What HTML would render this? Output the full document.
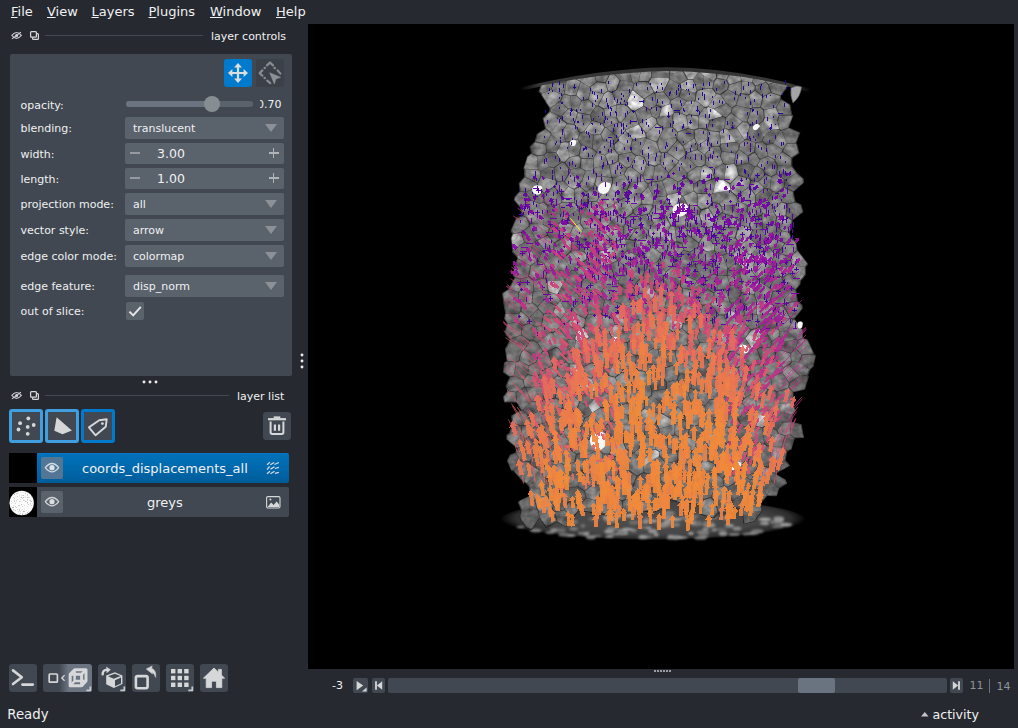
<!DOCTYPE html>
<html lang="en">
<head>
<meta charset="utf-8">
<title>napari</title>
<style>
*{box-sizing:border-box;margin:0;padding:0}
html,body{width:1018px;height:728px;overflow:hidden;background:#262930}
body{position:relative;font-family:"DejaVu Sans","Liberation Sans",sans-serif;color:#f0f1f2;font-size:11px;-webkit-font-smoothing:antialiased}
.abs{position:absolute}
.t{position:absolute;white-space:nowrap;line-height:1;margin-top:1px}
.menu{font-size:13px;top:4px}
.menu u{text-decoration:underline;text-underline-offset:0.6px;text-decoration-thickness:1px}
.panel{position:absolute;left:10px;top:54px;width:282px;height:322px;background:#414851;border-radius:2px}
.lbl{font-size:11px;left:20px}
.combo{position:absolute;left:125px;width:159px;height:22px;background:#5a626c;border-radius:2px}
.combo .t{left:8px;top:5px;font-size:11px}
.combo svg{position:absolute;left:140px;top:7px}
.spin{position:absolute;left:125px;width:159px;height:21px;background:#5a626c;border-radius:2px}
.spin .t{left:32px;top:4px;font-size:12.5px}
.btn{position:absolute;width:28px;height:28px;background:#414851;border-radius:3px}
.lbtn{position:absolute;top:409px;width:34px;height:34px;background:#414851;border:3px solid #3f9fe0;border-radius:3px}
.row{position:absolute;left:37px;width:252px;height:30px;border-radius:0 2px 2px 0}
.thumb{position:absolute;left:9px;width:28px;height:30px;background:#000}
.vis{position:absolute;left:4px;top:4px;width:22px;height:22px;border-radius:2px;background:#5a626c}
.lname{font-size:13px;top:8px}
svg{display:block;overflow:visible}
</style>
</head>
<body>
<!-- menu bar -->
<div class="t menu" style="left:11px"><u>F</u>ile</div>
<div class="t menu" style="left:47px"><u>V</u>iew</div>
<div class="t menu" style="left:91.5px"><u>L</u>ayers</div>
<div class="t menu" style="left:148.5px"><u>P</u>lugins</div>
<div class="t menu" style="left:210px"><u>W</u>indow</div>
<div class="t menu" style="left:276px"><u>H</u>elp</div>

<!-- ===== layer controls title bar ===== -->
<svg class="abs" style="left:11px;top:31px" width="12" height="10" viewBox="0 0 12 10">
  <path d="M0.8 4.45 Q5.6 -1.4 10.4 4.45 Q5.6 10.3 0.8 4.45Z" fill="none" stroke="#c9cacd" stroke-width="1.05"/>
  <circle cx="5.6" cy="4.45" r="1.55" fill="#d6d7d9"/>
  <path d="M0.9 7.9 L10 1.1" stroke="#d0d1d4" stroke-width="1.15"/>
</svg>
<svg class="abs" style="left:29px;top:30px" width="11" height="11" viewBox="0 0 11 11">
  <rect x="3.6" y="3.7" width="5.8" height="5.7" rx="0.9" fill="none" stroke="#d6d7da" stroke-width="1.25"/>
  <rect x="1.6" y="1.5" width="5.8" height="5.7" rx="0.9" fill="#262930" stroke="#d6d7da" stroke-width="1.25"/>
</svg>
<div class="abs" style="left:45px;top:35px;width:158px;height:1px;background:#414851"></div>
<div class="t" style="left:211px;top:30px;font-size:11px">layer controls</div>

<!-- ===== layer controls panel ===== -->
<div class="panel">
  <!-- mode buttons -->
  <div class="btn" style="left:214px;top:5px;background:#007acc">
    <svg width="28" height="28" viewBox="0 0 28 28"><g fill="#dcdde0">
      <path d="M14 4 L18 8.4 L15.1 8.4 L15.1 12.9 L19.6 12.9 L19.6 10 L24 14 L19.6 18 L19.6 15.1 L15.1 15.1 L15.1 19.6 L18 19.6 L14 24 L10 19.6 L12.9 19.6 L12.9 15.1 L8.4 15.1 L8.4 18 L4 14 L8.4 10 L8.4 12.9 L12.9 12.9 L12.9 8.4 L10 8.4Z"/>
    </g></svg>
  </div>
  <div class="btn" style="left:246px;top:5px;background:#3b4049">
    <svg width="28" height="28" viewBox="0 0 28 28">
      <g fill="none" stroke="#878b92" stroke-width="2.2" stroke-linecap="round" stroke-linejoin="round">
        <path d="M11 6.4 L14 3.5 L17 6.4"/><path d="M6.4 11.4 L3.6 14.1 L6.4 16.8"/>
        <path d="M21.6 11.4 L24.4 14.6"/><path d="M11.2 21.6 L14.2 24.2"/>
      </g>
      <g fill="#878b92"><circle cx="8.7" cy="8.9" r="1.25"/><circle cx="18.7" cy="8.9" r="1.25"/><circle cx="8.7" cy="19.1" r="1.25"/></g>
      <path d="M13.7 13.8 L24.6 18.3 L19.9 19.9 L18.3 25Z" fill="#8c9097" stroke="#8c9097" stroke-width=".6" stroke-linejoin="round"/>
    </svg>
  </div>

  <!-- opacity -->
  <div class="t lbl" style="left:10.5px;top:45px">opacity:</div>
  <div class="abs" style="left:116px;top:47px;width:127px;height:6px;border-radius:3px;background:#5a626c"></div>
  <div class="abs" style="left:116px;top:47px;width:86px;height:6px;border-radius:3px;background:#6a7380"></div>
  <div class="abs" style="left:194px;top:42px;width:16px;height:16px;border-radius:8px;background:#868e93"></div>
  <div class="abs" style="left:250px;top:43px;width:22px;height:14px;overflow:hidden"><div class="t" style="right:0.5px;top:1px;font-size:11px">0.70</div></div>

  <!-- blending -->
  <div class="t lbl" style="left:10.5px;top:68px">blending:</div>
  <div class="combo" style="left:115px;top:63px"><div class="t">translucent</div><svg width="12" height="8" viewBox="0 0 12 8"><path d="M0 0H12L6 8Z" fill="#8b9197"/></svg></div>

  <!-- width -->
  <div class="t lbl" style="left:10.5px;top:94px">width:</div>
  <div class="spin" style="left:115px;top:89px"><div class="t">3.00</div>
    <div class="abs" style="left:5px;top:9px;width:10px;height:1.8px;background:#959aa0"></div>
    <div class="abs" style="left:143.5px;top:8.9px;width:10px;height:1.7px;background:#b0b4b9"></div>
    <div class="abs" style="left:147.65px;top:4.75px;width:1.7px;height:10px;background:#b0b4b9"></div>
  </div>

  <!-- length -->
  <div class="t lbl" style="left:10.5px;top:119px">length:</div>
  <div class="spin" style="left:115px;top:114px"><div class="t">1.00</div>
    <div class="abs" style="left:5px;top:9px;width:10px;height:1.8px;background:#959aa0"></div>
    <div class="abs" style="left:143.5px;top:8.9px;width:10px;height:1.7px;background:#b0b4b9"></div>
    <div class="abs" style="left:147.65px;top:4.75px;width:1.7px;height:10px;background:#b0b4b9"></div>
  </div>

  <!-- projection mode -->
  <div class="t lbl" style="left:10.5px;top:144px">projection mode:</div>
  <div class="combo" style="left:115px;top:139px"><div class="t">all</div><svg width="12" height="8" viewBox="0 0 12 8"><path d="M0 0H12L6 8Z" fill="#8b9197"/></svg></div>

  <!-- vector style -->
  <div class="t lbl" style="left:10.5px;top:170px">vector style:</div>
  <div class="combo" style="left:115px;top:165px"><div class="t">arrow</div><svg width="12" height="8" viewBox="0 0 12 8"><path d="M0 0H12L6 8Z" fill="#8b9197"/></svg></div>

  <!-- edge color mode -->
  <div class="t lbl" style="left:10.5px;top:196px">edge color mode:</div>
  <div class="combo" style="left:115px;top:191px"><div class="t">colormap</div><svg width="12" height="8" viewBox="0 0 12 8"><path d="M0 0H12L6 8Z" fill="#8b9197"/></svg></div>

  <!-- edge feature -->
  <div class="t lbl" style="left:10.5px;top:226px">edge feature:</div>
  <div class="combo" style="left:115px;top:221px"><div class="t">disp_norm</div><svg width="12" height="8" viewBox="0 0 12 8"><path d="M0 0H12L6 8Z" fill="#8b9197"/></svg></div>

  <!-- out of slice -->
  <div class="t lbl" style="left:10.5px;top:251px">out of slice:</div>
  <div class="abs" style="left:116px;top:248px;width:18px;height:18px;border-radius:2px;background:#5a626c">
    <svg width="18" height="18" viewBox="0 0 18 18"><path d="M3.4 9.6 L7.2 13.4 L14.8 4.8" fill="none" stroke="#e4e5e7" stroke-width="2"/></svg>
  </div>
</div>

<!-- dock splitter handles -->
<svg class="abs" style="left:300px;top:353px" width="4" height="16" viewBox="0 0 4 16"><g fill="#eeeeef"><circle cx="2" cy="2" r="1.45"/><circle cx="2" cy="8" r="1.45"/><circle cx="2" cy="14" r="1.45"/></g></svg>
<svg class="abs" style="left:142px;top:380px" width="16" height="4" viewBox="0 0 16 4"><g fill="#eeeeef"><circle cx="2" cy="2" r="1.45"/><circle cx="8" cy="2" r="1.45"/><circle cx="14" cy="2" r="1.45"/></g></svg>

<!-- ===== layer list title bar ===== -->
<svg class="abs" style="left:11px;top:391px" width="12" height="10" viewBox="0 0 12 10">
  <path d="M0.8 4.45 Q5.6 -1.4 10.4 4.45 Q5.6 10.3 0.8 4.45Z" fill="none" stroke="#c9cacd" stroke-width="1.05"/>
  <circle cx="5.6" cy="4.45" r="1.55" fill="#d6d7d9"/>
  <path d="M0.9 7.9 L10 1.1" stroke="#d0d1d4" stroke-width="1.15"/>
</svg>
<svg class="abs" style="left:29px;top:390px" width="11" height="11" viewBox="0 0 11 11">
  <rect x="3.6" y="3.7" width="5.8" height="5.7" rx="0.9" fill="none" stroke="#d6d7da" stroke-width="1.25"/>
  <rect x="1.6" y="1.5" width="5.8" height="5.7" rx="0.9" fill="#262930" stroke="#d6d7da" stroke-width="1.25"/>
</svg>
<div class="abs" style="left:45px;top:395px;width:184px;height:1px;background:#414851"></div>
<div class="t" style="left:237px;top:390px;font-size:11px">layer list</div>

<!-- new-layer buttons -->
<div class="lbtn" style="left:9px">
  <svg width="28" height="28" viewBox="0 0 28 28" style="margin:0"><g fill="#d6d7d9">
    <circle cx="16.3" cy="6.4" r="1.9"/><circle cx="8.1" cy="11.2" r="1.9"/><circle cx="21.7" cy="13" r="1.9"/>
    <circle cx="15.7" cy="14.9" r="1.9"/><circle cx="6.5" cy="17.5" r="1.9"/><circle cx="15.7" cy="21.8" r="1.9"/>
  </g></svg>
</div>
<div class="lbtn" style="left:45px">
  <svg width="28" height="28" viewBox="0 0 28 28"><path d="M8.6 5.2 L23.9 18.4 L14.5 22.2 L6.3 18.8Z" fill="#d6d7d9"/></svg>
</div>
<div class="lbtn" style="left:81px;border-color:#007acc">
  <svg width="28" height="28" viewBox="0 0 28 28">
    <path d="M4.9 15.4 L15.2 8.3 L22.7 7.3 L21.7 14.8 L11.6 23.3Z" fill="none" stroke="#d6d7d9" stroke-width="1.9" stroke-linejoin="round"/>
    <circle cx="18.4" cy="11.6" r="1.4" fill="#d6d7d9"/>
  </svg>
</div>
<!-- delete button -->
<div class="btn" style="left:263px;top:412px">
  <svg width="28" height="28" viewBox="0 0 28 28">
    <path d="M5 7.2 H23" stroke="#d6d7d9" stroke-width="2.2"/>
    <path d="M10.7 5.4 H17.3" stroke="#d6d7d9" stroke-width="2"/>
    <path d="M7.6 9.6 V20.2 Q7.6 21.9 9.3 21.9 H18.7 Q20.4 21.9 20.4 20.2 V9.6" fill="none" stroke="#d6d7d9" stroke-width="2"/>
    <path d="M11.9 12.4 V18.8 M16.1 12.4 V18.8" stroke="#d6d7d9" stroke-width="2.2"/>
  </svg>
</div>

<!-- ===== layer rows ===== -->
<div class="thumb" style="top:453px"></div>
<div class="row" style="top:453px;background:linear-gradient(#0a79c8 0,#0071ba 5%,#0067aa 55%,#005c99 100%)">
  <div class="vis" style="background:#527694"><svg width="22" height="22" viewBox="0 0 22 22">
    <path d="M4.3 10.7 Q11 2.3 17.7 10.7 Q11 19.1 4.3 10.7Z" fill="none" stroke="#d3dbe3" stroke-width="1.35" stroke-linejoin="round"/>
    <circle cx="11" cy="10.7" r="2.6" fill="#dfe3e8"/></svg></div>
  <div class="t lname" style="left:45px">coords_displacements_all</div>
  <svg class="abs" style="left:229px;top:8px" width="14" height="14" viewBox="0 0 14 14"><g stroke="#d5dde6" stroke-width="1.25" fill="none">
    <path d="M1 3.7 L4 1.1 M4.3 3.7 L8.2 1.5 M8.5 3.5 L12.9 1.5"/>
    <path d="M1 8.6 L3.6 5.5 M4.5 8.1 L8.5 5.7 M8.9 7.5 L12.9 6.4"/>
    <path d="M1 12.8 L4 10.3 M4.5 12.8 L8.5 10.3 M8.9 12.3 L12.9 11.4"/>
  </g></svg>
</div>
<div class="thumb" style="top:487px">
  <svg width="28" height="30" viewBox="0 0 28 30"><defs><filter id="tn" x="0" y="0" width="1" height="1"><feTurbulence type="fractalNoise" baseFrequency="0.75" numOctaves="2" seed="5" result="n"/><feColorMatrix in="n" type="matrix" values="0 0 0 0 .45  0 0 0 0 .45  0 0 0 0 .45  5 0 0 0 -2.75"/><feComposite in2="SourceGraphic" operator="in"/></filter></defs>
    <circle cx="12.7" cy="16" r="12.2" fill="#fcfcfc"/><circle cx="12.7" cy="16" r="12.2" fill="#fff" filter="url(#tn)"/></svg>
</div>
<div class="row" style="top:487px;background:#414851">
  <div class="vis"><svg width="22" height="22" viewBox="0 0 22 22">
    <path d="M4.3 10.7 Q11 2.3 17.7 10.7 Q11 19.1 4.3 10.7Z" fill="none" stroke="#d2d4d7" stroke-width="1.35" stroke-linejoin="round"/>
    <circle cx="11" cy="10.7" r="2.6" fill="#dcdddf"/></svg></div>
  <div class="t lname" style="left:110px">greys</div>
  <svg class="abs" style="left:229px;top:9px" width="15" height="13" viewBox="0 0 15 13">
    <rect x="0.6" y="0.6" width="13.4" height="11.4" rx="1.4" fill="none" stroke="#d6d7d9" stroke-width="1.1"/>
    <path d="M1.6 11 L5.2 6.6 L7.6 9 L10.6 5.4 L13.2 8.4 V11Z" fill="#d6d7d9"/><circle cx="4.4" cy="3.6" r="1" fill="#d6d7d9"/>
  </svg>
</div>

<!-- ===== viewer buttons ===== -->
<div class="btn" style="left:9px;top:664px">
  <svg width="28" height="28" viewBox="0 0 28 28"><path d="M4 6.4 L12.8 13.2 L4 20" fill="none" stroke="#d6d7d9" stroke-width="2.6" stroke-linecap="round" stroke-linejoin="round"/><path d="M13.4 20.6 H23.8" stroke="#d6d7d9" stroke-width="2.6" stroke-linecap="round"/></svg>
</div>
<div class="btn" style="left:43px;top:664px;width:49px;background:linear-gradient(90deg,#414851 0,#414851 33%,#6a7380 52%,#6a7380 100%)">
  <svg width="49" height="28" viewBox="0 0 49 28">
    <rect x="6.2" y="10" width="8.2" height="8.2" rx="0.8" fill="none" stroke="#d6d7d9" stroke-width="1.7"/>
    <path d="M21.6 11.2 L18.8 14 L21.6 16.8" fill="none" stroke="#d6d7d9" stroke-width="1.3"/>
    <g fill="none" stroke="#d6d7d9" stroke-width="3" stroke-linejoin="round">
      <path d="M27.2 10.2 L31.6 5.8 H43 V17 L38.6 21.8 H27.2Z"/>
      <path d="M27.2 10.2 H38.6 V21.8 M38.6 10.2 L43 5.8"/>
      <path d="M31.6 5.8 V17 H43 M31.6 17 L27.2 21.8" stroke-width="2.5"/>
    </g>
    <path d="M47.3 22.4 V26.3 H43.3" fill="none" stroke="#c4c7cb" stroke-width="1.8"/>
  </svg>
</div>
<div class="btn" style="left:98px;top:664px">
  <svg width="28" height="28" viewBox="0 0 28 28">
    <path d="M8.2 11.6 L16.8 8.2 L24.4 11.4 V20 L15.8 24 L8.2 20.2Z" fill="#d6d7d9"/>
    <path d="M10 12.2 L16.8 9.8 L22.6 12 L15.8 14.8Z" fill="#414851"/>
    <path d="M17 16.2 L23 13.6 V19.4 L17 22.2Z" fill="#414851"/>
    <path d="M3.6 11.4 Q3 5.2 8.6 4.6 L8 2.4 L12.8 5.8 L8.6 9.2 L8.6 7 Q5.6 7 5.8 11.2Z" fill="#d6d7d9"/>
    <path d="M26.3 22.4 V26.3 H22.3" fill="none" stroke="#c4c7cb" stroke-width="1.8"/>
  </svg>
</div>
<div class="btn" style="left:132px;top:664px">
  <svg width="28" height="28" viewBox="0 0 28 28">
    <rect x="3.9" y="12.1" width="11.7" height="12.2" rx="1.7" fill="none" stroke="#d6d7d9" stroke-width="2.6"/>
    <path d="M14.2 5 L20.2 1.9 L19.7 4.2 Q24.6 6.4 23.7 13.4 Q22 9 19.8 8 L20.6 10Z" fill="#d6d7d9" stroke="#d6d7d9" stroke-width=".5" stroke-linejoin="round"/>
  </svg>
</div>
<div class="btn" style="left:166px;top:664px">
  <svg width="28" height="28" viewBox="0 0 28 28"><g fill="#d6d7d9">
    <rect x="5" y="5" width="4.4" height="4.4"/><rect x="11.6" y="5" width="4.4" height="4.4"/><rect x="18.2" y="5" width="4.4" height="4.4"/>
    <rect x="5" y="11.8" width="4.4" height="4.4"/><rect x="11.6" y="11.8" width="4.4" height="4.4"/><rect x="18.2" y="11.8" width="4.4" height="4.4"/>
    <rect x="5" y="18.6" width="4.4" height="4.4"/><rect x="11.6" y="18.6" width="4.4" height="4.4"/><rect x="18.2" y="18.6" width="4.4" height="4.4"/>
    <path d="M26.3 22.4 V26.3 H22.3" fill="none" stroke="#c4c7cb" stroke-width="1.8"/></g></svg>
</div>
<div class="btn" style="left:200px;top:664px">
  <svg width="28" height="28" viewBox="0 0 28 28"><path d="M14 4 L18.4 8.2 V5.4 H21.4 V11 L24.6 14.2 H21.8 V23.6 H16.4 V17.2 H11.6 V23.6 H6.2 V14.2 H3.4Z" fill="#d6d7d9" stroke="#d6d7d9" stroke-width="0.8" stroke-linejoin="round"/></svg>
</div>

<!-- status bar -->
<div class="t" style="left:7.3px;top:707px;font-size:13.3px">Ready</div>

<div class="abs" style="left:308px;top:24px;width:706px;height:645px;background:#000;overflow:hidden">
<svg width="706" height="645" viewBox="308 24 706 645">
<defs>
<radialGradient id="dg" cx="50%" cy="45%" r="50%"><stop offset="0" stop-color="#505050"/><stop offset=".72" stop-color="#454545"/><stop offset=".9" stop-color="#2e2e2e"/><stop offset="1" stop-color="#000"/></radialGradient>
<linearGradient id="rimL" x1="0" x2="1"><stop offset="0" stop-color="#000"/><stop offset=".5" stop-color="#555"/><stop offset="1" stop-color="#8a8a8a"/></linearGradient>
<linearGradient id="rimR" x1="1" x2="0"><stop offset="0" stop-color="#000"/><stop offset=".45" stop-color="#5a5a5a"/><stop offset="1" stop-color="#666"/></linearGradient>
<filter id="b1" x="-5%" y="-5%" width="110%" height="110%"><feGaussianBlur stdDeviation=".7"/></filter>
<filter id="b3" x="-5%" y="-20%" width="110%" height="140%"><feGaussianBlur stdDeviation=".8"/></filter>
<filter id="b2" x="-5%" y="-5%" width="110%" height="110%"><feGaussianBlur stdDeviation="1.7"/></filter>
<filter id="b0" x="-2%" y="-2%" width="104%" height="104%" color-interpolation-filters="sRGB"><feGaussianBlur stdDeviation=".6" result="s"/><feTurbulence type="fractalNoise" baseFrequency=".11 .13" numOctaves="3" seed="11" result="n"/><feColorMatrix in="n" type="matrix" values=".33 .33 .33 0 0  .33 .33 .33 0 0  .33 .33 .33 0 0  0 0 0 0 1" result="g"/><feComposite in="s" in2="g" operator="arithmetic" k1="1.5" k2=".25" k3="0" k4="0"/></filter>
<clipPath id="sc"><path d="M537 88L538 110L538 128L533 142L532 160L525 176L519 191L514 205L512 225L511 245L509 274L504.6 290L503 317L504.6 349L505.5 379L509.5 408L507.5 428L509.5 451L511.4 459L518.3 489L522 503L514 514L518 523L529 526L545 523L575 518L610 513L650 510L700 510L735 514L746 521L752 530L758 526L762 514L769 508.6L779.8 489L785.7 469.3L792 451L801.5 427.9L803.4 404.3L800.5 388.6L807.3 369L806.4 329.6L805.4 321.5L804.4 307.7L798.5 290L801.5 274.3L807.3 254.7L800.5 233L795.6 209.5L796.5 191L795.6 160L793.2 128.6L790.6 107L794 96L797 88L793 81.7L770 77L735 72.3L700 70L667 69.2L630 70.3L600 73L570 77L541 81.7Z"/></clipPath>
<clipPath id="tc"><path d="M470 94 L522 89.4 Q600 72.4 667 71 Q740 71.9 809 90.9 L850 94 V570 H470Z"/></clipPath>
<linearGradient id="band" gradientUnits="userSpaceOnUse" x1="520" x2="811"><stop offset="0" stop-color="#000"/><stop offset=".07" stop-color="#3a3a3a"/><stop offset=".5" stop-color="#303030"/><stop offset=".93" stop-color="#3a3a3a"/><stop offset="1" stop-color="#000"/></linearGradient>
</defs>
<!-- bottom platen slice -->
<ellipse cx="653" cy="520.5" rx="153" ry="22" fill="url(#dg)"/>
<g filter="url(#b3)"><ellipse cx="703.1" cy="532.4" rx="6.3" ry="2.2" fill="#7e7e7e"/><ellipse cx="777.2" cy="523.6" rx="3.3" ry="1" fill="#a1a1a1"/><ellipse cx="646.2" cy="536.6" rx="5.5" ry="1.9" fill="#6f6f6f"/><ellipse cx="696.4" cy="524.3" rx="6.4" ry="1.5" fill="#8a8a8a"/><ellipse cx="596.9" cy="535.7" rx="4.6" ry="1.1" fill="#717171"/><ellipse cx="737" cy="528.6" rx="4.5" ry="2.1" fill="#888888"/><ellipse cx="786" cy="524.6" rx="6.4" ry="1.9" fill="#8f8f8f"/><ellipse cx="668.7" cy="513.3" rx="6" ry="2.3" fill="#959595"/><ellipse cx="643.2" cy="527.5" rx="3.9" ry="1.3" fill="#727272"/><ellipse cx="675.6" cy="537.9" rx="3" ry="1.5" fill="#6f6f6f"/><ellipse cx="720.5" cy="529.4" rx="6.4" ry="1.1" fill="#6f6f6f"/><ellipse cx="672.2" cy="538.1" rx="6" ry="1.5" fill="#6e6e6e"/><ellipse cx="662.3" cy="518.1" rx="5.4" ry="1.4" fill="#727272"/><ellipse cx="653.2" cy="520.9" rx="4.4" ry="1.5" fill="#a2a2a2"/><ellipse cx="773.9" cy="522.2" rx="3.6" ry="1.9" fill="#818181"/><ellipse cx="609.1" cy="537" rx="4.2" ry="1.1" fill="#696969"/><ellipse cx="611.9" cy="528.8" rx="5.4" ry="2" fill="#828282"/><ellipse cx="693.7" cy="518.2" rx="2.7" ry="1.4" fill="#7c7c7c"/><ellipse cx="714.2" cy="529.8" rx="2.6" ry="1.4" fill="#959595"/><ellipse cx="569.9" cy="535.4" rx="5.9" ry="1.4" fill="#9e9e9e"/><ellipse cx="695.4" cy="522.4" rx="5.5" ry="1.7" fill="#959595"/><ellipse cx="535.7" cy="530.3" rx="5.9" ry="1.9" fill="#828282"/><ellipse cx="572.5" cy="521.9" rx="5.7" ry="2.2" fill="#787878"/><ellipse cx="606.4" cy="517.8" rx="3.7" ry="2.3" fill="#8f8f8f"/><ellipse cx="725.5" cy="518.1" rx="3.7" ry="1.8" fill="#8d8d8d"/><ellipse cx="673.9" cy="536.6" rx="5" ry="1.7" fill="#727272"/><ellipse cx="613.7" cy="528.6" rx="5" ry="1.6" fill="#7d7d7d"/><ellipse cx="609.9" cy="536" rx="3.6" ry="1.1" fill="#9e9e9e"/><ellipse cx="705.6" cy="525" rx="2.7" ry="1.2" fill="#909090"/><ellipse cx="563.7" cy="534.5" rx="5.6" ry="2" fill="#6e6e6e"/><ellipse cx="585.8" cy="534" rx="3.3" ry="1.9" fill="#838383"/><ellipse cx="586.6" cy="533.1" rx="3" ry="1.1" fill="#a2a2a2"/><ellipse cx="622.7" cy="530.6" rx="4.8" ry="1.4" fill="#a1a1a1"/><ellipse cx="661.4" cy="525.2" rx="4.3" ry="2.2" fill="#9e9e9e"/><ellipse cx="723" cy="533.5" rx="4.2" ry="2.3" fill="#919191"/><ellipse cx="709.9" cy="525.3" rx="5.4" ry="2.1" fill="#9b9b9b"/><ellipse cx="591.3" cy="519.1" rx="2.6" ry="1.3" fill="#777777"/><ellipse cx="764.9" cy="519.2" rx="6.3" ry="1.8" fill="#a1a1a1"/><ellipse cx="649.8" cy="536.8" rx="3.6" ry="1.1" fill="#6c6c6c"/><ellipse cx="647.4" cy="519.5" rx="3.9" ry="2.2" fill="#737373"/><ellipse cx="622.3" cy="533.2" rx="6.2" ry="1.7" fill="#999999"/><ellipse cx="633.7" cy="530.3" rx="3" ry="1.9" fill="#828282"/><ellipse cx="684.3" cy="517.7" rx="4.1" ry="1.3" fill="#818181"/><ellipse cx="694.9" cy="516.2" rx="4.3" ry="1.3" fill="#767676"/><ellipse cx="630.2" cy="515.8" rx="5.9" ry="1.8" fill="#a3a3a3"/><ellipse cx="643.3" cy="537.3" rx="5.7" ry="1.3" fill="#888888"/><ellipse cx="664.8" cy="525.9" rx="6.4" ry="1.6" fill="#727272"/><ellipse cx="652.7" cy="531.2" rx="4.5" ry="2.1" fill="#949494"/><ellipse cx="689.2" cy="519.8" rx="4.5" ry="1.4" fill="#a0a0a0"/><ellipse cx="555.8" cy="530" rx="5.8" ry="2" fill="#8b8b8b"/><ellipse cx="621.4" cy="532.2" rx="4" ry="1.6" fill="#757575"/><ellipse cx="765.5" cy="523.3" rx="3.5" ry="1.9" fill="#969696"/><ellipse cx="778.6" cy="518.4" rx="5.2" ry="2.1" fill="#8b8b8b"/><ellipse cx="582.8" cy="525.9" rx="2.5" ry="1.8" fill="#737373"/><ellipse cx="669.1" cy="520.3" rx="4.9" ry="1.6" fill="#929292"/><ellipse cx="639.5" cy="522.6" rx="4.1" ry="1.1" fill="#787878"/><ellipse cx="709.5" cy="523.7" rx="4.8" ry="1.7" fill="#868686"/><ellipse cx="645.8" cy="521.8" rx="3.1" ry="2" fill="#919191"/><ellipse cx="777.7" cy="526.7" rx="5.7" ry="1.1" fill="#7c7c7c"/><ellipse cx="700.5" cy="538" rx="6.4" ry="1.6" fill="#828282"/><ellipse cx="648.5" cy="527.9" rx="3" ry="1.4" fill="#9a9a9a"/><ellipse cx="581.2" cy="533.3" rx="3.5" ry="1.3" fill="#828282"/><ellipse cx="573.6" cy="528.8" rx="4.5" ry="1.9" fill="#797979"/><ellipse cx="590.9" cy="537.2" rx="4.8" ry="2.1" fill="#7f7f7f"/><ellipse cx="752.3" cy="533.5" rx="6.4" ry="1.4" fill="#919191"/><ellipse cx="682.2" cy="537.4" rx="5.4" ry="1.3" fill="#828282"/><ellipse cx="662.4" cy="526" rx="5.1" ry="1.7" fill="#868686"/><ellipse cx="616.8" cy="517.1" rx="4.4" ry="1.4" fill="#929292"/><ellipse cx="757.3" cy="531.2" rx="6.2" ry="2.3" fill="#767676"/><ellipse cx="712.8" cy="517.8" rx="5.2" ry="1.8" fill="#707070"/><ellipse cx="656.2" cy="534.7" rx="2.6" ry="1.9" fill="#939393"/><ellipse cx="763.4" cy="523.4" rx="3.5" ry="1.3" fill="#989898"/><ellipse cx="705.6" cy="529.1" rx="3.2" ry="1.1" fill="#a0a0a0"/><ellipse cx="676.4" cy="537.2" rx="4.2" ry="2.1" fill="#8a8a8a"/><ellipse cx="550" cy="532.5" rx="4.4" ry="1.2" fill="#818181"/><ellipse cx="666.7" cy="517.3" rx="5.5" ry="1.2" fill="#949494"/><ellipse cx="627.4" cy="529.2" rx="5.7" ry="1.5" fill="#a2a2a2"/><ellipse cx="670.8" cy="536.5" rx="3.3" ry="1.8" fill="#999999"/><ellipse cx="612.3" cy="518.1" rx="6.3" ry="2.3" fill="#a2a2a2"/><ellipse cx="611.1" cy="521.4" rx="6" ry="1.2" fill="#8f8f8f"/><ellipse cx="703.5" cy="535.9" rx="5.4" ry="1.1" fill="#777777"/><ellipse cx="746.4" cy="534" rx="3.9" ry="1.3" fill="#7c7c7c"/><ellipse cx="633.8" cy="522.6" rx="4.8" ry="2" fill="#707070"/><ellipse cx="668.6" cy="513.3" rx="5.5" ry="1.2" fill="#747474"/><ellipse cx="680.3" cy="537.6" rx="2.8" ry="1.5" fill="#a2a2a2"/><ellipse cx="611.4" cy="531.4" rx="3.2" ry="1.2" fill="#717171"/><ellipse cx="595" cy="519.3" rx="4.4" ry="1.4" fill="#6e6e6e"/><ellipse cx="729.4" cy="525.6" rx="4.4" ry="1.9" fill="#979797"/><ellipse cx="734.2" cy="534.4" rx="5.5" ry="1.1" fill="#929292"/><ellipse cx="561" cy="530.1" rx="5.1" ry="2.2" fill="#6b6b6b"/><ellipse cx="690.9" cy="533.4" rx="2.8" ry="1.6" fill="#9f9f9f"/><ellipse cx="666.5" cy="523" rx="3.9" ry="1.4" fill="#9e9e9e"/><ellipse cx="698.1" cy="522.9" rx="3.3" ry="2.1" fill="#717171"/><ellipse cx="705.8" cy="523.7" rx="2.8" ry="1.8" fill="#848484"/><ellipse cx="608.9" cy="531.4" rx="4.5" ry="2" fill="#989898"/><ellipse cx="777.6" cy="522.9" rx="5.9" ry="1.2" fill="#6b6b6b"/><ellipse cx="520.7" cy="527" rx="4" ry="1.1" fill="#909090"/><ellipse cx="616.4" cy="516.6" rx="3.6" ry="1.9" fill="#9a9a9a"/><ellipse cx="675.7" cy="519.4" rx="6.4" ry="1.6" fill="#a0a0a0"/><ellipse cx="785.3" cy="524.5" rx="4.4" ry="1.5" fill="#9f9f9f"/><ellipse cx="707.1" cy="522.8" rx="4.1" ry="2.1" fill="#727272"/><ellipse cx="565.9" cy="525" rx="3.9" ry="1.1" fill="#777777"/><ellipse cx="670.5" cy="514.3" rx="4" ry="1.3" fill="#7c7c7c"/><ellipse cx="631.4" cy="514.6" rx="3.6" ry="2" fill="#a2a2a2"/><ellipse cx="616.1" cy="534.3" rx="4.6" ry="1" fill="#848484"/><ellipse cx="778.2" cy="519.9" rx="3.2" ry="2.1" fill="#6b6b6b"/><ellipse cx="779.1" cy="520.1" rx="5" ry="2.1" fill="#959595"/><ellipse cx="642.6" cy="536.9" rx="3.9" ry="2.1" fill="#969696"/><ellipse cx="674.9" cy="524.7" rx="5.2" ry="2.1" fill="#7c7c7c"/></g>
<!-- top rim -->
<path d="M520 87.4 Q600 68.4 667 67.2 Q740 68.1 811 89 L809 92 Q740 73 667 72 Q600 73.4 522 90.4Z" fill="url(#band)"/>
<path d="M791 88 Q797 84.6 801.5 87 Q801 96 793 103 Q790 96 791 88Z" fill="#a4a4a4" stroke="#555" stroke-width=".6"/>
<!-- body -->
<g clip-path="url(#tc)"><g filter="url(#b0)">
<path fill="#3f3f3f" stroke="#3f3f3f" stroke-width="1.2" stroke-linejoin="round" d="M637.4 57.6L632.3 69.2L629.7 71.1L622.5 65.6L625.5 54L626.5 53.1L633.3 54.4ZM637.4 57.6L632.3 69.2L641.3 68.6L647.6 61.2ZM649.1 61.1L651 66.4L669.7 74.4L669.8 67.6L663.8 61.2L650.1 60ZM669.7 74.4L669.8 74.5L683.1 70.6L687.8 61.7L686.1 58L678.4 58.7L669.8 67.6ZM542.3 83.3L551.7 78.2L550.5 71.3L542.8 72ZM551.7 78.2L553.6 82.4L566.1 81.8L570.5 76.2L569.2 72L563.8 68.3L554.2 67.6L550.5 71.3ZM593.3 65.6L577.6 63.2L569.2 72L570.5 76.2L580.4 81.4L593 66.8ZM593 66.8L580.4 81.4L580.4 81.5L589.8 87.1L596.6 82ZM593.9 65.2L609 69.4L611.3 71.6L605.7 83L596.6 82L593 66.8L593.3 65.6L593.8 65.2ZM629.7 71.1L622.5 65.6L612.1 71.6L619.9 79.9L632.5 82.2ZM629.7 71.1L632.3 69.2L641.3 68.6L638.5 81.8L633.9 83.6L632.5 82.2ZM648.2 81.8L638.5 81.8L641.3 68.6L647.6 61.2L649.1 61.1L651 66.4L651.2 77.5ZM651.2 77.5L651 66.4L669.7 74.4L669.8 74.5L669.4 77.9ZM669.7 78.9L679.7 83.9L688 79.6L683.1 70.6L669.8 74.5L669.4 77.9ZM693.1 79.7L688 79.6L683.1 70.6L687.8 61.7L699.1 69.8L699 71.2ZM716.9 71.6L705.7 64.7L699.1 69.8L699 71.2L703 75.1L713.7 81.5L716.6 78ZM732.4 68.9L726.4 80.2L716.6 78L716.9 71.6L722.4 67.5ZM728.7 85.2L726.4 80.2L732.4 68.9L733 68.7L737.2 69.9L739.6 72.8L741.4 80.9L741.4 80.9ZM739.6 72.8L756.7 69.4L752.3 82.4L741.4 80.9ZM756.7 69.4L752.3 82.4L755.2 86.2L765.9 82.2L766.3 72.5L757.7 68.5ZM765.9 82.2L766.3 72.5L771.4 70.6L775.1 72.1L779.6 79.8L768.1 84.6ZM791.1 81.2L787.8 85.5L779.6 79.8L775.1 72.1L785.8 67.3L794.1 71.4ZM541.6 93.7L550.8 89.6L553.6 82.4L551.7 78.2L542.3 83.3L539.1 91.5ZM563 95L550.8 89.6L553.6 82.4L566.1 81.8L564.3 94.2ZM564.3 94.2L570.5 95.8L575.8 95.3L580.4 81.5L580.4 81.4L570.5 76.2L566.1 81.8ZM581.8 100.8L588.4 99.2L590.6 90.3L589.8 87.1L580.4 81.5L575.8 95.3ZM608.3 91L605.7 83L596.6 82L589.8 87.1L590.6 90.3L604.1 93.7ZM619.9 79.9L616 90.1L611.9 92.6L608.3 91L605.7 83L611.3 71.6L612.1 71.6ZM632.5 82.2L633.9 83.6L632.6 89.6L631.7 90.5L616 90.1L619.9 79.9ZM654.7 92.6L644.3 99.1L632.6 89.6L633.9 83.6L638.5 81.8L648.2 81.8ZM654.8 92.6L663.4 91.7L669.7 78.9L669.4 77.9L651.2 77.5L648.2 81.8L654.7 92.6ZM669.7 78.9L679.7 83.9L680.9 88.8L678.7 96.5L670.4 100.5L663.4 91.7ZM680.9 88.8L696 93.2L697.3 90.6L693.1 79.7L688 79.6L679.7 83.9ZM697.3 90.6L693.1 79.7L699 71.2L703 75.1L704.4 88.7ZM712.7 88.3L713.7 81.5L703 75.1L704.4 88.7ZM728.7 85.2L726.4 80.2L716.6 78L713.7 81.5L712.7 88.3L716.6 93.7L720.4 94.2L727.6 89.3ZM728.7 85.2L741.4 80.9L741.1 93.8L739 95.4L727.6 89.3ZM741.1 93.8L748.7 94.9L755 90L755.2 86.2L752.3 82.4L741.4 80.9L741.4 80.9ZM755 90L755.2 86.2L765.9 82.2L768.1 84.6L770.9 92.5L762.9 96.9ZM780.2 95.7L770.9 92.5L768.1 84.6L779.6 79.8L787.8 85.5L787.8 85.8ZM541.9 95.3L550.2 108.5L560.7 101L563 95L550.8 89.6L541.6 93.7ZM563 95L560.7 101L568.4 109.1L571.4 109.1L570.5 95.8L564.3 94.2ZM570.5 95.8L575.8 95.3L581.8 100.8L577.3 111.2L571.4 109.1ZM598 105.9L596.5 106L588.4 99.2L590.6 90.3L604.1 93.7ZM603.9 109.3L598 105.9L604.1 93.7L608.3 91L611.9 92.6L617.1 104.6L616.9 104.8ZM611.9 92.6L616 90.1L631.7 90.5L625.9 104.3L617.1 104.6ZM631.7 90.5L625.9 104.3L631.5 110.1L634.8 111.2L643.5 106.2L644.3 99.1L632.6 89.6ZM654.8 92.6L656.3 105.3L649.6 109.9L643.5 106.2L644.3 99.1L654.7 92.6ZM654.8 92.6L656.3 105.3L661.5 106.9L670.1 103.7L670.4 100.5L663.4 91.7ZM678.7 96.5L687.1 100.9L678.6 112.3L674.3 112.5L670.1 103.7L670.4 100.5ZM680.9 88.8L696 93.2L695.2 100.5L694.9 100.7L687.1 100.9L678.7 96.5ZM696 93.2L695.2 100.5L704.3 107.2L706.7 107.4L707.9 106.9L716.6 93.7L712.7 88.3L704.4 88.7L697.3 90.6ZM707.9 106.9L713.2 109L726.5 103.1L720.4 94.2L716.6 93.7ZM727.6 89.3L720.4 94.2L726.5 103.1L732.1 108.1L735.9 105.3L739 95.4ZM739 95.4L735.9 105.3L751.3 108.8L753 107.7L748.7 94.9L741.1 93.8ZM755 90L762.9 96.9L760.5 107.5L753 107.7L748.7 94.9ZM780.8 99.5L776 107.3L763.4 109.9L760.5 107.5L762.9 96.9L770.9 92.5L780.2 95.7ZM549.9 111.4L560.7 116.8L568.4 109.1L560.7 101L550.2 108.5ZM562.3 119.8L560.7 116.8L568.4 109.1L571.4 109.1L577.3 111.2L577.8 112.4L574.4 124.5L567 123.5ZM577.3 111.2L577.8 112.4L590.3 114.9L596.5 106L588.4 99.2L581.8 100.8ZM603.9 109.3L598 105.9L596.5 106L590.3 114.9L591.8 120.5L603.1 123.9L605 116.5ZM603.9 109.3L616.9 104.8L616.7 117L605 116.5ZM616.9 104.8L617.1 104.6L625.9 104.3L631.5 110.1L620.9 123L619.3 122.3L616.7 117ZM643.5 106.2L649.6 109.9L652.2 116.2L638.8 123.8L634.8 111.2ZM656.5 118.8L658.7 117.1L661.5 106.9L656.3 105.3L649.6 109.9L652.2 116.2ZM661.5 106.9L658.7 117.1L673.2 114.5L674.3 112.5L670.1 103.7ZM687.1 100.9L678.6 112.3L686.6 115.5L687.7 114.8L694.9 100.7ZM695.2 100.5L694.9 100.7L687.7 114.8L698.4 116L704.3 107.2ZM706.7 107.4L709.6 120.5L723.1 116.6L713.2 109L707.9 106.9ZM725.7 117.4L731.1 112.3L732.1 108.1L726.5 103.1L713.2 109L723.1 116.6ZM747.1 122.2L742.9 121.6L731.1 112.3L732.1 108.1L735.9 105.3L751.3 108.8ZM763 120.9L764.2 117.5L763.4 109.9L760.5 107.5L753 107.7L751.3 108.8L747.1 122.2L749.4 125.1L758.1 124.8ZM777.6 120.5L764.2 117.5L763.4 109.9L776 107.3L779.3 115.1ZM789.8 105L791.7 114.8L779.3 115.1L776 107.3L780.8 99.5ZM545.8 129L549.9 132.2L562.3 119.8L560.7 116.8L549.9 111.4L543.2 118.5ZM550.7 133.5L549.9 132.2L562.3 119.8L567 123.5L563.5 128.6ZM591.8 120.5L590.3 114.9L577.8 112.4L574.4 124.5L580.1 132.9L583.3 132ZM600.7 134.3L593.8 134.8L583.3 132L591.8 120.5L603.1 123.9L604.7 127.3ZM605 116.5L603.1 123.9L604.7 127.3L605.4 127.4L619.3 122.3L616.7 117ZM618.3 138.1L625.4 130.7L625.5 130.1L620.9 123L619.3 122.3L605.4 127.4ZM634.8 111.2L638.8 123.8L638.7 124.4L625.5 130.1L620.9 123L631.5 110.1ZM656.5 118.8L652.2 116.2L638.8 123.8L638.7 124.4L645.9 133.4L657.2 123ZM656.5 118.8L658.7 117.1L673.2 114.5L673 127.8L663.6 128.2L657.2 123ZM673 127.8L677.5 132.4L688.5 128.5L686.6 115.5L678.6 112.3L674.3 112.5L673.2 114.5ZM698.9 128.4L698.4 116L687.7 114.8L686.6 115.5L688.5 128.5L694.4 130.2ZM706.7 107.4L709.6 120.5L707.2 129.5L698.9 128.4L698.4 116L704.3 107.2ZM724.7 128.2L725.7 117.4L723.1 116.6L709.6 120.5L707.2 129.5L708.1 130.3L719.6 131.6ZM727.5 129.5L724.7 128.2L725.7 117.4L731.1 112.3L742.9 121.6L736.3 127.8ZM736.3 127.8L742.9 121.6L747.1 122.2L749.4 125.1L746.9 139.5L744.9 140.3ZM763.4 137.4L758.1 124.8L763 120.9L772.1 130ZM779.6 129.3L777.6 120.5L764.2 117.5L763 120.9L772.1 130ZM780.9 130.2L781.3 130.3L788.1 127.8L792.7 115.8L791.7 114.8L779.3 115.1L777.6 120.5L779.6 129.3ZM537.2 134.3L535.2 141.9L545.9 144.2L551.1 134.5L550.7 133.5L549.9 132.2L545.8 129ZM550.7 133.5L563.5 128.6L565.6 141.7L561.5 142.4L551.1 134.5ZM565.6 141.7L568.1 141.9L577.8 138.9L580.1 132.9L574.4 124.5L567 123.5L563.5 128.6ZM592.8 149.3L580.9 144.6L577.8 138.9L580.1 132.9L583.3 132L593.8 134.8ZM603.1 140.4L596.3 152.1L592.8 149.3L593.8 134.8L600.7 134.3ZM617.6 141L614.5 144.3L603.1 140.4L600.7 134.3L604.7 127.3L605.4 127.4L618.3 138.1ZM617.6 141L630.4 148L632.7 139.5L625.4 130.7L618.3 138.1ZM638.7 124.4L625.5 130.1L625.4 130.7L632.7 139.5L646.4 137.3L645.9 133.4ZM657.2 123L663.6 128.2L657 141.6L656.7 142L646.8 137.9L646.4 137.3L645.9 133.4ZM657 141.6L663.6 128.2L673 127.8L677.5 132.4L676.8 137.3ZM676.8 137.3L677.5 132.4L688.5 128.5L694.4 130.2L694.4 138L682.6 145.8L677.3 139.8ZM707.2 129.5L698.9 128.4L694.4 130.2L694.4 138L697.7 145.9L707.4 139.5L708.1 130.3ZM720.9 144.3L719.6 131.6L708.1 130.3L707.4 139.5L711.7 146.7L719.8 146.3ZM720.9 144.3L719.6 131.6L724.7 128.2L727.5 129.5L736.7 142.5ZM739.5 143.9L744.9 140.3L736.3 127.8L727.5 129.5L736.7 142.5ZM746.9 139.5L749.4 125.1L758.1 124.8L763.4 137.4L762.2 141.4L755.8 142.8ZM763.4 137.4L772.1 130L779.6 129.3L780.9 130.2L773 143.6L766 144.4L762.2 141.4ZM780.9 130.2L781.3 130.3L786.9 143.9L782.8 149.7L773 143.6ZM781.3 130.3L786.9 143.9L795.7 143.1L799.7 132.9L788.1 127.8ZM543.9 154.6L537.1 155.5L531.6 153.4L530.1 146.7L535.2 141.9L545.9 144.2L546.9 152.1ZM556.2 152.7L561.5 142.4L551.1 134.5L545.9 144.2L546.9 152.1ZM561.8 162.1L564.6 162.6L569 157.9L568.1 141.9L565.6 141.7L561.5 142.4L556.2 152.7ZM580.9 144.6L577.8 138.9L568.1 141.9L569 157.9L578.8 155.2ZM592.8 149.3L580.9 144.6L578.8 155.2L581 158.2L593.2 158.6L596.4 152.5L596.3 152.1ZM614.5 144.3L614.1 148.9L604.7 155.1L596.4 152.5L596.3 152.1L603.1 140.4ZM617.6 141L630.4 148L631.9 152.2L618.6 154.5L614.1 148.9L614.5 144.3ZM631.9 152.2L635.9 155.6L638.8 155.2L646.8 137.9L646.4 137.3L632.7 139.5L630.4 148ZM638.8 155.2L646.8 137.9L656.7 142L659.7 151.3L643.8 157.6ZM659.7 151.3L656.7 142L657 141.6L676.8 137.3L677.3 139.8L666.4 152.5L661.2 152.5ZM666.4 152.5L678.5 160.8L685.1 155.1L685.8 153.3L682.6 145.8L677.3 139.8ZM694.4 138L682.6 145.8L685.8 153.3L697.3 149.5L697.7 145.9ZM707.4 139.5L711.7 146.7L704.7 155.1L697.3 149.5L697.7 145.9ZM719.8 146.3L711.7 146.7L704.7 155.1L705.7 158.7L720.5 155.8L721.5 151.2ZM720.9 144.3L736.7 142.5L739.5 143.9L738.7 149.4L736.2 153L721.5 151.2L719.8 146.3ZM739.5 143.9L744.9 140.3L746.9 139.5L755.8 142.8L754.8 151.9L747.9 156L738.7 149.4ZM754.8 151.9L760.2 159.7L768 156.4L766 144.4L762.2 141.4L755.8 142.8ZM766 144.4L768 156.4L775 160L782.7 151.6L782.8 149.7L773 143.6ZM782.8 149.7L786.9 143.9L795.7 143.1L796.6 144.3L798.9 153L791.7 157.8L782.7 151.6ZM538.4 169.7L537.1 155.5L531.6 153.4L527.8 156.8L524 168.4L524.5 169.2ZM549.1 167.1L540.6 171.6L538.4 169.7L537.1 155.5L543.9 154.6ZM549.1 167.1L543.9 154.6L546.9 152.1L556.2 152.7L561.8 162.1L553.9 167.9ZM570.1 169.8L580.1 167.6L581 158.2L578.8 155.2L569 157.9L564.6 162.6ZM585.5 170.9L580.1 167.6L581 158.2L593.2 158.6L593.8 168.4L593.3 169.6ZM596.4 152.5L604.7 155.1L608.9 164.8L593.8 168.4L593.2 158.6ZM614.1 148.9L604.7 155.1L608.9 164.8L609.3 165.1L617.9 161.2L618.6 154.5ZM631.9 152.2L635.9 155.6L630.1 166.8L627.1 168.2L617.9 161.2L618.6 154.5ZM643.1 176.2L630.1 166.8L635.9 155.6L638.8 155.2L643.8 157.6L646.7 163.5ZM646.7 163.5L643.8 157.6L659.7 151.3L661.2 152.5L660 163.8L655 165.8ZM661.2 152.5L660 163.8L668.4 172.8L678.2 162.3L678.5 160.8L666.4 152.5ZM687.4 173.4L678.2 162.3L678.5 160.8L685.1 155.1L697.1 166.6ZM697.1 166.6L685.1 155.1L685.8 153.3L697.3 149.5L704.7 155.1L705.7 158.7L704.9 164.8L701.5 166.7ZM723.7 163.5L711.9 169.4L704.9 164.8L705.7 158.7L720.5 155.8ZM736.2 153L734.4 163.6L726.1 164.4L723.7 163.5L720.5 155.8L721.5 151.2ZM738.7 149.4L747.9 156L748.9 162.9L736.4 165.7L734.4 163.6L736.2 153ZM754.8 151.9L760.2 159.7L756.8 165.9L754.9 166.5L748.9 162.9L747.9 156ZM763.5 170.3L756.8 165.9L760.2 159.7L768 156.4L775 160L775.2 160.9ZM775.2 160.9L775 160L782.7 151.6L791.7 157.8L791.8 166.4L777.3 164.8ZM540.6 171.6L540.7 176.6L537.4 183.4L524.8 176.8L524.5 169.2L538.4 169.7ZM549.1 167.1L540.6 171.6L540.7 176.6L555.6 180L553.9 167.9ZM553.9 167.9L555.6 180L556.8 181.9L564.2 181.3L569.8 172L570.1 169.8L564.6 162.6L561.8 162.1ZM585.5 170.9L580.1 167.6L570.1 169.8L569.8 172L580.7 182.2L581.4 181.6ZM594.5 183.7L581.4 181.6L585.5 170.9L593.3 169.6L596.5 176ZM611.8 177.4L609.3 165.1L608.9 164.8L593.8 168.4L593.3 169.6L596.5 176ZM612.6 178.2L624 174.3L627.1 168.2L617.9 161.2L609.3 165.1L611.8 177.4ZM644.9 181.1L630 183.5L624 174.3L627.1 168.2L630.1 166.8L643.1 176.2ZM651.6 182.1L655 165.8L646.7 163.5L643.1 176.2L644.9 181.1L648.2 183.6ZM651.6 182.1L662.1 180.7L668.1 176L668.4 172.8L660 163.8L655 165.8ZM686.8 177.7L677.4 181.8L668.1 176L668.4 172.8L678.2 162.3L687.4 173.4ZM699.8 180.4L701.5 166.7L697.1 166.6L687.4 173.4L686.8 177.7L694 184ZM699.8 180.4L701.5 166.7L704.9 164.8L711.9 169.4L714.7 178.2L705 181.8ZM723.9 180.2L715.9 179.2L714.7 178.2L711.9 169.4L723.7 163.5L726.1 164.4ZM729.8 184L738.4 175.3L736.4 165.7L734.4 163.6L726.1 164.4L723.9 180.2ZM736.4 165.7L748.9 162.9L754.9 166.5L749.7 178.6L738.4 175.3ZM763.5 170.3L756.8 165.9L754.9 166.5L749.7 178.6L750.8 180.6L758.1 181.6L765.7 174.2ZM763.5 170.3L775.2 160.9L777.3 164.8L776.3 173.6L771.2 176.4L765.7 174.2ZM776.3 173.6L785.2 179.6L796.3 172.9L796.3 172.7L791.8 166.4L777.3 164.8ZM525.1 192L537.9 186.5L537.4 183.4L524.8 176.8L519.2 183.6L520.2 191.4ZM540.7 176.6L555.6 180L556.8 181.9L554.3 186.4L543.9 192.9L537.9 186.5L537.4 183.4ZM556.8 181.9L554.3 186.4L561.2 195.8L568.8 186.4L564.2 181.3ZM579 185.9L574.2 189.1L568.8 186.4L564.2 181.3L569.8 172L580.7 182.2ZM587 191.9L579 185.9L580.7 182.2L581.4 181.6L594.5 183.7L594.8 184.9ZM594.8 184.9L594.5 183.7L596.5 176L611.8 177.4L612.6 178.2L612.3 182.3L609.8 187.6L605.3 191.9L602.5 192.5ZM612.3 182.3L626.9 190.2L627.2 196.2L626.5 197.6L624.2 198L609.8 187.6ZM612.6 178.2L624 174.3L630 183.5L626.9 190.2L612.3 182.3ZM641.7 193.1L627.2 196.2L626.9 190.2L630 183.5L644.9 181.1L648.2 183.6L648 186.5ZM648 186.5L648.2 183.6L651.6 182.1L662.1 180.7L667.4 195.2L666.9 195.9L654.1 197.4ZM678.2 192.7L667.4 195.2L662.1 180.7L668.1 176L677.4 181.8ZM693.8 191.1L682.7 196.1L682.3 196L678.2 192.7L677.4 181.8L686.8 177.7L694 184ZM697 193.6L707.1 193.6L705 181.8L699.8 180.4L694 184L693.8 191.1ZM705 181.8L714.7 178.2L715.9 179.2L712.4 193.6L710.8 195.3L707.1 193.6ZM729.8 184L730.9 190.4L712.4 193.6L715.9 179.2L723.9 180.2ZM729.8 184L730.9 190.4L732 192.5L736.3 196L749.5 186.2L750.8 180.6L749.7 178.6L738.4 175.3ZM764.8 188.1L758.1 181.6L750.8 180.6L749.5 186.2L755.7 195.4ZM765.7 174.2L758.1 181.6L764.8 188.1L769.9 188.8L771.2 176.4ZM771.2 176.4L769.9 188.8L772.7 191.6L777.4 192.3L783.8 187.1L785.2 179.6L776.3 173.6ZM796.3 172.9L785.2 179.6L783.8 187.1L793 191.6L803.3 182.6L803 178.8ZM520.3 207.2L514.4 199.9L515.2 197L520.2 191.4L525.1 192L531 200.3ZM531 200.3L525.1 192L537.9 186.5L543.9 192.9L543.9 202.3L540.4 203.4ZM547.1 205L558.9 204.2L562.1 202.2L561.2 195.8L554.3 186.4L543.9 192.9L543.9 202.3ZM574.3 202.8L562.1 202.2L561.2 195.8L568.8 186.4L574.2 189.1ZM587 191.9L579 185.9L574.2 189.1L574.3 202.8L578.4 206.6L582.4 205.1L587.9 201.6ZM587 191.9L594.8 184.9L602.5 192.5L596.7 201.3L587.9 201.6ZM596.7 201.3L602.3 210.3L613.9 205.5L614.6 203.4L605.3 191.9L602.5 192.5ZM605.3 191.9L614.6 203.4L624.2 198L609.8 187.6ZM641.3 204.3L633.1 210.1L626.5 197.6L627.2 196.2L641.7 193.1ZM652.8 205.1L654.1 197.4L648 186.5L641.7 193.1L641.3 204.3ZM652.8 205.1L653.4 206.5L660.6 210.2L667.1 197.8L666.9 195.9L654.1 197.4ZM667.1 197.8L673.9 209.1L682.3 196L678.2 192.7L667.4 195.2L666.9 195.9ZM697 193.6L697.2 205.7L688 205.8L682.7 196.1L693.8 191.1ZM697 193.6L697.2 205.7L701.2 209.8L708.1 207.7L712.3 202.2L710.8 195.3L707.1 193.6ZM730.9 190.4L732 192.5L718.6 203.8L712.3 202.2L710.8 195.3L712.4 193.6ZM720.8 206.5L718.6 203.8L732 192.5L736.3 196L738.2 200.9L735.7 204.3ZM755.7 195.4L749.5 186.2L736.3 196L738.2 200.9L747.3 205.2L755.3 202.9ZM772.7 191.6L767.3 200.1L757.7 204.1L755.3 202.9L755.7 195.4L764.8 188.1L769.9 188.8ZM772.7 191.6L777.4 192.3L781.9 201.7L774.6 209.4L767.3 200.1ZM777.4 192.3L783.8 187.1L793 191.6L795.1 202.2L787.6 203.8L781.9 201.7ZM526.1 217.4L540.4 203.4L531 200.3L520.3 207.2L523.3 215.8ZM526.1 217.4L529.5 223.6L531.9 223.3L545.1 211.5L547.2 207.1L547.1 205L543.9 202.3L540.4 203.4ZM547.1 205L558.9 204.2L563.2 219.9L557.4 224.9L556.2 224.8L547.2 207.1ZM574.3 202.8L562.1 202.2L558.9 204.2L563.2 219.9L563.6 219.8L578 209.3L578.4 206.6ZM578.4 206.6L578 209.3L580.7 216.9L599.8 220.2L599.9 219.6L582.4 205.1ZM587.9 201.6L582.4 205.1L599.9 219.6L601.6 215L602.3 210.3L596.7 201.3ZM601.6 215L618.1 215.6L619.2 215L613.9 205.5L602.3 210.3ZM626.5 197.6L624.2 198L614.6 203.4L613.9 205.5L619.2 215L626.1 217.7L632.8 213L633.1 210.1ZM652.8 205.1L653.4 206.5L649.4 213.1L637.8 216.3L632.8 213L633.1 210.1L641.3 204.3ZM660.6 210.2L666.7 217.3L666.7 217.5L653.4 223.7L649.4 213.1L653.4 206.5ZM660.6 210.2L666.7 217.3L673.8 210.7L673.9 209.1L667.1 197.8ZM673.8 210.7L673.9 209.1L682.3 196L682.7 196.1L688 205.8L684.6 213ZM697.2 205.7L688 205.8L684.6 213L686.8 216.9L699.5 214.2L701.2 209.8ZM720.8 206.5L718.6 203.8L712.3 202.2L708.1 207.7L714.9 218.6L722.6 212.5ZM720.8 206.5L735.7 204.3L731.5 215.6L730.7 215.8L722.6 212.5ZM731.5 215.6L738.5 220.9L747.1 211.2L747.3 205.2L738.2 200.9L735.7 204.3ZM755.3 202.9L747.3 205.2L747.1 211.2L751 217.7L761.7 215.3L762.5 213.3L757.7 204.1ZM767.3 200.1L774.6 209.4L773.8 212.5L762.5 213.3L757.7 204.1ZM774.6 209.4L773.8 212.5L776.7 216.8L785.6 215.7L787.6 203.8L781.9 201.7ZM787.6 203.8L785.6 215.7L792 220.3L802.7 211.9L802.7 211.8L800.9 204.9L795.1 202.2ZM526.1 217.4L529.5 223.6L529 225.9L521.3 232.3L513 234L511.1 230.7L516.7 217.9L523.3 215.8ZM531.9 223.3L543.1 224.5L545.1 211.5ZM547.2 207.1L556.2 224.8L549.7 228.3L543.1 224.5L545.1 211.5ZM565.8 236.4L557.4 224.9L563.2 219.9L563.6 219.8L573.7 225.9L568.7 237.6ZM580.7 216.9L580.1 223.3L573.7 225.9L563.6 219.8L578 209.3ZM599.8 220.2L601.3 227.8L598.3 228.8L583.5 228.1L580.1 223.3L580.7 216.9ZM599.9 219.6L601.6 215L618.1 215.6L607.4 225.9L601.4 227.8L601.3 227.8L599.8 220.2ZM623.7 226.9L625.1 224L626.1 217.7L619.2 215L618.1 215.6L607.4 225.9ZM637.8 216.3L632.8 213L626.1 217.7L625.1 224L635.7 229L643.7 227.2ZM637.8 216.3L643.7 227.2L648.1 230.6L653.4 223.7L649.4 213.1ZM666.7 217.5L653.4 223.7L648.1 230.6L648.2 231L670.2 226.9L671 225.5ZM685.2 227.4L686.8 216.9L684.6 213L673.8 210.7L666.7 217.3L666.7 217.5L671 225.5L674.6 226.5ZM685.2 227.4L686.8 216.9L699.5 214.2L702.7 226.6L687 229.3ZM701.2 209.8L699.5 214.2L702.7 226.6L705.8 228.4L714.1 225.8L714.9 218.6L708.1 207.7ZM722.6 212.5L714.9 218.6L714.1 225.8L720.8 228.9L723.2 227.2L730.7 215.8ZM731.5 215.6L738.5 220.9L740.3 225.3L738.1 227.9L723.2 227.2L730.7 215.8ZM747.1 211.2L751 217.7L749.6 227.3L740.3 225.3L738.5 220.9ZM762 229.4L752.4 229.8L749.6 227.3L751 217.7L761.7 215.3L762.5 228.6ZM775.3 224L776.7 216.8L773.8 212.5L762.5 213.3L761.7 215.3L762.5 228.6ZM789 232.2L791.3 228.7L792 220.3L785.6 215.7L776.7 216.8L775.3 224L782.1 231ZM524.4 242.5L513 249.9L511.3 238.4L513 234L521.3 232.3ZM536.6 240.4L529 225.9L521.3 232.3L524.4 242.5L532.8 243.7ZM529.5 223.6L529 225.9L536.6 240.4L537.1 240.4L547.4 235.2L549.7 228.3L543.1 224.5L531.9 223.3ZM554 243.1L547.4 235.2L549.7 228.3L556.2 224.8L557.4 224.9L565.8 236.4ZM568.7 237.6L573.7 225.9L580.1 223.3L583.5 228.1L580.3 237.7L571.4 240.6ZM587.3 241.8L598.3 228.8L583.5 228.1L580.3 237.7ZM596.6 247L587.4 241.9L587.3 241.8L598.3 228.8L601.3 227.8L601.4 227.8L601.9 229ZM601.9 229L601.4 227.8L607.4 225.9L623.7 226.9L623.9 238.5L613.8 242.1ZM625.4 239.3L623.9 238.5L623.7 226.9L625.1 224L635.7 229L628.7 239.4ZM648.7 234.8L648.2 231L648.1 230.6L643.7 227.2L635.7 229L628.7 239.4L635.3 241.2ZM652 238.5L665.6 236.1L670.2 226.9L648.2 231L648.7 234.8ZM676.8 242.3L670.1 242.2L665.6 236.1L670.2 226.9L671 225.5L674.6 226.5ZM682 243.7L687.1 234.5L687 229.3L685.2 227.4L674.6 226.5L676.8 242.3ZM687.1 234.5L698.9 242.9L705.5 233L705.8 228.4L702.7 226.6L687 229.3ZM722.8 234.6L720.8 228.9L714.1 225.8L705.8 228.4L705.5 233L714.9 246ZM722.8 234.6L720.8 228.9L723.2 227.2L738.1 227.9L735.5 238.2L726.4 236.6ZM749.2 237.7L740.5 245.1L735.5 238.2L738.1 227.9L740.3 225.3L749.6 227.3L752.4 229.8ZM762 229.4L752.4 229.8L749.2 237.7L759.1 246L767.8 242.9L767.8 242.6ZM774.3 238.3L767.8 242.6L762 229.4L762.5 228.6L775.3 224L782.1 231ZM790.9 238L789 232.2L782.1 231L774.3 238.3L785.3 243.2ZM532.8 243.7L531.4 250.2L516.7 255.7L512.5 251.7L513 249.9L524.4 242.5ZM536.6 240.4L537.1 240.4L543.4 248.6L538.1 261.2L537.5 261.2L531.4 250.2L532.8 243.7ZM553.7 249.7L543.4 248.6L537.1 240.4L547.4 235.2L554 243.1ZM556.3 254.3L553.7 249.7L554 243.1L565.8 236.4L568.7 237.6L571.4 240.6L571 250.4L570.6 251.1L564.1 257L563.4 257ZM571 250.4L583.9 251.9L587.4 241.9L587.3 241.8L580.3 237.7L571.4 240.6ZM597.9 249.6L586.4 254.7L583.9 251.9L587.4 241.9L596.6 247ZM599.8 250.8L612.5 245.7L613.8 242.1L601.9 229L596.6 247L597.9 249.6ZM612.5 245.7L617.4 260.6L618.9 261.2L627.1 250.4L625.4 239.3L623.9 238.5L613.8 242.1ZM635.3 241.2L628.7 239.4L625.4 239.3L627.1 250.4L637.6 255.2L638.7 254.8ZM652 238.5L652.7 246.9L642.9 256.1L638.7 254.8L635.3 241.2L648.7 234.8ZM652 238.5L665.6 236.1L670.1 242.2L665.9 253.4L661.6 253.7L652.7 246.9ZM682 243.7L684 250.1L674.2 259.3L665.9 253.4L670.1 242.2L676.8 242.3ZM689.8 252.1L684 250.1L682 243.7L687.1 234.5L698.9 242.9L699 246.3ZM706.9 251.4L714.6 250.7L714.9 246L705.5 233L698.9 242.9L699 246.3ZM718.6 254.5L722.9 254.9L726.4 253.7L726.4 236.6L722.8 234.6L714.9 246L714.6 250.7ZM726.4 253.7L726.4 236.6L735.5 238.2L740.5 245.1L740.4 247.6L732.9 253.1ZM749.1 254.2L740.4 247.6L740.5 245.1L749.2 237.7L759.1 246L751.3 254.8ZM751.8 255.3L773.5 252.3L767.8 242.9L759.1 246L751.3 254.8ZM785.3 243.2L777.9 253.1L774.5 253.7L773.5 252.3L767.8 242.9L767.8 242.6L774.3 238.3ZM790.9 238L795.4 241.6L797 250.1L797 250.1L789.9 257L777.9 253.1L785.3 243.2ZM517.8 258.2L516.7 255.7L531.4 250.2L537.5 261.2L530.9 265.6ZM544 263.5L538.1 261.2L543.4 248.6L553.7 249.7L556.3 254.3ZM544 263.5L556.3 254.3L563.4 257L555.8 270.5L547.5 271ZM570.6 251.1L581.7 263.3L580.4 265.9L574.5 270L571.7 270L564.1 257ZM570.6 251.1L571 250.4L583.9 251.9L586.4 254.7L586.8 259.4L581.7 263.3ZM599.8 250.8L601 266.3L600.1 267.3L586.8 259.4L586.4 254.7L597.9 249.6ZM599.8 250.8L601 266.3L610.4 263.7L617.4 260.6L612.5 245.7ZM624 265.4L618.9 261.2L627.1 250.4L637.6 255.2L627.1 264.3ZM644.7 271.2L646.5 268.7L647 266.1L642.9 256.1L638.7 254.8L637.6 255.2L627.1 264.3ZM652.7 246.9L661.6 253.7L657.8 261.5L647 266.1L642.9 256.1ZM657.8 261.5L665.8 272.3L674.9 264.5L674.2 259.3L665.9 253.4L661.6 253.7ZM682.8 269.6L674.9 264.5L674.2 259.3L684 250.1L689.8 252.1L694.6 264.5ZM695.2 264.7L700.6 262.1L706.9 251.4L699 246.3L689.8 252.1L694.6 264.5ZM700.6 262.1L713.4 267.1L718.6 254.5L714.6 250.7L706.9 251.4ZM722.9 254.9L727.9 269.2L736.2 262.9L732.9 253.1L726.4 253.7ZM740.8 266.3L736.2 262.9L732.9 253.1L740.4 247.6L749.1 254.2ZM752.6 271.3L754.7 260.2L751.8 255.3L751.3 254.8L749.1 254.2L740.8 266.3L742.1 270.2ZM754.7 260.2L751.8 255.3L773.5 252.3L774.5 253.7L771.5 261.8L771.4 261.9ZM792 264.5L789.9 257L777.9 253.1L774.5 253.7L771.5 261.8L774.5 264.7L790.1 267.1ZM792 264.5L789.9 257L797 250.1L807.5 264.1L805.2 267ZM515.4 277.4L520 279L528.6 276.7L530.9 265.6L517.8 258.2L514.4 269.1L513.3 275.5ZM544 263.5L538.1 261.2L537.5 261.2L530.9 265.6L528.6 276.7L532.9 280L545.3 278.5L547.5 271ZM547.5 271L545.3 278.5L547.2 281.1L565.1 280.4L565.2 279.8L555.8 270.5ZM555.8 270.5L565.2 279.8L571.7 270L564.1 257L563.4 257ZM574.5 270L583.7 279.2L591.3 276L592.7 274.1L580.4 265.9ZM581.7 263.3L586.8 259.4L600.1 267.3L599.5 269.6L592.7 274.1L580.4 265.9ZM615.8 280L601.6 272.7L599.5 269.6L600.1 267.3L601 266.3L610.4 263.7ZM624.2 270.6L618.2 281.8L615.8 280L610.4 263.7L617.4 260.6L618.9 261.2L624 265.4ZM638.8 280.1L624.2 270.6L624 265.4L627.1 264.3L644.7 271.2L642.5 278.3ZM642.5 278.3L651.2 285.6L652.4 285.9L663.1 279.1L663.7 275.7L646.5 268.7L644.7 271.2ZM657.8 261.5L665.8 272.3L665 274.1L663.7 275.7L646.5 268.7L647 266.1ZM683.2 274.5L680.8 281L665 274.1L665.8 272.3L674.9 264.5L682.8 269.6ZM683.2 274.5L697.5 280.7L701.2 278.1L695.2 264.7L694.6 264.5L682.8 269.6ZM695.2 264.7L700.6 262.1L713.4 267.1L714.3 273.7L704.1 278.6L701.2 278.1ZM718.6 254.5L722.9 254.9L727.9 269.2L726.8 275.4L716.9 275L714.3 273.7L713.4 267.1ZM739.6 273.3L726.9 275.4L726.8 275.4L727.9 269.2L736.2 262.9L740.8 266.3L742.1 270.2ZM742.4 283.7L739.6 273.3L742.1 270.2L752.6 271.3L758.4 279.4ZM759 279.7L763.8 275.5L771.4 261.9L754.7 260.2L752.6 271.3L758.4 279.4ZM763.8 275.5L771.4 261.9L771.5 261.8L774.5 264.7L780.2 276L775.4 277.2ZM790.1 267.1L774.5 264.7L780.2 276L782.5 277.4L788.6 273.2ZM792 264.5L805.2 267L805.3 274.7L800.3 281.1L788.6 273.2L790.1 267.1ZM515.4 277.4L508.9 289.4L519 292.4L520.6 289.6L520 279ZM520 279L520.6 289.6L532.9 292.8L533.7 291.3L532.9 280L528.6 276.7ZM548.1 290.4L533.7 291.3L532.9 280L545.3 278.5L547.2 281.1ZM565.1 280.4L547.2 281.1L548.1 290.4L549.1 292L557.1 294.5L565.1 280.5ZM574.5 270L583.7 279.2L580.1 287.3L576.6 289.5L565.1 280.5L565.1 280.4L565.2 279.8L571.7 270ZM580.1 287.3L583.7 279.2L591.3 276L595.2 291.5ZM599.5 295.1L598.9 295L595.2 291.5L591.3 276L592.7 274.1L599.5 269.6L601.6 272.7L603.3 288.7ZM618.3 282.4L618.2 281.8L615.8 280L601.6 272.7L603.3 288.7ZM638.8 280.1L633.6 287.6L623.9 287.8L618.7 283L618.3 282.4L618.2 281.8L624.2 270.6ZM638.8 280.1L633.6 287.6L638.9 299L640.2 299.3L651.2 285.6L642.5 278.3ZM655.9 293.3L652.4 285.9L663.1 279.1L671.3 290.8L669.3 295.1L667.2 297ZM680.7 286.9L671.3 290.8L663.1 279.1L663.7 275.7L665 274.1L680.8 281ZM683.2 274.5L680.8 281L680.7 286.9L682.3 287.8L692 289.7L697.5 280.7ZM697.5 280.7L692 289.7L695.6 296.6L708.2 289.4L704.1 278.6L701.2 278.1ZM704.1 278.6L714.3 273.7L716.9 275L716.9 290.3L714 293L708.2 289.4ZM729.5 284.2L726.9 275.4L726.8 275.4L716.9 275L716.9 290.3L725.9 289.3ZM739.7 287.7L729.5 284.2L726.9 275.4L739.6 273.3L742.4 283.7ZM739.7 287.7L742.4 283.7L758.4 279.4L759 279.7L759.5 281.2L754 294.4L741 292.7ZM759.5 281.2L769.7 288.2L775.4 277.2L763.8 275.5L759 279.7ZM783 286.6L782.5 277.4L780.2 276L775.4 277.2L769.7 288.2L773 291.5L779.7 289.5ZM788.6 273.2L782.5 277.4L783 286.6L795.6 289.5L799.9 284.1L800.3 281.1ZM502.7 293.5L508.9 289.4L519 292.4L518.3 302.3L503.8 302.1ZM520.6 289.6L532.9 292.8L532.3 303L521.7 304.7L518.3 302.3L519 292.4ZM549.1 292L544.7 299.2L537.1 306.4L532.3 303L532.9 292.8L533.7 291.3L548.1 290.4ZM549.1 292L544.7 299.2L556.1 306.1L560.1 300.4L560.3 300L557.1 294.5ZM576.6 289.5L576.2 292.4L565.2 300.2L560.3 300L557.1 294.5L565.1 280.5ZM581.8 301.3L576.2 292.4L565.2 300.2L572.6 308.9ZM581.8 301.3L576.2 292.4L576.6 289.5L580.1 287.3L595.2 291.5L598.9 295L586.6 303.4ZM609.1 300.2L618.7 283L618.3 282.4L603.3 288.7L599.5 295.1L604.3 299.9ZM623.9 287.8L618.7 283L609.1 300.2L620.2 303.7ZM631.2 304.8L638.9 299L633.6 287.6L623.9 287.8L620.2 303.7L621.9 305.9ZM650.5 300.8L655.9 293.3L652.4 285.9L651.2 285.6L640.2 299.3L642.1 300.6ZM658.8 310.2L663.9 310.4L667.2 297L655.9 293.3L650.5 300.8ZM682.9 304.2L682.3 287.8L680.7 286.9L671.3 290.8L669.3 295.1L682.6 304.5ZM682.9 304.2L682.3 287.8L692 289.7L695.6 296.6L695.9 300.9L692.8 302.7ZM708.2 289.4L714 293L714.1 297.6L710.3 303.9L702.1 305.2L695.9 300.9L695.6 296.6ZM725.9 289.3L716.9 290.3L714 293L714.1 297.6L730.3 302.4ZM739.7 287.7L729.5 284.2L725.9 289.3L730.3 302.4L731.4 303.5L737.3 299.9L741 292.7ZM741 292.7L737.3 299.9L745.8 304.6L756.7 302.4L756.9 302.1L754 294.4ZM754 294.4L756.9 302.1L770.1 300.8L773 291.5L769.7 288.2L759.5 281.2ZM786.5 302.9L783.5 305.5L774.8 307.9L770.1 300.8L773 291.5L779.7 289.5ZM786.5 302.9L779.7 289.5L783 286.6L795.6 289.5L797.3 301ZM503.7 302.2L505.7 313.2L519 313.6L520.6 310.8L521.7 304.7L518.3 302.3L503.8 302.1ZM520.6 310.8L521.7 304.7L532.3 303L537.1 306.4L538.3 308.6L528.9 317.9ZM538.3 308.6L537.1 306.4L544.7 299.2L556.1 306.1L553.2 312.5L543.5 313.7ZM566.1 312.8L560.1 300.4L556.1 306.1L553.2 312.5L560.4 319.3ZM572.6 309.3L566.1 312.8L560.1 300.4L560.3 300L565.2 300.2L572.6 308.9ZM585.3 318.7L575.1 313.5L572.6 309.3L572.6 308.9L581.8 301.3L586.6 303.4L588.1 314.8ZM588.1 314.8L601.9 314L604.3 299.9L599.5 295.1L598.9 295L586.6 303.4ZM621.9 305.9L620.2 303.7L609.1 300.2L604.3 299.9L601.9 314L602.9 315.3L613 318.4L621.7 307.2ZM639.5 320.2L631.2 304.8L621.9 305.9L621.7 307.2L626.4 316.1ZM645.6 316L640.8 321.3L639.5 320.2L631.2 304.8L638.9 299L640.2 299.3L642.1 300.6ZM645.6 316L642.1 300.6L650.5 300.8L658.8 310.2L651.3 314.6ZM667.2 297L669.3 295.1L682.6 304.5L678.4 313.2L666.3 313.1L663.9 310.4ZM682.9 304.2L692.8 302.7L689.5 318.3L684 319.6L678.4 313.2L682.6 304.5ZM692.8 302.7L695.9 300.9L702.1 305.2L701.4 313L694.4 319.5L689.5 318.3ZM701.4 313L709.2 320.5L712.6 320.6L718.9 314.9L710.3 303.9L702.1 305.2ZM710.3 303.9L714.1 297.6L730.3 302.4L731.4 303.5L730.4 309.6L724.4 315L718.9 314.9ZM737.3 299.9L745.8 304.6L744.6 315.4L742.3 316.8L730.4 309.6L731.4 303.5ZM744.6 315.4L756.4 314.1L756.7 302.4L745.8 304.6ZM757.1 315L756.4 314.1L756.7 302.4L756.9 302.1L770.1 300.8L774.8 307.9L774 312.7ZM790.6 318.3L783.5 305.5L774.8 307.9L774 312.7L775.4 317.2L777.5 319.8ZM786.5 302.9L783.5 305.5L790.6 318.3L793.1 318.9L793.7 318.8L802.2 308.4L802 305.4L797.3 301ZM519 313.6L505.7 313.2L504.8 318.7L507.7 323.4L518 321.7ZM519 313.6L518 321.7L522.3 325.5L527.9 323.6L528.9 317.9L520.6 310.8ZM541.3 324.9L543.5 313.7L538.3 308.6L528.9 317.9L527.9 323.6L537.4 327ZM560.4 319.3L553.2 312.5L543.5 313.7L541.3 324.9L550.6 331.8L553 332.5L558.8 328L562 323.4ZM575.1 313.5L566.3 324L562 323.4L560.4 319.3L566.1 312.8L572.6 309.3ZM585.3 318.7L584.5 325.7L583.7 327L577.8 330.2L566.3 324L575.1 313.5ZM585.3 318.7L584.5 325.7L599.7 328.4L602.9 315.3L601.9 314L588.1 314.8ZM609.3 332.3L615 324L613 318.4L602.9 315.3L599.7 328.4L602.7 332.2ZM626.4 316.1L623.5 326.2L623.2 326.3L615 324L613 318.4L621.7 307.2ZM639.5 320.2L640.8 321.3L640.7 322.2L638.7 326.7L633.3 329.8L623.5 326.2L626.4 316.1ZM645.6 316L640.8 321.3L640.7 322.2L658.2 328.6L651.3 314.6ZM651.3 314.6L658.2 328.6L658.5 328.9L665.1 325.7L666.3 313.1L663.9 310.4L658.8 310.2ZM672.6 331.5L665.1 325.7L666.3 313.1L678.4 313.2L684 319.6L681.7 328.5L673.6 331.4ZM684 319.6L681.7 328.5L689.2 335.2L695.1 333.6L699.3 329.8L699.4 328.1L694.4 319.5L689.5 318.3ZM701.4 313L694.4 319.5L699.4 328.1L709.2 320.5ZM712.6 320.6L715.1 334.2L729.1 329.7L724.4 315L718.9 314.9ZM742.3 316.8L742.2 320.6L731.7 331.3L729.1 329.7L724.4 315L730.4 309.6ZM758.9 326.7L758.7 327.6L751.3 330L742.2 320.6L742.3 316.8L744.6 315.4L756.4 314.1L757.1 315ZM758.9 326.7L775.4 317.2L774 312.7L757.1 315ZM777.4 328.4L765.7 332L762.1 331.2L758.7 327.6L758.9 326.7L775.4 317.2L777.5 319.8ZM779.8 331.2L787.3 331.2L793.1 318.9L790.6 318.3L777.5 319.8L777.4 328.4ZM521.4 334.9L522.3 325.5L518 321.7L507.7 323.4L505.1 332.5L506.5 335.4L510 339.2ZM529.9 340.5L532.8 340.2L537.4 327L527.9 323.6L522.3 325.5L521.4 334.9ZM532.8 340.2L537.4 327L541.3 324.9L550.6 331.8L537.3 343.2ZM556.9 347.6L568.4 339.9L558.8 328L553 332.5L555.9 347.2ZM566.3 324L577.8 330.2L574.9 338.9L568.4 339.9L558.8 328L562 323.4ZM574.9 338.9L575.5 340.1L581.4 343.1L589.8 336.9L583.7 327L577.8 330.2ZM596.2 343.4L589.8 336.9L583.7 327L584.5 325.7L599.7 328.4L602.7 332.2ZM615.1 340.8L609.3 332.3L615 324L623.2 326.3L618.9 340.3ZM627.6 342.7L630.2 340.4L633.3 329.8L623.5 326.2L623.2 326.3L618.9 340.3ZM645.8 336.1L638.7 326.7L633.3 329.8L630.2 340.4L637.8 342.8ZM645.8 336.1L638.7 326.7L640.7 322.2L658.2 328.6L658.5 328.9L653.6 340.7ZM653.6 340.7L658.5 328.9L665.1 325.7L672.6 331.5L671.2 335.3L654.8 344.5ZM682.7 346.3L686.6 345.2L689.2 335.2L681.7 328.5L673.6 331.4ZM695.1 333.6L699.3 329.8L712.8 337.4L712.7 341L700 342.6ZM709.2 320.5L699.4 328.1L699.3 329.8L712.8 337.4L715.1 334.2L712.6 320.6ZM732.9 333.4L727.2 345.9L713.3 342.6L712.7 341L712.8 337.4L715.1 334.2L729.1 329.7L731.7 331.3ZM732.9 333.4L743.4 338.3L745 338.4L751.3 330L742.2 320.6L731.7 331.3ZM762.1 331.2L758.7 327.6L751.3 330L745 338.4L751.7 348.6L757.2 349L759.1 347.7ZM779.8 331.2L779.2 335.7L771.5 341.6L765.7 332L777.4 328.4ZM779.8 331.2L779.2 335.7L783.1 342.4L796.4 339.3L787.3 331.2ZM793.1 318.9L793.7 318.8L802.5 330.5L802.3 338.2L798.4 340L796.4 339.3L787.3 331.2ZM521.9 351.2L519.8 356.9L506.4 347.7L510 340.5ZM521.9 351.2L510 340.5L510 339.2L521.4 334.9L529.9 340.5L524.3 349.7ZM524.3 349.7L538 358L543 351.2L537.3 343.2L532.8 340.2L529.9 340.5ZM555.9 347.2L553 332.5L550.6 331.8L537.3 343.2L543 351.2L547.8 351ZM556.9 347.6L568.4 339.9L574.9 338.9L575.5 340.1L574.1 350.3L565.4 356.9ZM588.7 349.3L581.4 343.1L575.5 340.1L574.1 350.3L581.1 354ZM596.4 349.6L588.7 349.3L581.4 343.1L589.8 336.9L596.2 343.4ZM608.9 351.8L604.8 352.2L597.2 350.5L596.4 349.6L596.2 343.4L602.7 332.2L609.3 332.3L615.1 340.8ZM617.8 358.6L608.9 351.8L615.1 340.8L618.9 340.3L627.6 342.7L628.4 352.3L618.9 358.8ZM627.6 342.7L630.2 340.4L637.8 342.8L644.4 352.4L636.2 356L628.4 352.3ZM645.8 336.1L637.8 342.8L644.4 352.4L646.1 352.4L654.9 347.2L654.8 344.5L653.6 340.7ZM654.8 344.5L671.2 335.3L672.5 350L657.7 349.3L654.9 347.2ZM672.5 350L671.2 335.3L672.6 331.5L673.6 331.4L682.7 346.3L674.7 351.3ZM686.6 345.2L689.2 335.2L695.1 333.6L700 342.6L694.7 351.7ZM694.7 351.7L694.8 352L700.5 356.2L705.6 355.9L711.1 351.1L713.3 342.6L712.7 341L700 342.6ZM729.9 351.6L727.2 345.9L713.3 342.6L711.1 351.1L718.8 356L728.3 353.8ZM729.9 351.6L727.2 345.9L732.9 333.4L743.4 338.3L733.6 351.8ZM743.8 357.8L751.7 348.6L745 338.4L743.4 338.3L733.6 351.8ZM770.6 347.3L759.1 347.7L762.1 331.2L765.7 332L771.5 341.6ZM779.2 335.7L771.5 341.6L770.6 347.3L775.8 351.7L780 350L783.1 342.4ZM790.6 353.3L780 350L783.1 342.4L796.4 339.3L798.4 340L795.5 348.4ZM795.5 348.4L798.4 340L802.3 338.2L807.3 340.1L813.8 354.3L801.8 355ZM519.5 360.2L516.2 361.9L507.3 361.1L505.5 348.7L506.4 347.7L519.8 356.9ZM521.9 351.2L519.8 356.9L519.5 360.2L528.9 365.7L536.6 362L538 358L524.3 349.7ZM552.8 365.7L544.2 369.5L543.7 369.3L536.6 362L538 358L543 351.2L547.8 351ZM556.9 347.6L565.4 356.9L566.1 361.7L557.1 366.9L552.8 365.7L547.8 351L555.9 347.2ZM566.1 361.7L568.8 364L580.1 363.9L581.1 354L574.1 350.3L565.4 356.9ZM596.4 349.6L588.7 349.3L581.1 354L580.1 363.9L583.6 366.3L592.4 362.6L597.2 350.5ZM597.2 350.5L592.4 362.6L595.4 366.2L604.7 367.3L604.8 352.2ZM617.8 358.6L608.5 372L604.7 367.3L604.8 352.2L608.9 351.8ZM618.9 358.8L623.6 366.6L635.5 367L636.2 356L628.4 352.3ZM644.2 371.2L648.4 364.5L646.1 352.4L644.4 352.4L636.2 356L635.5 367L638 370.5ZM654.9 347.2L657.7 349.3L660.3 364.1L659.1 364.5L648.4 364.5L646.1 352.4ZM660.3 364.1L657.7 349.3L672.5 350L674.7 351.3L676.7 361.7L675.1 364.5L665.5 367.5ZM674.7 351.3L676.7 361.7L684.4 361.6L694.8 352L694.7 351.7L686.6 345.2L682.7 346.3ZM695.2 370.8L684.4 361.6L694.8 352L700.5 356.2ZM705.6 355.9L711.1 351.1L718.8 356L718.8 363.4L710.2 364.4ZM728.3 353.8L718.8 356L718.8 363.4L726.1 369.8L728.3 368.2ZM729.9 351.6L733.6 351.8L743.8 357.8L744 363.1L737.8 367.7L728.3 368.2L728.3 353.8ZM744 363.1L748.5 366.1L762.8 364.2L757.2 349L751.7 348.6L743.8 357.8ZM763.4 364.7L774.7 358.8L775.8 351.7L770.6 347.3L759.1 347.7L757.2 349L762.8 364.2ZM790.6 353.3L780 350L775.8 351.7L774.7 358.8L783.4 367.8L789.1 364.7L791.3 361.8ZM790.6 353.3L791.3 361.8L799.3 362.2L801.8 355L795.5 348.4ZM801.8 355L813.8 354.3L815.3 355.7L813 366.3L809.7 369.3L799.3 362.2ZM514.2 376L516.2 361.9L507.3 361.1L504.5 363.1L503.5 371.9L510.3 376.8ZM514.2 376L516.2 361.9L519.5 360.2L528.9 365.7L527.7 374.4L523.5 380.3ZM543.7 369.3L536.6 362L528.9 365.7L527.7 374.4L537.2 377ZM557.1 366.9L557.1 375.9L550 381.7L544.2 369.5L552.8 365.7ZM557.1 366.9L557.1 375.9L566.8 379.1L569.5 374.5L568.8 364L566.1 361.7ZM583 376.9L584 376.1L583.6 366.3L580.1 363.9L568.8 364L569.5 374.5ZM583.6 366.3L584 376.1L591.1 378.5L596.1 374.1L595.4 366.2L592.4 362.6ZM596.1 374.1L595.4 366.2L604.7 367.3L608.5 372L608.8 375.7L608.2 376.2ZM617.8 358.6L608.5 372L608.8 375.7L614.6 377.4L622.4 371.6L623.6 366.6L618.9 358.8ZM631.7 380.6L622.4 371.6L623.6 366.6L635.5 367L638 370.5ZM649.7 377.5L659.1 364.5L648.4 364.5L644.2 371.2ZM650.8 379.8L663.1 378.4L665.5 367.5L660.3 364.1L659.1 364.5L649.7 377.5ZM663.1 378.4L665.5 367.5L675.1 364.5L679.1 373.6L677.3 379.6L666.7 382.4ZM675.1 364.5L679.1 373.6L695.7 374.4L695.2 370.8L684.4 361.6L676.7 361.7ZM695.7 374.4L695.2 370.8L700.5 356.2L705.6 355.9L710.2 364.4L708.5 375.7L707.3 376.3L695.9 374.6ZM708.5 375.7L719.8 376.8L725.8 370.4L726.1 369.8L718.8 363.4L710.2 364.4ZM737.8 367.7L740.1 377.3L735 382.1L725.8 370.4L726.1 369.8L728.3 368.2ZM737.8 367.7L740.1 377.3L745.5 379.2L750.4 374.5L748.5 366.1L744 363.1ZM763.4 364.7L765 373.1L757.4 378L750.4 374.5L748.5 366.1L762.8 364.2ZM783.4 367.8L774.7 358.8L763.4 364.7L765 373.1L770.8 377.2L782.1 372.2ZM789.4 383L782.1 372.2L783.4 367.8L789.1 364.7L800.1 376.1ZM799.3 362.2L809.7 369.3L807.5 375.3L800.1 376.1L789.1 364.7L791.3 361.8ZM506.1 386.3L510.3 376.8L514.2 376L523.5 380.3L524.7 387L516.2 392.2L508.2 391ZM523.5 380.3L527.7 374.4L537.2 377L541.3 386.3L525.4 387.5L524.7 387ZM543.7 369.3L537.2 377L541.3 386.3L542 386.6L549.9 381.9L550 381.7L544.2 369.5ZM566.8 379.1L557.1 375.9L550 381.7L549.9 381.9L556.3 388.2L567.9 385.9ZM583 376.9L569.5 374.5L566.8 379.1L567.9 385.9L572.9 390.8L579 386.6ZM583 376.9L584 376.1L591.1 378.5L596.8 390.1L595.3 391.6L593.8 391.7L579 386.6ZM591.1 378.5L596.8 390.1L601.7 389.5L608.2 376.2L596.1 374.1ZM608.2 376.2L608.8 375.7L614.6 377.4L621.3 387.4L612.7 397.1L601.7 389.5ZM631.5 382.2L624.7 387.2L621.3 387.4L614.6 377.4L622.4 371.6L631.7 380.6ZM650.8 379.8L649.7 377.5L644.2 371.2L638 370.5L631.7 380.6L631.5 382.2L637.6 386L649.6 383.1ZM650.8 379.8L663.1 378.4L666.7 382.4L666.6 388.8L651.7 391.5L649.6 383.1ZM666.6 388.8L666.7 382.4L677.3 379.6L682.9 387.2L670.6 396.6ZM682.9 387.2L689.8 388.7L690.6 388.2L695.9 374.6L695.7 374.4L679.1 373.6L677.3 379.6ZM706.1 391.2L707.6 386.9L707.3 376.3L695.9 374.6L690.6 388.2L694 389.6ZM707.6 386.9L707.3 376.3L708.5 375.7L719.8 376.8L723.2 387.8ZM723.2 387.8L719.8 376.8L725.8 370.4L735 382.1L734.2 386.1L725.6 391.8ZM747 385.9L745.5 379.2L740.1 377.3L735 382.1L734.2 386.1L737.2 387.2ZM752.4 390.8L747 385.9L745.5 379.2L750.4 374.5L757.4 378L755.8 388.1ZM755.8 388.1L757.4 378L765 373.1L770.8 377.2L771.3 387.9L768.3 388.9ZM789.4 383L788.7 387.8L776.7 391.8L771.3 387.9L770.8 377.2L782.1 372.2ZM789.4 383L788.7 387.8L792.6 391.9L804.5 389.1L808.2 376.8L807.5 375.3L800.1 376.1ZM508.2 391L503.5 397.1L504.7 401.8L516.9 401.8L516.2 392.2ZM516.2 392.2L516.9 401.8L521.5 410.3L522.8 410.3L530.9 401.6L525.4 387.5L524.7 387ZM542 386.6L543.6 399.7L540.7 401.9L530.9 401.6L525.4 387.5L541.3 386.3ZM555.2 397.8L556.3 388.2L549.9 381.9L542 386.6L543.6 399.7L547.4 400.3ZM572.9 390.8L572.8 393.9L562.2 401.4L555.2 397.8L556.3 388.2L567.9 385.9ZM579 386.6L593.8 391.7L579.1 401.3L572.8 393.9L572.9 390.8ZM595.3 391.6L595.1 398L587.9 406L579.4 402.1L579.1 401.3L593.8 391.7ZM601.7 389.5L612.7 397.1L612.8 397.7L604.6 408.1L600.5 407.7L595.1 398L595.3 391.6L596.8 390.1ZM621.3 387.4L612.7 397.1L612.8 397.7L620.9 405.2L628.8 402.5L631.3 398.3L624.7 387.2ZM631.5 382.2L624.7 387.2L631.3 398.3L638.7 396.5L637.6 386ZM649.6 383.1L651.7 391.5L650.9 395.5L644.7 399.7L638.7 396.5L637.6 386ZM651.7 391.5L666.6 388.8L670.6 396.6L670.3 400.9L664.2 404.7L650.9 395.5ZM670.3 400.9L675.4 403.5L688.9 395.2L689.8 388.7L682.9 387.2L670.6 396.6ZM694 389.6L690.6 388.2L689.8 388.7L688.9 395.2L692.3 403.8L702.5 405ZM706.1 391.2L709.7 399.7L705 405.9L702.5 405L694 389.6ZM706.1 391.2L707.6 386.9L723.2 387.8L725.6 391.8L725.3 393.6L716.4 398.8L709.7 399.7ZM733.7 403.2L741.5 401.9L744 398.8L737.2 387.2L734.2 386.1L725.6 391.8L725.3 393.6ZM751.8 393.6L744 398.8L737.2 387.2L747 385.9L752.4 390.8ZM751.8 393.6L755.6 398.1L763.4 399L768.3 388.9L755.8 388.1L752.4 390.8ZM763.4 399L771.9 409.8L772.7 409.2L776.2 403.8L776.7 391.8L771.3 387.9L768.3 388.9ZM776.7 391.8L776.2 403.8L792.3 403.2L793.6 397.9L792.6 391.9L788.7 387.8ZM540.7 401.9L541.1 410.4L527.5 415.4L522.8 410.3L530.9 401.6ZM547.4 400.3L543.6 399.7L540.7 401.9L541.1 410.4L541.5 411.3L553.5 412.9ZM562.7 408.2L553.7 413.1L553.5 412.9L547.4 400.3L555.2 397.8L562.2 401.4ZM579.4 402.1L576.3 409.8L568.8 413.7L562.7 408.2L562.2 401.4L572.8 393.9L579.1 401.3ZM579.4 402.1L576.3 409.8L584.6 418.1L591.5 414.8L592 412.8L587.9 406ZM595.1 398L600.5 407.7L592 412.8L587.9 406ZM620.9 405.2L612.8 397.7L604.6 408.1L610.5 421.3L612.1 421.1L620.7 412.2ZM620.9 405.2L628.8 402.5L635.7 410.5L627.6 415.6L620.7 412.2ZM628.8 402.5L631.3 398.3L638.7 396.5L644.7 399.7L644.1 408.3L640.7 411.5L635.7 410.5ZM650.9 395.5L644.7 399.7L644.1 408.3L659.8 413.8L660.5 413.3L664.2 404.7ZM664.2 404.7L660.5 413.3L669.7 418.4L677.8 406.3L675.4 403.5L670.3 400.9ZM675.4 403.5L688.9 395.2L692.3 403.8L684.1 412.3L677.8 406.3ZM704.4 413.6L684.5 414.5L684.1 412.3L692.3 403.8L702.5 405L705 405.9L705.7 412.4ZM713.8 417.9L705.7 412.4L705 405.9L709.7 399.7L716.4 398.8L722.8 414.7ZM726.6 415L730.3 413.2L733.7 403.2L725.3 393.6L716.4 398.8L722.8 414.7ZM730.3 413.2L738 418.8L747.7 410L741.5 401.9L733.7 403.2ZM751.8 393.6L744 398.8L741.5 401.9L747.7 410L752.9 412.2L756.4 410.1L755.6 398.1ZM755.6 398.1L756.4 410.1L771.2 411.2L771.9 409.8L763.4 399ZM772.7 409.2L776.2 403.8L792.3 403.2L795.3 410.6L792.7 414.3ZM512.8 423.1L521.8 426.2L531.5 423.4L527.5 415.4L522.8 410.3L521.5 410.3L511.6 416ZM534.1 425.6L531.5 423.4L527.5 415.4L541.1 410.4L541.5 411.3L541.8 423.7L541.5 424ZM553.7 413.1L552.8 420.5L541.8 423.7L541.5 411.3L553.5 412.9ZM562.7 408.2L568.8 413.7L567.8 426.3L564.4 429L552.8 420.5L553.7 413.1ZM578.9 426.9L567.8 426.3L568.8 413.7L576.3 409.8L584.6 418.1L581.6 425.2ZM593 429.7L601.3 426.4L591.5 414.8L584.6 418.1L581.6 425.2ZM600.5 407.7L604.6 408.1L610.5 421.3L604.4 427L601.3 426.4L591.5 414.8L592 412.8ZM620.7 412.2L612.1 421.1L615.9 423.4L630.7 425.2L627.6 415.6ZM627.6 415.6L630.7 425.2L631.4 425.8L641 421.2L640.7 411.5L635.7 410.5ZM640.7 411.5L641 421.2L645.1 423.9L656.2 423.1L659.8 413.8L644.1 408.3ZM660.5 413.3L659.8 413.8L656.2 423.1L658.9 429.1L675.2 423.9L675.6 423.1L669.7 418.4ZM677.8 406.3L684.1 412.3L684.5 414.5L683.8 419L675.6 423.1L669.7 418.4ZM697.7 425.2L704.4 413.6L684.5 414.5L683.8 419L690 425.5ZM697.7 425.2L704.4 413.6L705.7 412.4L713.8 417.9L713.8 420.3L703.4 431.5ZM718.7 431.5L713.8 420.3L713.8 417.9L722.8 414.7L726.6 415L726.8 426.5L720.1 432.2ZM726.6 415L730.3 413.2L738 418.8L741.2 425.3L734.5 429.4L726.8 426.5ZM752.2 425.7L752.9 412.2L747.7 410L738 418.8L741.2 425.3L747.9 428ZM762.5 427.7L767.3 424.4L771.3 412.2L771.2 411.2L756.4 410.1L752.9 412.2L752.2 425.7ZM771.3 412.2L767.3 424.4L777.1 430.5L783.2 421.8ZM771.3 412.2L783.2 421.8L791.2 421.7L791.2 421.7L792.7 414.3L772.7 409.2L771.9 409.8L771.2 411.2ZM512.8 423.1L509.9 433L520.8 435.8L521.8 426.2ZM534.1 425.6L531.5 423.4L521.8 426.2L520.8 435.8L525.3 438.9L531.6 434.7ZM534.1 425.6L531.6 434.7L539.7 441.4L548.8 436.9L541.5 424ZM541.5 424L541.8 423.7L552.8 420.5L564.4 429L563.2 433L554.6 438.7L548.8 436.9ZM583 439.8L570.3 442.9L563.2 433L564.4 429L567.8 426.3L578.9 426.9ZM583.8 440.3L589 439.4L593 429.7L581.6 425.2L578.9 426.9L583 439.8ZM589 439.4L598.9 445.8L606.3 436.3L604.4 427L601.3 426.4L593 429.7ZM615.1 440.7L606.3 436.3L604.4 427L610.5 421.3L612.1 421.1L615.9 423.4L624.3 439.4L623.2 441.5ZM631.4 425.8L630.8 433.3L624.3 439.4L615.9 423.4L630.7 425.2ZM644 436.9L642.3 437.8L630.8 433.3L631.4 425.8L641 421.2L645.1 423.9ZM644 436.9L645.1 423.9L656.2 423.1L658.9 429.1L659.1 432.2L653.8 438.6ZM675.2 423.9L658.9 429.1L659.1 432.2L668.3 436.9L674.8 434.6ZM690 425.5L683.8 419L675.6 423.1L675.2 423.9L674.8 434.6L683.4 440.4L687.2 437ZM697.7 425.2L703.4 431.5L704.9 436L704.8 436.4L696.1 438.7L687.2 437L690 425.5ZM704.9 436L718.7 431.5L713.8 420.3L703.4 431.5ZM720.1 432.2L726.8 426.5L734.5 429.4L732.5 437.7L726.2 443.7L725.1 443.3ZM742.5 438.5L747.4 433.7L747.9 428L741.2 425.3L734.5 429.4L732.5 437.7ZM753.3 442.2L747.4 433.7L747.9 428L752.2 425.7L762.5 427.7L764.7 443.6ZM778.3 433.2L777.1 430.5L767.3 424.4L762.5 427.7L764.7 443.6L765.3 444.2L766.4 445.2L768.4 445.8ZM785 435.4L790.1 434.3L791.2 421.7L783.2 421.8L777.1 430.5L778.3 433.2ZM791.2 421.7L801.1 424.8L803.4 437.5L794.5 437.7L790.1 434.3L791.2 421.7ZM524.2 444.9L525.3 438.9L520.8 435.8L509.9 433L507 435.3L506.9 439.1L517.6 448.4ZM531.6 434.7L525.3 438.9L524.2 444.9L533.6 454.3L539 452.2L539.7 441.4ZM539.7 441.4L539 452.2L544.7 454L554.2 442.8L554.6 438.7L548.8 436.9ZM554.2 442.8L561.7 454.9L570.2 449.5L570.3 442.9L563.2 433L554.6 438.7ZM583.8 440.3L583.5 452.8L576.5 454L570.2 449.5L570.3 442.9L583 439.8ZM583.8 440.3L583.5 452.8L587.5 455.2L598.9 449.2L598.9 445.8L589 439.4ZM598.9 449.2L602.9 453.9L609.2 453.9L615.1 440.7L606.3 436.3L598.9 445.8ZM616.8 456.3L625.9 448.3L623.2 441.5L615.1 440.7L609.2 453.9L614.5 456.6ZM625.9 448.3L623.2 441.5L624.3 439.4L630.8 433.3L642.3 437.8L640 447.7L634.1 452.7L632.4 452.6ZM640 447.7L642.3 437.8L644 436.9L653.8 438.6L656.1 449.4L651.9 450.3ZM653.8 438.6L656.1 449.4L659.1 451.7L666.9 448.2L668.3 436.9L659.1 432.2ZM683.4 440.4L674.8 434.6L668.3 436.9L666.9 448.2L677.7 451.5L683.2 446ZM687.2 437L683.4 440.4L683.2 446L691.9 450.9L695.7 449.8L696.1 438.7ZM696.1 438.7L695.7 449.8L703.3 450.6L707.8 446L704.8 436.4ZM704.8 436.4L707.8 446L714.7 447.6L725.1 443.3L720.1 432.2L718.7 431.5L704.9 436ZM741.6 448.5L728.2 446.4L726.2 443.7L732.5 437.7L742.5 438.5ZM741.6 448.5L745.5 452.1L753.3 442.2L747.4 433.7L742.5 438.5ZM746.6 456.2L765.3 444.2L764.7 443.6L753.3 442.2L745.5 452.1ZM785 435.4L781.6 447.2L769.1 446.5L768.4 445.8L778.3 433.2ZM785 435.4L790.1 434.3L794.5 437.7L790.9 449.3L786.8 451.3L781.6 447.2ZM515.6 453L522.4 462L513.8 470.7L511.7 470.4L507.6 460.7L510.4 455ZM515.6 453L517.6 448.4L524.2 444.9L533.6 454.3L530.1 461.5L522.4 462ZM533.6 454.3L539 452.2L544.7 454L549.9 460.3L540.9 470.2L539.1 469.5L531.7 465L530.1 461.5ZM554.2 442.8L561.7 454.9L558.8 461.7L557.2 462.1L549.9 460.3L544.7 454ZM563.9 465.5L558.8 461.7L561.7 454.9L570.2 449.5L576.5 454L574.8 461.9ZM582.9 470.4L584.4 470.9L586 470.5L588.8 467.2L587.5 455.2L583.5 452.8L576.5 454L574.8 461.9ZM587.5 455.2L598.9 449.2L602.9 453.9L601.1 466L588.8 467.2ZM611.4 466.6L603.4 468.1L601.1 466L602.9 453.9L609.2 453.9L614.5 456.6ZM624.4 468.3L625.3 468.3L632.4 452.6L625.9 448.3L616.8 456.3ZM642.3 462.2L651.9 450.3L640 447.7L634.1 452.7ZM643.6 465.9L659.4 455.3L659.1 451.7L656.1 449.4L651.9 450.3L642.3 462.2ZM666.4 462.8L677.8 461.9L677.7 451.5L666.9 448.2L659.1 451.7L659.4 455.3L659.8 456.2ZM691.9 450.9L691.5 465.4L679.6 464.2L677.8 461.9L677.7 451.5L683.2 446ZM695.7 449.8L703.3 450.6L704 459.9L694.8 467.8L691.5 465.4L691.9 450.9ZM704 459.9L716.1 464.1L716.7 463.6L714.7 447.6L707.8 446L703.3 450.6ZM725.1 443.3L726.2 443.7L728.2 446.4L728.7 461.9L726.8 462.8L716.7 463.6L714.7 447.6ZM741.6 448.5L745.5 452.1L746.6 456.2L746.8 459.1L739.8 465.5L728.7 461.9L728.2 446.4ZM746.8 459.1L755 461.5L766.4 445.2L765.3 444.2L746.6 456.2ZM769.1 446.5L772.2 460.7L768 467.4L758.3 464.4L755 461.5L766.4 445.2L768.4 445.8ZM769.1 446.5L772.2 460.7L785 460L786.8 451.3L781.6 447.2ZM513.8 470.7L523.3 481.7L524.3 481.9L531.7 465L530.1 461.5L522.4 462ZM526 483.1L539.1 469.5L531.7 465L524.3 481.9ZM557.2 462.1L549.9 460.3L540.9 470.2L543.4 476.8L547 478.8L551.8 477.8ZM567.4 473.8L564.9 484.9L551.8 477.8L557.2 462.1L558.8 461.7L563.9 465.5ZM567.4 473.8L582.9 470.4L574.8 461.9L563.9 465.5ZM586 470.5L593.9 481.3L603.8 472.1L603.4 468.1L601.1 466L588.8 467.2ZM619.1 471.3L617.8 474.8L606.3 475.9L603.8 472.1L603.4 468.1L611.4 466.6ZM624.4 468.3L616.8 456.3L614.5 456.6L611.4 466.6L619.1 471.3ZM625.3 468.3L637.3 476.1L643.8 472.4L643.6 465.9L642.3 462.2L634.1 452.7L632.4 452.6ZM659.8 456.2L659.4 455.3L643.6 465.9L643.8 472.4L646.1 473.1L653.4 473.3ZM666.4 462.8L662.9 473L659.4 475.5L653.4 473.3L659.8 456.2ZM666.4 462.8L677.8 461.9L679.6 464.2L676.3 474.5L662.9 473ZM694.8 467.8L695.7 470.9L687.1 481.2L677.6 478.6L676.3 474.5L679.6 464.2L691.5 465.4ZM694.8 467.8L695.7 470.9L704.6 477.8L706 477.9L714 470.9L716.1 464.1L704 459.9ZM726.8 462.8L716.7 463.6L716.1 464.1L714 470.9L722.8 478.6L725.9 473.9ZM728.7 461.9L739.8 465.5L740.9 473.8L737.6 477L725.9 473.9L726.8 462.8ZM740.9 473.8L750.3 479.9L751.1 479.6L758.3 464.4L755 461.5L746.8 459.1L739.8 465.5ZM768.9 475.8L769.8 473.5L768 467.4L758.3 464.4L751.1 479.6L763.4 480.5ZM774.4 473.9L789.3 465.6L785 460L772.2 460.7L768 467.4L769.8 473.5ZM526 483.1L528.8 485.5L543.4 476.8L540.9 470.2L539.1 469.5ZM528.8 485.5L529.8 487.9L545.9 488.6L547 478.8L543.4 476.8ZM547.7 492.4L545.9 488.6L547 478.8L551.8 477.8L564.9 484.9L565 485.2L559.7 490.3ZM568.8 487.3L565 485.2L564.9 484.9L567.4 473.8L582.9 470.4L584.4 470.9L577.5 486.6ZM577.5 486.6L584.4 470.9L586 470.5L593.9 481.3L594.3 483.3L584.3 491.1ZM601.5 487.6L607 485.9L606.3 475.9L603.8 472.1L593.9 481.3L594.3 483.3ZM617.8 474.8L606.3 475.9L607 485.9L611.5 487.3L618.2 481.8ZM624.4 468.3L625.3 468.3L637.3 476.1L633.2 486.9L618.2 481.8L617.8 474.8L619.1 471.3ZM652.7 494.5L652.7 494.6L640.3 491.1L633.3 488L633.2 486.9L637.3 476.1L643.8 472.4L646.1 473.1ZM659.4 475.5L661.1 481.1L652.7 494.5L646.1 473.1L653.4 473.3ZM659.4 475.5L661.1 481.1L671.7 487.7L677.6 478.6L676.3 474.5L662.9 473ZM687.8 491L671.8 488L671.7 487.7L677.6 478.6L687.1 481.2L689.6 489ZM695.7 470.9L687.1 481.2L689.6 489L696.5 490.1L704.6 477.8ZM714.6 488.8L706 477.9L714 470.9L722.8 478.6L724.1 485.8ZM724.1 485.8L722.8 478.6L725.9 473.9L737.6 477L733.8 483.3L727.5 487ZM737.6 477L733.8 483.3L744.7 491.9L749.1 489.3L750.3 479.9L740.9 473.8ZM763.4 488.6L751.1 490.8L749.1 489.3L750.3 479.9L751.1 479.6L763.4 480.5ZM767.1 495.3L766.8 495.3L763.4 488.6L763.4 480.5L768.9 475.8L772.9 482.5ZM772.9 482.5L768.9 475.8L769.8 473.5L774.4 473.9L785.2 479.9L786.5 483.3L778.7 488.2ZM547.1 494L535 500.8L530.3 496.1L529.8 487.9L545.9 488.6L547.7 492.4ZM558.2 501.4L559.7 490.3L547.7 492.4L547.1 494L553.2 506.3ZM558.2 501.4L559.7 490.3L565 485.2L568.8 487.3L570.7 501.6L568.1 502.5ZM578.3 506.9L570.7 501.6L568.8 487.3L577.5 486.6L584.3 491.1L586.3 497.9ZM595 500.6L599.4 495.8L601.5 487.6L594.3 483.3L584.3 491.1L586.3 497.9ZM601.5 487.6L607 485.9L611.5 487.3L616.2 498.6L612.4 500.4L599.4 495.8ZM618.2 481.8L633.2 486.9L633.3 488L629 496.6L622.3 500.8L616.2 498.6L611.5 487.3ZM636.5 503.6L629 496.6L633.3 488L640.3 491.1L641.5 501.6ZM641.5 501.6L640.3 491.1L652.7 494.6L653.1 495.6L649.6 501.6ZM666.3 500.5L669.6 498.6L671.8 488L671.7 487.7L661.1 481.1L652.7 494.5L652.7 494.6L653.1 495.6ZM687.8 491L671.8 488L669.6 498.6L680.7 502.5L684 501.4ZM687.8 491L684 501.4L686.5 502.6L701 503.9L703.8 499.6L696.5 490.1L689.6 489ZM710.9 497.5L703.8 499.6L696.5 490.1L704.6 477.8L706 477.9L714.6 488.8ZM710.9 497.5L714.6 488.8L724.1 485.8L727.5 487L731.8 500.1L714.8 501ZM731.8 500.1L732.2 500.5L743.9 493.3L744.7 491.9L733.8 483.3L727.5 487ZM749.1 489.3L744.7 491.9L743.9 493.3L747.4 502.1L757.5 500.9L751.1 490.8ZM766.8 495.3L760.7 502.9L757.5 500.9L751.1 490.8L763.4 488.6ZM767.1 495.3L772.9 482.5L778.7 488.2L776.5 495.7ZM535 500.8L537 508.6L521.9 510.6L518.5 502.5L519.4 501.3L530.3 496.1ZM552.4 509.4L538.8 511.1L537 508.6L535 500.8L547.1 494L553.2 506.3ZM554.1 511.3L552.4 509.4L553.2 506.3L558.2 501.4L568.1 502.5L563.8 509.9ZM572.9 516.7L578.1 510.9L578.5 509.8L578.3 506.9L570.7 501.6L568.1 502.5L563.8 509.9ZM578.3 506.9L586.3 497.9L595 500.6L600.3 513.3L578.5 509.8ZM595 500.6L599.4 495.8L612.4 500.4L601.8 513.3L600.6 513.6L600.3 513.3ZM601.8 513.3L612.4 500.4L616.2 498.6L622.3 500.8L622.8 508.9L616 516.9ZM636.5 503.6L629 496.6L622.3 500.8L622.8 508.9L628 512.6L638.4 512.4L638.9 511.9ZM636.5 503.6L641.5 501.6L649.6 501.6L648.3 510.7L638.9 511.9ZM648.3 510.7L650.4 512.8L665 507.6L666.3 500.5L653.1 495.6L649.6 501.6ZM710.9 497.5L703.8 499.6L701 503.9L701.1 514L712.5 517.5L713.9 517.3L718.1 512.7L714.8 501ZM714.8 501L718.1 512.7L728.9 512.4L733.7 506.7L732.2 500.5L731.8 500.1ZM733.7 506.7L732.2 500.5L743.9 493.3L747.4 502.1L742 509.7ZM761.7 511.2L761.3 511.5L742.4 510.1L742 509.7L747.4 502.1L757.5 500.9L760.7 502.9ZM538.8 511.1L537 508.6L521.9 510.6L520.2 516.4L521.4 520.7L523.1 521.6L538.6 511.7ZM538.6 511.7L523.1 521.6L526 526.6L531.3 529.1L539.3 516.9ZM557.2 521.2L546.2 527.1L539.3 516.9L538.6 511.7L538.8 511.1L552.4 509.4L554.1 511.3ZM572.9 516.7L563.8 509.9L554.1 511.3L557.2 521.2L565.7 526.6L570.1 523.7ZM754 521L744.3 523.4L742.4 510.1L761.3 511.5Z"/><g stroke-width="1.3" stroke-linejoin="round"><path fill="#5a5a5a" stroke="#5a5a5a" d="M771.8 413.7L768.4 424.1L776.8 429.3L782 421.9ZM578.2 505.4L571.6 500.7L570 488.3L577.5 487.8L583.4 491.6L585.1 497.6ZM734.7 506L733.4 500.8L743.3 494.7L746.2 502.1L741.7 508.5Z"/>
<path fill="#606060" stroke="#606060" d="M776.1 328.1L766 331.2L762.9 330.5L760 327.4L760.1 326.6L774.3 318.5L776.2 320.7ZM790.6 352.2L781.7 349.3L784.2 342.9L795.5 340.3L797.2 340.9L794.8 348ZM696.6 373.6L696.1 370.5L700.7 357.9L705.1 357.6L709.2 365L707.7 374.7L706.6 375.3L696.7 373.8ZM651.9 380.4L662.4 379.3L665.4 382.6L665.3 388.1L652.7 390.4L650.8 383.2ZM708.4 385.9L708.2 377L709.2 376.5L718.8 377.4L721.7 386.7ZM790.6 382.9L790 387.1L793.4 390.8L803.8 388.3L806.9 377.6L806.4 376.3L799.9 377ZM772.4 412.6L782.9 421L789.9 420.9L789.9 420.9L791.2 414.5L773.7 409.9L773 410.5L772.4 411.7ZM615 439.6L607.3 435.7L605.6 427.6L610.9 422.5L612.3 422.3L615.7 424.4L623 438.4L622.1 440.2ZM531.7 436.1L526.3 439.7L525.3 444.9L533.4 452.9L538 451.1L538.7 441.9ZM785.5 436.6L789.8 435.6L793.5 438.5L790.5 448.2L787.1 449.8L782.7 446.5ZM515.2 454.4L521 462L513.8 469.3L512 469.1L508.5 460.9L510.9 456.1ZM534.3 455.2L538.9 453.4L543.8 454.9L548.3 460.4L540.6 468.9L539 468.2L532.7 464.4L531.3 461.4ZM774.7 472.9L787.5 465.8L783.9 460.9L772.8 461.6L769.1 467.4L770.7 472.6ZM651.5 493.3L651.5 493.5L640.5 490.3L634.4 487.6L634.3 486.6L637.9 477.1L643.7 473.8L645.7 474.5ZM658.7 476L660.1 480.9L653 492.3L647.3 474.1L653.6 474.2ZM695.5 472.4L688.1 481.3L690.3 488L696.3 489L703.2 478.3ZM773.5 482L770.1 476.4L770.9 474.5L774.8 474.8L783.9 479.8L784.9 482.7L778.4 486.9ZM636.4 502.3L630.2 496.5L633.8 489.4L639.5 491.9L640.6 500.7ZM665.8 499.5L668.7 497.8L670.6 488.6L670.5 488.3L661.3 482.6L654 494.2L653.9 494.4L654.3 495.2ZM537.4 511.5L535.9 509.4L522.8 511.1L521.4 516.1L522.4 519.8L523.8 520.6L537.3 512.1ZM753.5 520.4L745.2 522.5L743.5 511L759.8 512.2Z"/>
<path fill="#666666" stroke="#666666" d="M549.6 165.9L545.1 155.3L547.6 153.2L555.6 153.7L560.3 161.7L553.6 166.7ZM737.7 166.3L748.5 163.9L753.6 167L749.1 177.3L739.4 174.5ZM548 206.1L558.4 205.4L562.2 219.2L557.1 223.6L556.1 223.6L548.1 208ZM579.4 207.3L579.1 209.8L581.4 216.4L598.2 219.3L598.3 218.8L582.9 206ZM536.6 241.8L537 241.8L542.4 248.7L537.9 259.4L537.3 259.5L532.2 250L533.4 244.6ZM738.7 272.8L728.1 274.6L728.1 274.6L729 269.4L735.9 264.2L739.7 267L740.8 270.2ZM765.2 274.6L771.6 263.1L771.7 263L774.2 265.4L779 275L775 275.9ZM738.8 288.7L730.1 285.6L727 290L730.8 301.2L731.7 302.2L736.7 299.1L739.9 292.9ZM759.8 325.5L774.2 317.3L773 313.4L758.3 315.4ZM533.8 339.2L537.8 327.9L541.1 326.1L549.1 332.1L537.6 341.8ZM769.9 346.2L760.2 346.5L762.7 332.5L765.7 333.3L770.7 341.4ZM557 348.8L564.3 356.8L564.9 361L557.2 365.5L553.4 364.5L549.1 351.7L556.1 348.5ZM595.3 350.5L588.7 350.3L582.2 354.3L581.3 362.9L584.3 365L591.8 361.8L596 351.3ZM616.6 358.9L608.5 370.4L605.3 366.4L605.4 353.3L608.9 353ZM727.6 355.2L719.7 357L719.7 363.2L725.7 368.6L727.6 367.2ZM515.3 375.2L516.9 363L519.8 361.6L527.9 366.3L526.8 373.7L523.2 378.8ZM631.4 379.1L623.6 371.5L624.7 367.4L634.7 367.7L636.7 370.6ZM683.5 386.3L689.5 387.6L690.1 387.2L694.7 375.5L694.5 375.3L680.3 374.6L678.7 379.7ZM693.8 390.5L691 389.3L690.3 389.7L689.5 395.1L692.4 402.3L700.9 403.4ZM539.5 402.8L539.8 410L528.3 414.3L524.2 409.9L531.2 402.5ZM751.3 424.8L752 413.4L747.5 411.5L739.3 419L742 424.5L747.8 426.8ZM534.8 426.6L532.7 434.4L539.6 440.1L547.4 436.2L541.1 425.2ZM583.9 439.2L588.4 438.4L591.7 430.4L582.1 426.6L579.9 428L583.3 438.8ZM645.4 435.9L646.3 424.9L655.7 424.3L657.9 429.3L658.1 431.9L653.7 437.3ZM742.3 437.4L746.3 433.4L746.7 428.7L741.2 426.5L735.6 429.9L734 436.7ZM791.8 422.9L800.2 425.5L802.2 436.3L794.6 436.5L790.9 433.6L791.8 422.9ZM747.7 455.1L763.9 444.7L763.5 444.2L753.5 442.9L746.7 451.5ZM704.9 459.3L715.3 462.8L715.8 462.5L714.1 448.6L708.2 447.3L704.3 451.3ZM515.1 470.7L523.4 480.3L524.3 480.5L530.7 465.7L529.3 462.7L522.6 463ZM693.6 468.3L694.4 471L686.9 479.9L678.8 477.7L677.6 474.2L680.4 465.2L690.8 466.3ZM527.3 482.3L529.7 484.3L542.4 476.8L540.2 471.2L538.6 470.5ZM569.3 486.3L566 484.5L565.9 484.3L568.1 474.6L581.6 471.6L582.9 472.1L577 485.8ZM624.5 469.3L625.3 469.3L635.6 476L632 485.3L619.2 480.9L618.8 474.9L619.9 471.8ZM557.3 500.6L558.6 491.4L548.6 493.1L548.1 494.5L553.2 504.7ZM559.2 500.4L560.5 491L565 486.6L568.2 488.4L569.8 500.5L567.7 501.4ZM732.3 499.1L732.7 499.4L742.7 493.2L743.4 492L734.1 484.7L728.7 487.8ZM749.1 490.4L745.6 492.5L745 493.6L747.8 500.6L755.7 499.7L750.7 491.6ZM768.4 494.4L773.1 484L777.8 488.7L776 494.7ZM533.8 501.2L535.5 507.8L522.6 509.5L519.8 502.6L520.5 501.6L529.8 497.2ZM554.9 510.4L553.6 508.9L554.2 506.4L558.2 502.4L566.2 503.4L562.7 509.3ZM537.6 513.1L524.3 521.6L526.8 525.8L531.4 528L538.2 517.5ZM571.6 516.9L563.8 511.1L555.6 512.3L558.2 520.8L565.4 525.3L569.2 522.9Z"/>
<path fill="#6c6c6c" stroke="#6c6c6c" d="M652.7 77.1L652.6 67.5L668.7 74.4L668.7 74.4L668.4 77.4ZM603.1 110L598.1 107.1L596.8 107.2L591.6 114.7L592.8 119.5L602.3 122.4L604 116.1ZM591.5 147.7L581.5 143.7L578.9 138.9L580.8 133.8L583.5 133L592.4 135.4ZM748.1 138.9L750.3 126.4L757.8 126.2L762.4 137.1L761.3 140.5L755.8 141.8ZM764.5 137.3L772 130.9L778.4 130.3L779.5 131.1L772.7 142.7L766.7 143.3L763.4 140.7ZM549 168L541.9 171.8L541.9 175.9L554.4 178.8L552.9 168.7ZM697.4 192.5L705.7 192.6L704 182.8L699.7 181.6L694.9 184.6L694.8 190.4ZM796 174.2L786.4 180L785.2 186.4L793.1 190.4L802.1 182.5L801.8 179.2ZM531.9 199.7L526.8 192.6L537.8 187.9L543 193.4L542.9 201.4L539.9 202.4ZM771.3 192.2L766.7 199.5L758.6 202.9L756.5 201.9L756.8 195.5L764.6 189.2L768.9 189.8ZM674.8 209.8L675 208.5L682.1 197.4L682.4 197.5L686.9 205.7L684.1 211.8ZM788.7 204.7L787 214.9L792.5 218.8L801.6 211.7L801.6 211.6L800.1 205.7L795.1 203.3ZM533.2 222.8L542.6 223.7L544.3 212.8ZM535.4 239.9L529 227.5L522.4 233L525.1 241.7L532.2 242.7ZM554.2 241.5L548.6 234.8L550.5 228.9L556 225.9L557.1 225.9L564.2 235.8ZM596.6 245.3L588.6 240.9L588.6 240.8L598.1 229.6L600.6 228.7L600.7 228.8L601.2 229.8ZM761.7 230.5L753.4 231L750.6 237.8L759.2 244.9L766.7 242.3L766.7 242ZM572.4 249.5L583.3 250.6L586.3 242.2L586.2 242.1L580.3 238.7L572.8 241.1ZM634.8 242.1L629.2 240.5L626.4 240.4L627.9 249.8L636.7 253.9L637.7 253.6ZM724 255.5L728.1 267.4L735 262.2L732.2 254.1L726.9 254.5ZM684.4 274.1L696.8 279.5L700 277.2L694.8 265.7L694.3 265.5L684.1 270ZM521.2 279.8L521.7 288.9L532.2 291.6L532.8 290.4L532.2 280.7L528.5 277.9ZM574.3 271.3L582.2 279.3L579 286.2L576 288.1L566.2 280.4L566.2 280.3L566.2 279.8L571.8 271.4ZM679.3 286.1L671.2 289.5L664.2 279.4L664.7 276.5L665.8 275.1L679.4 281.1ZM760.6 281.1L768.9 286.8L773.7 277.7L764.1 276.4L760.2 279.9ZM547.8 292.6L544 298.8L537.5 304.9L533.4 302.1L533.9 293.3L534.6 292.1L546.8 291.3ZM575.3 290L575 292.4L565.4 299.2L561.1 299.1L558.4 294.3L565.3 282.1ZM582.3 300.3L577.4 292.6L577.7 290.2L580.7 288.2L593.9 291.9L597 294.9L586.4 302.2ZM742.2 293.7L739 299.8L746.2 303.8L755.5 302L755.7 301.7L753.2 295.1ZM785.3 302.4L782.7 304.7L775.3 306.8L771.2 300.6L773.7 292.7L779.4 291ZM786.8 301.7L780.9 290.1L783.8 287.6L794.6 290.1L796.1 300.1ZM505.1 302.9L506.8 312.4L518.2 312.7L519.5 310.3L520.5 305L517.6 303L505.1 302.8ZM539.4 308.5L538.4 306.6L544.8 300.6L554.4 306.4L552 311.7L543.8 312.8ZM589.2 313.4L601.2 312.7L603.4 300.4L599.2 296.2L598.6 296.1L587.9 303.4ZM667.7 298.1L669.6 296.5L681.1 304.6L677.4 312.2L666.9 312.1L664.9 309.8ZM540.5 324.1L542.4 314.6L538 310.2L530 318.1L529.2 323L537.3 325.9ZM520.2 334.3L521 326.2L517.3 323L508.5 324.4L506.2 332.2L507.4 334.7L510.5 337.9ZM529.7 339.2L532.2 338.9L536.1 327.7L528 324.8L523.2 326.4L522.4 334.5ZM780.7 332L780.3 335.8L783.4 341.3L794.4 338.7L787 332ZM520.8 350.9L519 355.7L507.7 347.9L510.7 341.8ZM521.6 350L511.3 340.8L511.4 339.7L521.1 336L528.5 340.8L523.6 348.7ZM525.8 349.3L537.4 356.4L541.6 350.6L536.8 343.8L533 341.2L530.6 341.5ZM687.6 344.6L689.8 336.3L694.8 334.9L698.9 342.5L694.4 350.1ZM778.8 337.4L772.5 342.2L771.8 346.8L776 350.4L779.4 349L781.9 342.9ZM518.4 359.6L515.6 361L508.1 360.3L506.6 349.9L507.4 349L518.7 356.8ZM643.8 369.9L647.4 364.2L645.5 353.8L644 353.8L637.1 356.9L636.5 366.3L638.6 369.2ZM763.8 363.4L773.6 358.2L774.5 352.1L770 348.3L760.1 348.6L758.4 349.7L763.2 363ZM802.9 355.9L813.1 355.2L814.3 356.5L812.4 365.4L809.5 368L800.7 362ZM649.8 376.1L657.6 365.4L648.7 365.4L645.3 370.9ZM507.4 386L510.9 377.9L514.3 377.2L522.2 380.9L523.3 386.6L516 391.1L509.2 390.1ZM543.8 370.9L538.4 377.3L541.8 385.1L542.3 385.3L549 381.4L549 381.2L544.2 371ZM517 393L517.6 401.4L521.7 408.8L522.8 408.8L529.9 401.2L525.1 388.9L524.4 388.5ZM554.3 397L555.2 388.8L549.8 383.4L543 387.4L544.4 398.7L547.6 399.2ZM579.1 387.5L591.6 391.9L579.2 400L573.8 393.7L573.9 391.1ZM594.3 392.6L594.1 398.1L588 404.8L580.7 401.6L580.5 400.8L593 392.7ZM631.7 383.5L626 387.7L631.5 397L637.7 395.4L636.8 386.6ZM653.2 392.2L666 389.8L669.4 396.6L669.2 400.2L663.9 403.6L652.5 395.7ZM778.1 392.4L777.7 402.7L791.5 402.2L792.6 397.7L791.8 392.5L788.4 388.9ZM580.4 403.6L577.8 409.9L584.7 416.8L590.4 414.1L590.9 412.5L587.5 406.7ZM620 405.9L612.9 399.4L605.7 408.4L610.9 420L612.3 419.7L619.8 412ZM665 405.2L661.9 412.5L669.7 416.8L676.5 406.6L674.5 404.2L670.2 402ZM552.8 413.6L552.1 419.7L543 422.4L542.8 412.2L552.7 413.5ZM562.6 409.6L567.9 414.4L566.9 425.3L564 427.6L554 420.2L554.8 413.8ZM727.6 416L730.7 414.5L737.2 419.2L739.9 424.7L734.2 428.1L727.8 425.7ZM513.4 424.3L511.1 432.4L520 434.7L520.8 426.8ZM542.8 424.7L543.1 424.4L552.8 421.6L562.9 429L561.9 432.6L554.3 437.5L549.3 435.9ZM590.4 438.7L598.9 444.1L605.3 436L603.7 428L601 427.5L593.8 430.4ZM688.8 426L683.5 420.4L676.4 423.9L676.1 424.7L675.7 433.8L683.1 438.8L686.4 435.9ZM697.7 426.4L702.5 431.7L703.7 435.5L703.6 435.8L696.3 437.8L688.9 436.3L691.2 426.7ZM777.1 433.7L776 431.4L767.5 426.1L763.3 428.9L765.3 442.7L765.7 443.2L766.8 444L768.4 444.6ZM626.7 447.7L624.4 441.8L625.3 440.1L630.9 434.8L640.8 438.7L638.8 447.2L633.8 451.5L632.3 451.4ZM740.4 447.5L729.2 445.8L727.5 443.5L732.8 438.6L741.1 439.2ZM516.8 453.2L518.5 449.2L524.1 446.3L532.2 454.2L529.2 460.4L522.6 460.8ZM554.2 444.9L560.6 455.1L558.1 460.9L556.7 461.2L550.6 459.7L546.2 454.3ZM582.9 469.3L584.2 469.7L585.6 469.4L587.9 466.6L586.8 456.3L583.4 454.3L577.4 455.3L576.1 462ZM690.7 451.7L690.4 464.2L680.1 463.2L678.6 461.2L678.5 452.2L683.2 447.5ZM768.7 447.7L771.4 460.2L767.6 466L759.2 463.4L756.3 460.8L766.3 446.5L768 447ZM568.1 472.9L581.2 470L574.4 462.8L565.2 465.9ZM667.3 463.5L677 462.8L678.5 464.7L675.7 473.4L664.4 472.2ZM741.9 473.2L750.1 478.5L750.8 478.3L757.1 465L754.2 462.5L747 460.4L741 466ZM530.2 485.2L531 487.3L544.9 487.9L545.8 479.4L542.8 477.7ZM548.6 491.4L547.1 488.2L548 479.7L552.2 478.9L563.4 485L563.5 485.2L558.9 489.6ZM578.8 485.8L584.7 472.3L586.1 471.9L593 481.2L593.3 482.9L584.7 489.7ZM738.4 477.9L735.1 483.2L744.4 490.5L748.1 488.3L749.2 480.3L741.1 475.1ZM761.9 487.9L751.7 489.7L750 488.6L751 480.7L751.7 480.5L761.9 481.3ZM767.1 493.8L766.8 493.8L764 488.2L764 481.5L768.6 477.6L772 483.1ZM602.5 488.4L607.2 486.9L611 488.1L614.9 497.6L611.7 499.2L600.7 495.3ZM686.4 491.8L672.8 489.2L671 498.3L680.4 501.6L683.2 500.7ZM688.5 491.8L685.2 500.8L687.4 501.8L699.9 502.9L702.2 499.2L696 491.1L690 490.1ZM710.3 496.4L704.1 498.2L697.7 489.9L704.8 479.1L706 479.3L713.5 488.8ZM765.6 495.4L760.6 501.6L757.9 500L752.6 491.6L762.8 489.8ZM572.9 515.1L577.2 510.5L577.5 509.5L577.3 507.2L571.1 502.8L569 503.6L565.5 509.6ZM635.7 504L629.2 498.1L623.6 501.7L624 508.6L628.4 511.7L637.3 511.5L637.7 511.1ZM649.3 509.9L651.1 511.7L663.7 507.2L664.8 501.1L653.4 496.8L650.4 502ZM716.5 501.7L719.3 511.6L728.6 511.4L732.6 506.6L731.3 501.3L731 500.9ZM555.8 520.4L546.3 525.5L540.3 516.7L539.7 512.3L539.9 511.7L551.6 510.2L553.1 511.9Z"/>
<path fill="#727272" stroke="#727272" d="M628.8 71.5L622.6 66.8L613.7 71.9L620.4 79L631.2 81.1ZM670.8 78.7L679.2 82.9L686.2 79.3L682.1 71.7L670.8 74.9L670.5 77.8ZM790.3 80.5L787.5 84.2L780.5 79.3L776.6 72.7L785.7 68.6L792.9 72.1ZM562.4 94L552.2 89.5L554.5 83.3L565.1 82.8L563.5 93.3ZM631.7 82.8L632.9 84L631.8 89L631.1 89.8L618 89.4L621.2 80.9ZM670.3 80.4L678.9 84.8L679.9 89L678.1 95.6L670.9 99L664.8 91.5ZM697.6 89.1L694.1 79.9L699 72.7L702.4 76L703.6 87.6ZM756.3 89.8L756.5 86.6L765.4 83.3L767.3 85.3L769.6 91.9L762.9 95.5ZM780.1 94.5L772.1 91.8L769.7 85L779.5 80.9L786.6 85.8L786.5 86.1ZM571.3 96.9L575.7 96.5L580.7 101.1L577 109.8L572.1 108ZM682.2 90.1L694.9 93.7L694.2 99.9L693.9 100L687.4 100.2L680.3 96.5ZM746.2 121L742.5 120.5L732.3 112.4L733.2 108.7L736.5 106.4L749.8 109.4ZM788.8 105.6L790.5 113.8L780 114L777.1 107.5L781.2 100.9ZM782.5 131.1L787.4 142.7L795 142.1L798.4 133.3L788.4 128.9ZM555.6 151.6L560.2 142.8L551.3 136.1L546.9 144.4L547.7 151.1ZM722.2 144.7L735.9 143.2L738.2 144.4L737.5 149.1L735.4 152.2L722.8 150.7L721.3 146.5ZM755.8 151.5L760.3 158.2L767 155.3L765.3 145.2L762 142.6L756.6 143.9ZM548 166.5L540.8 170.4L538.9 168.8L537.8 156.8L543.6 156.1ZM584.3 171.4L579.7 168.6L571.3 170.4L571.1 172.3L580.2 180.9L580.9 180.4ZM762.4 170.9L756.8 167.1L755.2 167.7L750.9 177.8L751.8 179.5L758 180.4L764.3 174.2ZM772 177.5L770.9 188.1L773.2 190.5L777.3 191.1L782.8 186.7L784 180.3L776.3 175.2ZM773 192.8L777 193.3L780.8 201.3L774.6 207.8L768.5 199.9ZM722.2 207.3L734.4 205.5L730.9 214.7L730.3 214.9L723.6 212.2ZM547.3 208.8L555.1 224.1L549.5 227.1L543.9 223.8L545.5 212.6ZM579.8 217.2L579.3 222.7L573.9 224.8L565.4 219.7L577.6 210.9ZM531.3 244.4L530.1 250L517.4 254.7L513.8 251.3L514.2 249.8L524.1 243.4ZM689.8 251L684.9 249.3L683.2 243.9L687.5 236.1L697.5 243.2L697.7 246.1ZM544.5 262.4L539.4 260.4L543.9 249.6L552.7 250.5L555 254.5ZM599.1 251.8L600.2 265.2L599.4 266L588 259.2L587.6 255.2L597.6 250.7ZM644.1 269.9L645.7 267.8L646.1 265.6L642.6 257L639 255.9L638 256.3L629.1 264ZM659.1 261.4L665.9 270.6L673.7 263.9L673.1 259.6L666 254.5L662.4 254.7ZM695.6 263.5L700.2 261.4L705.6 252.2L698.8 247.8L690.9 252.8L695 263.3ZM702.1 261.4L713 265.6L717.4 254.9L714 251.7L707.5 252.2ZM516 276.6L520 277.9L527.4 276L529.3 266.4L518.1 260.1L515.2 269.4L514.2 274.9ZM548.4 271.8L546.6 278.3L548.2 280.5L563.6 279.9L563.7 279.4L555.6 271.4ZM613.8 278.2L602.2 272.2L600.5 269.7L600.9 267.8L601.6 267L609.4 264.8ZM623.4 270.3L618.3 279.9L616.2 278.4L611.6 264.4L617.5 261.8L618.9 262.3L623.2 265.9ZM643.8 278.2L651.3 284.5L652.3 284.8L661.7 278.9L662.2 276L647.3 269.9L645.6 272ZM657.8 262.6L664.7 271.9L664 273.5L662.9 274.9L648.1 268.9L648.5 266.6ZM696.5 265.5L701.2 263.3L712.2 267.6L713 273.3L704.2 277.5L701.7 277.1ZM581.2 286.7L584.3 279.9L590.7 277.2L594 290.2ZM636.8 280.4L632.3 286.8L624.1 287L619.7 282.9L619.3 282.3L619.2 281.8L624.4 272.2ZM639 281.2L634.6 287.7L639.2 297.6L640.2 297.8L649.8 285.9L642.3 279.6ZM657 292.8L653.9 286.5L663.1 280.7L670.1 290.7L668.5 294.4L666.6 296ZM697.9 281.5L693.2 289.1L696.2 294.9L706.9 288.8L703.4 279.6L701 279.2ZM739.1 286.7L730.5 283.6L728.2 276.3L739 274.5L741.3 283.2ZM789 274.5L783.8 278.1L784.3 286L795 288.4L798.8 283.8L799.1 281.3ZM503.9 293.9L509.1 290.4L517.7 292.9L517.2 301.4L504.8 301.1ZM623.1 288.6L618.6 284.4L610.3 299.4L620 302.4ZM630.8 303.9L637.6 298.9L632.9 289L624.4 289.2L621.3 303L622.7 304.9ZM682.3 302.9L681.7 288.8L680.3 288L672.3 291.4L670.6 295.1L681.9 303.1ZM707.8 290.7L712.8 293.7L712.9 297.7L709.6 303.1L702.7 304.2L697.3 300.5L697 296.8ZM571.4 308.6L566.1 311.4L561.2 301.3L561.3 301L565.4 301.1L571.4 308.2ZM584.5 317.4L575.9 312.9L573.7 309.4L573.8 309.1L581.6 302.6L585.6 304.4L586.9 314.1ZM702.5 313L709.2 319.4L712.1 319.5L717.5 314.6L710.1 305.3L703.2 306.3ZM737.5 301.2L744.7 305.1L743.7 314.3L741.7 315.5L731.6 309.4L732.5 304.2ZM787.5 303.9L784.9 306.1L791 317.1L793.2 317.7L793.7 317.6L801 308.6L800.9 306.1L796.8 302.3ZM638.7 320.7L639.8 321.6L639.7 322.4L638 326.1L633.5 328.6L625.4 325.7L627.8 317.3ZM685.1 320.6L683.2 328.2L689.5 333.9L694.6 332.5L698.2 329.4L698.3 327.9L694 320.6L689.8 319.6ZM713.6 320.9L715.7 332.7L727.9 328.8L723.8 316.1L719.1 316ZM757.8 325.8L757.6 326.6L751.3 328.7L743.5 320.6L743.6 317.3L745.6 316.1L755.7 315.1L756.3 315.8ZM566.5 324.9L576.4 330.3L574 337.8L568.4 338.6L560.1 328.4L562.8 324.4ZM627.3 341.4L629.6 339.4L632.2 330.5L623.9 327.5L623.6 327.5L620 339.4ZM696.5 334L700 330.9L711.4 337.3L711.4 340.4L700.6 341.8ZM558.7 347.3L568.5 340.7L574.1 339.9L574.6 340.9L573.4 349.6L565.9 355.2ZM796.7 348L799.1 340.9L802.4 339.4L806.7 341L812.3 353L802 353.7ZM551.5 365L544.2 368.2L543.7 368.1L537.7 361.9L538.8 358.5L543.1 352.6L547.2 352.4ZM567.1 361.2L569.4 363.1L578.9 363.1L579.8 354.7L573.9 351.6L566.5 357.1ZM654.9 348.6L657.2 350.3L659.5 363.1L658.5 363.4L649.2 363.5L647.3 353.1ZM661.4 363.3L659.2 350.4L672 351.1L674 352.2L675.7 361.2L674.3 363.7L666 366.3ZM745 362.4L748.9 365.1L761.2 363.4L756.4 350.2L751.7 349.8L744.8 357.9ZM513.5 374.8L515.1 362.9L507.6 362.3L505.2 363.9L504.5 371.4L510.1 375.5ZM542.3 369.4L536.3 363.3L529.9 366.4L528.8 373.6L536.8 375.8ZM556.3 367.7L556.3 375.2L550.4 380L545.6 369.9L552.7 366.8ZM558.3 367.4L558.3 375L566.4 377.7L568.6 373.9L568.1 365L565.8 363.1ZM597.5 373.7L597 367.3L604.4 368.2L607.5 372L607.7 375L607.3 375.3ZM651.9 378.7L662.4 377.5L664.4 368.1L660 365.2L659 365.6L650.9 376.6ZM739 368.4L740.8 376.3L745.3 377.8L749.3 374L747.8 367L744.1 364.5ZM799.3 363.1L808.3 369.2L806.4 374.3L800 375L790.6 365.2L792.5 362.7ZM705.3 390.3L706.6 386.6L706.3 377.4L696.5 375.9L691.9 387.7L694.9 388.9ZM723.8 387.1L720.9 377.6L726 372.2L733.9 382.2L733.1 385.6L725.8 390.4ZM745.5 385.3L744.3 380L740 378.6L736 382.3L735.4 385.5L737.7 386.3ZM541.3 387.5L542.7 399L540.2 400.8L531.8 400.5L527 388.4L540.8 387.3ZM621.4 388.7L614 397L614.1 397.5L621.1 404L627.8 401.7L630 398.1L624.2 388.5ZM707.6 391.4L708.8 387.7L722.2 388.6L724.2 391.9L724 393.5L716.4 398L710.6 398.7ZM750.8 393.1L744.4 397.4L738.9 387.9L746.9 386.9L751.3 390.9ZM764.5 399L771.9 408.3L772.5 407.7L775.6 403.1L776 392.8L771.4 389.4L768.8 390.3ZM546.9 401.4L543.8 400.9L541.4 402.7L541.7 409.6L542.1 410.4L551.9 411.6ZM561.6 407.8L554.1 411.9L553.9 411.7L548.8 401.2L555.3 399.1L561.2 402.1ZM651.3 396.8L645.9 400.4L645.3 408L659.1 412.8L659.7 412.4L662.9 404.8ZM676.7 403.6L688.1 396.6L691 403.9L684 411L678.7 406ZM713.6 416.6L706.6 411.9L706 406.2L710 400.9L715.8 400.1L721.4 413.8ZM726.5 413.9L729.7 412.3L732.7 403.6L725.4 395.3L717.6 399.8L723.2 413.6ZM514.1 422.4L521.7 425L530 422.6L526.6 415.8L522.6 411.4L521.5 411.4L513 416.3ZM534.6 424.6L532.4 422.7L529.1 416L540.4 411.8L540.8 412.6L541 423L540.8 423.2ZM592.6 428.7L599.7 425.8L591.3 416L585.5 418.8L582.9 424.9ZM753.5 441L748.4 433.6L748.9 428.8L752.5 426.7L761.4 428.5L763.3 442.3ZM540.8 441.9L540.1 451L545 452.5L553.1 443.1L553.4 439.5L548.5 438ZM654.8 439.2L656.7 448.5L659.3 450.4L666 447.5L667.2 437.8L659.3 433.7ZM682.3 440.8L674.9 435.8L669.4 437.8L668.2 447.5L677.4 450.2L682.1 445.6ZM742.4 447.5L745.6 450.5L752.1 442.3L747.2 435.2L743.1 439.2ZM610.7 465.6L604 466.9L602.1 465.1L603.6 455L608.8 455.1L613.3 457.3ZM624.5 467L625.3 467L631.4 453.4L625.7 449.7L617.9 456.6ZM666.4 461.7L676.2 461L676.1 452.1L666.9 449.3L660.2 452.3L660.4 455.3L660.8 456.1ZM695.8 451L702.4 451.6L702.9 459.5L695.1 466.2L692.3 464.2L692.6 451.8ZM724.9 444.5L725.9 444.8L727.6 447.2L728.1 460.7L726.4 461.5L717.6 462.2L715.9 448.2ZM587.6 470.6L594.3 479.7L602.6 471.9L602.3 468.5L600.4 466.7L589.9 467.8ZM617.4 471.3L616.4 474.2L607 475.1L605 472L604.7 468.7L611.2 467.5ZM623.2 467.5L616.8 457.6L615 457.8L612.4 466.1L618.7 470ZM658.6 457.5L658.3 456.7L644.6 465.9L644.8 471.6L646.7 472.2L653.1 472.4ZM665.4 463.7L662.5 472.3L659.5 474.3L654.5 472.5L659.9 458.1ZM725.7 463.9L717.3 464.5L716.8 464.9L715.1 470.5L722.4 477L725 473.1ZM601.4 486.5L606 485L605.4 476.8L603.3 473.6L595.2 481.3L595.5 482.9ZM660.7 475.9L662.1 480.7L671.2 486.3L676.2 478.6L675.1 475.1L663.7 473.8ZM686.7 490.3L673.1 487.7L673.1 487.4L678.1 479.7L686.1 481.9L688.3 488.6ZM714.8 487.6L707.5 478.2L714.3 472.2L721.9 478.9L722.9 485ZM579.5 506.8L586.4 498.9L594.1 501.2L598.7 512.4L579.7 509.2ZM596 501.4L599.7 497.3L610.8 501.3L601.7 512.3L600.7 512.5L600.5 512.3ZM760.5 510.6L760.1 510.8L743.9 509.7L743.6 509.3L748.3 502.7L756.9 501.8L759.7 503.4Z"/>
<path fill="#787878" stroke="#787878" d="M650.3 61.6L652.1 66.3L668.4 73.2L668.4 67.2L663.2 61.7L651.2 60.6ZM670.8 73.3L670.8 73.4L682.4 70.1L686.5 62.3L685 59.1L678.4 59.8L670.9 67.4ZM552.8 77.7L554.5 81.3L565.3 80.8L569.1 76L568 72.3L563.3 69.2L555 68.6L551.8 71.8ZM542.4 92.5L550.1 89.1L552.4 83L550.8 79.6L543 83.9L540.4 90.7ZM727.4 85.3L725.5 81.2L717.2 79.3L714.8 82.3L713.9 88L717.2 92.5L720.4 93L726.4 88.8ZM729.8 85.8L740.4 82.2L740.2 93L738.5 94.3L728.9 89.2ZM563.6 96L561.7 101L568 107.6L570.5 107.6L569.7 96.7L564.6 95.3ZM678.4 97.7L685.5 101.4L678.3 111.1L674.6 111.2L671.1 103.8L671.4 101.1ZM728 90.7L721.8 95L727 102.5L731.9 106.8L735.1 104.5L737.8 96ZM551.1 111.1L560.3 115.7L566.8 109.1L560.3 102.3L551.3 108.6ZM725.6 116.3L730.1 112.1L731 108.6L726.3 104.4L715.3 109.4L723.5 115.6ZM762.1 120.2L763.1 117.3L762.5 110.8L759.9 108.6L753.5 108.9L752 109.8L748.4 121.3L750.4 123.8L757.9 123.6ZM605.7 117.5L604.1 123.6L605.5 126.5L606.1 126.5L617.5 122.3L615.4 118ZM657.6 119.3L659.5 117.8L671.8 115.6L671.6 126.8L663.6 127.1L658.2 122.7ZM723.7 127.7L724.5 118.4L722.3 117.7L710.6 121.1L708.5 128.9L709.3 129.5L719.3 130.7ZM781.4 129.1L781.7 129.2L787.5 127.1L791.3 116.9L790.5 116.1L780 116.3L778.5 120.8L780.2 128.3ZM538.5 134.5L536.9 140.8L545.8 142.8L550.1 134.7L549.8 133.8L549.1 132.8L545.7 130.2ZM552 133.9L562.7 129.8L564.4 140.8L561 141.4L552.3 134.8ZM602.2 140.7L596.4 150.5L593.5 148.2L594.3 136L600.1 135.5ZM677.9 137.1L678.5 132.9L687.9 129.6L693 131L693 137.7L682.9 144.4L678.3 139.2ZM543.1 153.9L537.3 154.6L532.7 152.8L531.5 147.2L535.7 143.1L544.8 145.1L545.6 151.7ZM632.7 151.4L636.2 154.3L638.7 154L645.5 139L645.2 138.5L633.4 140.4L631.4 147.8ZM767.3 145.4L769 155.6L774.9 158.6L781.5 151.5L781.6 149.8L773.2 144.7ZM739 150.8L746.8 156.4L747.6 162.2L737 164.6L735.3 162.8L736.8 153.8ZM754.7 153.6L759 159.9L756.2 164.8L754.7 165.4L749.9 162.5L749.1 156.9ZM763.9 169L758.3 165.3L761.2 160.1L767.8 157.3L773.6 160.3L773.8 161.1ZM555 168.5L556.5 178.9L557.5 180.5L563.9 180.1L568.8 172L569 170.1L564.2 163.9L561.8 163.5ZM610.4 176.4L608.3 165.8L607.9 165.6L595 168.7L594.5 169.7L597.3 175.2ZM613.2 177.1L623 173.8L625.6 168.6L617.8 162.5L610.4 165.9L612.5 176.4ZM651.1 181.1L654 167.3L646.9 165.4L643.8 176.1L645.4 180.2L648.2 182.4ZM723.2 179.1L716.4 178.2L715.4 177.4L713 169.9L723 164.8L725.1 165.6ZM764.8 170.3L774.5 162.5L776.3 165.7L775.5 173L771.3 175.3L766.7 173.5ZM777.8 173.4L785.5 178.6L795.1 172.8L795 172.6L791.1 167.2L778.7 165.8ZM525.4 191.1L536.4 186.4L536 183.7L525.1 178.1L520.4 183.9L521.3 190.6ZM557.6 182.7L555.5 186.4L561.2 194.1L567.4 186.4L563.6 182.2ZM649.1 186.8L649.3 184.3L652.2 183L661.4 181.8L666.1 194.3L665.6 195L654.5 196.3ZM677.2 191.7L667.8 193.8L663.3 181.4L668.4 177.3L676.5 182.3ZM520.4 205.6L515.5 199.5L516.2 197.1L520.4 192.5L524.4 193L529.3 199.9ZM547.9 204.1L558.1 203.5L560.9 201.7L560.1 196.1L554.1 188L545.2 193.7L545.2 201.8ZM586 192.7L579.2 187.5L575.1 190.3L575.2 202.1L578.7 205.3L582.2 204L586.8 201ZM588 192.3L594.7 186.3L601.1 192.8L596.3 200.2L588.8 200.5ZM778.7 192.9L784.2 188.5L792 192.4L793.8 201.3L787.5 202.7L782.6 200.9ZM573.5 203.6L562.9 203.1L560.1 204.9L563.8 218.6L564.2 218.5L576.8 209.3L577.1 206.9ZM696.5 206.6L688.8 206.7L686 212.6L687.8 215.9L698.4 213.6L699.8 210ZM732.7 214.7L738.7 219.2L746 211L746.2 205.8L738.4 202.2L736.3 205.1ZM525.4 218.4L528.3 223.7L527.9 225.7L521.3 231.3L514.2 232.7L512.5 229.8L517.3 218.9L523 217ZM623 225.9L624.2 223.5L625 218.3L619.3 216L618.4 216.5L609.6 225ZM637.1 217.1L633 214.2L627.2 218.2L626.4 223.6L635.4 227.8L642.2 226.3ZM746.8 212.8L750.1 218.2L748.9 226.1L741.1 224.5L739.7 220.8ZM682 242.1L686.3 234.4L686.3 230.1L684.7 228.4L675.8 227.7L677.7 240.9ZM773.8 237.5L768.2 241.2L763.2 229.8L763.7 229.1L774.6 225.2L780.5 231.2ZM789.7 237.7L788.2 233L782.5 232L776.1 238L785.1 242ZM519 258.2L518.1 256L530.8 251.2L536 260.8L530.3 264.6ZM682.9 268.4L676 263.9L675.4 259.4L683.9 251.4L688.9 253.1L693.1 263.9ZM790.5 264L788.7 257.5L778.4 254L775.4 254.6L772.9 261.6L775.4 264.1L789 266.2ZM543.2 264.3L538.1 262.3L537.5 262.4L531.8 266.1L529.9 275.7L533.6 278.6L544.4 277.4L546.2 270.8ZM556.9 270L565 278.1L570.7 269.6L564.1 258.3L563.5 258.3ZM638.1 279.1L625.4 270.7L625.2 266.1L627.9 265.2L643.3 271.2L641.4 277.5ZM547.1 289.5L534.9 290.3L534.2 280.6L544.7 279.4L546.3 281.6ZM683.6 275.9L681.7 281.4L681.6 286.3L682.9 287.1L691 288.7L695.7 281.2ZM705.3 279.3L714 275.1L716.2 276.2L716.3 289.3L713.8 291.6L708.8 288.5ZM728.6 283.7L726.4 276.4L726.3 276.4L718 276.1L718 288.9L725.6 288ZM782.1 286.1L781.7 278.5L779.8 277.3L775.8 278.3L771 287.5L773.8 290.2L779.3 288.5ZM609.1 299.1L617.5 284.1L617.1 283.6L604 289.1L600.7 294.6L604.9 298.9ZM522 310.5L523 305.3L531.9 303.9L536 306.7L537 308.6L529.1 316.5ZM620.7 306.2L619.2 304.2L609.5 301.2L605.3 301L603.1 313.3L604 314.4L612.9 317.1L620.4 307.3ZM646.2 314.9L643.2 301.8L650.4 302L657.4 310L651.1 313.6ZM517.6 314.4L506.6 314.1L505.9 318.6L508.3 322.5L516.7 321.1ZM519.8 314.6L518.9 321.2L522.4 324.2L526.9 322.7L527.8 318.1L521 312.4ZM586.4 318.8L585.8 324.9L598.9 327.2L601.6 315.8L600.8 314.8L588.9 315.5ZM645.9 316.8L641.9 321.2L641.8 321.9L656.4 327.3L650.6 315.6ZM652.6 315.2L658.5 327.2L658.8 327.4L664.4 324.7L665.4 313.9L663.4 311.6L659 311.4ZM595.7 341.9L590.2 336.2L584.9 327.7L585.7 326.7L598.8 328.9L601.3 332.2ZM644.4 335.9L638.5 328.1L633.9 330.6L631.3 339.5L637.7 341.6ZM734.1 333.2L743 337.4L744.4 337.5L749.8 330.3L742.1 322.2L733.1 331.4ZM595.3 348.6L589.1 348.4L583.1 343.4L589.9 338.3L595.2 343.6ZM608.2 350.8L604.7 351.1L598 349.7L597.3 348.8L597.2 343.5L602.8 333.8L608.6 333.8L613.6 341.2ZM618 357.4L610.3 351.4L615.7 341.9L618.9 341.5L626.5 343.6L627.2 351.9L619 357.6ZM628.6 343.5L630.8 341.5L637.2 343.6L642.8 351.7L635.9 354.7L629.3 351.6ZM655.8 344.6L669.9 336.7L671 349.3L658.4 348.7L656 346.9ZM728.6 351.4L726.3 346.6L714.5 343.8L712.7 350.9L719.2 355.1L727.3 353.2ZM522.6 352.2L520.9 357L520.6 359.9L528.6 364.5L535.2 361.4L536.4 358L524.7 350.8ZM620.3 359L624.4 365.7L634.5 366L635.1 356.6L628.4 353.4ZM694.9 369.2L685.8 361.4L694.7 353.2L699.5 356.8ZM706.9 356.3L711.5 352.4L717.7 356.4L717.8 362.5L710.7 363.3ZM791.6 353.9L792.2 360.8L798.6 361.1L800.7 355.3L795.6 349.9ZM664.3 377.8L666.3 368.5L674.5 365.9L678 373.7L676.4 378.8L667.3 381.2ZM676.4 364.9L679.8 372.8L694.2 373.5L693.7 370.3L684.4 362.5L677.7 362.5ZM710 374.8L719.5 375.8L724.6 370.3L724.8 369.9L718.7 364.4L711.5 365.3ZM762.6 365.5L763.9 372.7L757.5 376.7L751.6 373.8L750 366.8L762 365.1ZM782 367.9L774.5 360.1L764.7 365.2L766.1 372.6L771.1 376.1L780.9 371.8ZM524.5 380.6L528 375.6L536.1 377.8L539.5 385.6L526.1 386.7L525.5 386.2ZM649.5 379.7L648.5 377.7L643.8 372.3L638.5 371.7L633.1 380.3L633 381.7L638.2 385L648.4 382.5ZM667.5 388.5L667.6 383.1L676.6 380.7L681.3 387.1L670.9 395.1ZM752.2 389.3L747.8 385.3L746.6 379.9L750.6 376L756.4 378.8L755 387.1ZM757.1 387.2L758.5 378.6L765 374.5L769.9 378L770.4 387.1L767.8 387.9ZM788.2 383L787.5 387.2L777.1 390.7L772.4 387.3L772 378L781.8 373.6ZM508.5 392.1L504.6 397.1L505.6 400.9L515.6 400.9L515 393ZM601.8 390.6L611.3 397.2L611.4 397.7L604.3 406.6L600.7 406.3L596.1 398L596.3 392.4L597.6 391.2ZM648.9 384.6L650.7 391.6L650 395L644.8 398.4L639.8 395.8L638.9 387ZM705.7 392.3L708.7 399.5L704.7 404.7L702.7 404L695.5 391ZM752.9 393.5L756 397.2L762.4 397.9L766.4 389.7L756.2 389L753.4 391.2ZM703.4 413L686.1 413.9L685.8 411.9L692.9 404.6L701.8 405.6L703.9 406.4L704.5 412.1ZM731.5 412.6L738 417.4L746.3 409.9L741 403L734.4 404.1ZM756.8 399.2L757.4 409.4L770.1 410.4L770.8 409.2L763.5 400ZM628.7 416L631.4 424.1L631.9 424.6L640 420.7L639.7 412.6L635.5 411.7ZM678 408L683.3 412.9L683.6 414.7L683 418.4L676.2 421.7L671.4 417.9ZM696.9 424.4L702.7 414.4L685.6 415.2L685 419.1L690.3 424.6ZM699 424.4L704.7 414.5L705.8 413.6L712.7 418.2L712.7 420.3L703.9 429.8ZM718.9 430.2L714.8 420.6L714.8 418.6L722.5 415.9L725.6 416.2L725.9 425.9L720.1 430.8ZM533 426.5L530.8 424.7L522.7 427L522 435L525.7 437.5L530.9 434ZM581.4 438.9L570.4 441.5L564.3 433L565.3 429.5L568.2 427.2L577.8 427.8ZM630.7 426.4L630.2 432.7L624.7 437.8L617.6 424.4L630.1 425.9ZM643.2 435.8L641.8 436.6L632.1 432.8L632.6 426.4L640.8 422.5L644.2 424.8ZM705.7 435.1L717.4 431.3L713.3 421.7L704.5 431.3ZM721.3 432.8L727 428L733.4 430.4L731.7 437.3L726.4 442.3L725.5 442ZM784.8 434.4L789.1 433.5L790 423L783.4 423.1L778.3 430.4L779.3 432.5ZM523 444.1L523.9 439L520.1 436.3L510.8 434L508.3 435.9L508.2 439.1L517.3 447.1ZM582.8 441.2L582.6 451.8L576.7 452.8L571.4 449L571.5 443.4L582.2 440.9ZM599.8 448.8L603.3 452.8L608.6 452.8L613.6 441.6L606.2 437.9L599.9 445.9ZM697 439.7L696.7 448.9L703 449.5L706.7 445.7L704.2 437.7ZM783.7 436.3L780.9 446.4L770.2 445.8L769.6 445.2L778.1 434.4ZM564.5 464.3L560.2 461.2L562.6 455.4L569.8 450.8L575.1 454.6L573.7 461.3ZM642.2 460.8L650.3 450.8L640.3 448.6L635.4 452.8ZM626.8 467.8L637.2 474.6L643 471.4L642.8 465.7L641.6 462.5L634.5 454.2L633 454.1ZM729.4 463L738.9 466L739.7 473.1L737 475.8L727.1 473.2L727.8 463.8ZM724.9 484.9L723.9 479L726.4 475.2L736 477.8L732.8 482.9L727.7 485.9ZM545.9 493.9L535.6 499.7L531.6 495.7L531.2 488.7L544.9 489.3L546.5 492.5ZM594.8 499.4L598.5 495.4L600.3 488.4L594.2 484.7L585.7 491.3L587.3 497.1ZM712.2 497L715.4 489.4L723.6 486.8L726.6 487.8L730.3 499.2L715.6 500ZM603.6 512.4L612.8 501.3L616 499.6L621.3 501.6L621.8 508.6L615.9 515.5Z"/>
<path fill="#7e7e7e" stroke="#7e7e7e" d="M594.6 66L607.8 69.7L609.7 71.5L604.9 81.4L597 80.5L593.8 67.3L594.1 66.4L594.6 66ZM653 92L644 97.7L633.9 89.4L634.9 84.2L639 82.7L647.4 82.7ZM613 93.1L616.6 91L630.2 91.3L625.2 103.2L617.6 103.5ZM654.1 93.9L655.4 104.6L649.8 108.5L644.6 105.4L645.3 99.4L654 93.9ZM739.9 96.2L737.2 104.7L750.3 107.7L751.8 106.7L748.2 95.8L741.6 94.9ZM779.5 99.8L775.3 106.6L764.3 108.8L761.8 106.7L763.9 97.5L770.9 93.6L779 96.4ZM643.5 107.3L648.8 110.5L651 115.8L639.5 122.3L636.1 111.6ZM656.3 117.5L658.2 116.1L660.3 108L656.2 106.7L650.9 110.4L652.9 115.4ZM695.4 101.6L695.1 101.8L689 113.7L698 114.7L703.1 107.3ZM590.7 120.8L589.4 115.9L578.5 113.8L575.5 124.3L580.5 131.6L583.2 130.8ZM618.5 136.5L624.4 130.3L624.5 129.8L620.6 123.9L619.2 123.3L607.6 127.6ZM728.1 128.5L725.7 127.4L726.5 118.2L731.2 113.9L741.2 121.8L735.6 127ZM763.5 135.9L759.1 125.4L763.2 122.1L770.8 129.7ZM616.4 140.3L613.7 143.1L603.9 139.8L601.9 134.5L605.4 128.6L606 128.6L617 137.8ZM658.8 140.5L664.5 128.9L672.5 128.6L676.4 132.5L675.7 136.7ZM706.2 130.3L699.2 129.4L695.5 130.8L695.5 137.4L698.3 144.1L706.4 138.7L707 130.9ZM719.9 143.6L718.9 132.8L709.1 131.7L708.4 139.5L712.1 145.7L719 145.3ZM739.1 142.9L743.7 139.8L736.4 129.1L729 130.6L736.8 141.6ZM580 145.1L577.4 140.2L569 142.8L569.9 156.4L578.2 154.1ZM592.1 149.9L582.1 145.9L580.3 154.9L582.1 157.4L592.5 157.7L595.2 152.6L595.1 152.2ZM613.1 144.9L612.8 148.9L604.7 154.2L597.6 152L597.5 151.6L603.3 141.7ZM660.4 150.5L657.8 142.4L658.1 142.1L675.2 138.3L675.6 140.5L666.2 151.6L661.7 151.6ZM693.9 139.4L684.1 145.9L686.7 152.2L696.4 149L696.7 146ZM718.9 147.3L712.1 147.6L706.2 154.6L707 157.7L719.4 155.3L720.3 151.4ZM740.6 144.3L745.2 141.2L746.9 140.5L754.4 143.4L753.6 151L747.8 154.5L740 148.9ZM784.1 149.6L787.5 144.7L794.9 144.1L795.6 145.1L797.6 152.4L791.5 156.4L784 151.2ZM570.7 168.5L579.1 166.7L579.9 158.8L578 156.3L569.8 158.5L566.1 162.5ZM631.2 153.3L634.6 156.2L629.6 165.7L627 167L619.2 161L619.8 155.3ZM687.1 172L679.2 162.5L679.4 161.2L685.1 156.3L695.4 166.2ZM734.7 153.9L733.2 162.8L726.2 163.5L724.2 162.7L721.5 156.3L722.4 152.4ZM776.2 160.8L776.1 160L782.6 152.9L790.2 158.2L790.3 165.5L778.1 164.1ZM539.7 172.1L539.7 176.3L537 182L526.3 176.5L526.1 170L537.7 170.5ZM593.8 182.5L582.9 180.8L586.3 171.8L592.8 170.7L595.5 176.1ZM652.9 180.9L661.9 179.7L667 175.7L667.3 172.9L660.1 165.2L655.9 166.9ZM685.6 177.2L677.5 180.8L669.4 175.8L669.6 172.9L678.1 163.9L686.1 173.4ZM586.8 190.7L580.3 185.7L581.7 182.7L582.3 182.2L593 183.9L593.3 184.9ZM692.6 190.7L683 195L682.7 195L679.2 192.1L678.5 182.8L686.6 179.2L692.7 184.6ZM765.7 175.5L759.5 181.7L765 187L769.2 187.6L770.3 177.3ZM606.5 192.3L614.5 202.2L622.7 197.6L610.3 188.7ZM653.8 204.7L654.3 205.8L660.3 208.9L665.8 198.5L665.6 196.9L654.9 198.2ZM729.4 191.2L730.4 193L718.7 202.8L713.2 201.4L711.9 195.4L713.3 193.9ZM722.2 205.6L720.3 203.4L731.8 193.7L735.4 196.7L737.1 200.9L734.9 203.8ZM526.4 216.2L538.7 204.1L530.6 201.4L521.4 207.4L523.9 214.8ZM651.4 205.8L651.9 207L648.5 212.7L638.5 215.4L634.3 212.5L634.5 210L641.6 205.1ZM720 206.8L718.2 204.7L713 203.3L709.6 207.8L715.2 216.8L721.4 211.8ZM767.3 201.3L773.4 209.2L772.8 211.8L763.2 212.4L759.2 204.7ZM639.2 217.3L644.1 226.4L647.8 229.3L652.3 223.4L648.9 214.6ZM686.2 226.8L687.6 217.7L698.5 215.4L701.3 226.1L687.8 228.4ZM722.3 213.9L715.9 219L715.2 225.1L720.9 227.7L722.9 226.3L729.2 216.7ZM774.3 223.2L775.5 217L773.1 213.4L763.4 214.1L762.8 215.7L763.5 227.1ZM530.6 224.4L530.2 226.4L536.8 239.1L537.2 239.1L546.2 234.6L548.2 228.6L542.5 225.2L532.7 224.2ZM587.3 240.6L596.7 229.6L584.1 229L581.3 237.2ZM625.7 238.1L624.4 237.5L624.3 227.9L625.4 225.5L634.2 229.6L628.4 238.2ZM721.6 234.3L719.9 229.5L714.1 226.8L707 229L706.7 233L714.8 244.1ZM723.7 234.2L722 229.5L724 228.1L736.4 228.6L734.2 237.2L726.6 235.8ZM552.6 248.7L544 247.8L538.7 240.9L547.4 236.5L552.9 243.1ZM596.6 249.5L587.1 253.7L585.1 251.3L587.9 243.2L595.5 247.3ZM651.2 239.3L651.8 246.7L643.2 254.8L639.5 253.6L636.5 241.8L648.3 236.2ZM681 244.4L682.7 249.8L674.4 257.8L667.3 252.7L670.9 243.1L676.6 243.2ZM718.9 253.5L722.6 253.8L725.6 252.7L725.6 238.2L722.5 236.4L715.8 246.2L715.5 250.2ZM727.5 252.5L727.5 238L735.3 239.3L739.4 245.2L739.4 247.3L733 252ZM753 254.6L771.7 252L766.8 243.9L759.3 246.6L752.6 254.2ZM783.5 243.8L777.4 252L774.5 252.5L773.6 251.4L768.9 243.5L768.9 243.3L774.3 239.7ZM790.8 239.4L794.7 242.5L796 249.7L796 249.7L790 255.6L779.8 252.3L786.1 243.9ZM545.3 263.5L555.9 255.6L562 257.8L555.5 269.5L548.3 269.9ZM571.1 252.9L580.6 263.2L579.4 265.5L574.4 269L572 269L565.6 257.8ZM582.9 263.7L587.3 260.4L598.7 267.2L598.2 269.2L592.3 273.1L581.8 266ZM682 274.2L680 279.8L666.5 273.9L667.2 272.4L675 265.6L681.7 270.1ZM718.8 256.2L722.5 256.5L726.8 268.9L725.9 274.3L717.3 274L715.1 272.8L714.3 267.1ZM743.1 282.4L740.7 273.6L742.8 271L751.7 271.9L756.7 278.8ZM515.6 278.8L510.3 288.7L518.6 291.2L519.9 288.9L519.4 280.1ZM599.3 293.6L598.7 293.5L595.5 290.4L592 276.9L593.3 275.2L599.3 271.2L601.2 274L602.6 288ZM617.2 282.2L617.2 281.7L615.2 280.2L603.1 274L604.6 287.6ZM521.1 290.8L531.6 293.5L531 302.2L522.1 303.6L519.2 301.6L519.7 293.2ZM550.1 293.2L546.5 299.1L555.8 304.8L559.1 300.1L559.2 299.8L556.6 295.2ZM580.6 301.2L575.9 293.7L566.5 300.2L572.8 307.6ZM755.3 294.2L757.8 301L769.3 299.8L771.8 291.7L768.9 288.8L760.1 282.7ZM693.3 303.8L695.9 302.3L701.2 305.9L700.6 312.5L694.7 318L690.5 317.1ZM711.9 304.3L715.3 298.8L729.3 302.9L730.3 303.9L729.4 309.3L724.2 313.9L719.4 313.8ZM745.6 314.4L755.5 313.3L755.8 303.5L746.6 305.3ZM559.4 319.9L553.1 313.9L544.7 315L542.8 324.7L550.9 330.7L553 331.3L558.1 327.4L560.8 323.3ZM573.7 314.1L566.4 322.8L562.9 322.3L561.6 318.9L566.3 313.5L571.6 310.7ZM701.3 314.2L695.6 319.6L699.7 326.8L707.8 320.4ZM780.5 330.2L786.9 330.2L791.8 319.8L789.7 319.2L778.5 320.6L778.4 327.8ZM557.2 346.4L567.1 339.8L558.8 329.5L553.8 333.4L556.2 346.1ZM646.2 335.4L640.1 327.2L641.9 323.3L657 328.9L657.3 329.1L653 339.4ZM654.8 339.9L659.1 329.6L664.8 326.9L671.2 331.9L670 335.2L655.8 343.2ZM682.7 345L686 344L688.2 335.5L681.9 329.8L675 332.3ZM709 321.6L700.7 328.2L700.6 329.6L712.1 336.1L714 333.3L712 321.7ZM778.8 331.7L778.4 335.4L772.1 340.1L767.4 332.4L776.9 329.4ZM793.5 320.6L794.1 320.4L801.6 330.6L801.5 337.3L798.1 338.8L796.4 338.2L788.6 331.2ZM554.8 346.7L552.3 333.8L550.3 333.3L538.6 343.1L543.6 350.1L547.8 349.9ZM587.2 348.9L581.2 343.9L576.4 341.5L575.2 349.8L581 352.7ZM646.2 337.6L639.5 343.2L645 351.3L646.4 351.2L653.8 346.9L653.7 344.6L652.7 341.4ZM672.8 348.7L671.6 336.1L672.9 332.9L673.8 332.8L681.6 345.5L674.7 349.9ZM696 351.3L696.2 351.6L701 355.2L705.4 355L710.1 350.8L712 343.5L711.5 342.2L700.6 343.6ZM676.1 351.5L677.8 360.4L684.5 360.4L693.5 352.1L693.3 351.9L686.4 346.2L683 347.2ZM730.6 352.7L733.8 352.9L742.6 358L742.7 362.5L737.4 366.5L729.2 366.9L729.3 354.5ZM789.6 354.1L780.6 351.2L776.9 352.7L775.9 358.7L783.4 366.4L788.3 363.8L790.2 361.3ZM592.3 378.9L597.1 388.9L601.2 388.3L606.8 377L596.5 375.2ZM671.5 400.1L675.9 402.4L687.6 395.2L688.5 389.5L682.5 388.2L671.7 396.4ZM733.8 402L740.5 400.8L742.6 398.2L736.8 388.3L734.2 387.3L726.8 392.2L726.6 393.7ZM578.2 402.5L575.6 409L569.2 412.4L564 407.7L563.6 401.9L572.6 395.4L578.1 401.7ZM622 405.9L628.4 403.7L634.1 410.2L627.4 414.4L621.8 411.6ZM751.5 395.1L744.9 399.5L742.8 402.1L748 409L752.5 410.9L755.4 409.1L754.7 398.9ZM578.5 425.9L569 425.4L569.9 414.6L576.3 411.3L583.4 418.4L580.8 424.5ZM620.8 413.3L613.6 420.8L616.7 422.8L629.3 424.3L626.6 416.2ZM674 425.1L660.2 429.4L660.4 432.1L668.1 436.1L673.6 434.1ZM555.3 443L561.8 453.4L569.1 448.7L569.2 443L563.1 434.5L555.6 439.3ZM584.7 441.3L584.5 452L587.9 454L597.6 448.9L597.6 446L589.2 440.6ZM641.2 447.1L643.2 438.6L644.6 437.9L652.9 439.3L654.8 448.5L651.3 449.2ZM687.6 438.2L684.5 441L684.3 445.7L691.5 449.7L694.6 448.8L694.9 439.6ZM741.4 449.5L744.7 452.6L745.6 456.1L745.8 458.7L739.8 464.2L730.2 461L729.7 447.6ZM770.5 447.5L773.2 459.7L784.2 459L785.7 451.5L781.2 448.1ZM555.9 463.4L549.7 461.9L542 470.4L544.2 475.9L547.2 477.6L551.3 476.8ZM566.5 473.5L564.3 483L553 476.9L557.6 463.3L559.1 463L563.5 466.2ZM618.9 483L631.9 487.5L632.1 488.4L628.3 495.9L622.4 499.6L617.1 497.7L613 487.8ZM642.7 500.7L641.6 492.2L651.7 495.1L652 495.8L649.2 500.7ZM637.8 504L641.8 502.4L648.4 502.4L647.3 509.7L639.7 510.7ZM710.7 498.9L704.5 500.7L702.1 504.5L702.2 513.2L712.1 516.3L713.3 516.1L716.9 512.1L714.1 501.9Z"/>
<path fill="#848484" stroke="#848484" d="M637.8 58.7L633.6 68.3L641 67.8L646.2 61.7ZM543.2 81.9L550.7 77.8L549.8 72.3L543.6 72.8ZM591.9 66.2L578 64.1L570.6 71.8L571.7 75.6L580.4 80.2L591.6 67.2ZM592.3 68.6L581.5 81.2L581.5 81.2L589.5 86.1L595.4 81.7ZM630.6 71.9L632.7 70.4L640.2 69.9L637.8 80.8L634 82.3L632.9 81.1ZM730.8 69.6L725.8 79L717.7 77.2L718 71.9L722.5 68.5ZM757.1 70.6L753.3 81.5L755.8 84.8L764.9 81.4L765.2 73.2L757.9 69.8ZM766.8 81.2L767.1 73.3L771.4 71.7L774.4 72.9L778.1 79.3L768.7 83.2ZM565.4 93.1L570.8 94.6L575.4 94.1L579.4 82.2L579.3 82.1L570.8 77.6L567 82.4ZM582.2 99.5L587.8 98.1L589.7 90.6L589 87.9L581 83.1L577.1 94.9ZM606.8 90.5L604.7 83.8L597 82.9L591.3 87.2L591.9 90L603.4 92.8ZM711.9 87.5L712.8 81.8L704 76.6L705.1 87.8ZM742.2 92.7L748.6 93.6L753.8 89.5L754 86.3L751.6 83.1L742.4 81.8L742.4 81.9ZM563.5 119.2L562.1 116.7L568.6 110.1L571.2 110.1L576.2 112L576.6 112.9L573.7 123.1L567.5 122.3ZM578.5 110.7L578.9 111.7L589.6 113.8L594.9 106.2L588 100.4L582.3 101.8ZM546.6 128L550.1 130.8L561 120L559.6 117.4L550.2 112.7L544.3 118.9ZM634.4 112.5L637.8 123.4L637.7 123.8L626.3 128.8L622.3 122.7L631.5 111.5ZM706.3 108.9L708.8 120.2L706.7 127.9L699.6 127.1L699.2 116.3L704.3 108.7ZM566.3 140.5L568.5 140.7L576.9 138.1L578.9 133L573.9 125.7L567.5 124.9L564.5 129.2ZM780.9 131.6L781.2 131.6L786 143.3L782.5 148.2L774.1 143.1ZM706.7 140.8L710.3 146.8L704.5 153.7L698.4 149.1L698.8 146.2ZM585.9 170L581.4 167.2L582.1 159.4L592.3 159.7L592.8 167.9L592.4 169ZM596.9 153.7L603.9 155.8L607.4 164.1L594.7 167.1L594.2 158.8ZM662.2 153.6L661.1 163.5L668.4 171.2L677 162.1L677.2 160.8L666.7 153.6ZM697.1 165.6L686.8 155.6L687.4 154L697.4 150.7L703.8 155.6L704.7 158.7L704 164L701 165.6ZM643.4 180.3L630.4 182.4L625.2 174.4L627.9 169.1L630.5 167.8L641.8 176.1ZM699 179.5L700.4 167.9L696.7 167.9L688.4 173.6L688 177.2L694 182.6ZM613.8 178.7L623.6 175.3L628.7 183.3L626.1 189L613.6 182.2ZM641.2 192.4L628.6 195.1L628.4 189.9L631.1 184.1L644 181.9L646.9 184.2L646.7 186.6ZM706 182.6L714.1 179.6L715.1 180.5L712.1 192.5L710.8 194L707.7 192.6ZM763.2 187.8L757.7 182.5L751.7 181.6L750.6 186.3L755.7 193.9ZM640.3 203.7L633.3 208.6L627.6 198L628.2 196.8L640.5 194.1ZM660.2 210.9L665.5 216.9L665.4 217.1L654.1 222.3L650.7 213.4L654.2 207.7ZM661.9 210L667 215.9L672.9 210.4L673 209.1L667.3 199.7ZM755.2 204.1L748.5 206L748.3 211L751.6 216.4L760.6 214.4L761.2 212.7L757.2 205.1ZM598.6 220.7L599.9 227.3L597.4 228.2L584.4 227.6L581.4 223.4L582 217.8ZM761.1 228.6L753.1 229L750.8 226.9L751.9 218.8L760.9 216.8L761.6 228ZM788.4 231L790.3 228L790.9 220.8L785.5 217L777.8 217.8L776.7 224L782.5 230ZM647.6 234.6L647.1 231.4L647.1 231L643.3 228.1L636.6 229.6L630.6 238.4L636.2 240ZM688.5 234.3L698.7 241.5L704.4 232.9L704.7 229L702 227.4L688.5 229.8ZM557.3 253.5L555 249.5L555.3 243.7L565.5 237.9L568 238.9L570.4 241.5L570.1 250.1L569.7 250.7L564.1 255.8L563.5 255.8ZM600.3 249.9L611.3 245.5L612.5 242.4L602.2 231L597.6 246.6L598.7 248.8ZM613.5 246L617.7 259L619.1 259.5L626.2 250.1L624.7 240.4L623.4 239.8L614.6 242.9ZM653.3 239.4L665.1 237.4L668.9 242.6L665.3 252.3L661.6 252.5L653.9 246.7ZM624.5 264.4L620.2 260.9L627.1 251.8L635.9 255.9L627.1 263.5ZM652.7 248.3L660.4 254.1L657 260.8L647.8 264.8L644.2 256.2ZM792.8 264L791.1 257.5L797.2 251.6L806.2 263.6L804.2 266.1ZM576.1 270.5L583.8 278.2L590.2 275.6L591.4 274L581.1 267.1ZM658.9 309.1L663.2 309.3L666 297.8L656.4 294.6L651.8 301ZM684.1 303.1L683.5 289.2L691.7 290.9L694.7 296.6L695 300.3L692.4 301.8ZM725 290.1L717.5 291L715 293.2L715.1 297.1L728.6 301.1ZM637.8 318.7L630.8 305.7L622.9 306.6L622.7 307.7L626.7 315.3ZM644.9 315.1L640.7 319.7L639.6 318.7L632.3 305.3L639 300.3L640.1 300.5L641.8 301.7ZM683.3 305.2L691.6 303.9L688.8 317.1L684.2 318.1L679.4 312.7L683 305.4ZM788.7 317.5L782.8 306.9L775.6 308.9L774.9 312.8L776 316.6L777.8 318.8ZM743.8 356.3L750.6 348.3L744.8 339.6L743.4 339.5L735 351.2ZM617.6 360.1L609.6 371.5L609.9 374.7L614.8 376.1L621.5 371.1L622.6 366.9L618.6 360.3ZM789.3 381.5L783.1 372.3L784.2 368.5L789.1 365.9L798.4 375.6ZM565.4 379.6L557.3 376.9L551.3 381.8L551.2 381.9L556.5 387.2L566.3 385.3ZM571.7 391.1L571.6 393.8L562.5 400.2L556.6 397.1L557.5 388.9L567.4 386.9ZM630.3 402.8L632.3 399.2L638.6 397.7L643.6 400.4L643 407.6L640.2 410.3L636 409.4ZM600.5 408.9L604.1 409.2L609.2 420.7L604 425.7L601.2 425.1L592.7 415L593.2 413.4ZM588.6 455.6L598.4 450.5L602 454.5L600.4 464.9L589.7 466ZM696.2 468.1L696.9 470.8L704.7 476.7L705.9 476.8L712.8 470.7L714.6 464.9L704.1 461.2ZM616.8 475.9L607.4 476.9L608 485L611.7 486.2L617.1 481.7Z"/>
<path fill="#8a8a8a" stroke="#8a8a8a" d="M636.2 58L631.9 67.9L629.7 69.5L623.6 64.9L626.1 55L627 54.3L632.7 55.4ZM618.8 80.3L615.5 89.1L611.9 91.2L608.8 89.8L606.6 83L611.4 73.2L612.1 73.2ZM597.6 104.8L596.4 104.9L589.5 99.2L591.4 91.7L602.8 94.6ZM656 93.7L657.3 104.5L661.7 105.9L669 103.1L669.2 100.4L663.3 93ZM709.2 106.1L713.8 107.9L725.1 102.8L719.9 95.3L716.7 94.8ZM617.5 105.9L617.7 105.7L625.2 105.4L630 110.4L620.9 121.5L619.5 120.9L617.3 116.4ZM552 132.6L551.2 131.5L561.8 121L565.7 124.1L562.8 128.5ZM600 133.5L594.1 133.9L585.2 131.5L592.5 121.7L602.1 124.6L603.5 127.5ZM618.7 140.7L629.5 146.6L631.5 139.5L625.3 132.1L619.4 138.3ZM618.1 142.1L629 148L630.3 151.6L619 153.5L615.2 148.7L615.5 144.9ZM668.2 152.3L678.6 159.4L684.2 154.5L684.8 153L682.1 146.6L677.5 141.4ZM537.2 168.6L536.1 156.5L531.4 154.7L528.2 157.6L525 167.5L525.4 168.2ZM647.8 162.9L645.4 157.8L658.9 152.4L660.2 153.5L659.2 163.1L654.9 164.8ZM722.2 163.3L712.1 168.4L706.2 164.4L706.8 159.2L719.4 156.8ZM596.2 184.7L595.9 183.7L597.6 177.1L610.7 178.3L611.4 179L611.2 182.5L609 187L605.2 190.7L602.8 191.2ZM613.6 183.7L626.1 190.5L626.3 195.6L625.7 196.8L623.7 197.1L611.5 188.2ZM652 204L653.1 197.4L647.9 188.1L642.5 193.7L642.3 203.2ZM696.1 194.3L696.3 204.6L688.6 204.7L684.1 196.5L693.5 192.2ZM754.6 195.8L749.1 187.8L737.7 196.2L739.4 200.5L747.3 204.2L754.2 202.2ZM527.6 216.7L530.6 222.2L532.7 222L544.4 211.5L546.2 207.7L546.1 205.8L543.3 203.4L540.2 204.4ZM588.8 202.6L584.1 205.6L599.2 218.2L600.8 214.2L601.4 210.1L596.5 202.3ZM603.1 214.6L617 215.1L617.9 214.6L613.4 206.5L603.7 210.6ZM600.6 220L602.1 216.2L615.6 216.7L606.8 225.2L601.9 226.7L601.8 226.7L600.6 220.4ZM665.8 218.5L654.1 223.9L649.5 230.1L649.6 230.4L668.9 226.8L669.6 225.6ZM731.9 216.7L737.7 221.1L739.1 224.7L737.4 226.9L725.1 226.3L731.3 216.9ZM749 253.2L741.6 247.6L741.7 245.5L749.1 239.2L757.5 246.2L750.9 253.7ZM759.2 278.6L763.3 275L769.8 263.2L755.4 261.8L753.6 271.3L758.6 278.3ZM788.9 267.9L776.1 265.9L780.7 275.2L782.6 276.4L787.6 272.9ZM792.7 265.5L804 267.7L804.1 274.2L799.8 279.7L789.8 272.9L791.1 267.7ZM609 331.2L613.8 324.1L612.1 319.5L603.5 316.7L600.8 327.9L603.3 331.2ZM731.5 333.9L726.5 344.8L714.4 341.9L713.9 340.5L713.9 337.3L715.9 334.5L728.1 330.7L730.4 332ZM597.4 351.9L593.4 362.2L595.9 365.2L603.8 366.2L603.9 353.3ZM584.8 367L585 375.2L591 377.1L595.1 373.5L594.5 367L592.1 363.9ZM608.6 377.2L609.1 376.8L614.1 378.2L620 387L612.5 395.4L602.9 388.7ZM630.3 382L624.6 386.2L621.8 386.4L616.2 378L622.7 373.1L630.5 380.6ZM526.6 482L537.9 470.2L531.5 466.3L525.1 481ZM768 475.5L768.8 473.5L767.2 468.4L759 465.8L752.9 478.7L763.4 479.5Z"/>
<path fill="#909090" stroke="#909090" d="M648 80.3L639.6 80.3L642.1 68.9L647.5 62.6L648.7 62.5L650.4 67.1L650.6 76.7ZM729.8 83.7L727.8 79.5L732.9 70L733.3 69.9L736.8 70.8L738.9 73.3L740.4 80.1L740.3 80.1ZM740.8 73.3L755.4 70.5L751.6 81.5L742.3 80.2ZM543.1 95.5L550.3 107L559.5 100.5L561.5 95.3L550.9 90.6L542.8 94.1ZM755.1 91.4L761.8 97.3L759.8 106.2L753.5 106.5L749.8 95.6ZM776.7 119.5L765.4 116.9L764.8 110.6L775.4 108.4L778.2 114.9ZM697.9 127.5L697.5 116.9L688.4 115.9L687.5 116.5L689.1 127.6L694.1 128.9ZM656.7 124.7L662.1 129.1L656.5 140.6L656.2 140.9L647.8 137.4L647.4 136.9L647 133.6ZM640.1 154.4L647.1 139.2L655.8 142.8L658.4 151L644.4 156.6ZM613.8 150.4L606 155.6L609.4 163.7L609.8 163.9L616.9 160.7L617.5 155.2ZM642.6 174.2L631.5 166.1L636.5 156.6L639 156.2L643.2 158.3L645.7 163.4ZM541.5 177.6L554.4 180.5L555.4 182.2L553.2 186.1L544.3 191.7L539.1 186.1L538.7 183.5ZM577.9 185.3L573.9 188L569.4 185.8L565.6 181.6L570.3 173.8L579.3 182.3ZM731 184.2L731.9 189.8L732.9 191.6L736.7 194.7L748.3 186.1L749.5 181.2L748.5 179.4L738.5 176.5ZM573.4 201.7L563 201.2L562.2 195.7L568.7 187.7L573.3 190ZM598 201.2L602.8 209L612.7 204.8L613.4 203L605.4 193.1L602.9 193.6ZM626.1 198.9L624.1 199.2L615.8 203.9L615.2 205.7L619.8 214L625.8 216.4L631.7 212.3L631.9 209.7ZM565.7 235.1L558.6 225.2L563.5 221L563.8 221L572.4 226.1L568.2 236.1ZM684 226.3L685.4 217.2L683.5 213.8L674.1 211.8L668 217.5L668 217.7L671.7 224.7L674.8 225.5ZM569.8 236.8L574.1 226.9L579.5 224.7L582.4 228.8L579.7 236.9L572.2 239.3ZM603.1 229.3L602.7 228.3L607.9 226.6L622.3 227.5L622.5 237.7L613.6 240.9ZM572.1 251.8L572.5 251.2L583.2 252.4L585.3 254.8L585.7 258.7L581.4 262ZM741.1 287.5L743.4 283.9L757.4 280.2L757.9 280.5L758.4 281.8L753.6 293.3L742.3 291.7ZM650.3 299.8L654.8 293.4L651.8 287.2L650.8 286.9L641.5 298.5L643.1 299.7ZM625.4 316.7L623 325.2L622.8 325.2L615.8 323.3L614.2 318.6L621.5 309.2ZM730.4 350.5L728.1 345.7L733 335L741.9 339.2L733.6 350.7ZM736.9 368.6L738.7 376.5L734.5 380.5L726.9 370.8L727.1 370.3L728.9 369ZM581.4 377.7L570.1 375.8L567.8 379.6L568.7 385.3L572.9 389.5L578.1 385.9ZM774.4 409.1L777.4 404.4L791.5 403.9L794.1 410.3L791.8 413.6ZM641.7 412.3L642 420.6L645.5 422.9L655.1 422.2L658.2 414.3L644.6 409.5ZM616.9 455.3L624.6 448.5L622.4 442.7L615.5 442.1L610.4 453.2L614.9 455.5ZM706 436.7L708.6 445L714.6 446.4L723.5 442.7L719.2 433.2L718 432.5L706.1 436.4ZM551.2 508.7L539.5 510.2L538 508.1L536.2 501.4L546.6 495.5L551.9 506.1Z"/>
<path fill="#969696" stroke="#969696" d="M697.1 93.7L696.4 100.1L704.4 106L706.4 106.2L707.5 105.7L715.1 94.1L711.6 89.5L704.4 89.8L698.2 91.5ZM605 109.7L615.9 106L615.7 116.2L606 115.8ZM673.8 126.8L677.7 130.8L687.2 127.5L685.6 116.2L678.7 113.4L674.9 113.5L674 115.3ZM737.5 128L743.2 122.8L746.7 123.3L748.6 125.7L746.5 138L744.8 138.6ZM562 160.7L564.5 161.1L568.3 157L567.5 143.2L565.3 143L561.8 143.6L557.2 152.5ZM698.2 194.7L698.3 205L701.7 208.5L707.6 206.7L711.1 202L709.9 196.2L706.7 194.8ZM775.5 209.5L774.9 212.1L777.2 215.6L784.7 214.8L786.3 204.8L781.6 203.1ZM652.7 237.8L664.5 235.8L668.4 227.8L649.4 231.3L649.8 234.7ZM675.9 240.8L670.3 240.8L666.6 235.7L670.4 227.9L671 226.8L674 227.6ZM706.9 250.4L713.4 249.9L713.7 245.9L705.6 234.8L700 243.2L700.2 246.1ZM564.9 312.4L559.9 302.1L556.6 306.8L554.2 312.1L560.2 317.8ZM758 314.1L757.4 313.3L757.7 303.1L757.8 302.9L769.2 301.7L773.4 307.9L772.6 312.1ZM672.8 330.4L666.3 325.4L667.3 314.4L677.9 314.5L682.8 320L680.8 327.8L673.8 330.3ZM741.1 317.3L741.1 320.6L731.9 329.9L729.6 328.5L725.5 315.7L730.8 311ZM615.3 339.5L610.4 332.4L615.2 325.4L622.1 327.3L618.5 339.1Z"/>
<path fill="#9c9c9c" stroke="#9c9c9c" d="M692.9 78.6L688.5 78.5L684.4 70.8L688.4 63.3L698 70.2L697.9 71.3ZM715.6 71.8L706 65.9L700.4 70.3L700.3 71.5L703.7 74.8L712.9 80.3L715.3 77.3ZM604.6 108L599.5 105.1L604.8 94.6L608.3 92.2L611.4 93.6L615.9 104L615.8 104.2ZM655.3 119.5L651.7 117.2L640.1 123.8L640 124.2L646.2 132L656 123ZM778.3 128.4L776.6 121L765.3 118.4L764.3 121.3L772 129ZM701.9 211L700.5 214.8L703.2 225.5L705.9 227.1L713.1 224.8L713.8 218.6L707.9 209.2ZM600.8 251.6L601.9 265.2L610.2 262.9L616.2 260.2L612 247.2ZM740.6 264.9L736.7 262L733.9 253.7L740.3 249L747.7 254.6ZM756.3 259.9L753.7 255.6L772.5 253L773.4 254.2L770.8 261.2L770.7 261.3ZM584.2 319.4L583.7 325.4L582.9 326.4L577.9 329.1L568.2 323.9L575.6 315ZM583.9 378L584.7 377.3L590.8 379.3L595.7 389.3L594.4 390.5L593.1 390.7L580.4 386.3Z"/>
<path fill="#a2a2a2" stroke="#a2a2a2" d="M682.2 88.4L695 92.1L696 89.9L692.5 80.7L688.2 80.6L681.2 84.2ZM687.1 102.1L680 111.8L686.7 114.5L687.6 113.9L693.6 102ZM721.6 142.9L720.6 132.1L724.9 129.2L727.3 130.4L735.1 141.4ZM700.8 179.3L702.2 167.7L705.1 166.1L711.1 170L713.4 177.5L705.2 180.6ZM748.4 237.1L740.9 243.4L736.7 237.4L738.9 228.6L740.8 226.4L748.8 228.1L751.2 230.3ZM747.9 458.4L755.1 460.5L765.2 446.1L764.2 445.3L747.7 455.9Z"/>
<path fill="#a8a8a8" stroke="#a8a8a8" d="M655.3 91.6L662.8 90.8L668.3 79.7L668 78.7L652.2 78.4L649.6 82.2L655.2 91.6ZM662.5 107.6L660.2 116.1L672.3 113.9L673.2 112.2L669.7 104.9ZM730.1 182.4L737.4 174.9L735.7 166.6L734 164.7L726.8 165.5L724.9 179.1ZM523.2 242L513.6 248.2L512.2 238.6L513.6 234.9L520.5 233.5ZM582.3 375.9L583.1 375.2L582.8 366.9L579.8 364.9L570.3 365L570.8 373.9ZM661.2 414.4L660.6 414.8L657.5 422.7L659.8 427.9L673.8 423.5L674.1 422.7L669.1 418.7ZM762.4 426.5L766.6 423.6L770.1 412.9L770.1 412L757 411L754.1 412.9L753.4 424.7Z"/>
<path fill="#aeaeae" stroke="#aeaeae" d="M638.3 125.4L626.9 130.4L626.7 130.9L633.1 138.6L645 136.6L644.5 133.3ZM644.9 464.4L658.3 455.4L658.1 452.3L655.5 450.4L651.9 451.1L643.7 461.3Z"/>
<path fill="#b4b4b4" stroke="#b4b4b4" d="M752 269.8L753.8 260.5L751.3 256.3L751 255.9L749.1 255.4L742.1 265.6L743.2 268.9ZM761.2 332.2L758.2 329L751.8 331.1L746.2 338.5L752.2 347.3L756.9 347.7L758.6 346.6ZM594.9 399.5L599.2 407.4L592.4 411.6L589 406Z"/>
<path fill="#bababa" stroke="#bababa" d="M668 197.8L673.7 207.2L680.7 196.3L677.3 193.6L668.3 195.6L667.8 196.2ZM563.8 281.2L548.3 281.9L549.1 289.9L550 291.2L556.9 293.4L563.8 281.3ZM575.9 338.4L576.4 339.4L581.3 341.9L588.2 336.7L583.1 328.6L578.2 331.2Z"/>
<path fill="#c6c6c6" stroke="#c6c6c6" d="M728.8 184.2L729.7 189.7L713.9 192.4L716.8 180.1L723.7 181Z"/>
<path fill="#cccccc" stroke="#cccccc" d="M632.1 91.9L627 103.9L631.9 109L634.8 110L642.4 105.6L643.1 99.4L632.9 91.2ZM707.6 108.2L710 119.1L721.2 115.8L713 109.6L708.7 107.8Z"/></g>
<g filter="url(#b2)" opacity=".8"><path fill="#686868" d="M772.4 416.5L770.6 422L775 424.8L777.8 420.9ZM577.1 499.3L573.7 496.9L572.9 490.4L576.8 490.1L579.8 492.2L580.7 495.2ZM736.3 503.2L735.6 500.4L740.9 497.1L742.5 501.1L740 504.5Z"/><path fill="#707070" d="M549.9 161.7L547.5 156.1L548.9 154.9L553.1 155.2L555.6 159.4L552 162ZM740.7 166.8L746.3 165.5L749 167.1L746.7 172.6L741.6 171.1ZM550.6 208.9L555.9 208.6L557.9 215.6L555.3 217.9L554.7 217.9L550.7 209.9ZM582.1 208.9L581.9 210.1L583.1 213.5L591.7 215L591.7 214.8L583.9 208.2ZM535.8 244.1L536.1 244.2L538.9 247.8L536.5 253.5L536.2 253.5L533.5 248.5L534.1 245.6ZM735.9 270.5L730.2 271.5L730.1 271.4L730.6 268.6L734.4 265.8L736.4 267.3L737 269.1ZM767.9 271L771.3 264.9L771.4 264.8L772.8 266.1L775.3 271.2L773.2 271.8ZM735.6 290.1L730.9 288.5L729.3 290.8L731.3 296.7L731.8 297.2L734.5 295.6L736.1 292.3ZM762.2 320.6L769.6 316.4L769 314.4L761.4 315.4ZM771.4 326L766.1 327.6L764.5 327.2L763 325.6L763.1 325.2L770.5 320.9L771.4 322.1ZM535.9 335.2L538 329.3L539.7 328.4L543.9 331.5L537.9 336.6ZM767.2 342.1L762 342.2L763.4 334.8L765 335.2L767.6 339.5ZM789.9 347.9L785.1 346.4L786.4 343L792.5 341.6L793.4 341.9L792.1 345.6ZM556.4 351.4L560.2 355.6L560.5 357.7L556.5 360.1L554.6 359.6L552.3 352.9L555.9 351.2ZM591.2 352.2L587.8 352.1L584.4 354.2L583.9 358.7L585.5 359.8L589.5 358.1L591.6 352.6ZM612.1 358.4L607.9 364.4L606.2 362.3L606.3 355.5L608.1 355.3ZM725.2 357.2L720.9 358.2L720.9 361.6L724.2 364.5L725.2 363.7ZM517.5 371.4L518.4 365L519.9 364.3L524.1 366.7L523.6 370.6L521.7 373.3ZM630.1 374.2L625.9 370.2L626.5 368L631.8 368.1L632.9 369.7ZM698.6 370L698.3 368.3L700.7 361.8L703 361.7L705.1 365.5L704.3 370.6L703.8 370.8L698.6 370.1ZM654 380.9L659.5 380.3L661.2 382.1L661.1 385L654.4 386.2L653.5 382.4ZM684.5 382.5L687.6 383.2L688 383L690.4 376.8L690.3 376.7L682.8 376.4L682 379.1ZM709.9 382.3L709.8 377.5L710.3 377.2L715.4 377.7L716.9 382.7ZM793.7 381.7L793.4 383.9L795.2 385.7L800.5 384.5L802.2 378.9L801.9 378.3L798.5 378.6ZM692.7 391.4L691.1 390.8L690.8 391L690.3 393.9L691.9 397.8L696.5 398.4ZM535.4 404L535.6 407.8L529.5 410.1L527.4 407.8L531.1 403.8ZM748.3 421.4L748.7 415.3L746.3 414.3L742 418.3L743.4 421.2L746.4 422.4ZM775.6 412.7L781 417L784.6 417L784.6 416.9L785.3 413.6L776.3 411.3L775.9 411.6L775.6 412.2ZM536.1 428.2L534.9 432.3L538.6 435.3L542.7 433.3L539.4 427.5ZM583.6 435.4L586 435L587.7 430.6L582.6 428.6L581.4 429.4L583.2 435.2ZM613.7 434.4L609.7 432.4L608.9 428.2L611.6 425.6L612.3 425.5L614 426.6L617.8 433.8L617.4 434.7ZM648.1 432.2L648.6 426.4L653.6 426L654.8 428.7L654.9 430.1L652.5 433ZM740.9 433.8L743.1 431.6L743.3 429.1L740.3 427.8L737.3 429.7L736.4 433.4ZM792.6 424.8L797.1 426.2L798.1 431.9L794.1 432L792.1 430.5L792.6 424.8ZM531.1 438.8L528.3 440.7L527.8 443.4L532 447.7L534.5 446.7L534.8 441.9ZM750.4 450.3L758.9 444.9L758.6 444.7L753.5 444L749.9 448.4ZM785.9 438.1L788.2 437.6L790.2 439.1L788.6 444.4L786.8 445.3L784.4 443.4ZM513.7 456.8L516.7 460.8L512.9 464.7L511.9 464.6L510.1 460.2L511.3 457.6ZM535.5 456.7L538 455.8L540.5 456.6L542.9 459.4L538.8 463.9L538 463.5L534.7 461.5L534 460ZM706.7 456.2L712.2 458L712.5 457.9L711.6 450.6L708.5 449.9L706.4 452ZM518.7 469.4L523 474.3L523.5 474.4L526.8 466.8L526.1 465.2L522.6 465.4ZM689.2 468.8L689.6 470.2L685.7 474.8L681.5 473.7L680.9 471.8L682.3 467.2L687.7 467.7ZM774.8 468.8L781.4 465.1L779.5 462.6L773.7 462.9L771.8 465.9L772.7 468.6ZM530.5 478.6L531.8 479.6L538.4 475.7L537.2 472.8L536.4 472.4ZM570.3 482L568.6 481.1L568.5 480.9L569.6 476L576.6 474.4L577.3 474.7L574.2 481.7ZM624 471L624.4 471L629.8 474.5L627.9 479.3L621.2 477L621 473.9L621.5 472.3ZM646.2 487.8L646.2 487.9L640.6 486.3L637.5 484.9L637.5 484.4L639.3 479.6L642.3 477.9L643.3 478.2ZM655.9 476.5L656.7 479L652.9 485L649.9 475.4L653.2 475.5ZM694.3 475.7L690.5 480.3L691.6 483.9L694.7 484.4L698.4 478.8ZM774.2 479.7L772.3 476.7L772.8 475.6L774.9 475.8L779.7 478.5L780.3 480.1L776.8 482.3ZM554.6 497.7L555.3 492.7L549.9 493.6L549.6 494.4L552.4 499.9ZM561.2 496.5L561.8 491.5L564.2 489.2L565.9 490.2L566.8 496.6L565.6 497ZM635.5 498.3L632.1 495.1L634.1 491.3L637.2 492.7L637.7 497.4ZM663.3 494.9L664.8 494.1L665.8 489.3L665.8 489.2L661 486.2L657.2 492.2L657.2 492.3L657.4 492.7ZM733.1 494.8L733.3 495L738.6 491.7L738.9 491.1L734 487.3L731.2 488.9ZM748.2 491.1L746.2 492.2L745.9 492.9L747.5 496.8L752 496.3L749.1 491.7ZM770 491.4L772.6 485.6L775.2 488.2L774.2 491.6ZM529.8 501L530.7 504.5L523.9 505.4L522.4 501.8L522.8 501.2L527.7 498.9ZM555.6 507.6L554.9 506.7L555.2 505.4L557.4 503.2L561.9 503.7L560 507ZM532.4 511.7L531.7 510.6L524.8 511.5L524.1 514.1L524.6 516L525.4 516.4L532.4 512ZM534 515.7L527 520.2L528.3 522.4L530.7 523.6L534.3 518.1ZM567.2 516.3L563.1 513.3L558.7 513.9L560.1 518.4L563.9 520.8L565.9 519.5ZM751.3 517.3L746.9 518.4L746 512.4L754.5 513Z"/><path fill="#787878" d="M656.5 74.5L656.4 69.5L664.8 73.1L664.8 73.1L664.6 74.6ZM600.1 110.6L597.4 109.1L596.7 109.1L594 113.1L594.6 115.6L599.7 117.2L600.6 113.9ZM587.6 142.3L582.2 140.2L580.8 137.6L581.9 134.9L583.3 134.5L588 135.8ZM751.1 135.9L752.2 129.4L756.1 129.3L758.5 135L757.9 136.8L755.1 137.4ZM766.8 135.8L770.7 132.4L774.1 132.1L774.7 132.5L771.1 138.6L768 138.9L766.2 137.6ZM547.7 168.9L543.9 171L543.9 173.2L550.6 174.7L549.8 169.3ZM697.5 189L702.1 189L701.1 183.7L698.8 183L696.2 184.7L696.1 187.8ZM794.3 176.8L789.3 179.8L788.7 183.1L792.8 185.2L797.4 181.1L797.3 179.4ZM533.5 196.9L530.9 193.1L536.6 190.6L539.3 193.5L539.3 197.8L537.7 198.2ZM766.7 192.7L764.3 196.6L760 198.4L758.9 197.9L759.1 194.5L763.2 191.2L765.5 191.5ZM676.9 206.4L676.9 205.7L680.7 199.8L680.9 199.9L683.3 204.2L681.8 207.5ZM791 206.1L790.1 211.4L793 213.5L797.8 209.7L797.8 209.7L797 206.6L794.4 205.3ZM535.6 220.2L540.6 220.7L541.5 214.8ZM531.5 237.3L528.1 230.8L524.6 233.7L526 238.3L529.8 238.8ZM553.8 235.9L550.9 232.3L551.9 229.2L554.8 227.6L555.3 227.7L559.1 232.9ZM595.7 239.1L591.5 236.8L591.5 236.8L596.4 230.9L597.8 230.5L597.8 230.5L598.1 231ZM760 233L755.7 233.2L754.2 236.7L758.7 240.4L762.6 239.1L762.6 238.9ZM575.3 245.7L581.1 246.4L582.6 241.9L582.6 241.8L579.4 240L575.5 241.3ZM632.8 243L629.8 242.2L628.3 242.2L629.1 247.2L633.8 249.3L634.3 249.2ZM725.6 255.8L727.8 262.3L731.6 259.4L730.1 255L727.2 255.3ZM687.5 271.9L693.9 274.7L695.6 273.6L692.9 267.5L692.6 267.4L687.3 269.8ZM523.7 281L523.9 285.8L529.5 287.2L529.8 286.6L529.5 281.5L527.5 280ZM572.8 274.1L576.9 278.2L575.2 281.8L573.7 282.9L568.5 278.8L568.5 278.8L568.5 278.5L571.5 274.1ZM674.4 282.6L670.2 284.4L666.5 279.1L666.8 277.6L667.4 276.9L674.5 280ZM762 279.6L766.6 282.7L769.1 277.7L763.9 277L761.8 278.9ZM543.2 293.2L541.2 296.5L537.8 299.7L535.6 298.2L535.9 293.6L536.2 292.9L542.7 292.5ZM570.4 290.2L570.2 291.4L565.2 294.9L563 294.9L561.6 292.4L565.2 286.1ZM582.8 296.3L580.3 292.2L580.4 291L582 289.9L588.8 291.8L590.5 293.4L584.9 297.2ZM744.4 295.1L742.7 298.4L746.6 300.5L751.5 299.5L751.5 299.4L750.3 295.9ZM781 299.9L779.6 301.1L775.7 302.2L773.6 299L774.9 294.8L777.9 293.9ZM786.8 296.8L783.7 290.7L785.2 289.4L790.8 290.7L791.6 295.9ZM508.2 303.6L509.1 308.6L515.1 308.8L515.8 307.5L516.3 304.8L514.7 303.7L508.2 303.6ZM541.4 307L540.9 305.9L544.3 302.7L549.4 305.8L548.1 308.7L543.8 309.3ZM592 307.5L598.2 307.2L599.3 300.8L597.1 298.6L596.8 298.6L591.3 302.4ZM668.6 300.5L669.6 299.7L675.6 303.9L673.7 307.8L668.2 307.7L667.2 306.5ZM537.7 320.6L538.7 315.6L536.3 313.3L532.2 317.5L531.7 320L536 321.6ZM516 331.2L516.4 327L514.4 325.3L509.8 326.1L508.6 330.1L509.3 331.4L510.9 333.1ZM528.4 334.6L529.7 334.4L531.8 328.5L527.5 327L525 327.8L524.5 332.1ZM781.9 332.6L781.7 334.7L783.4 337.7L789.4 336.3L785.3 332.6ZM517 348.9L516.1 351.4L510.1 347.2L511.7 344ZM519.8 345.3L514.5 340.5L514.5 339.9L519.6 338L523.4 340.5L520.9 344.6ZM528.9 347.1L535.1 350.8L537.3 347.8L534.8 344.2L532.8 342.8L531.5 342.9ZM689.4 342L690.5 337.6L693.2 336.8L695.4 340.9L693 345ZM777.1 339.5L773.6 342.2L773.2 344.7L775.5 346.7L777.4 345.9L778.8 342.5ZM514.8 356.8L513.3 357.5L509.3 357.1L508.5 351.6L508.9 351.1L515 355.2ZM642.1 365L644 362L643 356.5L642.2 356.5L638.5 358.1L638.2 363.1L639.3 364.6ZM764.2 358L769.2 355.4L769.7 352.2L767.4 350.2L762.2 350.4L761.3 350.9L763.9 357.8ZM804.9 356.8L810.3 356.5L810.9 357.1L809.9 361.9L808.4 363.3L803.7 360.1ZM649.2 371.8L653.5 366L648.6 366L646.8 369.1ZM510.1 383.9L511.9 379.7L513.7 379.4L517.9 381.3L518.4 384.3L514.6 386.6L511 386.1ZM543.1 373.4L540.2 376.8L542 381L542.3 381.1L545.9 379L545.9 379L543.3 373.5ZM518.9 394.6L519.2 398.8L521.3 402.7L521.9 402.7L525.6 398.8L523.1 392.4L522.8 392.2ZM551 393.7L551.5 389.3L548.6 386.5L545.1 388.6L545.8 394.5L547.5 394.8ZM578.5 388.8L585.1 391.1L578.5 395.4L575.7 392.1L575.7 390.7ZM590.7 394.1L590.6 397.1L587.4 400.6L583.6 398.9L583.4 398.5L590 394.2ZM631.4 385.3L628.3 387.6L631.3 392.6L634.6 391.7L634.1 387ZM656.8 393L663.5 391.7L665.3 395.2L665.1 397.2L662.4 398.9L656.4 394.8ZM781.4 393L781.2 398.3L788.4 398.1L789 395.7L788.5 393L786.8 391.1ZM581.8 405.6L580.4 409L584.2 412.8L587.3 411.3L587.5 410.4L585.7 407.3ZM616.1 407.1L612.5 403.8L608.7 408.4L611.4 414.4L612.1 414.3L616 410.3ZM666.4 405.2L664.7 409.1L668.9 411.4L672.5 406L671.4 404.7L669.1 403.5ZM550.1 413.7L549.7 417L544.8 418.4L544.7 412.9L550.1 413.6ZM561.3 412.7L564.1 415.1L563.6 420.8L562.1 422L556.9 418.2L557.3 414.8ZM729.3 417.3L730.9 416.5L734.4 419L735.8 421.9L732.8 423.8L729.4 422.5ZM513.9 425.5L512.7 429.9L517.6 431.2L518 426.8ZM546.7 425.8L546.8 425.6L551.8 424.2L557 428L556.5 429.8L552.6 432.4L550 431.6ZM593.6 435.3L598.1 438.2L601.4 433.9L600.6 429.7L599.2 429.4L595.4 430.9ZM684.5 426.3L681.7 423.4L678 425.2L677.8 425.6L677.6 430.4L681.5 433L683.2 431.4ZM696.9 428.2L699.5 431.1L700.1 433.1L700.1 433.3L696.2 434.3L692.2 433.5L693.4 428.4ZM772.3 434L771.7 432.8L767.3 430.1L765.1 431.5L766.1 438.7L766.4 439L766.9 439.4L767.8 439.7ZM628.2 444.8L627.1 441.7L627.5 440.8L630.5 438.1L635.6 440.1L634.6 444.6L631.9 446.8L631.2 446.7ZM736.8 444.2L730.7 443.3L729.8 442.1L732.7 439.4L737.2 439.7ZM519.3 452.4L520.2 450.3L523.2 448.7L527.4 452.9L525.9 456.2L522.4 456.4ZM553.5 448.9L556.9 454.3L555.6 457.4L554.8 457.6L551.6 456.7L549.2 453.9ZM582.1 465.1L582.8 465.3L583.6 465.1L584.8 463.6L584.2 458.2L582.4 457.1L579.3 457.7L578.5 461.2ZM686.5 452.9L686.3 459.4L681 458.9L680.2 457.8L680.1 453.1L682.6 450.7ZM766.3 450.5L767.6 456.9L765.7 459.9L761.4 458.6L759.9 457.2L765 449.9L765.9 450.2ZM569.2 469.4L576.2 467.8L572.6 464L567.7 465.6ZM669 464.1L674.1 463.7L674.9 464.7L673.5 469.4L667.4 468.7ZM744.5 470L748.7 472.8L749.1 472.7L752.3 465.8L750.8 464.5L747.1 463.4L744 466.3ZM533.6 483.2L534 484.3L541.3 484.6L541.8 480.2L540.2 479.3ZM550.7 487.3L549.9 485.7L550.3 481.2L552.5 480.8L558.4 484L558.4 484.1L556 486.4ZM581.8 482.1L584.9 475.1L585.6 474.9L589.2 479.7L589.4 480.6L584.9 484.1ZM739.6 478.9L737.9 481.7L742.8 485.6L744.8 484.4L745.3 480.2L741.1 477.4ZM757.8 485.3L752.3 486.3L751.4 485.6L751.9 481.4L752.3 481.3L757.8 481.7ZM766.3 489.2L766.2 489.2L764.6 486.2L764.6 482.5L767.1 480.4L768.9 483.4ZM604.3 489.2L606.8 488.4L608.8 489L610.9 494.1L609.2 494.9L603.3 492.9ZM682 492.7L674.8 491.4L673.9 496.1L678.8 497.9L680.3 497.4ZM689.7 493L688 497.7L689.1 498.2L695.7 498.8L696.9 496.9L693.6 492.6L690.5 492.1ZM707.4 491.4L704.2 492.4L701 488.1L704.6 482.5L705.3 482.6L709.1 487.5ZM762.2 494.3L759.5 497.7L758 496.9L755.2 492.3L760.7 491.3ZM572.1 510.9L574.4 508.3L574.6 507.8L574.5 506.5L571.1 504.1L570 504.5L568 507.8ZM632.6 504.1L629.2 500.9L626.2 502.8L626.4 506.5L628.8 508.1L633.5 508L633.7 507.8ZM651.5 506.2L652.4 507.2L659 504.8L659.5 501.7L653.6 499.4L652 502.2ZM720.5 502.3L721.9 507.6L726.8 507.5L729 504.9L728.3 502.1L728.1 501.9ZM550.6 516.9L545.7 519.6L542.5 514.9L542.2 512.6L542.3 512.3L548.4 511.6L549.2 512.4Z"/><path fill="#808080" d="M625.4 71.5L622.2 69.1L617.5 71.8L621 75.5L626.7 76.5ZM672.7 77L677.2 79.2L680.9 77.3L678.7 73.2L672.7 75L672.6 76.5ZM787.3 77.3L785.8 79.2L782.1 76.6L780.1 73.1L784.9 71L788.6 72.9ZM560.3 90.3L554.8 87.9L556.1 84.6L561.7 84.3L560.9 89.9ZM629.1 83.1L629.7 83.7L629.2 86.4L628.8 86.8L621.7 86.7L623.5 82ZM671.2 83.8L675.7 86.1L676.2 88.3L675.2 91.7L671.5 93.5L668.3 89.6ZM697.6 84.2L695.7 79.3L698.4 75.4L700.2 77.2L700.8 83.3ZM758.6 88.1L758.7 86.4L763.5 84.6L764.5 85.6L765.8 89.2L762.1 91.2ZM778.8 89.9L774.6 88.5L773.4 84.9L778.5 82.7L782.2 85.3L782.2 85.5ZM572.4 98.3L574.8 98L577.5 100.5L575.5 105.2L572.8 104.2ZM684.5 92L691.3 93.9L690.9 97.2L690.7 97.3L687.2 97.4L683.5 95.4ZM742.4 116L740.5 115.7L735.2 111.5L735.7 109.6L737.4 108.4L744.3 110ZM785.5 105.7L786.4 110.1L780.8 110.2L779.3 106.7L781.5 103.2ZM785.5 132L788 138.1L792 137.8L793.8 133.2L788.5 130.9ZM553.3 147.3L555.7 142.7L551 139.2L548.6 143.6L549.1 147.1ZM725.3 144.7L732.5 143.9L733.7 144.6L733.4 147L732.2 148.6L725.6 147.8L724.9 145.6ZM757.5 149.3L759.9 152.9L763.4 151.4L762.5 146L760.8 144.6L757.9 145.3ZM544.3 164L540.5 166.1L539.5 165.2L538.9 158.8L542 158.4ZM580.5 171.4L578.1 169.9L573.6 170.9L573.5 171.9L578.4 176.5L578.7 176.2ZM759.1 171.1L756.1 169.1L755.3 169.4L753 174.8L753.5 175.7L756.8 176.2L760.1 172.9ZM773.4 179.5L772.8 185.1L774 186.3L776.2 186.6L779.1 184.3L779.7 181L775.7 178.2ZM773 194.5L775.1 194.8L777.2 199L773.9 202.5L770.6 198.3ZM724.1 207.7L730.8 206.8L728.9 211.8L728.6 211.9L724.9 210.4ZM547 212.6L551 220.6L548.1 222.1L545.2 220.4L546 214.6ZM576.9 216.9L576.6 219.8L573.7 220.9L569.2 218.2L575.7 213.5ZM526 245.4L525.4 248.3L518.7 250.8L516.8 249L517 248.2L522.2 244.8ZM689.2 247L686.5 246L685.6 243.2L687.9 239.1L693.2 242.8L693.3 244.3ZM544.9 257.9L542.2 256.9L544.6 251.2L549.2 251.7L550.4 253.8ZM596.5 253.6L597.1 260.6L596.7 261L590.7 257.4L590.5 255.3L595.7 253ZM641.7 265.1L642.5 264L642.7 262.8L640.9 258.3L639 257.8L638.5 257.9L633.7 262ZM661.9 259.9L665.5 264.8L669.6 261.2L669.3 258.9L665.6 256.3L663.6 256.4ZM695.8 259.2L698.2 258L701 253.2L697.5 250.9L693.3 253.5L695.5 259.1ZM705.4 258.2L711.2 260.4L713.5 254.8L711.7 253.1L708.3 253.4ZM517.1 273L519.2 273.7L523.1 272.7L524.1 267.7L518.2 264.4L516.7 269.3L516.2 272.2ZM550.5 273L549.5 276.4L550.3 277.6L558.4 277.3L558.4 277L554.2 272.8ZM608.9 273.3L602.5 270L601.6 268.6L601.9 267.6L602.2 267.1L606.5 265.9ZM620.2 268.5L617.5 273.6L616.5 272.8L614 265.4L617.2 264L617.9 264.3L620.1 266.2ZM646.9 276.8L650.8 280.1L651.4 280.2L656.2 277.2L656.5 275.6L648.8 272.5L647.9 273.6ZM656.9 264.8L660.5 269.7L660.1 270.5L659.6 271.2L651.9 268.1L652.1 266.9ZM699.7 266.8L702.1 265.6L707.9 267.9L708.3 270.9L703.7 273L702.4 272.8ZM583.4 284L585 280.4L588.4 278.9L590.2 285.9ZM630.5 279.9L628.1 283.3L623.8 283.4L621.4 281.2L621.2 280.9L621.2 280.7L623.9 275.6ZM639.1 283.4L636.8 286.8L639.2 292L639.7 292.1L644.7 285.9L640.8 282.6ZM659.1 290.4L657.5 287.1L662.4 284L666 289.3L665.2 291.2L664.2 292.1ZM698 282.2L695.5 286.2L697.1 289.3L702.8 286.1L700.9 281.2L699.6 281ZM736.7 282.8L732.1 281.1L730.9 277.2L736.6 276.2L737.9 280.9ZM789.5 276.9L786.8 278.7L787 282.9L792.6 284.2L794.6 281.8L794.8 280.4ZM506.2 293.6L509 291.8L513.5 293.1L513.2 297.6L506.7 297.5ZM619.8 289.9L617.5 287.7L613.2 295.4L618.2 297ZM628.8 299.9L632.3 297.4L629.9 292.2L625.5 292.3L623.9 299.4L624.6 300.4ZM679.5 297.9L679.2 290.5L678.5 290.1L674.3 291.8L673.4 293.8L679.4 298ZM706 293L708.7 294.6L708.7 296.7L707 299.5L703.3 300.1L700.5 298.2L700.4 296.2ZM568.2 305.9L565.3 307.5L562.6 301.9L562.7 301.7L564.9 301.8L568.2 305.7ZM581.7 312.7L577.1 310.4L576 308.5L576 308.3L580.2 304.9L582.3 305.8L583 311ZM704.8 311.8L708.3 315.2L709.9 315.2L712.7 312.7L708.8 307.7L705.2 308.3ZM737.2 303.3L741.1 305.4L740.5 310.3L739.5 310.9L734.1 307.7L734.6 305ZM789.6 305.6L788.3 306.7L791.5 312.5L792.6 312.8L792.9 312.7L796.7 308L796.6 306.7L794.5 304.7ZM636.1 320.6L636.7 321.2L636.6 321.6L635.7 323.6L633.3 325L628.9 323.4L630.2 318.8ZM687.4 322.2L686.3 326.2L689.7 329.3L692.4 328.5L694.3 326.8L694.3 326.1L692.1 322.2L689.8 321.7ZM715.9 320.6L717 326.8L723.3 324.8L721.2 318.1L718.7 318.1ZM754 322.2L753.9 322.6L750.6 323.7L746.5 319.5L746.5 317.8L747.6 317.1L752.9 316.6L753.2 317ZM566.4 326.5L571.6 329.3L570.3 333.2L567.4 333.6L563.1 328.3L564.5 326.2ZM626 336.9L627.1 335.8L628.5 331L624.1 329.5L624 329.5L622 335.8ZM699.2 334.2L701.1 332.5L707.1 335.9L707.1 337.5L701.4 338.3ZM562.9 345.3L568.1 341.8L571 341.4L571.2 342L570.6 346.5L566.7 349.5ZM799 345.9L800.2 342.1L802 341.3L804.2 342.2L807.2 348.5L801.8 348.9ZM547 361.9L543.2 363.6L542.9 363.5L539.7 360.2L540.4 358.4L542.6 355.4L544.8 355.3ZM568.9 358.7L570.1 359.8L575.2 359.7L575.6 355.2L572.5 353.6L568.6 356.5ZM653.9 351.4L655.1 352.3L656.3 359L655.7 359.2L650.9 359.2L649.9 353.7ZM664.2 359.7L663.1 353L669.7 353.4L670.7 354L671.6 358.6L670.9 359.9L666.6 361.3ZM747.2 359.2L749.3 360.5L755.7 359.7L753.2 352.8L750.7 352.6L747.2 356.8ZM510.7 370.7L511.6 364.3L507.6 363.9L506.3 364.8L505.9 368.8L508.9 371ZM538 368.3L534.8 365L531.4 366.7L530.8 370.6L535.1 371.8ZM553.7 368.4L553.7 372.5L550.4 375.1L547.8 369.6L551.7 367.9ZM560.2 367.6L560.2 371.7L564.6 373.1L565.8 371L565.5 366.3L564.3 365.2ZM599.4 371.7L599.1 368.1L603.3 368.7L605 370.8L605.1 372.4L604.8 372.6ZM654 374.3L659.5 373.7L660.6 368.8L658.3 367.2L657.8 367.4L653.5 373.2ZM740.6 368.5L741.6 372.8L744.1 373.7L746.3 371.6L745.5 367.8L743.4 366.4ZM798.6 364.4L803.3 367.5L802.3 370.2L799 370.6L794 365.5L795 364.2ZM702.1 386.3L702.7 384.4L702.6 379.6L697.5 378.8L695.1 384.9L696.6 385.6ZM724.6 383.7L723.1 378.7L725.8 375.9L729.9 381.1L729.6 382.9L725.7 385.5ZM742.2 383.1L741.6 380.1L739.1 379.2L736.8 381.4L736.5 383.2L737.8 383.7ZM538.6 389.4L539.3 395.3L538 396.3L533.6 396.2L531.2 389.8L538.3 389.3ZM620.8 391.2L616.9 395.6L617 395.8L620.6 399.2L624.2 398L625.3 396.1L622.3 391.1ZM710.9 390.9L711.6 389L718.6 389.4L719.7 391.2L719.5 392L715.5 394.3L712.5 394.7ZM748.1 391.1L744.5 393.4L741.5 388.2L745.9 387.6L748.3 389.8ZM767.1 397.6L770.9 402.5L771.3 402.2L772.8 399.8L773.1 394.4L770.6 392.6L769.3 393.1ZM545.1 402.3L543.4 402L542.1 403L542.2 406.8L542.4 407.3L547.8 408ZM558.1 405.6L554.1 407.8L554 407.7L551.2 402L554.7 400.9L557.9 402.6ZM651.8 400L649 401.9L648.8 405.8L655.8 408.3L656.2 408L657.8 404.1ZM679.2 402.7L685.2 398.9L686.8 402.8L683.1 406.6L680.2 404ZM712.2 411.4L708.5 408.9L708.2 406L710.3 403.2L713.3 402.8L716.2 410ZM725.4 409.1L727.1 408.3L728.6 403.8L724.8 399.5L720.8 401.8L723.7 409ZM516.7 419L520.8 420.4L525.1 419.1L523.3 415.6L521.2 413.2L520.6 413.2L516.2 415.8ZM534.9 420.9L533.7 419.9L531.9 416.3L538 414L538.2 414.4L538.3 420L538.2 420.1ZM590.8 424.7L594.5 423.2L590.1 418L587 419.5L585.6 422.7ZM753.2 436.2L750.6 432.4L750.8 429.8L752.7 428.8L757.4 429.7L758.4 436.9ZM542.8 441.8L542.5 446.7L545 447.5L549.3 442.5L549.5 440.6L546.9 439.8ZM656.7 439.7L657.7 444.6L659.1 445.6L662.6 444.1L663.2 439L659.1 436.8ZM678.4 440.6L674.5 438L671.6 439L670.9 444.1L675.8 445.6L678.3 443.1ZM743.3 444.2L745 445.9L748.5 441.4L745.9 437.6L743.7 439.7ZM608.2 462.2L604.6 462.9L603.6 461.9L604.4 456.5L607.2 456.5L609.6 457.7ZM623.9 461.8L624.3 461.8L627.5 454.8L624.6 452.8L620.5 456.4ZM665.8 457.5L670.9 457.1L670.9 452.4L666 451L662.5 452.6L662.6 454.2L662.8 454.6ZM695.5 452.8L699 453.2L699.3 457.3L695.1 460.9L693.6 459.8L693.8 453.3ZM723.6 447.3L724.1 447.5L725 448.7L725.2 455.7L724.3 456.1L719.8 456.4L718.9 449.2ZM590.8 469.5L594.4 474.4L598.8 470.2L598.6 468.4L597.6 467.5L592 468ZM613.4 470.2L612.9 471.7L607.7 472.3L606.6 470.5L606.4 468.7L610 468ZM619.7 464.6L616.2 459.2L615.2 459.4L613.8 463.8L617.3 466ZM654.2 460.4L654 460L646.9 464.8L647 467.7L648 468L651.3 468.1ZM662.3 464.6L660.7 469.2L659.1 470.3L656.5 469.3L659.3 461.6ZM722.5 465L717.9 465.4L717.6 465.6L716.7 468.6L720.7 472.1L722.1 470ZM600.5 482.8L603 482L602.7 477.5L601.5 475.8L597.1 480L597.3 480.8ZM663.4 475.9L664.2 478.4L669 481.4L671.6 477.3L671 475.5L665 474.8ZM683.2 487L676 485.7L676 485.5L678.6 481.4L682.9 482.6L684 486.1ZM714.7 483L710.9 478.1L714.4 474.9L718.4 478.4L719 481.6ZM582.7 505L586.2 501L590.2 502.2L592.6 507.9L582.7 506.3ZM597.8 502.5L599.8 500.3L605.7 502.4L600.9 508.2L600.3 508.3L600.2 508.2ZM756.3 507.7L756.1 507.8L747.6 507.2L747.4 507L749.9 503.5L754.4 503L755.8 503.9Z"/><path fill="#888888" d="M653.7 62.1L654.6 64.5L663 68.1L663 65L660.3 62.1L654.2 61.6ZM673.4 68.8L673.4 68.9L679.4 67.1L681.5 63.1L680.8 61.5L677.3 61.8L673.4 65.8ZM555.4 75.1L556.3 76.9L561.9 76.7L563.9 74.2L563.3 72.3L560.9 70.6L556.6 70.3L554.9 72ZM596.2 67.2L603 69.2L604.1 70.1L601.5 75.3L597.5 74.8L595.8 67.9L596 67.4L596.2 67.2ZM543.5 88.5L547.7 86.7L548.9 83.4L548.1 81.5L543.8 83.9L542.4 87.5ZM646.9 88.9L642.3 91.9L637 87.6L637.6 84.9L639.6 84.1L644 84.1ZM723.3 84.6L722.3 82.4L717.8 81.4L716.6 82.9L716.1 86L717.9 88.4L719.6 88.7L722.8 86.4ZM731.7 86L737.4 84.1L737.2 89.9L736.3 90.6L731.2 87.9ZM564 96.9L563 99.6L566.5 103.3L567.8 103.3L567.4 97.3L564.6 96.6ZM615.8 93.5L617.7 92.4L624.8 92.6L622.1 98.8L618.2 98.9ZM651.6 96L652.3 101.7L649.3 103.8L646.5 102.1L646.9 98.9L651.6 96ZM676.7 99.6L680.5 101.6L676.7 106.8L674.7 106.8L672.9 102.9L673 101.4ZM728.3 93.6L725 95.8L727.8 99.8L730.3 102L732 100.8L733.4 96.3ZM741.4 97.3L740 101.8L746.9 103.3L747.7 102.8L745.8 97L742.3 96.6ZM774.4 99.3L772.3 102.8L766.6 104L765.3 102.9L766.3 98.1L770 96.2L774.2 97.6ZM553.5 109.1L558.4 111.5L561.9 108L558.4 104.4L553.7 107.8ZM642.8 109L645.6 110.7L646.8 113.5L640.7 116.9L638.9 111.3ZM655.3 114.1L656.3 113.3L657.5 108.7L655.2 108L652.2 110.1L653.4 112.9ZM694.9 103.3L694.8 103.4L691.5 109.8L696.3 110.3L699 106.3ZM724.7 112.7L727.1 110.5L727.6 108.5L725 106.3L719.1 109L723.5 112.4ZM758.7 117L759.2 115.5L758.9 112.1L757.6 111L754.2 111.1L753.4 111.6L751.5 117.6L752.6 118.9L756.5 118.8ZM586.2 120.6L585.5 118.1L579.9 117L578.3 122.4L580.9 126.2L582.3 125.8ZM606.4 118.6L605.5 121.9L606.3 123.4L606.6 123.5L612.8 121.1L611.7 118.8ZM618 131.6L621.1 128.3L621.2 128.1L619.1 124.9L618.4 124.5L612.2 126.9ZM659.7 119.1L660.7 118.3L667.2 117.2L667.1 123.2L662.9 123.3L660 121ZM719.6 125.2L720 120.3L718.9 119.9L712.8 121.7L711.7 125.7L712.1 126.1L717.3 126.7ZM728.8 124.6L727.6 124L728 119.2L730.5 116.9L735.8 121.1L732.8 123.8ZM763 131.2L760.6 125.5L762.8 123.8L766.9 127.8ZM781.8 125L781.9 125.1L785 124L787 118.6L786.6 118.1L781.1 118.2L780.3 120.6L781.2 124.6ZM540.7 133.8L539.8 137.2L544.7 138.3L547 133.9L546.8 133.5L546.5 132.9L544.6 131.5ZM554.2 133.7L559.9 131.6L560.9 137.4L559.1 137.7L554.4 134.2ZM599.1 140.2L596 145.4L594.5 144.2L594.9 137.7L598 137.4ZM612.2 137.1L610.8 138.6L605.6 136.8L604.6 134.1L606.4 131L606.7 131L612.5 135.8ZM663.1 135.9L666.1 129.9L670.3 129.7L672.4 131.8L672 134ZM680.2 135.4L680.6 133.2L685.5 131.4L688.2 132.2L688.2 135.7L682.8 139.2L680.4 136.5ZM703.1 131.1L699.3 130.6L697.3 131.4L697.3 134.9L698.8 138.5L703.1 135.5L703.5 131.4ZM716.6 140.6L716.1 134.9L710.9 134.3L710.5 138.4L712.5 141.7L716.1 141.5ZM737.3 138.8L739.7 137.2L735.9 131.5L731.9 132.3L736.1 138.2ZM540.2 150.8L537.1 151.2L534.7 150.2L534 147.2L536.3 145L541.1 146.1L541.6 149.6ZM576.8 145.1L575.4 142.5L571 143.9L571.5 151.1L575.8 149.9ZM589.6 150.1L584.3 148L583.3 152.8L584.3 154.1L589.8 154.3L591.2 151.5L591.2 151.4ZM608.4 145.6L608.2 147.7L604 150.5L600.2 149.3L600.2 149.1L603.2 143.9ZM634.2 147.9L636 149.4L637.3 149.2L640.9 141.4L640.7 141.1L634.6 142.1L633.5 146ZM661.8 146.8L660.5 142.6L660.6 142.4L669.5 140.5L669.7 141.6L664.8 147.3L662.5 147.3ZM692 141.5L686.7 145L688.2 148.4L693.3 146.6L693.5 145ZM715.8 148.4L712.2 148.6L709 152.4L709.5 154L716.1 152.7L716.6 150.6ZM742.8 144L745.2 142.4L746.1 142L750.1 143.5L749.7 147.6L746.6 149.4L742.4 146.5ZM769.9 146.8L770.8 152.2L774 153.8L777.4 150L777.5 149.2L773.1 146.5ZM786.4 148.1L788.2 145.5L792.2 145.2L792.6 145.7L793.6 149.7L790.4 151.8L786.3 149ZM571.4 164.2L575.9 163.2L576.3 159L575.3 157.7L570.9 158.9L568.9 161ZM628.4 155.1L630.2 156.7L627.5 161.7L626.2 162.4L622 159.2L622.4 156.2ZM685.4 166.8L681.3 161.8L681.4 161.1L684.3 158.6L689.7 163.8ZM730.3 154.9L729.5 159.6L725.8 160L724.7 159.6L723.3 156.1L723.7 154.1ZM738.8 153.2L743 156.1L743.4 159.3L737.8 160.5L736.9 159.5L737.7 154.8ZM753.5 155.4L755.9 159L754.4 161.7L753.6 162L750.9 160.4L750.4 157.3ZM764.3 164.6L761.3 162.6L762.8 159.9L766.3 158.4L769.5 160L769.6 160.4ZM778.3 159.3L778.2 158.9L781.7 155.2L785.7 157.9L785.7 161.8L779.2 161.1ZM536.4 172L536.4 174.3L535 177.3L529.3 174.4L529.2 170.9L535.4 171.2ZM557.6 169.1L558.4 174.5L558.9 175.3L562.2 175.1L564.8 170.9L564.9 169.9L562.4 166.7L561.1 166.5ZM591.3 178.5L585.5 177.5L587.3 172.7L590.8 172.1L592.2 175ZM605.7 172.2L604.6 166.7L604.4 166.6L597.7 168.2L597.4 168.8L598.9 171.6ZM614.3 172.9L619.4 171.1L620.8 168.4L616.6 165.2L612.8 167L613.9 172.5ZM648.9 177.2L650.5 169.9L646.7 168.9L645.1 174.6L645.9 176.8L647.4 177.9ZM655.9 176.2L660.6 175.6L663.3 173.5L663.4 172L659.7 168L657.4 168.9ZM681 174.5L676.8 176.3L672.6 173.7L672.7 172.2L677.1 167.5L681.3 172.5ZM720.6 174.8L717 174.3L716.5 173.9L715.2 169.9L720.5 167.2L721.6 167.7ZM767.1 169L772.4 164.7L773.3 166.5L772.9 170.5L770.6 171.7L768.1 170.7ZM781.5 171.4L785.5 174.1L790.5 171.1L790.5 171L788.5 168.1L781.9 167.4ZM525.6 187.3L531.3 184.8L531.1 183.4L525.4 180.5L522.9 183.5L523.4 187ZM558.3 183.1L557.2 185.2L560.3 189.4L563.7 185.2L561.6 182.9ZM585.8 186.9L582.2 184.2L582.9 182.5L583.3 182.3L589.1 183.2L589.3 183.8ZM652.1 186.5L652.2 185.3L653.7 184.6L658.4 184L660.8 190.4L660.6 190.8L654.8 191.5ZM673.3 187.4L668.4 188.5L666 182L668.7 179.9L672.9 182.5ZM688.2 188.4L683.2 190.7L683 190.7L681.2 189.2L680.8 184.3L685.1 182.4L688.3 185.3ZM765 177.2L761.6 180.5L764.6 183.4L766.9 183.8L767.5 178.2ZM519.9 200.9L517.2 197.6L517.6 196.3L519.9 193.8L522.1 194.1L524.7 197.8ZM549.6 200.2L554.9 199.8L556.3 198.9L555.9 196L552.8 191.8L548.2 194.7L548.2 199ZM582.6 193.8L579 191.1L576.8 192.6L576.9 198.7L578.7 200.4L580.5 199.8L583 198.2ZM589.9 192.1L593.4 188.9L596.9 192.4L594.3 196.3L590.3 196.5ZM609 192.5L613.2 197.7L617.5 195.3L611 190.6ZM655.5 202.3L655.8 202.9L659 204.6L661.9 199L661.8 198.1L656.1 198.8ZM723.8 192.5L724.3 193.4L718.3 198.5L715.4 197.7L714.8 194.6L715.5 193.9ZM725.2 202.1L724.2 200.9L730.3 195.8L732.2 197.4L733 199.6L731.9 201.1ZM781.6 193.4L784.5 191L788.6 193.1L789.5 197.8L786.2 198.5L783.6 197.6ZM526.5 211.5L532.9 205.2L528.7 203.8L523.9 206.9L525.2 210.7ZM570.2 205.2L564.8 204.9L563.3 205.8L565.2 212.8L565.4 212.8L571.9 208.1L572.1 206.9ZM646.6 206.5L646.9 207.1L645 210.1L639.8 211.5L637.6 210L637.7 208.7L641.4 206.1ZM694 207.4L689.9 207.4L688.4 210.6L689.4 212.4L695.1 211.2L695.8 209.2ZM717.5 206.4L716.5 205.2L713.6 204.5L711.8 206.9L714.8 211.8L718.3 209.1ZM735.2 211.1L738.4 213.5L742.2 209.2L742.3 206.5L738.2 204.5L737.1 206.1ZM766.5 203.2L769.7 207.4L769.4 208.8L764.3 209.1L762.1 205ZM522.6 220.2L524.1 223L523.9 224L520.5 226.9L516.7 227.7L515.9 226.2L518.4 220.4L521.3 219.5ZM620.8 222.4L621.4 221.1L621.9 218.2L618.8 217L618.3 217.3L613.5 221.9ZM634.7 217.8L632.4 216.3L629.4 218.4L628.9 221.3L633.7 223.5L637.3 222.7ZM641.8 218.4L644.4 223.3L646.4 224.8L648.8 221.7L647 216.9ZM688.3 223.7L689 219L694.7 217.8L696.2 223.4L689.1 224.6ZM720.9 216.2L717.5 218.9L717.1 222.2L720.2 223.6L721.3 222.9L724.6 217.7ZM745.3 215.1L747.1 218L746.5 222.3L742.2 221.4L741.5 219.4ZM770.9 219.7L771.5 216.5L770.2 214.6L765.1 214.9L764.8 215.8L765.2 221.8ZM533.4 226L533.2 227.1L536.6 233.6L536.8 233.6L541.5 231.3L542.5 228.2L539.5 226.4L534.5 225.9ZM586.6 236.3L591.5 230.5L584.8 230.2L583.4 234.5ZM625.5 234.5L624.8 234.2L624.7 229L625.4 227.7L630.2 229.9L627 234.6ZM681.2 237.1L683.5 233L683.5 230.7L682.7 229.8L677.9 229.4L678.9 236.5ZM717.2 232.4L716.3 229.8L713.3 228.4L709.5 229.6L709.4 231.7L713.6 237.5ZM724.8 232.1L723.9 229.5L725 228.8L731.7 229.1L730.5 233.7L726.4 233ZM771.5 233.8L768.6 235.8L766 229.8L766.2 229.5L771.9 227.4L775 230.5ZM786.5 236L785.6 233.4L782.5 232.9L779 236.1L784 238.4ZM549.3 245.1L544.6 244.5L541.8 240.9L546.5 238.5L549.4 242.1ZM593 248.1L587.8 250.4L586.7 249.1L588.3 244.6L592.4 246.9ZM647.4 241.1L647.7 244.9L643.3 249L641.4 248.4L639.9 242.3L645.9 239.4ZM677.6 245.1L678.5 248L674.1 252.2L670.4 249.5L672.3 244.5L675.3 244.5ZM719.1 249.3L721 249.5L722.6 249L722.6 241.3L721 240.4L717.4 245.5L717.3 247.6ZM729.6 248.1L729.6 240.4L733.7 241.1L735.9 244.3L735.9 245.4L732.5 247.8ZM755.9 251.3L765.6 250L763.1 245.8L759.2 247.1L755.7 251.1ZM778.5 243.9L775.2 248.3L773.7 248.6L773.2 248L770.6 243.7L770.7 243.6L773.6 241.7ZM789.9 242L791.9 243.7L792.6 247.5L792.6 247.5L789.4 250.6L784 248.9L787.3 244.4ZM522 257L521.5 255.9L528.1 253.4L530.8 258.4L527.9 260.3ZM548.4 262.2L553.9 258.1L557.1 259.2L553.7 265.3L549.9 265.5ZM571.6 256.4L576.6 261.9L576 263.1L573.4 264.9L572.1 264.9L568.7 259ZM682.3 263.2L678.8 260.8L678.5 258.5L682.8 254.3L685.5 255.3L687.6 260.8ZM785.4 261L784.5 257.6L779.1 255.8L777.5 256.1L776.2 259.8L777.5 261.1L784.6 262.1ZM540 265.7L537.3 264.7L537 264.7L534 266.7L533 271.6L534.9 273.1L540.5 272.5L541.5 269.1ZM559.5 267.3L563.8 271.5L566.7 267.1L563.3 261.2L563 261.2ZM585.6 263.9L587.9 262.1L593.9 265.7L593.6 266.7L590.5 268.8L585 265.1ZM635.1 274.3L628.5 270L628.4 267.6L629.8 267.2L637.8 270.2L636.8 273.4ZM678.1 272.3L677 275.2L669.9 272.1L670.3 271.3L674.4 267.8L677.9 270.1ZM718.6 260.3L720.6 260.4L722.8 266.9L722.3 269.6L717.9 269.5L716.7 268.9L716.3 265.9ZM744.1 278L742.9 273.3L744 271.9L748.7 272.4L751.3 276.1ZM515.3 280.7L512.4 286.1L516.9 287.4L517.7 286.2L517.4 281.4ZM543.6 285.9L537.1 286.3L536.8 281.1L542.4 280.5L543.2 281.7ZM597.8 287.2L597.5 287.1L595.8 285.5L594 278.6L594.7 277.7L597.8 275.7L598.7 277.1L599.5 284.3ZM613.7 280.5L613.7 280.2L612.6 279.4L606.2 276.2L607 283.4ZM684 278.2L682.9 281.2L682.9 283.8L683.6 284.2L687.9 285.1L690.4 281ZM707.9 280L712.5 277.8L713.6 278.4L713.6 285.3L712.3 286.5L709.7 284.9ZM725.6 281.5L724.4 277.6L724.4 277.6L719.9 277.4L719.9 284.3L724 283.8ZM779.3 283.9L779 279.7L778 279.1L775.8 279.6L773.3 284.6L774.7 286L777.8 285.2ZM521.7 292.7L527.3 294.2L527 298.8L522.2 299.5L520.7 298.5L521 294ZM551.3 294.5L549.3 297.7L554.4 300.8L556.3 298.3L556.3 298.1L554.9 295.6ZM576.7 299.7L574.2 295.7L569.2 299.2L572.5 303.2ZM608.2 294.3L612.5 286.5L612.3 286.2L605.6 289.1L603.9 291.9L606 294.1ZM758.6 292.5L759.9 295.9L765.9 295.3L767.2 291.1L765.7 289.7L761.1 286.5ZM524.9 308.4L525.4 305.6L530.1 304.9L532.3 306.4L532.8 307.4L528.6 311.6ZM615.6 305.9L614.8 304.9L609.8 303.3L607.7 303.2L606.6 309.6L607 310.1L611.6 311.5L615.5 306.5ZM647.1 310.7L645.5 303.7L649.3 303.8L653 308.1L649.6 310ZM693.8 305.5L695.2 304.7L698 306.6L697.6 310.1L694.5 313L692.3 312.5ZM716.4 304.3L718.1 301.4L725.4 303.6L725.9 304.1L725.4 306.8L722.7 309.2L720.3 309.2ZM747.2 310.7L752.6 310.2L752.7 304.9L747.8 305.9ZM513.8 314.9L507.8 314.7L507.4 317.2L508.8 319.3L513.4 318.6ZM520.3 315.3L519.8 319L521.8 320.6L524.3 319.8L524.8 317.2L521 314ZM555.4 320.3L552.2 317.2L547.8 317.8L546.9 322.8L551 325.9L552.1 326.2L554.7 324.2L556.1 322.1ZM569.9 314.2L565.9 319L564 318.7L563.3 316.9L565.8 313.9L568.7 312.4ZM589.1 317.9L588.8 321.1L595.6 322.3L597 316.4L596.6 315.8L590.4 316.2ZM645.8 317.3L643.6 319.7L643.6 320.1L651.4 323L648.3 316.7ZM655.5 315.7L658.5 322L658.7 322.1L661.7 320.7L662.2 315L661.1 313.8L658.8 313.7ZM700.4 315.8L697.3 318.7L699.6 322.6L703.9 319.2ZM781.5 326.4L784.9 326.4L787.5 320.9L786.3 320.6L780.4 321.3L780.4 325.1ZM557 341.7L562.2 338.2L557.9 332.9L555.3 334.9L556.6 341.5ZM593.5 336.1L590.6 333.1L587.9 328.7L588.3 328.1L595.1 329.3L596.4 331.1ZM640.2 334.4L637.1 330.2L634.6 331.5L633.2 336.3L636.6 337.4ZM646.9 331.8L643.7 327.6L644.6 325.6L652.5 328.5L652.6 328.6L650.4 333.9ZM657.8 336.1L660 330.7L662.9 329.3L666.3 331.9L665.7 333.6L658.3 337.8ZM682 340.2L683.7 339.7L684.8 335.2L681.5 332.1L677.9 333.5ZM707.8 323.6L703.4 327.1L703.3 327.9L709.4 331.3L710.4 329.8L709.3 323.7ZM736.6 331.4L741.3 333.6L742 333.7L744.9 329.9L740.8 325.7L736.1 330.5ZM776.2 331.4L776 333.5L772.5 336.1L769.9 331.8L775.1 330.2ZM794 324.4L794.3 324.3L798.3 329.6L798.2 333.1L796.4 333.9L795.5 333.6L791.4 329.9ZM550.7 343.6L549.4 337L548.3 336.7L542.3 341.8L544.9 345.4L547.1 345.3ZM583.2 347L579.9 344.3L577.3 342.9L576.6 347.5L579.8 349.1ZM592.3 345.5L588.9 345.4L585.6 342.7L589.4 339.8L592.3 342.8ZM605.3 346.3L603.5 346.5L600 345.8L599.7 345.3L599.6 342.6L602.5 337.6L605.5 337.6L608.1 341.4ZM617.9 352.3L613.9 349.2L616.6 344.3L618.3 344.1L622.3 345.2L622.6 349.5L618.4 352.4ZM630.4 344.3L631.5 343.2L634.9 344.3L637.9 348.7L634.3 350.3L630.7 348.6ZM646.3 339.9L642.7 342.9L645.7 347.2L646.5 347.2L650.4 344.9L650.4 343.7L649.8 342ZM658.1 343.7L665.4 339.6L666 346.2L659.4 345.9L658.1 344.9ZM672.8 343.8L672.2 337.2L672.9 335.5L673.3 335.5L677.4 342.2L673.8 344.4ZM699.1 349.1L699.1 349.2L701.7 351.1L704 351L706.5 348.8L707.4 345L707.2 344.3L701.4 345ZM724.4 349.6L723.2 347.1L717 345.6L716 349.4L719.4 351.6L723.7 350.6ZM523.9 353.6L523 356.1L522.8 357.6L527.1 360.1L530.5 358.4L531.1 356.6L525 352.9ZM623.4 358.3L625.5 361.9L630.9 362L631.2 357.1L627.7 355.4ZM679.6 351L680.4 355.6L683.9 355.6L688.6 351.3L688.5 351.1L684.9 348.2L683.2 348.7ZM693.6 363.7L688.7 359.6L693.4 355.3L695.9 357.2ZM708.8 356L711.3 353.8L714.7 356L714.8 359.3L710.9 359.8ZM732 354.5L733.6 354.7L738.2 357.4L738.3 359.7L735.5 361.8L731.2 362L731.3 355.5ZM785.9 354.9L781.2 353.4L779.3 354.1L778.8 357.3L782.7 361.4L785.3 360L786.2 358.7ZM792.6 353.7L792.9 357.5L796.5 357.7L797.7 354.5L794.8 351.5ZM666.7 375L667.8 370.1L672.1 368.7L673.9 372.8L673.1 375.5L668.3 376.8ZM679.4 365.1L681.2 369.2L688.7 369.5L688.4 367.9L683.6 363.8L680.1 363.8ZM713 371.4L718.1 371.9L720.8 369L720.9 368.8L717.7 365.9L713.8 366.3ZM759.6 366.5L760.3 370.3L756.9 372.4L753.7 370.9L752.9 367.1L759.3 366.3ZM777 367.2L773.1 363.2L768 365.8L768.7 369.6L771.3 371.5L776.4 369.2ZM526.3 380.1L528.1 377.4L532.4 378.6L534.3 382.8L527.1 383.3L526.8 383.1ZM594.5 379L597.1 384.3L599.3 384L602.2 378L596.7 377.1ZM645 378.1L644.4 377L642 374.2L639.2 373.9L636.3 378.4L636.3 379.2L639 380.9L644.4 379.6ZM669.2 386.5L669.3 383.7L674 382.4L676.5 385.8L671 390.1ZM751 385.2L748.6 382.9L748 380L750.1 377.8L753.3 379.4L752.6 383.9ZM759.9 383.6L760.7 379.1L764.1 376.9L766.7 378.8L766.9 383.6L765.6 384ZM783.3 382L783 384.1L777.6 385.9L775.2 384.2L775 379.4L780.1 377.1ZM508.3 393L506.2 395.7L506.7 397.8L512.2 397.8L511.9 393.5ZM601.3 392.7L606.3 396.1L606.3 396.4L602.6 401L600.8 400.8L598.3 396.5L598.4 393.6L599.1 393ZM646.5 386.8L647.5 390.6L647.2 392.4L644.4 394.3L641.7 392.9L641.2 388.1ZM674.6 396.6L676.9 397.8L683 394L683.4 391.1L680.3 390.5L674.7 394.7ZM703.9 393.9L705.5 397.7L703.3 400.5L702.2 400.1L698.4 393.2ZM733.3 397.3L736.9 396.7L738 395.3L734.9 390.1L733.5 389.6L729.7 392.1L729.6 393ZM754.3 392.1L756.1 394.1L759.6 394.6L761.8 390L756.1 389.6L754.6 390.8ZM574.3 402.2L572.9 405.6L569.6 407.4L566.8 404.9L566.6 401.9L571.4 398.5L574.2 401.8ZM623.3 406.2L626.9 405L630 408.6L626.3 410.9L623.2 409.3ZM699.5 410.2L690.5 410.6L690.4 409.6L694.1 405.8L698.6 406.4L699.7 406.7L700.1 409.7ZM733.9 409.9L737.3 412.4L741.7 408.5L738.9 404.8L735.4 405.4ZM750 397.8L746.5 400.2L745.4 401.6L748.1 405.2L750.5 406.2L752 405.3L751.7 399.9ZM759.3 401L759.6 406.4L766.3 406.9L766.6 406.3L762.8 401.5ZM576.7 421.9L571.7 421.6L572.1 416L575.5 414.2L579.3 417.9L577.9 421.1ZM620.3 415L616.4 419L618.1 420.1L624.8 420.8L623.4 416.5ZM630.6 415.9L632 420.2L632.3 420.5L636.7 418.4L636.5 414.1L634.2 413.6ZM677.8 410.2L680.6 412.9L680.8 413.9L680.5 416L676.8 417.8L674.2 415.7ZM693.8 420.9L696.8 415.7L687.8 416.1L687.5 418.1L690.3 421ZM701.7 421.2L704.8 416L705.3 415.5L709 417.9L709 419L704.3 424.1ZM718.8 425.4L716.6 420.4L716.6 419.3L720.7 417.9L722.4 418L722.5 423.2L719.4 425.7ZM529.7 427.3L528.5 426.3L524.1 427.5L523.7 431.8L525.7 433.2L528.5 431.3ZM575.8 434.9L570 436.2L566.8 431.8L567.4 430L568.9 428.8L573.9 429.1ZM628 426.6L627.7 430L624.8 432.7L621 425.5L627.7 426.3ZM640.5 431.8L639.7 432.2L634.6 430.2L634.9 426.8L639.2 424.7L641 425.9ZM670 426.8L662.7 429.1L662.8 430.5L666.9 432.7L669.8 431.6ZM707 431.4L713.2 429.4L711 424.3L706.3 429.4ZM723.4 432.8L726.4 430.2L729.9 431.5L729 435.3L726.1 438L725.6 437.8ZM783.7 431L786 430.5L786.5 424.8L782.9 424.9L780.2 428.8L780.7 429.9ZM518.9 440.7L519.4 437.9L517.4 436.6L512.5 435.3L511.1 436.3L511.1 438L515.9 442.2ZM557.9 442.1L561.3 447.5L565.1 445.1L565.1 442.1L561.9 437.7L558.1 440.2ZM579.7 442.5L579.6 448.2L576.4 448.7L573.6 446.7L573.7 443.7L579.4 442.3ZM586.5 442.8L586.4 448.5L588.2 449.5L593.3 446.9L593.3 445.3L588.9 442.4ZM601.6 446.6L603.4 448.7L606.2 448.7L608.9 442.8L604.9 440.8L601.6 445.1ZM643.6 444.2L644.6 439.7L645.4 439.3L649.8 440.1L650.8 444.9L649 445.3ZM687.7 439.5L686 441.1L685.9 443.6L689.8 445.8L691.5 445.3L691.7 440.3ZM698.3 440.6L698.1 445.6L701.5 446L703.6 443.9L702.2 439.5ZM779.5 437.6L778 442.9L772.4 442.6L772 442.3L776.5 436.6ZM565.2 460.1L562.9 458.4L564.2 455.4L568 452.9L570.8 454.9L570.1 458.5ZM641.3 456.1L645.7 450.7L640.3 449.6L637.7 451.8ZM739.7 451.2L741.4 452.8L741.9 454.7L742 456L738.9 458.9L733.9 457.3L733.7 450.3ZM773.7 449L775.1 455.4L780.9 455L781.7 451.1L779.4 449.3ZM551.5 465.8L548.3 465L544.2 469.5L545.4 472.4L546.9 473.3L549.1 472.9ZM562.9 471.1L561.8 476.1L555.9 472.9L558.3 465.8L559 465.6L561.3 467.3ZM630.9 464.9L636.3 468.4L639.3 466.7L639.2 463.8L638.6 462.2L634.9 457.9L634.1 457.8ZM730.4 464.7L735.4 466.3L735.9 470L734.5 471.5L729.2 470.1L729.6 465.1ZM725.8 481.9L725.2 478.7L726.6 476.6L731.9 478L730.1 480.8L727.3 482.5ZM542 492.4L536.6 495.5L534.4 493.4L534.2 489.7L541.5 490L542.3 491.7ZM593.4 495.1L595.3 492.9L596.3 489.2L593 487.3L588.6 490.8L589.4 493.9ZM620.3 485.9L627 488.2L627.1 488.7L625.1 492.5L622.1 494.4L619.3 493.4L617.3 488.3ZM644 497.8L643.4 493.1L649 494.7L649.2 495.1L647.6 497.8ZM715.4 494L717.1 490.1L721.4 488.7L722.9 489.3L724.8 495.2L717.2 495.6ZM608.4 508.4L613.2 502.6L614.9 501.7L617.6 502.7L617.8 506.4L614.8 510ZM639.3 503.6L641.5 502.7L645.2 502.7L644.6 506.8L640.4 507.4ZM709.3 502.1L706.1 503L704.9 504.9L704.9 509.5L710 511.1L710.7 511L712.6 508.9L711.1 503.6Z"/><path fill="#909090" d="M637.9 60L635.5 65.2L639.6 64.9L642.4 61.6ZM544 78.2L548.2 75.9L547.7 72.8L544.2 73.1ZM585.6 67.3L578.5 66.2L574.7 70.2L575.3 72.1L579.7 74.4L585.4 67.8ZM589.5 72.7L583.8 79.3L583.8 79.3L588 81.9L591.1 79.6ZM631.6 72.6L632.8 71.8L636.9 71.5L635.6 77.5L633.5 78.3L632.9 77.6ZM726.4 70.1L723.7 75.2L719.3 74.2L719.4 71.3L721.9 69.5ZM757.2 72.3L755.2 78.1L756.5 79.9L761.3 78.1L761.5 73.7L757.6 71.9ZM767.9 78.1L768.1 73.8L770.4 72.9L772.1 73.6L774.1 77L769 79.2ZM568 88.8L570.8 89.5L573.2 89.3L575.3 83.1L575.3 83L570.8 80.7L568.9 83.2ZM582.5 95L585.4 94.2L586.4 90.3L586.1 88.8L581.9 86.3L579.8 92.5ZM602.5 88.1L601.3 84.5L597.2 84L594.2 86.3L594.5 87.8L600.6 89.3ZM709.5 84.4L710 81.4L705.2 78.5L705.8 84.6ZM744 88.9L747.4 89.3L750.3 87.1L750.4 85.4L749.1 83.7L744.2 83L744.1 83.1ZM565.7 116.4L565 115.1L568.4 111.6L569.8 111.6L572.5 112.6L572.7 113.1L571.2 118.5L567.8 118.1ZM581 107.9L581.2 108.5L586.8 109.6L589.6 105.6L585.9 102.5L583 103.3ZM548.4 123.6L550.2 125L555.8 119.4L555.1 118.1L550.2 115.7L547.2 118.8ZM632.3 115.1L634.1 120.8L634 121L628.1 123.6L626 120.4L630.8 114.6ZM704.5 112.1L705.8 118L704.7 122.1L701 121.6L700.8 116L703.5 112ZM567.7 135.8L568.8 135.9L573.2 134.5L574.3 131.9L571.7 128.1L568.4 127.6L566.8 129.9ZM780.2 134.1L780.3 134.2L782.8 140.3L781 142.9L776.6 140.2ZM704.6 142.6L706.5 145.9L703.4 149.6L700.1 147.1L700.2 145.5ZM586 166.8L583.5 165.3L583.9 161L589.5 161.2L589.7 165.6L589.5 166.2ZM597.3 155.4L601 156.5L602.9 160.9L596.1 162.5L595.8 158.1ZM664.6 155.9L664 161L667.8 165L672.2 160.3L672.3 159.6L666.9 155.9ZM696.6 161.1L691.2 155.9L691.6 155.1L696.8 153.4L700.1 155.9L700.5 157.5L700.2 160.2L698.6 161.1ZM637.7 176.5L631 177.7L628.3 173.5L629.6 170.8L631 170.1L636.8 174.4ZM696 176.1L696.8 169.9L694.8 169.9L690.4 172.9L690.2 174.9L693.4 177.7ZM616.5 178.9L621.6 177.2L624.3 181.3L623 184.3L616.4 180.8ZM638.9 188.9L632.4 190.3L632.3 187.7L633.7 184.6L640.4 183.5L641.8 184.7L641.7 186ZM707.5 183.4L711.8 181.8L712.4 182.3L710.8 188.7L710.1 189.5L708.4 188.8ZM759 186L756.1 183.1L752.8 182.6L752.1 185.1L755 189.3ZM636.5 200.9L632.8 203.5L629.8 197.9L630.1 197.2L636.6 195.8ZM658.5 211.5L661.3 214.7L661.3 214.8L655.3 217.5L653.5 212.8L655.3 209.8ZM664.1 208.3L666.8 211.5L670 208.6L670.1 207.9L667 202.8ZM754.1 205.6L750.6 206.6L750.5 209.3L752.2 212.2L757 211.2L757.4 210.3L755.2 206.1ZM593.9 221.2L594.6 224.6L593.3 225.1L586.6 224.8L585.1 222.6L585.4 219.7ZM758.2 225.6L753.9 225.8L752.7 224.6L753.3 220.3L758.1 219.2L758.5 225.2ZM785.8 226.5L786.8 225L787.1 221.2L784.2 219.1L780.2 219.6L779.6 222.9L782.7 226ZM643.8 232.8L643.5 231.1L643.5 230.9L641.5 229.4L637.9 230.2L634.8 234.8L637.8 235.7ZM692.2 232.2L697.5 236L700.5 231.5L700.6 229.4L699.2 228.6L692.2 229.9ZM559.7 249.5L558.5 247.4L558.7 244.4L563.9 241.4L565.2 242L566.5 243.3L566.3 247.8L566.1 248.1L563.2 250.7L562.9 250.7ZM601.2 245.9L606.9 243.6L607.5 242L602.2 236.1L599.8 244.1L600.3 245.3ZM615.8 245.9L618 252.6L618.6 252.9L622.3 248L621.6 243L620.9 242.7L616.4 244.3ZM656.3 240.9L662.5 239.9L664.5 242.6L662.6 247.7L660.7 247.8L656.7 244.8ZM624.8 260.8L622.5 258.9L626.2 254.1L630.9 256.3L626.2 260.4ZM651.8 251.2L655.8 254.2L654 257.7L649.2 259.8L647.3 255.3ZM794.6 261.2L793.7 257.8L796.9 254.7L801.7 261L800.6 262.3ZM579.2 270.5L583.3 274.6L586.7 273.2L587.4 272.3L581.9 268.6ZM658.3 304.7L660.6 304.8L662 298.7L657 297.1L654.5 300.4ZM686.2 299.1L685.9 291.6L690.2 292.5L691.8 295.6L692 297.6L690.6 298.4ZM722 290.9L717.9 291.4L716.6 292.6L716.7 294.7L724 296.8ZM632.5 313.8L628.7 306.9L624.5 307.4L624.4 308L626.6 312ZM641.6 310.8L639.4 313.2L638.9 312.7L635.1 305.8L638.6 303.2L639.1 303.3L640 303.9ZM683.3 306.4L687.7 305.8L686.2 312.8L683.8 313.3L681.2 310.5L683.1 306.5ZM783.6 314.5L780.4 308.7L776.5 309.8L776.1 312L776.7 314L777.7 315.2ZM742.9 350.7L746.4 346.5L743.4 341.9L742.6 341.9L738.3 348ZM616.2 362.9L612 369L612.1 370.6L614.8 371.4L618.3 368.8L618.8 366.5L616.7 363ZM788.3 376.1L785 371.3L785.6 369.3L788.2 367.9L793.1 373.1ZM561.2 379.5L556.8 378.1L553.6 380.7L553.6 380.8L556.4 383.7L561.6 382.6ZM567.5 390.8L567.5 392.2L562.7 395.6L559.5 394L560 389.6L565.2 388.6ZM632.9 402.1L634 400.2L637.4 399.4L640.1 400.8L639.8 404.7L638.3 406.1L636 405.6ZM599.8 411.5L601.6 411.7L604.3 417.7L601.6 420.2L600.2 419.9L595.7 414.7L596 413.9ZM591.3 455.7L596.4 453L598.2 455.1L597.4 460.5L591.9 461.1ZM699.6 467.7L700 469.1L704 472.2L704.7 472.3L708.2 469.1L709.2 466.1L703.8 464.2ZM613.9 477.1L608.7 477.6L609.1 482.1L611.1 482.7L614.1 480.2Z"/><path fill="#989898" d="M632.3 58.1L630 63.3L628.8 64.2L625.6 61.7L626.9 56.5L627.4 56.1L630.4 56.7ZM614.9 80.3L613.1 84.9L611.2 86L609.6 85.3L608.5 81.7L611 76.6L611.3 76.6ZM595.9 100.9L595.2 101L591.5 97.9L592.5 93.9L598.6 95.4ZM658.4 95.5L659 101.2L661.4 102L665.3 100.5L665.4 99.1L662.3 95.1ZM712.1 102.7L714.5 103.6L720.4 101L717.7 97L716 96.7ZM618.4 107.7L618.5 107.6L622.5 107.5L625 110.1L620.2 115.9L619.5 115.6L618.3 113.2ZM554.3 129L553.9 128.5L559.5 122.9L561.6 124.5L560.1 126.8ZM597.4 130.1L594.3 130.3L589.6 129L593.4 123.8L598.5 125.4L599.3 126.9ZM620.8 138.9L626.6 142.1L627.6 138.2L624.3 134.3L621.1 137.6ZM618.7 143.7L624.5 146.9L625.2 148.8L619.2 149.8L617.2 147.3L617.4 145.2ZM672.7 150.6L678.1 154.3L681.1 151.8L681.4 151L680 147.6L677.6 144.9ZM533.3 164.4L532.7 158L530.2 157L528.5 158.6L526.8 163.8L527.1 164.1ZM650.1 159.9L648.8 157.2L656 154.4L656.7 155L656.1 160L653.9 160.9ZM717.2 161.7L711.9 164.4L708.8 162.3L709.1 159.6L715.7 158.2ZM599.3 183.1L599.2 182.6L600.1 179.1L606.9 179.7L607.3 180.1L607.2 181.9L606.1 184.3L604 186.2L602.8 186.5ZM616.4 186.4L622.9 190L623.1 192.7L622.7 193.3L621.7 193.5L615.2 188.8ZM649.1 199.6L649.7 196.1L646.9 191.2L644.1 194.2L644 199.2ZM693.3 195.1L693.4 200.5L689.3 200.6L686.8 196.2L691.9 193.9ZM750.1 195.5L747.3 191.4L741.4 195.8L742.3 198L746.4 199.9L749.9 198.9ZM532.3 213.1L533.8 215.9L534.9 215.7L540.9 210.4L541.8 208.5L541.8 207.5L540.4 206.3L538.7 206.8ZM591.1 204.4L588.6 205.9L596.5 212.5L597.3 210.4L597.6 208.3L595.1 204.2ZM606 212.3L613.4 212.6L613.9 212.3L611.5 208L606.3 210.2ZM601.4 219.6L602.3 217.5L609.6 217.7L604.8 222.4L602.1 223.3L602.1 223.2L601.4 219.8ZM662 220.9L656 223.7L653.6 226.8L653.6 227L663.5 225.1L663.9 224.5ZM731.9 218L735.1 220.3L735.9 222.3L734.9 223.5L728.2 223.2L731.6 218.1ZM747.9 249.4L743.9 246.4L744 245.3L747.9 242L752.4 245.7L748.8 249.6ZM758.8 273.9L760.9 272L764.3 265.9L756.8 265.2L755.8 270.1L758.5 273.8ZM785.5 268.4L778.5 267.3L781 272.4L782.1 273.1L784.8 271.2ZM793.9 267.1L799.8 268.2L799.9 271.6L797.7 274.5L792.4 271L793.1 268.2ZM607.3 327.1L609.8 323.4L609 320.9L604.4 319.5L603 325.4L604.3 327.1ZM726 334.2L723.4 339.8L717.2 338.3L716.9 337.6L717 335.9L718 334.5L724.3 332.5L725.5 333.2ZM597.3 354.4L595.2 359.8L596.5 361.5L600.7 362L600.7 355.2ZM586.6 367.5L586.7 371.9L589.9 373L592.2 371L591.8 367.4L590.5 365.8ZM609 379.2L609.3 379L611.9 379.7L615 384.3L611.1 388.6L606.1 385.2ZM626.8 380.4L623.7 382.6L622.2 382.7L619.2 378.2L622.7 375.6L626.8 379.6ZM527.5 477.4L533.4 471.2L530.1 469.2L526.8 476.8ZM765 473.4L765.4 472.3L764.6 469.6L760.2 468.3L757 475.1L762.5 475.5Z"/><path fill="#a0a0a0" d="M646.6 74.8L642.2 74.8L643.5 68.8L646.3 65.5L647 65.5L647.9 67.9L647.9 72.9ZM731.4 78.9L730.4 76.6L733.1 71.6L733.3 71.5L735.2 72L736.3 73.3L737.1 76.9L737.1 77ZM743.2 73.6L750.9 72.1L748.9 77.9L744 77.2ZM546.3 95.1L550 101.1L554.7 97.7L555.8 95L550.3 92.6L546.2 94.4ZM699.9 94.3L699.6 97.6L703.7 100.6L704.7 100.7L705.3 100.5L709.2 94.5L707.4 92.1L703.7 92.3L700.5 93.1ZM754.7 93.9L758.3 97.1L757.2 101.8L753.9 101.9L751.9 96.2ZM606.8 109.5L612.7 107.5L612.6 113L607.3 112.8ZM773.8 115.7L767.7 114.4L767.4 111L773.1 109.8L774.6 113.3ZM675.4 122.6L677.4 124.6L682.4 122.9L681.5 117.1L677.9 115.6L676 115.7L675.5 116.6ZM694.5 123.8L694.3 118.2L689.5 117.7L689 118L689.8 123.9L692.5 124.6ZM740 127.5L743 124.7L744.9 125L745.9 126.2L744.8 132.7L743.9 133.1ZM654.3 128.2L657.2 130.6L654.2 136.6L654.1 136.8L649.6 134.9L649.4 134.7L649.2 133ZM562.1 155.1L563.4 155.4L565.4 153.2L564.9 146.1L563.8 146L562 146.2L559.6 150.9ZM643.7 150.4L647.3 142.7L651.7 144.5L653.1 148.7L645.9 151.6ZM612.3 152.8L608 155.6L609.9 160L610.1 160.1L614 158.4L614.3 155.4ZM640.4 167.5L634.6 163.2L637.2 158.2L638.5 158L640.8 159.1L642.1 161.8ZM543.2 179.4L549.9 181L550.4 181.8L549.3 183.9L544.6 186.8L541.9 183.9L541.7 182.5ZM574.8 183L572.6 184.4L570.2 183.2L568.1 180.9L570.6 176.8L575.5 181.3ZM734.4 183.6L734.9 186.5L735.4 187.4L737.3 189L743.3 184.6L743.9 182.1L743.4 181.2L738.3 179.7ZM570.1 197.5L564.6 197.2L564.2 194.3L567.6 190.1L570 191.3ZM601 199.8L603.5 203.9L608.7 201.7L609 200.8L604.8 195.6L603.6 195.8ZM700.5 196.5L700.6 202L702.4 203.8L705.5 202.9L707.4 200.4L706.7 197.3L705 196.6ZM624.2 201.9L623.2 202L618.9 204.5L618.5 205.4L620.9 209.7L624 210.9L627.1 208.8L627.2 207.5ZM776.8 208.5L776.5 209.9L777.7 211.8L781.7 211.4L782.7 206L780.1 205.1ZM564.8 230.3L561 225.1L563.6 222.8L563.8 222.8L568.3 225.5L566.1 230.8ZM679.4 221.8L680.2 217L679.2 215.3L674.3 214.2L671.1 217.2L671.1 217.3L673 220.9L674.6 221.4ZM572.1 233.4L574.3 228.2L577.2 227L578.7 229.2L577.3 233.5L573.3 234.8ZM606.7 229.3L606.4 228.8L609.1 227.9L616.5 228.3L616.6 233.6L612 235.2ZM653.9 234.5L660.1 233.5L662.1 229.3L652.2 231.2L652.4 232.9ZM673 236.1L670 236.1L668 233.4L670 229.2L670.4 228.6L672 229ZM706 246.7L709.4 246.4L709.6 244.3L705.3 238.4L702.3 242.9L702.4 244.4ZM575 252.1L575.2 251.8L581 252.5L582.1 253.7L582.3 255.8L580 257.6ZM744.9 285.3L746.1 283.5L753.3 281.6L753.6 281.7L753.8 282.4L751.3 288.3L745.5 287.5ZM648.7 296L651.2 292.6L649.6 289.3L649 289.1L644.1 295.3L644.9 295.9ZM561.5 310.2L558.8 304.6L557 307.2L555.7 310L558.9 313.1ZM760 309.9L759.6 309.5L759.8 304.2L759.8 304.1L765.8 303.5L767.9 306.7L767.5 308.8ZM622.3 316.9L621 321.4L620.9 321.5L617.2 320.4L616.3 317.9L620.2 312.9ZM672.8 325.8L669.5 323.2L670 317.5L675.5 317.5L678 320.4L677 324.4L673.3 325.7ZM736.6 317.6L736.5 319.3L731.8 324.2L730.6 323.5L728.5 316.8L731.2 314.4ZM615 335.2L612.3 331.3L614.9 327.6L618.6 328.6L616.6 335ZM731 346.3L729.8 343.8L732.4 338.2L737.1 340.4L732.7 346.5ZM733.9 369.2L734.9 373.5L732.6 375.7L728.5 370.4L728.6 370.2L729.6 369.4ZM576.8 378.7L570.7 377.6L569.5 379.6L570 382.7L572.2 384.9L575 383ZM779.1 407.5L780.7 405L787.9 404.8L789.3 408.1L788.1 409.8ZM643.8 413.3L644 417.7L645.8 418.9L650.8 418.5L652.4 414.4L645.3 411.8ZM616.3 451.4L620.4 447.8L619.3 444.7L615.6 444.4L612.9 450.3L615.3 451.5ZM708.9 436.6L710.3 440.9L713.4 441.7L718 439.7L715.8 434.8L715.1 434.4L708.9 436.5ZM546.9 505.8L540.8 506.5L540 505.4L539.1 501.9L544.5 498.9L547.3 504.4Z"/><path fill="#a8a8a8" d="M691.5 74.3L689.2 74.3L687 70.2L689.1 66.2L694.2 69.9L694.2 70.5ZM711.1 71.2L706 68.1L703 70.4L703 71L704.8 72.8L709.6 75.7L710.9 74.1ZM605.7 103.1L603 101.6L605.8 96.1L607.7 94.9L609.3 95.6L611.6 101L611.5 101.1ZM651.1 120.1L649.2 118.9L643.2 122.3L643.1 122.6L646.4 126.7L651.5 121.9ZM774.2 125L773.3 121L767.3 119.7L766.8 121.2L770.9 125.3ZM703.4 213.5L702.6 215.5L704.1 221.1L705.5 221.9L709.2 220.7L709.6 217.4L706.5 212.6ZM603.6 253.2L604.1 260.2L608.4 259L611.5 257.6L609.4 250.9ZM739.5 259.9L737.4 258.4L735.9 254L739.3 251.5L743.2 254.4ZM760.2 257.6L758.9 255.3L768.7 254L769.1 254.6L767.8 258.3L767.7 258.3ZM580.9 320L580.6 323.1L580.2 323.7L577.5 325.1L572.3 322.3L576.3 317.6ZM585.5 379.9L585.9 379.5L589.2 380.6L591.7 385.8L591 386.5L590.3 386.5L583.7 384.2Z"/><path fill="#b0b0b0" d="M684.6 86.1L691.5 88L692 86.9L690.1 82L687.8 81.9L684.1 83.8ZM686.3 104L682.4 109.2L686 110.6L686.5 110.3L689.7 104ZM722.8 138.1L722.3 132.4L724.6 130.8L725.8 131.5L730 137.3ZM702.6 175.4L703.3 169.3L704.9 168.4L708 170.5L709.3 174.5L704.9 176.1ZM745.4 234L741.4 237.3L739.2 234.2L740.4 229.5L741.3 228.4L745.6 229.3L746.8 230.4ZM751.1 454.7L754.8 455.8L759.9 448.4L759.4 448L751 453.4Z"/><path fill="#b8b8b8" d="M656.2 87.1L660.1 86.7L662.9 80.9L662.7 80.4L654.6 80.3L653.2 82.2L656.1 87ZM664 107.9L662.8 112.5L669.3 111.3L669.8 110.4L667.9 106.5ZM636.3 127.7L630.3 130.2L630.3 130.5L633.6 134.5L639.8 133.5L639.5 131.8ZM730 176.3L733.8 172.4L732.9 168.1L732 167.1L728.3 167.5L727.3 174.6ZM519.3 239.6L514.2 243L513.4 237.8L514.2 235.8L517.9 235ZM579.5 372.1L580 371.7L579.8 367.3L578.2 366.2L573.2 366.3L573.5 371ZM662.3 416.2L662 416.4L660.3 420.6L661.5 423.3L668.9 421L669 420.5L666.4 418.5ZM761.4 421L763.5 419.5L765.4 414L765.3 413.5L758.6 413.1L757.1 414L756.7 420.1ZM647.5 459.1L654.5 454.4L654.4 452.8L653.1 451.7L651.2 452.1L646.8 457.5Z"/><path fill="#c0c0c0" d="M749.8 264.8L750.7 259.9L749.4 257.7L749.2 257.4L748.2 257.2L744.5 262.6L745.1 264.4ZM757.4 334.2L755.9 332.6L752.6 333.7L749.7 337.5L752.7 342.1L755.2 342.2L756.1 341.7ZM593.6 401.3L596.1 405.6L592.2 407.9L590.4 404.8Z"/><path fill="#c8c8c8" d="M669.3 196.6L672.4 201.7L676.2 195.8L674.4 194.3L669.5 195.4L669.2 195.7ZM558.9 282.5L550.9 282.9L551.2 287.1L551.7 287.7L555.3 288.9L558.9 282.6ZM577.2 336.1L577.5 336.7L580.1 338L583.9 335.2L581.1 330.8L578.5 332.2Z"/><path fill="#d0d0d0" d="M725 183.6L725.5 186.5L717.2 187.9L718.8 181.5L722.4 181.9Z"/><path fill="#d8d8d8" d="M632.7 95.4L630 101.6L632.5 104.2L634 104.7L638 102.5L638.3 99.3L633.1 95ZM708.9 108.8L710.2 114.7L716.3 112.9L711.8 109.5L709.4 108.6Z"/></g>
</g></g>
<g filter="url(#b1)" fill="#f6f6f6"><ellipse cx="604" cy="188" rx="6.5" ry="5.5" transform="rotate(-45 604 188)"/><ellipse cx="606.9" cy="185.8" rx="4.0" ry="3.3"/><ellipse cx="680" cy="210" rx="7.5" ry="6.5" transform="rotate(-8 680 210)"/><ellipse cx="683.4" cy="207.4" rx="4.7" ry="3.9"/><ellipse cx="744" cy="349" rx="5" ry="4" transform="rotate(29 744 349)"/><ellipse cx="746.2" cy="347.4" rx="3.1" ry="2.4"/><ellipse cx="598" cy="441" rx="8" ry="9" transform="rotate(-24 598 441)"/><ellipse cx="601.6" cy="437.4" rx="5.0" ry="5.4"/><ellipse cx="573" cy="143" rx="3" ry="3" transform="rotate(13 573 143)"/><ellipse cx="574.4" cy="141.8" rx="1.9" ry="1.8"/><ellipse cx="756" cy="127" rx="3.5" ry="2.5" transform="rotate(-40 756 127)"/><ellipse cx="757.6" cy="126.0" rx="2.2" ry="1.5"/><ellipse cx="800" cy="325" rx="2.5" ry="3.5" transform="rotate(-3 800 325)"/><ellipse cx="801.1" cy="323.6" rx="1.6" ry="2.1"/><ellipse cx="537" cy="190" rx="5" ry="4.5" transform="rotate(34 537 190)"/><ellipse cx="539.2" cy="188.2" rx="3.1" ry="2.7"/><ellipse cx="735" cy="466" rx="6" ry="4" transform="rotate(-19 735 466)"/><ellipse cx="737.7" cy="464.4" rx="3.7" ry="2.4"/><ellipse cx="615" cy="340" rx="3.5" ry="3" transform="rotate(18 615 340)"/><ellipse cx="616.6" cy="338.8" rx="2.2" ry="1.8"/></g>
<!-- vectors -->
<g fill="none" stroke-width=".95" opacity=".78" clip-path="url(#sc)"><path stroke="#d6566d" d="M533.3 416.4l-5 -7.8M528.5 373.5l-12.6 -10.9M546.7 394.9l-11.5 -13.9M551.6 321l-6.1 -4.9M528.5 401.5l-11.4 -12.6M600.4 322.3l-7.3 -7.1M525.9 397.3l-10.6 -12.3M533.2 398.9l-6.8 -7.1M578.6 432.8l-2.8 -6.4M532.9 419.3l-6 -9.4M518.4 403.6l-11.8 -13.7M568.9 413l-9.3 -14.8M581.4 337.3l-11.7 -10.2M514.2 431.4l-6.2 -12.7M556 369.8l-9.6 -8.4M531.2 343.9l-5.7 -4.6M545.7 403.6l-7 -8.7M545.7 420.1l-3.3 -5.2M533.1 346.4l-9.2 -8.1M538.6 371.2l-9.8 -8.6M544.9 357.9l-7.8 -6.3M546.3 343l-6.4 -6.2M544.4 369.6l-10.6 -10M525.9 347.4l-6.5 -5.2M531.6 401.3l-5.8 -6.7M584.3 386.6l-9.5 -11.4M521.5 366.9l-13.6 -9.9M589.6 378.9l-13 -12.2M543.6 409l-6 -9.3M515 344.4l-9.5 -6.7M521.1 392.1l-9 -9.8M547.4 373.3l-8.7 -8.1M529.9 402l-9.6 -12.7M546.5 404.8l-8.7 -12.8M746.4 470.3l0.8 -8.8M782 449.6l3.2 -10.1M774.2 483.9l0.7 -7.3M782.1 455.1l2 -8.3M773.9 469.3l0.8 -7M733.1 465.1l1 -8"/><path stroke="#dc5d67" d="M573.7 420.2l-8 -14.9M557.4 382l-9.9 -10.1M550.5 447.3l-3.1 -10.5M582.8 416.6l-4 -6.5M531.9 449.2l-2.8 -8.9M537 445.7l-3.6 -11.5M524.5 377.8l-5.8 -5.2M523.5 464.4l-1.2 -6.9M551.2 465.7l-1.6 -10.5M514.3 397.9l-8.7 -9.5M546.3 425.2l-5.7 -11.6M520.5 419.8l-8.1 -13.8M532.4 405l-4.3 -6M533.4 386.8l-13.8 -12M521 441.4l-4.7 -12.6M536.1 444.9l-3.4 -11M575.8 434.4l-4.3 -10.5M548.3 441.5l-3.5 -9.8M539.4 429.1l-6.2 -13.8M522.6 438.7l-2.6 -6.4M551.1 430.1l-5.3 -11.9M536.3 400.5l-4.5 -5.1M611.9 443.2l-4.2 -13.6M606.5 426.8l-3.5 -8M611.7 448.9l-3.5 -12.5M536.6 450.3l-3.7 -12.6M529.8 444.1l-3 -7.9M531.9 416.6l-3.6 -5.8M532 429.8l-7.3 -13.9M533.6 473.4l-0.8 -7.4M546.2 444.9l-2.6 -7.3M529.7 383.5l-7.9 -7.7M535.4 398.4l-5.9 -7.2M532.6 470.3l-1 -8.4M573 387.5l-11.9 -12.9M523.9 439.7l-4.7 -12.4M582.8 455.8l-2.7 -13.1M539 367.3l-12.8 -11.3M552.7 479l-1.1 -11.1M531.9 454l-1.8 -6.6M760.8 482l0.4 -4.2"/><path stroke="#cc4778" d="M562 326.5l-5.7 -4.7M526.1 330.6l-10.8 -10.3M544.2 341.7l-12 -11M532.3 319.6l-5.9 -5.3M511.9 291.2l-6 -5.4M594.8 283.8l-10.6 -12.2M524.5 326.9l-12.7 -11.1M544.6 340.5l-11.2 -9.1M593.3 356.1l-6.8 -6.6M517.4 306.7l-10.2 -8.3M595 290.3l-4.8 -4.4M512.3 330.6l-13.9 -11.9M548 345.1l-11.9 -9.2M559 286.6l-7.2 -6.6M529.2 301l-8.2 -7.5M545.1 293.6l-12.1 -11M571.2 298.2l-11.3 -9.6M554.6 301.4l-10.8 -10.3M528 264.6l-7 -6.2M576.9 280.3l-6.5 -5.8M522.9 288.5l-12.3 -10M511.9 306.7l-13.6 -11.8M510.9 327.5l-15.1 -11.7M592.8 278l-6 -6M548.3 361.1l-12.5 -11.2M589.4 366.1l-13.3 -11.8M547.5 269.9l-7 -6.2M551.5 313l-5.8 -5.2M522.7 306.1l-12.7 -12.1M527.2 310.4l-7.3 -6.2M527.2 302.2l-5.4 -4.4M520.1 345.9l-11.2 -9M546.5 270.6l-8 -6.1M515.5 309.2l-7.3 -5.2M540.9 325l-5.6 -4.3M523.7 307l-7 -5.7M526.7 289.2l-11.2 -8.5M532.9 300.9l-6 -5.6M560.6 309.2l-8.3 -8M513 289.2l-5.6 -4.5M536.3 311.4l-11 -9.7M527.4 350.3l-11.5 -9.5M569.6 292.6l-6.2 -5.6M537.5 263.6l-10 -7.7M531.9 348.7l-12.7 -12M518.3 269.6l-5.2 -4.1M751.8 459.6l1.4 -7.5M792.8 414.2l5 -7.3M771.4 450.5l2.5 -8.8M786.7 429.3l2.8 -5.3M732 438.7l3.1 -8.4M791.2 427.2l4.7 -9M773.7 408.9l5.1 -6.2M790.9 428.2l4.8 -8.6M743.1 404.7l5.4 -6.6M759.7 459.2l1.7 -8M779.7 433.4l3.2 -6.6M771.5 457.7l2.1 -10.2M784.8 432.4l2.7 -5.2M790.8 431.4l3.6 -7.4M785 433.8l4.1 -8.1M751.1 454.6l2.3 -9.3M779.5 443.8l2.2 -6.3M731.5 458.3l0.9 -5M771.5 455.5l2 -8.6M776 460l1.7 -8.8"/><path stroke="#e16462" d="M590.8 473.5l-1.1 -11.6M551.4 425.7l-6.4 -13.6M610.3 433l-2.7 -7.6M527.5 453.4l-3 -12.3M517 452.1l-2.7 -10.2M545.6 463.2l-1.7 -9.8M546.6 460l-0.9 -4.9M549.7 442.4l-3.7 -11M519.5 430l-5.5 -11.6M616.3 474.8l-1 -10M523.2 415.8l-6.1 -8.8M606.1 439.6l-2.4 -7.1M605.7 431.2l-2.8 -7.1M540.4 489.5l-0.7 -6.4M565.5 439l-5 -14.3M532.4 459.1l-2.9 -13.5M529.4 455.7l-2.4 -9.6M528.1 449.1l-2.4 -8.7M587.6 482.4l-0.7 -7.7M590.8 464.3l-1.3 -9M604.2 474.9l-0.5 -5.4M554.8 474l-0.5 -5.5M529.3 476.9l-1 -9.3M554.6 472.9l-0.7 -7M550.9 438.8l-4.9 -12.9M537.2 435.6l-3 -7.3M542.6 428.5l-6.4 -13.6M550.1 469.7l-1.2 -10.1M591.6 432.2l-4.2 -10.5M570.1 422.5l-6.4 -12.8M599.4 471.2l-1 -10.2M544.7 483l-1 -9.5M545.4 438.2l-2.9 -6.8M521.8 454.4l-3.5 -13.4M525.7 420.9l-5.4 -9.1M570.4 458.7l-1.2 -5.7M530.7 436.5l-3.1 -6.9M526.7 442.6l-2.2 -6.5M520.2 416.1l-8.8 -12.6M520.6 420.7l-4.4 -7.7M535 481.2l-1.1 -11M582.9 442l-3.9 -11.5"/><path stroke="#d14e72" d="M518.5 378.8l-13.2 -11.2M556.8 366.6l-14.2 -12.4M543.3 337.3l-9.6 -7.3M551.7 288.1l-11.8 -9.7M538.5 366.8l-9.2 -7.9M577.8 354.9l-9.4 -8.4M592.6 329.6l-8.3 -8M530.1 299.8l-5 -4.8M581.4 376.5l-6.5 -5.7M594.1 375.2l-13.4 -13.3M532.2 371.3l-12.9 -10.3M586.7 400.8l-10.1 -15M520.3 334.7l-11.1 -8.8M526.4 397.7l-8.5 -9.4M591.6 329.1l-9.5 -9.4M539.4 333.1l-12 -11.4M520.5 372.9l-14.7 -10.9M573 374.1l-7.7 -6.8M511.8 337.5l-13.8 -11.7M581.3 327.3l-12.8 -14.2M601.4 347.9l-13.7 -12.4M542.1 340.9l-10.2 -8M583.2 364.7l-11.3 -9.9M607.9 347.3l-8.9 -9.5M611.5 368l-7 -7.3M530.2 356.2l-12.4 -11.7M548.3 334l-10.8 -9.6M528.7 354.4l-12.8 -10.2M516.6 334.3l-13.9 -12.7M547.6 329.2l-8.5 -6.7M525.9 351.9l-8.5 -6.8M542 337.5l-10.3 -8.3M571.9 377.7l-13.8 -13M543.7 365l-11.3 -10.2M523.2 322.7l-6.4 -5.5M527.3 336.5l-9.4 -7.9M784.1 453.7l2.6 -9.9M776.3 476.1l0.5 -5.4M764.7 476.6l0.8 -8.4M775.9 452.8l1.3 -5.2M784.6 441l2.8 -7.7M765.7 481.9l0.4 -4.2M728.3 475.1l0.7 -8.7M768.7 460.8l0.9 -5M761.4 447.8l2.1 -6.7M735.4 472.9l0.6 -8M769.5 467.6l1.1 -9.2M788 438.5l3.7 -8.8M777.8 438.7l4.1 -11M781.8 441.5l2.4 -6.1M775 445.5l3.1 -8.9M777.9 454.4l1.6 -7M780.2 456.2l2.3 -10.5M786.7 432.3l4.7 -10.4"/><path stroke="#be3884" d="M533.9 245.8l-10.7 -8.8M536.3 252.5l-7.3 -5.7M607.6 222.2l-6.8 -7M551.1 206.4l-2.8 -2.3M543 230l-6.6 -5.3M514.7 292.8l-7.8 -7.2M546.9 243l-3.7 -3.2M530.1 258.6l-4.9 -4.4M533 279.1l-8.1 -7.9M520.9 221.2l-8 -5.6M556.7 276.6l-7.3 -5.9M612.5 265.5l-8 -9.6M544.7 243.2l-8.6 -8.1M522.3 281l-12.8 -10M583 215.2l-3.3 -3.7M595.8 241.1l-6.7 -6.1M549.3 214.2l-5.5 -5.1M530.3 258.3l-9.6 -8.4M523.1 258l-5.2 -3.9M550.9 264.7l-10.7 -8.9M541.2 256.8l-10.6 -8.7M535.3 215.7l-3.5 -2.7M547.8 203.6l-6.2 -5.8M600.9 265.6l-9.7 -10.3M545.1 279.3l-8.5 -7.4M528.4 203.5l-6.9 -5.2M581.7 254.7l-10 -8.9M530.7 221.7l-5.2 -4.4M551.1 228.5l-6.3 -5.8M540.6 218.3l-7.7 -7.3M596.7 257.3l-5 -5.1M581.8 235.5l-6.9 -5.9M548.7 268.3l-8.5 -6.6M541.1 222.6l-5 -4.3M613.4 248l-8 -7.5M791.1 375.7l8.9 -10.2M789.7 417.9l3.3 -5.1M785 416.1l6.6 -10.6M742.4 363l8.6 -9.7M787 422.1l4.8 -7.8M782.4 387.3l5.5 -5.5M769.8 424.3l6 -11.6M788.2 373.8l9.5 -9.2M791.6 389.2l10.9 -9.8M784.4 367.3l6 -6.1M794.9 407.6l7.9 -9.3M793.7 406.1l8.4 -9.4M791.2 389.5l6.8 -6.1M791.1 384.4l8.7 -7.7M778.1 391.3l7.2 -8.6M779.8 375.7l10.1 -10.7M789.8 407.1l5.7 -6.4"/><path stroke="#e56c5c" d="M541.1 482.5l-0.5 -4.6M569.6 483.1l-0.7 -6.9M607.2 477.3l-0.8 -8.4M563.1 449.4l-3.1 -10.5M523.4 483.7l-0.8 -7.4M551.1 451.7l-3.1 -11.7M520.4 446.1l-2.1 -5.9M520 460.1l-1.1 -4.9M538 468.7l-0.7 -5.4M532.9 461.9l-1.7 -8.4M541.1 476.5l-1.2 -10.8M546.9 484.8l-0.5 -5.1M544.3 480.8l-0.5 -4.5M553.7 480.4l-1 -10.4M544.7 479.4l-0.9 -8.4M559.4 472.2l-0.8 -7.7M535 482.4l-0.5 -4.7M615.6 481.7l-0.8 -8.1M582.3 486.2l-0.8 -8.2M559.1 461.5l-1.5 -7.5"/><path stroke="#c5407e" d="M581.6 322.5l-11.8 -11.2M541.9 285.7l-10.1 -9.8M548.8 278.1l-4.6 -4.1M546.3 308l-8.5 -7.1M539.6 251.2l-4.2 -3.7M520.2 301.8l-10.5 -8.7M584.6 289.7l-7.4 -7.1M552.8 244.2l-4.6 -3.7M526.9 309l-12.6 -9.9M540.6 276.4l-9.4 -9.3M598.8 233.7l-6.3 -5.9M539.8 276l-7.8 -6.9M574.1 252.4l-9.9 -9.2M555.7 232.5l-7.6 -6.7M538.9 251l-8.6 -6.5M529.6 299.4l-6.9 -6.5M525.1 278.5l-9.9 -7.9M516.2 318.8l-7.8 -5.8M584.4 318l-8 -7.9M536.8 285l-10.5 -9.4M578.8 253.7l-9.6 -8.8M544.4 237.8l-4.3 -4M534.9 282.7l-9.5 -7.4M534.3 257.3l-11.2 -9.2M611.2 234l-6.5 -7.6M525.9 291.9l-11.4 -9.8M534 241.7l-5.7 -4.9M516.9 271.1l-5.4 -4.1M592.5 297.3l-6.4 -6.9M545.4 277.8l-7 -6.7M608.4 206.5l-5.6 -6.7M531.1 215.5l-6.7 -5.3M524.9 281l-6 -4.7M579 302.6l-4.8 -5.2M577.4 242.4l-4.2 -3.7M521.7 211.7l-4.3 -3.8M547.9 238.1l-5 -4.3M550.2 234.1l-4.3 -3.3M621.3 219.2l-5.2 -5.5M790.1 389.2l7 -7.2M746.1 393.9l10 -10.8M784.6 441.6l1.9 -5.1M762.9 411.5l6.5 -9.1M785 406.1l7 -9.5M747 391.9l8 -8.3M788.7 425.7l3.6 -6.4M759.2 404.8l5.5 -6.9M777.8 420.1l6 -8.7M789.6 422.2l6.9 -10.7M742.2 412.5l8.2 -11.1"/><path stroke="#b8318a" d="M553.6 203.7l-6.1 -5.5M612.3 218.5l-7.3 -7.7M546.2 216.1l-3.3 -3M606.2 220l-4.5 -5M542 237.9l-4.6 -4M617.1 211.4l-4.1 -4.5M585.7 200.3l-4.2 -3.9M602.8 203.3l-3.9 -3.9M549.9 213.9l-6 -4.8M602.1 218.1l-3.5 -4.1M575.6 226.7l-3.7 -3.9M549.8 243.1l-9.1 -8M524.1 238.8l-7.2 -6.7M520.5 254.2l-5.4 -5M618.3 205.4l-6.7 -7.1M561.5 206.7l-5.4 -4.4M724.6 372l9.9 -11.1M792.9 352l6.2 -7.1M787.3 382l4.7 -4.7M797.9 363.1l8.5 -8.2M796.8 348.1l9.6 -9.5M755.2 388.2l4.9 -5.7M719.5 347.3l5.2 -6.5M794.8 351.5l8 -9.3M784.7 354.7l8.5 -8.5M798.9 336.3l8.5 -8.3M780.5 356.3l6.7 -7.2M725.5 352.5l6.2 -7.5M798.1 343.2l7.8 -8.2M780.1 383.6l10 -10.3M769.8 362.8l8 -9.7M779.6 389.8l4.4 -5.2M728.5 345.7l7.9 -8.9M783.9 380.9l8.7 -8M726.5 380.3l7 -7.6M792.5 371.7l6.4 -6.3M792.1 343.4l4.8 -4.5M784.9 348.8l6.6 -6.1"/><path stroke="#ea7456" d="M553.7 483.2l-0.8 -7.4"/><path stroke="#b12a90" d="M543.7 204.7l-2.7 -2.5M797.9 337.3l10.1 -8.9M731.4 353.5l9.3 -11.3M798 354.6l8 -7.7M798 335l10.9 -9.7M787.8 332.6l5.1 -5.2M772.4 315.5l4.3 -4.8M784 362.4l7.8 -8.8M785.9 333.7l7.2 -7.6M799.6 332.8l6.7 -6.1M752.3 331.4l8.1 -8.5M783.9 324.4l7.6 -8.8M798.5 371.3l6.8 -6M794.1 343.2l6.6 -7.5"/><path stroke="#a82395" d="M789.9 302.8l4.3 -4.4M797.6 348.1l9.2 -8.3M742.6 295.9l5.4 -6.1M795 306.5l8 -7.4M737.2 294.5l5.3 -5.5M751.9 311.4l4.9 -4.9M754.2 308.7l6.6 -8.3M764.3 333.8l8.7 -8.6M775 290.6l3.5 -3.6M782.9 334.4l6.4 -7.2M784 336.3l4.4 -4.9M774 307.6l5.4 -5M768.2 350.4l8.1 -9.7M765.8 329.7l7.5 -8.9M721.4 331.6l8 -9.4M783.5 290.7l4.5 -4.1"/><path stroke="#a01c9a" d="M784.8 298.7l6.5 -7.4M762.9 273l4.7 -6M778.7 290.3l5.2 -5.9M780.9 313.1l9 -8.6M792.8 304.9l4 -3.8M782 289l6.8 -6.5M788.2 319.4l8.1 -7.2M790.5 262l2.7 -3.1"/><path stroke="#8f0da4" d="M757.6 267.5l6.3 -6.5M792.2 267.8l5.8 -6.1M757.3 271.2l3.7 -4.5M780.8 273.4l6.2 -6.6M784.7 264.4l3.4 -3.2M763.1 280.2l6.8 -8.2M791.4 277.8l7.8 -6.8"/><path stroke="#98149f" d="M752.5 262.2l5.7 -6.3M779.1 255.7l3.9 -4.6M781.8 278.7l4.4 -5.1M769.8 265.7l3.5 -4.3M781.2 294.9l8.2 -7.5M740.1 256.4l3.6 -4M785.6 257.4l3.8 -3.6"/></g>
<g fill="none" stroke-width="1" shape-rendering="crispEdges"><path stroke="#41049d" d="M774.5 169v-4M779.5 175v-4M711.5 179v-5M575.5 167v-2M541.5 193v-4M690.5 159v-2M566 205.5h4M617.5 170v-5M708.5 161v-4M740.5 196v-5M750.5 195v-3M634.5 163v-3M560.5 217v-3M543.5 198v-3M612.5 164v-4M764.5 176v-3M621.5 169v-4M620 167.5h3M695.5 145v-2M741.5 182v-4M740 180.5h3M620.5 174v-2M551.5 205v-5M552.5 180v-5M601.5 180v-3M637.5 182v-5M586.5 150v-3M767.5 191v-2M615.5 197v-5M711.5 206v-3M766.5 180v-3M588.5 198v-5M656.5 198v-5M601.5 181v-2M619.5 166v-3M741.5 164v-4M665.5 170v-3M588.5 204v-5M714.5 174v-5M594.5 220v-7M593 218.5h3M764.5 184v-3M697.5 187v-5M767.5 164v-3M777.5 207v-4M570.5 177v-2M586.5 196v-2M618.5 203v-2M727.5 168v-2M673.5 190v-5M677.5 211v-5M695.5 160v-2M611.5 153v-4M637.5 185v-3M557.5 194v-4M790.5 175v-4M709.5 178v-4M632.5 168v-3M718.5 179v-2M738.5 207v-4M596.5 177v-4M613.5 200v-2M574.5 200v-3M532.5 194v-2M572.5 165v-4M586.5 185v-3M523.5 214v-2M772.5 200v-4M533.5 205v-4M599.5 153v-2M536.5 207v-3M653.5 200v-3M761.5 167v-3M536.5 181v-3M707.5 146v-3M566 199.5h4M711.5 202v-5M748.5 177v-3M661.5 178v-2M593.5 174v-5M561 207.5h4M623.5 218v-4M709 167.5h4M569.5 166v-4M775.5 212v-2M551.5 215v-2M602 216.5h4M744.5 146v-4M533.5 215v-3M750.5 147v-4M546.5 162v-4M679.5 171v-4M641.5 170v-3M589.5 212v-3M759.5 203v-4M772.5 169v-5M710.5 158v-4M628.5 180v-4M626.5 275v-6M602.5 279v-6M698.5 229v4M696 231.5h5M744.5 260v-3M760.5 245v4M758 247.5h5M675.5 227v-3M606.5 309v-3M716.5 303v-5M794.5 308v4M792 310.5h5M712.5 324v-6M714.5 233v4M712 235.5h5M597.5 239v-5M699.5 282v-3M751.5 271v-3M647.5 216v-2M672.5 266v-3M633.5 263v-6M695.5 224v-4M600.5 223v-5M592.5 290v4M590 292.5h5M704.5 324v-4M787.5 219v-2M676.5 304v-3M592.5 262v-5M723.5 291v-2M715.5 266v-6M613.5 255v4M611 257.5h5M703.5 282v4M701 284.5h5M577.5 293v-6M630.5 257v4M628 259.5h5M732.5 249v-4M762.5 316v-3M577.5 325v-6M634.5 247v-5M737.5 258v-5M782.5 277v-4M685.5 283v-4M589.5 270v-2M713.5 303v-3M786.5 306v-4M621.5 223v-4M747.5 269v-5M796.5 267v4M794 269.5h5M703.5 275v4M701 277.5h5M598.5 264v-5M786.5 223v-6M766.5 239v-2M672.5 217v-4M759.5 254v-4M737.5 230v-2M782.5 253v-6M653.5 244v-6M737.5 258v-5M617.5 310v4M615 312.5h5M791.5 228v-3M764.5 256v-6M790.5 323v-4M642.5 255v-4M757.5 173v5M755 175.5h5"/><path stroke="#49039f" d="M679.5 206v-4M562.5 181v-5M789.5 213v-5M749.5 190v-5M568.5 221v-4M670.5 219v-5M669 217.5h3M724.5 206v-2M617.5 222v-6M547.5 213v-3M636.5 195v-2M584 221.5h4M610.5 215v-4M565 215.5h4M774.5 209v-3M657.5 189v-5M669.5 204v-5M678.5 202v-4M775 193.5h4M655.5 208v-3M542.5 214v-4M546.5 196v-3M717.5 214v-6M657.5 180v-4M596.5 190v-3M600.5 219v-5M669.5 205v-6M668 203.5h3M577.5 208v-3M772.5 209v-5M642.5 197v-3M764.5 181v-2M524.5 211v-5M602.5 204v-5M528.5 215v-4M652.5 214v-2M587.5 208v-6M588.5 180v-4M576.5 206v-6M581.5 210v-6M580 208.5h3M631.5 194v-2M628.5 200v-6M627 198.5h3M553.5 196v-4M651.5 186v-5M750.5 204v-3M581.5 204v-5M786.5 208v-5M766.5 211v-4M741.5 202v-5M543.5 199v-5M749.5 198v-4M729.5 193v-3M736.5 206v-3M614.5 212v-2M707.5 205v-5M706 203.5h3M781.5 201v-2M712.5 206v-4M616.5 186v-4M584.5 205v-3M574.5 182v-5M643.5 212v-5M614.5 212v-3M623.5 189v-2M750.5 240v-6M778.5 256v-2M759.5 220v-2M795.5 265v-2M723.5 227v4M721 229.5h5M696.5 236v-3M648.5 233v-2M638.5 273v-6M783.5 280v4M781 282.5h5M767.5 233v-5M693.5 304v-5M676.5 302v-6M765.5 235v-6M711.5 239v-6M656.5 242v-5M695.5 269v4M693 271.5h5M687.5 273v4M685 275.5h5M768.5 222v4M766 224.5h5M694.5 253v-5M645.5 279v-2M673.5 224v-6M729.5 224v-5M701.5 246v-3M770.5 279v-6M714.5 222v-3M756.5 305v-3M739.5 257v-5M773.5 278v-3M784.5 290v-2M719.5 303v4M717 305.5h5M743.5 221v-3M724.5 228v-3M784.5 283v-3M761.5 220v-2M598.5 255v-4M764.5 300v-6M649.5 273v-4M651.5 220v-5M654.5 286v-6M744.5 228v-2M740.5 216v-2M681.5 252v4M679 254.5h5M776.5 239v-5M689.5 233v-3M689.5 297v-5M777.5 243v-4M703.5 246v-4M727.5 318v-5M737.5 227v-3M630.5 278v4M628 280.5h5M762.5 260v-3M753.5 221v-2M715.5 241v-5M715.5 255v-2M719.5 303v-4M617.5 305v4M615 307.5h5M703.5 251v-2M662.5 259v-6M662.5 293v4M660 295.5h5M628.5 229v-4M608.5 255v-3M681.5 282v-2M589.5 266v-3M782.5 224v-4M596.5 264v-6M679.5 234v4M677 236.5h5M623.5 215v4M621 217.5h5M705.5 219v-5M716.5 317v-5M721.5 249v-4M603.5 269v-2M744.5 310v-5M681.5 233v-6M749.5 273v-3M791.5 267v-4M768.5 216v-6M616.5 244v-6M651.5 221v-2M760.5 244v-6M749.5 226v-3M746.5 311v-5M770.5 288v-3M630.5 285v-5M726.5 262v-3M658.5 263v4M656 265.5h5M785.5 249v-2M625.5 259v-4M765.5 267v-4M637.5 285v-2M656.5 246v-2M763.5 249v4M761 251.5h5M738.5 251v-3M609.5 319v-3M710.5 309v-2M687.5 227v-5"/><path stroke="#370599" d="M783.5 145v-3M589.5 138v-3M755.5 141v-2M785.5 175v-4M736.5 164v-4M746.5 180v-2M602.5 169v-4M544.5 164v-5M642.5 155v-5M783.5 174v-5M731.5 153v-2M613.5 132v-4M747.5 144v-2M686.5 155v-4M703.5 172v-2M592.5 125v-2M626.5 127v-2M709.5 151v-4M769.5 143v-3M750.5 141v-3M623.5 134v-2M630.5 150v-3M643.5 164v-4M713.5 154v-3M786.5 176v-3M684.5 112v-2M729.5 140v-5M586.5 134v-3M584.5 150v-2M707.5 143v-3M624.5 150v-3M750.5 192v-6M628.5 162v-5M745.5 174v-4M631.5 182v-3M780.5 159v-3M775.5 158v-3M703.5 134v-3M648.5 159v-5M761.5 150v-3M535.5 176v-5M627.5 160v-3M631 121.5h6M786.5 181v-2M560.5 169v-2M570.5 116v-4M767.5 121v-4M592.5 157v-2M677.5 190v-3M604.5 123v-3M568.5 184v-3M753.5 138v-2M748.5 161v-4M577.5 129v-2M648.5 166v-5M663.5 165v-3M711.5 147v-4M706.5 128v-4M785.5 163v-2M666.5 146v-4M603.5 167v-5M556.5 185v-3M756.5 124v-4M600.5 153v-2M667.5 147v-2M583.5 125v-2M664.5 158v-5M537.5 191v-5M737.5 159v-5M640.5 145v-3M695.5 158v-4M601.5 176v-2M604.5 148v-2M631.5 150v-3M607.5 165v-4M750.5 126v-2M682.5 129v-3M637.5 179v-2M676.5 151v-4M659.5 134v-4M712.5 159v-4M613.5 145v-5M752.5 124v-2M764.5 170v-3M766.5 152v-4M758.5 136v-3M559.5 123v-4M608.5 152v-3M600.5 125v-2M606.5 196v-2M585.5 149v-3M700.5 147v-4M662.5 130v-4M788 185.5h3M683.5 143v-2M562.5 135v-2M525.5 192v-4M593.5 190v-3M627.5 143v-3M615.5 174v-4M744.5 173v-4M611.5 124v-3M672.5 162v-2M601.5 160v-4M651.5 109v-2M606.5 141v-2M552.5 174v-4M655.5 161v-4M646.5 111v-4M771.5 128v-4M681.5 165v-2M675.5 136v-2M560.5 139v-2M577.5 123v-2M690.5 168v-3M732.5 129v-4M731 127.5h3M610.5 143v-3M555.5 159v-3M701.5 160v-5M775.5 139v-4M547.5 124v-4M747.5 137v-5M686 133.5h5M750.5 152v-4"/><path stroke="#220690" d="M560.5 119v-1M702.5 96v-4M656.5 111v-4M578.5 123v-2M735.5 95v-2M606.5 102v-2M690.5 124v-4M689 122.5h3M752.5 112v-3M605.5 120v-4M709.5 118v-4M683.5 111v-3M623.5 97v-2M648.5 127v-2M627.5 114v-3M633.5 113v-3M632 111.5h3M702.5 90v-2M680.5 88v-3M704.5 100v-3M562.5 120v-4M693.5 88v-4M709.5 86v-4M592.5 94v-3M670.5 127v-4M549.5 91v-3M686.5 85v-3M650.5 85v-2M625.5 106v-2M753.5 111v-2M761.5 86v-2M697.5 112v-6M696 110.5h3M611.5 111v-3M597.5 99v-4M760.5 90v-4M657.5 103v-4M748.5 86v-4M678.5 87v-2M615.5 113v-2M617.5 103v-4M636.5 86v-3M703.5 86v-3M671.5 108v-3M678.5 91v-3M573.5 121v-3M686.5 90v-1M571.5 112v-4M570 110.5h3M647.5 90v-3M745.5 99v-2M724.5 84v-3M595.5 102v-2M639 101.5h5M669.5 96v-4M574.5 123v-2M735.5 93v-2M559.5 109v-2M643.5 103v-3M734.5 100v-3M590.5 91v-1M552.5 87v-4M662.5 90v-3M563.5 88v-4M574.5 89v-5M573 87.5h3M702.5 96v-3M608.5 109v-4M590.5 91v-3M674 110.5h6M601.5 93v-4M773.5 118v-2M656.5 93v-2M620.5 104v-2M673.5 124v-3M750.5 93v-3"/><path stroke="#2c0694" d="M652.5 101v-4M617.5 127v-4M616.5 138v-3M608 137.5h4M583.5 151v-3M698.5 100v-2M646.5 125v-3M624.5 102v-2M672.5 132v-3M610.5 147v-4M635.5 141v-3M749.5 139v-3M676.5 95v-3M614.5 100v-3M559.5 99v-2M561.5 96v-3M571.5 145v-3M655 127.5h6M790.5 90v-2M766.5 98v-3M727.5 147v-4M770.5 96v-1M784.5 106v-3M695.5 86v-2M690.5 152v-4M717.5 144v-3M691.5 117v-2M618.5 141v-2M773.5 108v-3M552.5 92v-2M560.5 143v-3M758.5 148v-3M595.5 133v-4M630.5 124v-4M567.5 149v-2M582.5 119v-4M713.5 105v-4M665.5 149v-3M705.5 118v-4M691.5 104v-3M562.5 104v-2M610.5 109v-2M592.5 107v-4M717.5 158v-2M657.5 89v-3M750.5 105v-4M704.5 97v-3M607.5 120v-2M740.5 96v-3M656.5 157v-4M559.5 92v-4M680.5 103v-3M641.5 131v-3M621.5 127v-4M628.5 137v-4M634.5 98v-2M588.5 135v-3M627.5 105v-3M668.5 118v-6M667 116.5h3M681.5 106v-3M588.5 157v-4M621.5 134v-5M685.5 159v-4M770.5 130v-3M769 128.5h3M623.5 130v-4M722.5 104v-3M602.5 116v-4M576.5 112v-3M691.5 147v-2M580.5 111v-2M583.5 100v-3M616.5 116v-4M716.5 91v-3M757.5 115v-4M688.5 91v-2M556.5 143v-2M557.5 119v-1M719.5 103v-3M727.5 125v-4M775.5 125v-1M561.5 104v-2M683.5 128v-4M750.5 109v-1M612.5 93v-2M593.5 120v-2M598.5 117v-1M710.5 112v-3M679.5 115v-3M660.5 108v-2M648.5 157v-4M630.5 137v-2M594.5 95v-3M544.5 138v-2M555.5 145v-2M642.5 134v-4M661.5 85v-2M778 113.5h5M648.5 149v-2M664.5 157v-4M723.5 133v-4M784.5 107v-3M610.5 116v-4M709.5 135v-3M572.5 140v-2M671.5 108v-4M662.5 104v-3M754.5 102v-3M642.5 123v-4M559.5 162v-4M646.5 120v-1M621.5 100v-2M575.5 129v-4M606.5 101v-3M743.5 90v-4M732.5 124v-2M625.5 117v-4M712.5 121v-2M614.5 127v-3M699.5 115v-4M623.5 126v-3M752.5 125v-2M670.5 94v-3M591.5 124v-1M545.5 113v-3M562.5 133v-4M782.5 95v-2M607.5 107v-4M712.5 127v-3M708.5 141v-4M747.5 115v-3M626.5 127v-2M712.5 98v-2M781.5 146v-4"/><path stroke="#5102a1" d="M688.5 218v-5M573.5 216v-3M613.5 215v-2M674.5 220v-2M527.5 209v-4M621.5 207v-4M648.5 263v-4M776.5 326v-4M713.5 226v-3M746.5 263v-2M714.5 290v-4M677.5 286v-2M766.5 229v-3M756.5 228v-4M715.5 214v4M713 216.5h5M694.5 271v-2M740.5 265v-2M640.5 223v4M638 225.5h5M757.5 319v4M755 321.5h5M767.5 238v4M765 240.5h5M758.5 217v4M756 219.5h5M706.5 323v-6M760.5 258v-4M662.5 218v-4M742.5 232v4M740 234.5h5M667.5 275v-2M706.5 231v4M704 233.5h5M731.5 253v4M729 255.5h5M790.5 242v-6M667.5 251v-6M579.5 234v-2M598.5 280v-5M764.5 244v-5M757.5 269v-6M595.5 226v-2M741.5 217v-3M783.5 271v4M781 273.5h5M605.5 272v4M603 274.5h5M743.5 253v4M741 255.5h5M785.5 260v4M783 262.5h5M696.5 223v-6M585.5 279v-6M788.5 233v-6M620.5 243v-6M712.5 232v-6M740.5 219v-2M577.5 238v-2M685.5 221v-2M610.5 221v-4M657.5 231v-6M640.5 221v-4M710.5 217v4M708 219.5h5M774.5 265v-3M715.5 240v-4M573.5 307v-6M659.5 300v-2M765.5 250v-4M633.5 224v-4M747.5 227v4M745 229.5h5M725.5 218v-4M780.5 236v-4M736.5 316v-5M713.5 234v4M711 236.5h5M795.5 328v-6M612.5 247v-6M590.5 294v4M588 296.5h5M698.5 295v4M696 297.5h5M660.5 294v-5M626.5 260v-4M690.5 231v-2M673.5 287v-5M776.5 232v-5M675.5 216v-2M792.5 271v4M790 273.5h5M711.5 313v-6M594.5 226v-2M648.5 220v-4M699.5 304v-4M635.5 261v-2M675.5 289v-2M626.5 260v-3"/><path stroke="#17078b" d="M559.5 85v-4M676.5 93v-3M689.5 95v-2M762.5 98v-4M608.5 84v-3M548.5 94v-1M621.5 95v-2M785.5 84v-4M629.5 93v-4M786.5 89v-2"/><path stroke="#5a02a4" d="M773.5 256v-3M613.5 280v-6M741.5 319v4M739 321.5h5M754.5 214v4M752 216.5h5M751.5 256v-3M697.5 311v4M695 313.5h5M679.5 295v-6M778.5 259v-4M580.5 295v-3M624.5 247v-2M718.5 256v-4M609.5 294v-2M779.5 228v-5M712.5 311v-2M748.5 318v4M746 320.5h5M584.5 250v-3M705.5 278v4M703 280.5h5M577.5 265v-5M675.5 262v-3M586.5 293v-5M715.5 219v-2M783.5 217v4M781 219.5h5M774.5 273v-3M786.5 265v-4M705.5 266v-3M663.5 283v-4M690.5 227v-4M691.5 281v4M689 283.5h5M766.5 265v-4M791.5 259v-4M739.5 255v-6M587.5 258v-6M697.5 249v-2M606.5 241v-2M796.5 262v-3M745.5 275v-5M674.5 245v-3M704.5 269v-5M696.5 236v-4M667.5 292v-4M734.5 279v-5M664.5 226v-6M787.5 284v-2M602.5 218v-4M607.5 276v-6M593.5 219v-3M755.5 222v-4M699.5 232v-3M615.5 281v-3M694.5 221v-6M724.5 245v4M722 247.5h5M675.5 219v4M673 221.5h5M638.5 291v4M636 293.5h5M619.5 306v4M617 308.5h5M593.5 269v-5M726.5 319v-5M793.5 252v-5M778.5 313v-4M662.5 254v-2M602.5 232v-4M608.5 216v-5M619.5 273v-5M706.5 232v-6M629.5 300v-5M644.5 255v4M642 257.5h5M592.5 249v-5M792.5 220v-6M577.5 271v-2M612.5 285v-4M735.5 314v-6M628.5 259v-2M717.5 220v-2M691.5 219v-6M773.5 256v-6M741.5 279v4M739 281.5h5M607.5 227v-2M756.5 326v-2M638.5 254v-5M697.5 231v-4M729.5 255v-6M603.5 216v-5M784.5 285v-6M772.5 267v-6M611.5 297v4M609 299.5h5M705.5 231v-4M784.5 305v-6M740.5 226v-3M779.5 289v-5M721.5 291v-2M606.5 217v-4M764.5 285v-3M701.5 225v-5M715.5 291v-4M711.5 234v-3M759.5 241v-3M719.5 265v-2M749.5 217v-6M749.5 295v-6M712.5 267v-3M578.5 220v-4M771.5 319v-4M618.5 266v-6"/><path stroke="#6001a5" d="M615.5 259v-6M590.5 277v-6M647.5 263v-4M640.5 182v-7M655.5 213v-7M570.5 264v-3M650.5 229v-4M639.5 274v-6M775.5 240v-5M579.5 212v-5M590.5 228v-6M716.5 262v-7M764.5 307v-3M646.5 239v-4M581.5 287v-3M531.5 224v-6M737.5 257v-3M783.5 315v-5M756.5 233v-3M792.5 239v-4M764.5 273v-4M691.5 264v-3M699.5 237v-7M544.5 253v-3M552.5 232v-6M705.5 220v-4M727.5 241v-6M694.5 211v-4M790.5 230v-6M597.5 232v-7M735.5 288v-3M584.5 301v-7M779.5 290v-4M759.5 284v-6M609.5 231v-3M559.5 192v-7M724.5 228v-7M797.5 307v-3M625.5 224v-7M526.5 302v-5M666.5 241v-5M793.5 228v-6M594.5 281v-6M760.5 241v-7M725.5 252v-6M554.5 255v-5M752.5 320v-7M740.5 303v-4M754.5 182v-4M565.5 247v-4M598.5 198v-5M626.5 195v-4M732.5 212v-6M730.5 286v-4M544.5 330v-3M759.5 282v-4M627.5 226v-5M650.5 248v-3M776.5 270v-7M793.5 268v-4M707.5 241v-3M566.5 273v-7M537.5 218v-3M549.5 249v-4M563.5 217v-6M546.5 283v-5M755.5 239v-5M640.5 230v-6M734.5 252v-4M724 179.5h6M777.5 243v-6M525.5 205v-6M537.5 264v-6M779.5 217v-4M673.5 249v-5M543.5 278v-7M756.5 215v-5M636.5 294v-7M763.5 255v-7M600.5 297v-3M561.5 254v-6M529.5 212v-6M772.5 239v-7M520.5 223v-3M671.5 240v-6M599.5 239v-7M678.5 222v-7M607.5 207v-3M603.5 270v-7M562.5 224v-5M683.5 242v-4M588.5 277v-5M784.5 209v-4M659.5 290v-5M773.5 312v-7M630.5 268v-5M575.5 305v-6M654.5 194v-4M717.5 278v-7M727.5 242v-6M691.5 237v-7M630.5 227v-7M785.5 263v-4M716.5 246v-6M589.5 271v-3M714.5 323v-7M764.5 264v-4M728.5 296v-7M673.5 263v-7M752.5 213v-4M672.5 294v-6M710.5 274v-4M737.5 248v-7M750.5 231v-5M727.5 291v-6M634.5 202v-6M735.5 265v-6M545.5 249v-6M711.5 289v-5M782.5 276v-4M551.5 243v-3M698.5 295v-7M582.5 301v-6M595.5 244v-5M743.5 311v-7M537.5 336v-4M579.5 250v-5M689.5 211v-7M708.5 236v-4M730.5 315v-6M593.5 245v-5M646.5 239v-5M768.5 244v-7M728.5 228v-6M591.5 208v-6M766.5 303v-6M762.5 262v-6M724.5 241v-3M601 199.5h8M582.5 304v-3M621.5 248v-4M679.5 230v-3M588.5 261v-4M559.5 237v-7M695.5 267v-4M792.5 233v-4M660.5 239v-7M589.5 269v-5M609.5 255v-3M760.5 213v-4M637.5 264v-3M717.5 229v-3M664.5 259v-3M729.5 291v-3M613.5 216v-6M776.5 258v-7M612.5 250v-5M658.5 271v-5M571.5 314v-6M740.5 223v-6M645.5 288v-5M577.5 244v-3M644.5 271v-7M746.5 223v-5M680.5 261v-3M742.5 265v-3M623.5 270v-6M671.5 249v-5M581.5 205v-5M665.5 243v-7M773.5 270v-4M658.5 274v-6M609.5 278v-4M697.5 214v-4M556.5 206v-7M555.5 309v-4M558.5 298v-5M748.5 266v-6M738.5 230v-3M558.5 263v-3M529.5 258v-6M581.5 285v-5M652.5 240v-4M705.5 261v-7M688.5 276v-4M668.5 236v-5M766.5 213v-7M787.5 194v-7M745 200.5h6M660.5 261v-3M698.5 259v-5M716.5 227v-5M663.5 215v-7"/><path stroke="#7303a7" d="M653 218.5h8M712 243.5h8M701 226.5h4M630 216.5h8M521 247.5h7M545 250.5h8M750 276.5h7M630 306.5h6M665 233.5h7M715 339.5h6M679 247.5h8M665 206.5h8M638 293.5h7M693 261.5h7M709 219.5h6M776 268.5h6M657 245.5h7M775 303.5h5M686 230.5h5M725 224.5h8M520 251.5h7M644 303.5h7M721 324.5h7M693 309.5h8M786 244.5h8M750 256.5h7M686 281.5h5M717 233.5h7M754 223.5h8M714 290.5h7M612 291.5h5M731 205.5h4M597 294.5h5M612 286.5h6M760 229.5h8M678 277.5h8M618 275.5h7M749 243.5h5M709 263.5h4M706 313.5h5M694 233.5h5M615 313.5h4M701 278.5h5M633 304.5h6M736 185.5h8M712 218.5h4M782 303.5h7M543 299.5h4M729 270.5h8M608 290.5h7M600 255.5h7M715 237.5h4M619 244.5h7M793 328.5h4M743 294.5h4M550 218.5h7M764 319.5h8M780 216.5h4M668 266.5h8M774 249.5h6M785 260.5h6M625 263.5h5M631 203.5h6M620 235.5h6M562 301.5h7M600 334.5h5M693 205.5h5M738 261.5h6M607 284.5h4M731 217.5h7M537 264.5h6M764 215.5h6M774 277.5h6M573 301.5h5M594 234.5h5M561 223.5h8M689 212.5h6M752 282.5h5M628 229.5h5M543 294.5h8M677 256.5h5M791 293.5h8M526 243.5h7M619 239.5h4M709 261.5h8M654 213.5h8M793 278.5h7M587 268.5h4M668 255.5h5M765 328.5h5M613 229.5h8M782 261.5h4M682 211.5h7M517 282.5h8M638 240.5h8M546 232.5h7M717 293.5h4"/><path stroke="#5602a2" d="M605.5 212v3M604 213.5h3M615.5 293v3M614 294.5h3M567.5 218v5M565 220.5h5M578.5 257v3M577 258.5h3M696.5 222v3M695 223.5h3M742.5 252v5M740 254.5h5M521.5 288v3M520 289.5h3M542.5 285v5M540 287.5h5M781.5 321v5M779 323.5h5M585.5 238v3M584 239.5h3M602.5 227v3M601 228.5h3M722.5 239v3M721 240.5h3M778.5 289v5M776 291.5h5M641.5 222v5M639 224.5h5M754.5 258v5M752 260.5h5M667.5 198v3M666 199.5h3M791.5 286v5M789 288.5h5M535.5 194v5M533 196.5h5M627.5 199v5M625 201.5h5M632.5 293v5M630 295.5h5M561.5 189v5M559 191.5h5M522.5 251v5M520 253.5h5M748.5 280v5M746 282.5h5M610.5 276v3M609 277.5h3M568.5 175v-6M742.5 232v5M740 234.5h5M665.5 273v5M663 275.5h5M640.5 217v3M639 218.5h3M624 192.5h6M609.5 238v5M607 240.5h5M655.5 243v5M653 245.5h5M676.5 259v3M675 260.5h3M622.5 255v3M621 256.5h3M700.5 259v5M698 261.5h5M697.5 289v5M695 291.5h5M751.5 234v5M749 236.5h5M577.5 239v5M575 241.5h5M715.5 268v5M713 270.5h5M563.5 233v5M561 235.5h5M759.5 246v3M758 247.5h3M525.5 204v5M523 206.5h5M717.5 265v5M715 267.5h5M521.5 212v5M519 214.5h5M677.5 253v3M676 254.5h3M689.5 262v5M687 264.5h5M747.5 271v3M746 272.5h3M683.5 232v3M682 233.5h3M543.5 250v3M542 251.5h3M712.5 257v5M710 259.5h5M639.5 255v3M638 256.5h3M605.5 313v5M603 315.5h5M519.5 315v3M518 316.5h3M665.5 250v3M664 251.5h3M636.5 231v3M635 232.5h3M605.5 187v-5M633.5 217v5M631 219.5h5M583.5 203v5M581 205.5h5M550.5 296v5M548 298.5h5M688.5 253v3M687 254.5h3M710.5 190v-6M592.5 274v5M590 276.5h5M763.5 193v-4M756.5 244v5M754 246.5h5M635.5 238v3M634 239.5h3M550.5 222v5M548 224.5h5M609.5 254v5M607 256.5h5M622.5 250v3M621 251.5h3M590.5 283v5M588 285.5h5M653.5 232v3M652 233.5h3M673.5 172v3M672 173.5h3M687.5 281v3M686 282.5h3M594.5 314v3M593 315.5h3M738.5 199v-6M620.5 214v3M619 215.5h3M587.5 245v5M585 247.5h5M594.5 263v3M593 264.5h3M666.5 238v5M664 240.5h5M661.5 215v5M659 217.5h5M685.5 235v3M684 236.5h3M769.5 241v3M768 242.5h3M775.5 307v5M773 309.5h5M582.5 192v3M581 193.5h3M759.5 295v3M758 296.5h3M596.5 247v3M595 248.5h3M629.5 181v3M628 182.5h3M519.5 283v3M518 284.5h3M715.5 280v3M714 281.5h3M589.5 297v5M587 299.5h5M537.5 210v5M535 212.5h5M713.5 260v3M712 261.5h3M766.5 300v3M765 301.5h3M546.5 268v5M544 270.5h5M743.5 246v3M742 247.5h3M564.5 322v3M563 323.5h3M729.5 237v5M727 239.5h5M719.5 231v3M718 232.5h3M724.5 210v-5M587.5 286v3M586 287.5h3M758.5 260v5M756 262.5h5M588.5 242v3M587 243.5h3M591.5 218v3M590 219.5h3M643.5 252v3M642 253.5h3M527.5 280v5M525 282.5h5M734.5 280v5M732 282.5h5M759.5 260v3M758 261.5h3M758.5 344v3M757 345.5h3M627.5 286v3M626 287.5h3M687.5 208v5M685 210.5h5M529.5 319v5M527 321.5h5M564.5 245v3M563 246.5h3M705.5 266v5M703 268.5h5M735.5 257v3M734 258.5h3M579.5 242v5M577 244.5h5M730.5 200v3M729 201.5h3M647.5 260v5M645 262.5h5"/><path stroke="#6a00a8" d="M637 214.5h4M749 184.5h5M673 213.5h4M533 188.5h5M564 198.5h8"/><path stroke="#4b03a0" d="M538.5 188v5M536 190.5h5M646 179.5h8M554.5 185v3M553 186.5h3"/></g>
<g fill-opacity=".92" shape-rendering="crispEdges"><path fill="#5602a2" d="M620.1 194.3L619.8 192.1L620.9 192L617.9 189.2L615.7 192.7L616.8 192.6L617.1 194.7ZM757.1 189.2L757.8 187.6L758.7 188L757.9 184.6L754.7 186.1L755.6 186.5L754.8 188.1ZM755 190.6L755.9 189.1L756.7 189.6L756.3 186.2L753 187.3L753.8 187.8L752.9 189.3ZM684.8 179.3L685.2 177.7L686.2 177.9L684.6 174.7L681.7 176.8L682.7 177.1L682.3 178.7ZM581 186.5L580.1 184.6L581.2 184.1L577.4 182.2L576.2 186.4L577.3 185.9L578.2 187.8ZM585.6 195.7L584.8 194L585.7 193.6L582.5 191.9L581.4 195.4L582.4 195L583.1 196.8ZM536.4 178.1L535.3 176.9L536 176.3L532.8 175.8L532.9 179.1L533.6 178.5L534.6 179.7Z"/><path fill="#6001a5" d="M628.1 197.5L627.7 195.3L628.8 195.1L625.6 192.3L623.5 196L624.6 195.8L625 198.1ZM523.8 208.3L522.5 206.9L523.2 206.3L519.9 205.8L520.1 209.2L520.7 208.6L522.1 210ZM739.3 186.6L740.1 184.9L741.1 185.4L740.2 181.7L736.8 183.3L737.7 183.7L736.9 185.4ZM740.1 197.7L740.9 195.8L741.8 196.3L740.8 192.7L737.4 194.4L738.4 194.8L737.6 196.6ZM587.7 207L587.1 205.1L588 204.8L585.1 202.8L583.7 206.1L584.6 205.8L585.2 207.7ZM704.9 184.2L705.1 182L706.3 182.2L703.9 178.4L700.7 181.5L701.9 181.7L701.7 183.8ZM631.2 194.2L630.8 192.3L631.9 192L628.9 189.6L627.1 193L628.1 192.8L628.5 194.8ZM564.5 199L563.7 197.5L564.5 197.1L561.5 195.7L560.8 198.9L561.6 198.5L562.4 200.1ZM681.3 191.4L681.3 189.4L682.4 189.5L680.1 186.5L677.6 189.4L678.6 189.4L678.6 191.3ZM643.3 197.3L643 195.4L644 195.3L641.3 192.9L639.4 196L640.4 195.9L640.7 197.7ZM779.4 183.1L780.3 181.7L781.1 182.2L780.6 178.7L777.2 179.8L778.1 180.3L777.2 181.8ZM669.6 177.5L669.6 176L670.5 176L668.5 173.6L666.4 176L667.3 176L667.3 177.5ZM780.5 177.7L781.4 176.6L782.1 177.2L782.1 174.1L779.1 174.6L779.7 175.1L778.8 176.3ZM787.9 176.1L788.9 175L789.6 175.6L789.7 172.4L786.5 172.8L787.2 173.4L786.2 174.5Z"/><path fill="#6a00a8" d="M603.9 214.6L603.2 212.4L604.2 212L600.9 209.9L599.5 213.6L600.5 213.2L601.2 215.4ZM626.3 186.1L625.8 184.3L626.9 184L623.7 181.7L622.1 185.3L623.1 185L623.6 186.9ZM717.4 181.8L718.1 180.1L719 180.5L717.9 176.9L714.5 178.8L715.5 179.1L714.9 180.8ZM708.7 178.4L709 176.8L709.9 177L708.2 174.1L705.6 176.3L706.6 176.4L706.3 178ZM527.6 196L526.5 194.2L527.4 193.6L523.7 192.4L523.2 196.3L524.1 195.7L525.2 197.4ZM647.2 211.3L646.9 209.2L647.9 209.1L645.3 206.6L643.3 209.6L644.3 209.5L644.6 211.6ZM645.2 212.1L645 210.3L645.9 210.2L643.7 208L641.9 210.6L642.8 210.5L642.9 212.3ZM780.4 184.5L781.6 182.7L782.6 183.4L782.3 179L778 180.2L779 180.9L777.8 182.7ZM679.9 195.3L680.3 193.5L681.2 193.7L679.6 190.6L676.9 192.8L677.8 193L677.5 194.8ZM683.8 186.8L683.9 184.7L685.1 184.8L682.5 181.3L679.6 184.5L680.8 184.5L680.7 186.6ZM536.6 199.3L535.5 197.8L536.2 197.2L532.9 196.5L532.8 199.9L533.6 199.3L534.7 200.8ZM767.6 206.8L768.9 205.1L769.8 205.7L769.7 201.8L765.8 202.6L766.7 203.3L765.3 205.1ZM690 215.3L690.6 212.7L691.8 213L689.9 209L686.3 211.6L687.5 211.9L686.9 214.5ZM692.4 220L693.1 217.6L694.2 217.9L692.7 214.1L689.2 216.3L690.3 216.7L689.5 219.1ZM656 200.1L656.2 198.1L657.3 198.2L655.2 195L652.5 197.7L653.5 197.8L653.3 199.8ZM663.6 209.5L663.5 207.4L664.5 207.3L661.9 204.5L659.7 207.6L660.8 207.5L660.9 209.7ZM718.5 214.8L719.2 212.6L720.3 212.9L718.8 209.2L715.5 211.3L716.5 211.7L715.8 213.9ZM659.1 194L658.8 191.7L660.1 191.6L656.8 188.4L654.4 192.2L655.6 192.1L655.9 194.4ZM527.6 200L526.4 198.8L527 198.2L524 197.8L524.2 200.9L524.8 200.3L526 201.5ZM545.4 178.7L544.4 177.4L545.1 176.9L541.9 176.2L541.9 179.5L542.6 178.9L543.5 180.1ZM709.8 196.7L710.3 195.2L711.1 195.5L710.1 192.7L707.6 194.2L708.3 194.5L707.8 195.9ZM554 202.1L552.9 199.9L553.9 199.4L550 197.7L549.1 201.9L550.1 201.4L551.2 203.5ZM579.4 178.1L578.6 176.9L579.4 176.5L576.5 175.4L576 178.4L576.7 178L577.5 179.2ZM618.4 214.2L617.8 212.1L618.8 211.9L615.7 209.8L614.3 213.2L615.3 212.9L615.9 215ZM692 184.3L692.3 182.5L693.3 182.7L691.5 179.6L688.8 181.9L689.8 182.1L689.5 183.8ZM676 189.3L675.9 187.3L677 187.3L674.4 184.3L672 187.4L673.1 187.4L673.2 189.4Z"/><path fill="#7303a7" d="M688.8 212.6L689.5 210.3L690.6 210.6L689 206.7L685.5 209.1L686.6 209.4L685.9 211.8ZM760.8 204.3L761.9 202.1L763 202.6L762 198.4L758 200.2L759.1 200.7L758 202.9ZM558.8 230.5L557.5 228.2L558.5 227.7L554.7 226.3L554.1 230.3L555 229.7L556.4 231.9ZM549.9 191.7L548.7 189.9L549.6 189.3L545.7 188.2L545.4 192.2L546.3 191.6L547.5 193.3ZM619.2 201.2L619 199.6L619.8 199.5L617.6 197.5L616.1 200L616.9 199.9L617.1 201.5ZM674.9 226L675 223.6L676.1 223.6L673.7 220.5L671.1 223.4L672.2 223.4L672.1 225.9ZM782.2 192.7L783.2 191L784.1 191.6L783.6 187.9L780.1 189.1L780.9 189.6L779.9 191.3ZM555.7 207.4L555 205.7L555.8 205.4L553 203.9L552.1 207L552.9 206.6L553.6 208.3ZM598.2 207.7L597.8 205.9L598.7 205.8L596.2 203.7L594.6 206.5L595.5 206.4L595.9 208.2ZM665.2 219.4L665.2 217.4L666.2 217.4L664 214.8L661.9 217.4L662.8 217.4L662.8 219.4ZM642.6 228.6L642.5 226.6L643.3 226.6L641.2 224.3L639.4 226.8L640.3 226.8L640.4 228.7ZM598.8 214.6L598 212.1L599.2 211.8L595.6 209.5L594 213.5L595.1 213.1L595.9 215.5ZM572.7 206.8L571.9 204.5L573 204.2L569.4 201.9L567.9 205.9L569 205.5L569.8 207.8ZM636.9 188.6L636.6 186.7L637.7 186.5L634.9 183.8L632.7 187.1L633.8 187L634 188.9ZM597.3 214.7L596.5 212.8L597.4 212.4L594.2 210.8L593.3 214.3L594.2 213.9L595 215.8ZM535 230.4L533.8 229L534.4 228.5L531.5 228.1L531.6 231L532.2 230.4L533.5 231.8ZM530.2 206.6L529 205.1L529.7 204.5L526.4 203.9L526.4 207.2L527.1 206.7L528.3 208.1ZM783.7 197.9L784.8 196.6L785.5 197.1L785.5 193.9L782.3 194.6L783 195.1L781.9 196.5ZM530.9 200.2L529.6 198.8L530.4 198.1L526.8 197.5L527 201.1L527.7 200.5L529 201.9ZM790.3 228.1L791.6 226.8L792.2 227.3L792.4 224.4L789.5 224.7L790.1 225.3L788.8 226.6ZM683.9 212.6L684.5 210.4L685.6 210.7L684 207.1L680.8 209.3L681.8 209.6L681.2 211.8ZM593 223.3L592.5 220.8L593.6 220.6L590.5 218.1L588.6 221.6L589.7 221.4L590.2 223.8ZM706.9 191.8L707.1 190.1L708 190.2L706.2 187.4L703.8 189.7L704.7 189.8L704.5 191.5ZM713.5 222.4L714.6 220.1L715.6 220.6L714.5 216.6L710.9 218.4L711.9 218.9L710.8 221.2ZM735.1 226.3L736.3 223.9L737.4 224.4L736.5 220.3L732.6 221.9L733.6 222.5L732.4 224.8ZM772.1 226.8L773.4 224.3L774.5 224.8L773.6 220.5L769.5 222.2L770.6 222.8L769.3 225.3ZM597.4 195.3L596.6 193.1L597.7 192.7L593.9 190.4L592.4 194.6L593.6 194.2L594.4 196.3ZM726.1 190.7L726.8 188.9L727.8 189.3L726.7 185.6L723.3 187.4L724.3 187.8L723.6 189.6ZM743.1 202.9L744.4 200.8L745.4 201.5L744.9 197L740.7 198.4L741.7 199.1L740.4 201.1ZM763.5 208L764.7 206.4L765.5 207L765.3 203.4L761.8 204.2L762.6 204.8L761.4 206.5Z"/><path fill="#7c06a6" d="M562.5 238.3L561 235.7L562.1 235.1L557.9 233.6L557.3 238L558.3 237.3L559.8 239.9ZM720.9 230.5L721.6 227.9L722.8 228.2L721 224.2L717.5 226.7L718.6 227L717.9 229.7ZM733.5 190.2L734.2 188.5L735.2 188.8L733.9 185.2L730.7 187.2L731.7 187.5L731 189.3ZM642 214.2L641.7 212.2L642.6 212.1L640.1 209.8L638.3 212.8L639.3 212.6L639.6 214.6ZM749.4 216L750.3 214.5L751.1 214.9L750.6 211.9L747.8 212.9L748.5 213.3L747.6 214.8ZM684.4 208L684.6 206L685.5 206L683.5 203.1L681.1 205.7L682 205.8L681.9 207.8ZM749.4 207.5L750.3 206L751 206.4L750.5 203.5L747.7 204.6L748.4 205L747.5 206.4ZM772 239.3L773.3 237.2L774.1 237.8L773.7 234.2L770.3 235.3L771.1 235.8L769.8 237.9ZM684.1 237.8L684.6 235.1L685.8 235.3L683.7 231.6L680.5 234.4L681.7 234.6L681.2 237.3ZM681.3 234.3L681.3 232.1L682.2 232.1L680.1 229.5L678 232.1L678.9 232.1L678.9 234.3ZM644.4 200.1L644.3 197.7L645.5 197.6L642.5 194.3L639.8 197.9L641.1 197.9L641.2 200.3ZM588 224.3L587.4 222.4L588.2 222.1L585.5 220.5L584.4 223.5L585.3 223.2L585.9 225ZM663.7 225.3L663.9 223.4L664.7 223.5L663 221L660.8 223.2L661.7 223.2L661.5 225.2ZM605.2 229.7L604.8 227.5L605.7 227.3L603 225L601.3 228.1L602.2 227.9L602.7 230.2ZM709.6 217.5L709.9 215.4L710.8 215.5L709 212.6L706.5 214.9L707.4 215.1L707.1 217.1ZM608.9 229.6L608.4 227.6L609.3 227.4L606.8 225.4L605.3 228.3L606.2 228.1L606.6 230.1ZM775.7 200.1L777.1 198.5L777.9 199.2L778.1 195.4L774.2 195.9L775 196.7L773.6 198.2ZM731.8 219L732.6 217.4L733.3 217.8L732.7 215L730 216.1L730.8 216.5L729.9 218ZM716.6 230.8L717.4 229L718.1 229.3L717.3 226.4L714.6 227.8L715.4 228.1L714.6 229.9ZM543.7 218.4L542.2 216.5L543 215.8L539.1 215.1L539.2 219L540 218.4L541.5 220.2ZM666.6 233.4L666.6 231.4L667.4 231.4L665.4 229L663.5 231.4L664.3 231.4L664.4 233.5ZM677.2 215.6L677.8 213.1L679 213.4L677.1 209.5L673.7 212.1L674.8 212.4L674.3 214.9ZM668.5 210.2L668.6 208.2L669.6 208.3L667.6 205.6L665.3 208L666.2 208.1L666.1 210ZM780.8 242.6L782.4 240.8L783.2 241.5L783.4 237.8L779.7 238.3L780.5 239L778.8 240.9ZM602.2 240.8L601.4 238.9L602.1 238.6L599.5 237.2L598.7 240.1L599.4 239.8L600.2 241.6ZM629.4 236.4L629.2 234.4L630.1 234.3L628 232.1L626.2 234.6L627.1 234.5L627.2 236.6ZM565.3 224.2L564.1 222.2L565 221.7L561.5 220.4L560.9 224.1L561.8 223.6L563 225.6ZM730.1 226.1L731.2 223.7L732.2 224.2L731.1 220.2L727.4 222.1L728.4 222.6L727.4 224.9ZM544.8 196.6L544 195.1L544.8 194.7L541.9 193.6L541.4 196.6L542.1 196.2L542.9 197.6ZM689 221.8L689.7 219.6L690.6 219.9L689.2 216.5L686.1 218.6L687.1 218.9L686.5 221ZM766.1 209.4L767.2 207.3L768.2 207.8L767.3 203.7L763.5 205.5L764.5 206L763.5 208.1ZM742.8 212.8L743.5 210.7L744.5 211L743.2 207.4L739.9 209.5L740.9 209.8L740.2 211.9ZM691.8 214.4L692.6 212.1L693.6 212.4L692.1 208.6L688.7 210.8L689.8 211.2L689 213.5ZM567.4 224.3L566.6 222.2L567.5 221.8L564.4 220.1L563.2 223.5L564.2 223.1L565 225.2ZM590.1 245.8L588.8 243.1L589.8 242.6L585.9 240.8L584.9 245.1L586 244.5L587.4 247.3ZM727.6 223.9L728.8 221.4L729.9 222L728.9 217.7L724.9 219.5L726 220L724.8 222.5ZM555.1 211.4L554.2 209.9L554.9 209.4L552 208.4L551.5 211.4L552.3 211L553.2 212.6ZM760.5 226.2L761.8 224.6L762.5 225.1L762.4 221.9L759.2 222.6L759.9 223.1L758.7 224.7ZM533.5 212.8L532.2 211.1L533.1 210.5L529.5 209.6L529.3 213.2L530.1 212.6L531.3 214.4ZM755.5 207.9L756.8 205.8L757.9 206.4L757.2 202L753 203.5L754.1 204.1L752.8 206.3ZM676.5 217.1L676.5 215L677.5 215L675.2 212.4L673.1 215.1L674 215.1L674.1 217.1ZM715.5 228.5L716.2 226.4L717.1 226.7L716 223.4L713 225.2L713.9 225.5L713.1 227.6ZM764.9 202.6L765.8 200.7L766.8 201.1L765.9 197.4L762.4 199.1L763.3 199.5L762.5 201.4ZM661.7 203.8L661.9 202.2L662.7 202.3L661.2 199.8L659 201.7L659.8 201.9L659.6 203.5ZM641.9 212.1L641.4 209.6L642.6 209.4L639.3 206.6L637.2 210.4L638.4 210.2L638.8 212.7Z"/><path fill="#860aa5" d="M658.4 242.7L658.3 240.1L659.4 240.1L657 237.1L654.6 240.1L655.6 240.1L655.6 242.7ZM604.4 238.5L603.6 236.1L604.6 235.8L601.4 233.8L600.1 237.3L601.1 237L601.9 239.3ZM619.2 228.5L618.9 226.5L619.7 226.4L617.4 224.3L615.8 227L616.7 226.9L617 228.8ZM584 247.6L583.4 245.1L584.3 244.9L581.4 242.7L579.9 246L580.8 245.8L581.5 248.3ZM675.3 219.7L675.6 217L676.8 217.2L674.6 213.5L671.3 216.4L672.5 216.6L672.2 219.2ZM680.7 212L681.2 209.5L682.4 209.7L680.2 205.8L676.9 208.7L678.1 208.9L677.6 211.4ZM701.7 238.2L702 235.8L703 235.9L701.2 232.8L698.5 235.2L699.5 235.4L699.1 237.8ZM627.4 239.1L627.1 237.2L627.9 237.1L625.8 235.1L624.3 237.5L625 237.4L625.3 239.4ZM709.5 233.7L709.9 231.4L710.9 231.6L709.2 228.5L706.4 230.8L707.4 230.9L707 233.2ZM600.3 250.9L599.6 248.5L600.5 248.3L597.7 246.3L596.4 249.5L597.3 249.2L597.9 251.5ZM723.8 220.1L724.4 218.4L725.2 218.7L724.3 215.8L721.7 217.3L722.4 217.6L721.8 219.3ZM540.3 244.9L539.1 243.3L539.8 242.8L536.9 242L536.7 245L537.4 244.5L538.6 246.1ZM722.6 249.4L723.1 247.1L724 247.3L722.4 244.2L719.7 246.3L720.7 246.5L720.2 248.9ZM569.6 215.7L568.6 213.7L569.5 213.2L566 211.7L565.2 215.4L566.2 214.9L567.2 216.9ZM574.2 241.7L573 239L574.1 238.5L570.3 236.5L569 240.7L570.1 240.2L571.3 243ZM551.7 251.8L550.2 249.2L551.2 248.6L547.3 247.2L546.7 251.3L547.7 250.7L549.2 253.3ZM526.3 233.7L525 231.6L525.9 231.1L522.3 229.9L521.8 233.6L522.7 233.1L524 235.2ZM772.2 240L773.5 238.3L774.2 238.9L774.1 235.7L770.9 236.4L771.6 236.9L770.3 238.6ZM784.4 230.1L785.5 228.5L786.2 229L785.9 226L783.1 226.9L783.7 227.3L782.7 228.9ZM738.5 228.5L739.7 226.2L740.7 226.7L739.9 222.8L736.2 224.4L737.2 224.9L736 227.1ZM648.3 251.6L647.7 248.5L648.9 248.3L645.5 245.5L643.5 249.3L644.6 249.1L645.2 252.2ZM657.9 248.4L657.6 245.3L658.8 245.2L655.7 242L653.2 245.8L654.4 245.6L654.8 248.8ZM766.6 245.7L767.6 243.4L768.5 243.8L767.5 240.4L764.4 242.1L765.3 242.4L764.3 244.7ZM619.1 248L618.4 245.8L619.2 245.5L616.4 243.8L615.3 246.9L616.1 246.6L616.9 248.8ZM679 248.4L678.9 246.2L679.8 246.2L677.8 244L675.9 246.3L676.8 246.3L676.8 248.4ZM702.2 254.4L703 251.3L704.1 251.6L702.3 247.7L698.8 250.3L700 250.6L699.2 253.6ZM742.2 220.2L743.3 217.7L744.4 218.2L743.2 213.9L739.2 216L740.3 216.4L739.2 218.9ZM540.7 237.6L539.5 235.9L540.3 235.4L537.2 234.5L536.9 237.6L537.6 237.1L538.8 238.9ZM759.8 206.2L761.2 204.2L762.2 204.9L761.9 200.4L757.6 201.6L758.6 202.3L757.1 204.3ZM660.6 243.6L660.3 240.6L661.5 240.4L658.3 237.4L655.9 241.1L657.1 240.9L657.5 243.9ZM539.2 244.7L537.9 242.9L538.6 242.4L535.4 241.6L535.3 244.9L536 244.3L537.4 246.1ZM662.8 217.6L663.1 215.2L664.2 215.3L661.9 211.9L659 214.8L660.1 214.9L659.9 217.4ZM777.2 227.1L778.3 225.1L779.2 225.6L778.6 222L775.2 223.3L776 223.8L774.9 225.8ZM650.4 245.3L650.3 242.7L651.3 242.6L648.8 239.8L646.5 242.8L647.6 242.8L647.7 245.4ZM756.7 238.8L758 236.9L758.8 237.4L758.4 234L755.1 235L755.9 235.5L754.7 237.5ZM666.4 214L666.2 211.9L667.2 211.8L664.7 209.3L662.7 212.2L663.7 212.1L663.9 214.2ZM767.4 251.2L768.8 248.8L769.8 249.4L769.1 245.5L765.5 246.9L766.4 247.4L765 249.8ZM727.4 241.4L728 239.5L728.8 239.7L727.7 236.9L725.1 238.5L725.9 238.8L725.3 240.7ZM752.7 222.5L753.7 220.3L754.7 220.8L753.8 216.9L750.2 218.5L751.2 219L750.1 221.2ZM670.6 256.1L671.1 253.5L672 253.7L670.3 250.6L667.6 252.9L668.5 253L668 255.6ZM590.2 246.7L589.4 244.1L590.4 243.8L587.2 241.7L585.7 245.2L586.7 244.9L587.5 247.5ZM517.9 247.9L515.8 245.6L516.8 244.7L512.3 244.1L512.5 248.5L513.5 247.7L515.6 250.1ZM716.8 208.3L717.2 206.6L718.1 206.8L716.8 204L714.3 205.8L715.1 206L714.6 207.7ZM523.8 206.6L522.7 205.3L523.3 204.7L520.3 204.2L520.4 207.2L521 206.7L522.1 208ZM778 253L779.4 251L780.2 251.5L780 248.1L776.7 249L777.5 249.6L776.1 251.6ZM780.6 221.2L782.1 218.9L783.2 219.6L782.7 215.1L778.4 216.5L779.5 217.1L777.9 219.4ZM766.5 217.5L767.3 215.8L768.1 216.1L767.3 213.1L764.5 214.5L765.3 214.8L764.5 216.5Z"/><path fill="#8f0da4" d="M741.4 264.4L742.8 262.2L743.6 262.7L743 259.3L739.8 260.5L740.7 260.9L739.3 263.2ZM759.3 246.2L760.5 243.6L761.5 244.1L760.6 240.1L756.8 241.8L757.8 242.3L756.6 244.9ZM537.7 230.1L536.3 227.9L537.2 227.3L533.5 226.1L533 230L533.9 229.4L535.3 231.6ZM738.5 213L739.3 211L740.3 211.4L739.1 207.8L735.9 209.6L736.9 210L736.1 212ZM608.3 269.9L607.7 266.8L608.8 266.6L605.8 263.9L603.8 267.4L604.9 267.2L605.4 270.3ZM695.1 232.2L695.3 229.8L696.4 229.9L694.2 226.7L691.5 229.4L692.6 229.5L692.3 232ZM796.2 263.8L797.9 262.1L798.5 262.7L798.8 259.5L795.6 259.9L796.3 260.5L794.6 262.2ZM631.2 233L631 231L631.9 230.9L629.7 228.7L628 231.2L628.8 231.1L629 233.1ZM531 239.9L529.3 237.4L530.4 236.7L526.2 235.4L525.7 239.7L526.7 239.1L528.3 241.6ZM696.5 233.9L696.9 231.3L698 231.4L695.9 228L693 230.7L694.1 230.9L693.7 233.5ZM705 226.4L705.7 224.6L706.4 224.9L705.5 222.2L702.9 223.6L703.7 223.9L703.1 225.6ZM684.2 228.5L684.2 226.6L685 226.6L683.1 224.3L681.2 226.6L682 226.6L682 228.5ZM680.3 213.9L680.3 211.7L681.3 211.7L679 208.8L676.6 211.6L677.7 211.6L677.6 213.8ZM561.6 254.2L560.1 251.9L561 251.3L557.3 250.2L556.9 254L557.8 253.4L559.3 255.7ZM642 254.4L641.8 251.8L642.8 251.7L640.3 249.1L638.2 252.1L639.2 252L639.4 254.6ZM742.5 242L743.4 239.7L744.4 240.1L743.3 236.6L740.1 238.3L741 238.7L740 241ZM644.7 249.3L644.6 247L645.4 246.9L643.2 244.6L641.4 247.2L642.2 247.2L642.4 249.5ZM740.4 262.3L741.2 259.9L742.1 260.2L741 257L738 258.8L738.9 259.1L738 261.5ZM673.2 246.4L673.6 243.8L674.7 244L672.8 240.7L670 243.2L671 243.4L670.6 246ZM629.1 224.4L628.8 222.4L629.7 222.2L627.1 220L625.5 222.9L626.4 222.8L626.8 224.8ZM626.3 215.6L626.1 213.5L627.1 213.4L624.6 210.9L622.6 213.9L623.5 213.8L623.8 215.9ZM551.6 223.1L550.6 221.6L551.3 221.1L548.5 220.3L548.2 223.2L548.8 222.8L549.9 224.3ZM709.5 266.2L710.2 263.8L711 264.1L709.7 261.2L707.1 263L708 263.2L707.3 265.6ZM601.6 263.9L600.8 261.7L601.6 261.4L599 259.9L598 262.7L598.8 262.4L599.6 264.6ZM610.2 231.5L609.9 229.3L610.8 229.2L608.3 226.9L606.5 229.8L607.5 229.6L607.8 231.8ZM650 250.9L649.6 248.7L650.5 248.5L648.1 246.4L646.5 249.2L647.4 249L647.8 251.3ZM604.8 261.2L603.9 259.1L604.7 258.8L602 257.3L601.1 260.2L601.9 259.9L602.7 262ZM736.8 247.4L737.7 245.3L738.5 245.7L737.5 242.5L734.6 244.1L735.5 244.4L734.6 246.6ZM661.7 273.9L661.6 270.5L662.8 270.4L659.9 267.1L657.2 270.6L658.4 270.6L658.6 274ZM660.1 228.7L660.4 225.9L661.6 226L659.1 222.3L656 225.5L657.2 225.6L657 228.4ZM750.6 248L751.7 245.9L752.5 246.3L751.8 243L748.7 244.4L749.5 244.8L748.5 246.9ZM731.5 252.1L732.9 249.3L734 249.8L732.9 245.6L729 247.4L730.1 248L728.8 250.7ZM747.6 241.5L748.5 239.4L749.4 239.8L748.5 236.5L745.5 238L746.3 238.4L745.4 240.5ZM557 246.3L556.2 244.4L556.9 244.1L554.3 242.8L553.5 245.6L554.3 245.3L555.1 247.1ZM745.9 254.9L747 252.3L748 252.7L746.9 248.9L743.4 250.7L744.4 251.2L743.3 253.8ZM765.1 264L766.4 261.3L767.4 261.8L766.5 257.9L762.9 259.5L763.9 260L762.5 262.7ZM690.8 218.5L690.9 215.9L692.1 216L689.5 212.5L686.6 215.7L687.8 215.8L687.7 218.4ZM605.3 214L605 211.9L605.9 211.8L603.3 209.4L601.5 212.5L602.4 212.3L602.8 214.4ZM601.7 230.3L601.1 228.2L602.1 227.9L599.3 225.9L597.8 229.1L598.8 228.8L599.3 230.9ZM607.8 252.7L606.8 249.8L607.9 249.4L604.3 247.2L602.8 251.2L603.9 250.8L604.9 253.7ZM615.3 246.9L614.3 244.2L615.4 243.8L611.8 241.6L610.3 245.6L611.4 245.2L612.4 248ZM593.2 259.7L592.3 257.1L593.2 256.8L590.1 254.9L588.8 258.3L589.8 258L590.7 260.6Z"/><path fill="#98149f" d="M603.3 239.8L602.7 237.5L603.6 237.2L600.8 235.1L599.3 238.3L600.2 238.1L600.8 240.4ZM563.8 258.9L562.5 257.1L563.2 256.6L560.2 255.8L560 258.8L560.7 258.3L562 260.2ZM796.6 242.7L798.1 240.8L798.9 241.4L798.9 237.7L795.3 238.5L796.1 239.1L794.6 241.1ZM579.5 239.4L578.3 237.1L579.2 236.6L575.8 235.2L575 238.9L575.9 238.4L577.1 240.7ZM547.9 259.7L546.7 257.4L547.6 257L544.5 255.6L543.7 259L544.6 258.5L545.7 260.8ZM600.8 238.2L599.9 235.6L600.9 235.3L597.6 233.2L596.2 236.9L597.2 236.6L598.1 239.1ZM667.5 278.5L667.8 276.1L668.6 276.2L667.1 273.7L664.9 275.7L665.7 275.8L665.4 278.2ZM748.7 264.3L750.1 261.5L751.1 262.1L750.4 258L746.6 259.6L747.6 260.1L746.1 262.8ZM729.1 236L730 234.2L730.8 234.6L730.1 231.7L727.3 232.9L728.1 233.3L727.2 235.1ZM690.2 286.9L690.3 283.7L691.4 283.7L689.1 280.7L686.5 283.5L687.6 283.6L687.4 286.7ZM618 276L617.3 273.7L618.1 273.4L615.5 271.8L614.4 274.6L615.2 274.4L616 276.7ZM517.8 264.5L515.8 262.4L516.5 261.7L512.7 261.3L513 265.1L513.8 264.3L515.8 266.4ZM774.9 257L776 255L776.8 255.4L776.1 252.3L773.2 253.5L774 253.9L772.9 256ZM672.3 262.6L672.6 260.4L673.4 260.5L671.9 258L669.7 259.9L670.5 260.1L670.2 262.3ZM594 257.2L592.8 254.2L594 253.8L590.2 251.6L588.7 255.7L589.9 255.3L591 258.3ZM777.2 240.2L778.7 238L779.6 238.7L779.3 234.7L775.5 235.8L776.4 236.4L774.8 238.6ZM784.3 263.2L786.2 261L787 261.7L787.2 257.7L783.3 258.4L784.1 259.1L782.2 261.4ZM765.6 241.8L766.7 239.6L767.6 240.1L766.8 236.6L763.5 238.1L764.4 238.5L763.3 240.7ZM731.2 235.5L732.2 233.4L733.1 233.8L732.3 230.3L729.1 231.8L729.9 232.2L728.9 234.3ZM572.3 260.2L571.3 257.5L572.3 257.1L569 255.2L567.7 258.8L568.7 258.4L569.7 261.1ZM553.9 269.8L552.4 267.5L553.2 267L549.9 265.9L549.5 269.4L550.3 268.9L551.8 271.2ZM581 265.8L580.1 263.4L581 263.1L578.2 261.3L577 264.4L577.9 264.1L578.7 266.6ZM518.3 269.3L516.8 267.5L517.4 266.9L514.4 266.4L514.5 269.4L515.1 268.9L516.7 270.7ZM643.3 264.9L642.8 261.5L644 261.4L640.8 258.4L638.5 262.2L639.7 262L640.2 265.3ZM756 273.3L757.2 271L758 271.5L757.5 268.2L754.4 269.4L755.2 269.8L753.9 272.1ZM788.3 244.3L790 242.1L790.9 242.8L790.7 238.8L786.9 239.7L787.7 240.4L786.1 242.5ZM709.8 241.5L710.5 238.7L711.6 239L709.9 235.2L706.5 237.6L707.6 237.9L706.9 240.7ZM736.9 248.8L738.4 246.1L739.4 246.7L738.6 242.4L734.5 244.1L735.6 244.6L734.1 247.3ZM736.8 261.7L737.6 258.7L738.7 259L737 255.4L733.8 257.7L734.8 258L734 260.9ZM647.5 264.5L647.6 261.8L648.6 261.8L646.4 259L644.1 261.6L645.1 261.7L645 264.4ZM607.6 262.8L607.1 260.2L608.1 260L605.4 257.7L603.6 260.8L604.6 260.6L605.1 263.3ZM725.2 239.3L725.8 237.1L726.7 237.4L725.4 234.3L722.7 236.2L723.5 236.4L722.9 238.6ZM558 277.3L556.1 274.4L557 273.8L553 272.6L552.6 276.8L553.6 276.1L555.5 278.9ZM557.2 254.3L555.8 251.4L556.9 250.9L553 249.1L551.9 253.3L553 252.8L554.4 255.7ZM583.7 279.4L582.9 276.1L584 275.8L580.6 273.4L578.9 277.2L580 276.9L580.9 280.2ZM620.8 236.7L620.7 233.8L621.9 233.7L619 230.5L616.4 234L617.6 234L617.7 236.8ZM738.4 243.5L739.3 241.7L740.1 242.1L739.5 239.2L736.7 240.3L737.4 240.7L736.5 242.5ZM623.6 256.2L623.5 254.1L624.3 254L622.3 251.8L620.5 254.2L621.3 254.2L621.4 256.3ZM666.7 236.7L666.8 234.8L667.7 234.8L665.9 232.4L663.9 234.6L664.7 234.6L664.6 236.6ZM598.4 252.7L597.6 250.1L598.5 249.8L595.4 247.8L594 251.3L595 250.9L595.8 253.5ZM607.4 252.7L607.1 250.5L607.9 250.4L605.7 248.3L604.1 250.9L604.9 250.8L605.2 253ZM612.1 269.7L611.6 266.5L612.7 266.3L609.6 263.6L607.6 267.2L608.7 267L609.2 270.2ZM624.1 238.9L623.8 236.7L624.7 236.6L622.4 234.3L620.6 237.1L621.5 237L621.7 239.2ZM694.8 258.3L695.4 255.6L696.4 255.8L694.8 252.5L691.8 254.7L692.8 255L692.1 257.7ZM756.1 261.2L757.8 258.5L758.8 259.2L758.4 254.9L754.3 256.2L755.3 256.9L753.5 259.6ZM627.2 270.8L626.6 268.4L627.4 268.2L624.9 266.3L623.6 269.2L624.4 268.9L625 271.3ZM595.9 252.3L594.9 249.8L595.9 249.5L592.6 247.6L591.5 251.2L592.4 250.8L593.4 253.3ZM566.5 230.8L565 228.5L566 227.8L561.9 226.5L561.5 230.8L562.5 230.1L564 232.5ZM589.5 264.7L588.6 262.3L589.4 262L586.5 260.4L585.5 263.6L586.4 263.2L587.3 265.6ZM770.1 237.3L771.7 235.4L772.5 236.1L772.5 232.4L768.9 233.1L769.7 233.7L768.1 235.6ZM588.4 276.8L587.5 274.1L588.4 273.8L585.4 271.9L584.2 275.2L585.1 274.9L586 277.6ZM614.6 235.2L614 233.1L614.9 232.8L612.2 230.9L610.8 233.9L611.7 233.7L612.3 235.8ZM644.9 234L644.8 231.8L645.7 231.8L643.5 229.3L641.5 232L642.4 231.9L642.5 234.1ZM528.6 236.4L527.4 234.6L528.1 234.1L525 233.3L524.8 236.5L525.5 236L526.7 237.7ZM631.7 283.2L631.1 280.9L631.9 280.7L629.6 278.9L628.3 281.5L629.1 281.4L629.6 283.7ZM597.8 273.2L597 270L598.1 269.7L594.8 267.3L593 271L594.1 270.7L594.9 273.9ZM577.7 270.5L576.5 268.5L577.2 268.1L574.5 267L574 269.9L574.7 269.5L575.9 271.5ZM519.6 274.2L517.9 271.7L518.8 271.2L515.3 270.1L514.9 273.8L515.7 273.2L517.4 275.6ZM688.2 270.9L688.5 268.5L689.4 268.6L687.6 265.9L685.4 268.1L686.3 268.2L686 270.7ZM637.2 267L637.3 264.2L638.3 264.2L636 261.3L633.6 264.1L634.6 264.1L634.6 267ZM766.2 251.2L767.1 249.3L767.8 249.6L767 246.7L764.3 248.1L765.1 248.4L764.2 250.4ZM594.8 273.2L593.5 269.9L594.6 269.4L590.7 267.2L589.3 271.5L590.4 271.1L591.8 274.4ZM689.4 273L690.2 270.6L691 270.8L689.8 267.9L687.1 269.7L688 269.9L687.3 272.3ZM769.3 243.8L771.1 241.6L772 242.3L772 238.2L767.9 239L768.8 239.7L766.9 241.9ZM640.7 252.5L640.5 249.2L641.7 249.1L638.6 245.9L636 249.6L637.3 249.5L637.5 252.7ZM664.9 232.1L665.2 229.6L666.2 229.7L664.1 226.7L661.5 229.3L662.5 229.4L662.3 231.8ZM775.7 248.3L776.8 246L777.7 246.5L776.8 243L773.6 244.5L774.5 244.9L773.4 247.2ZM599.4 244.8L599 242.2L600 242L597.1 239.4L595.2 242.8L596.2 242.6L596.6 245.3ZM564.3 251.3L563 249.4L563.7 248.9L560.6 248L560.3 251.2L561.1 250.7L562.4 252.6Z"/><path fill="#a01c9a" d="M773.7 266.8L775.4 263.9L776.4 264.5L775.7 260.3L771.7 261.8L772.7 262.4L771.1 265.2ZM630.3 253.5L630 251.4L630.8 251.3L628.7 249.3L627.1 251.8L627.9 251.7L628.2 253.8ZM638 262.1L637.4 259.1L638.5 258.9L635.5 256.3L633.5 259.8L634.6 259.6L635.1 262.6ZM716.1 274.4L717 271.2L718.1 271.5L716.5 267.7L713.1 270L714.2 270.4L713.2 273.5ZM781.3 288.6L783.3 285.8L784.2 286.5L784 282.4L780 283.4L780.9 284L778.9 286.8ZM734.2 278.1L735.9 275L737 275.6L736.2 271.3L732.1 272.9L733.2 273.4L731.4 276.5ZM591.1 274.1L590.2 271.2L591.2 270.9L588.1 268.9L586.7 272.3L587.7 272L588.6 274.8ZM704.2 293.9L705.1 290.4L706.2 290.7L704.4 286.9L701 289.4L702.2 289.6L701.3 293.2ZM676.6 255.9L676.5 252.8L677.7 252.8L675 249.6L672.4 253L673.5 252.9L673.6 256ZM769.8 274.3L771.8 271.7L772.7 272.4L772.6 268.3L768.6 269.1L769.5 269.9L767.4 272.4ZM754.9 271.7L756.9 268.9L757.9 269.6L757.6 265.3L753.4 266.4L754.4 267.1L752.4 269.9ZM730.3 250.3L731.6 247.8L732.6 248.3L731.7 244.5L728.2 246L729.1 246.5L727.8 249ZM554.3 272.1L553.3 269.8L554.1 269.5L551.3 268L550.4 271L551.2 270.7L552.2 273ZM695.5 277.6L695.9 274.5L697 274.7L695 271.4L692.2 274L693.2 274.2L692.8 277.2ZM620.7 261.3L620.5 259L621.3 259L619.2 256.8L617.5 259.4L618.3 259.3L618.5 261.5ZM702.5 250.2L703 247L704.2 247.2L701.9 243.4L698.6 246.4L699.8 246.6L699.4 249.7ZM531.4 251.4L529.5 249L530.4 248.3L526.4 247.5L526.3 251.6L527.2 250.9L529 253.2ZM737 245.5L737.8 243.3L738.7 243.6L737.6 240.6L734.8 242.2L735.6 242.5L734.9 244.7ZM548.9 255.9L547.7 253.8L548.5 253.4L545.5 252.1L544.9 255.3L545.7 254.9L546.8 257ZM665.7 256L666.1 253.5L667 253.7L665.3 250.7L662.6 253L663.6 253.1L663.2 255.6ZM663.1 268.3L663.4 265.9L664.3 266L662.6 263.3L660.3 265.5L661.2 265.6L660.9 268ZM684.6 271.2L685 268.9L685.8 269L684.3 266.5L682.1 268.4L682.9 268.6L682.5 270.9ZM624.5 275.3L624.3 272.2L625.4 272.1L622.7 269.2L620.4 272.4L621.5 272.4L621.7 275.5ZM713.4 259.7L713.8 257.4L714.7 257.5L713.1 254.8L710.7 256.8L711.6 257L711.2 259.3ZM790 272.4L791.6 270.5L792.3 271.1L792.3 267.9L789.2 268.5L789.9 269.1L788.3 271ZM634.1 266.6L633.9 264.3L634.8 264.2L632.6 262L630.9 264.5L631.7 264.5L631.9 266.8ZM539.7 277.4L538.1 274.8L538.9 274.3L535.3 273.1L534.9 276.9L535.7 276.3L537.4 278.9ZM617.1 284.8L616.6 281.1L617.8 281L614.6 278L612.2 281.7L613.5 281.6L614 285.2ZM741 247.7L741.8 245.6L742.6 245.9L741.6 242.8L738.8 244.4L739.6 244.8L738.8 246.9ZM642.7 246L642.3 243.8L643.1 243.6L640.6 241.6L639.1 244.4L640 244.3L640.4 246.5ZM700.1 264.6L700.8 261.9L701.8 262.2L700.3 259L697.4 261L698.3 261.3L697.6 263.9ZM798.1 263.1L799.6 260.9L800.4 261.4L800 257.9L796.6 259L797.4 259.5L796 261.7ZM690.6 260.7L691.1 258.6L691.9 258.8L690.7 256.2L688.3 257.9L689.1 258.1L688.6 260.2ZM761.8 259.8L763.1 257.2L764 257.6L763.1 253.8L759.5 255.5L760.5 256L759.3 258.6ZM789.3 258.5L791.6 256.1L792.4 257L792.8 252.6L788.4 253.1L789.3 254L787.1 256.3ZM580 288.4L579.1 285.7L579.9 285.4L577.1 283.7L576 286.9L576.8 286.5L577.8 289.2ZM570 273.1L568.6 269.9L569.8 269.4L565.8 267.3L564.6 271.6L565.7 271.1L567.1 274.4ZM756.9 262.3L758.1 259.2L759.3 259.6L757.9 255.4L754 257.5L755.2 258L753.9 261.1ZM676.2 286.8L676.3 283.7L677.3 283.7L675.1 280.8L672.6 283.5L673.6 283.6L673.5 286.7ZM587.3 274.2L586.2 271.3L587.2 270.9L583.9 269L582.6 272.6L583.6 272.2L584.7 275.1ZM700.4 283L701.1 280.7L701.9 280.9L700.7 278.2L698.3 279.9L699 280.1L698.4 282.4ZM532.6 260.3L530.7 258L531.6 257.3L527.7 256.5L527.7 260.4L528.5 259.8L530.4 262.1ZM614.1 280.1L613.3 277.8L614.1 277.5L611.4 275.9L610.4 278.8L611.2 278.5L612 280.9ZM606.6 248L606.1 244.9L607.4 244.7L604 241.7L601.7 245.5L602.9 245.4L603.4 248.5ZM644.3 288.4L644.4 285.5L645.3 285.5L643.2 282.8L640.9 285.4L641.9 285.5L641.8 288.4ZM636.4 252.8L635.9 249.7L637.1 249.5L634 246.7L631.8 250.3L632.9 250.1L633.3 253.2ZM720.8 262.9L721.8 260.1L722.8 260.5L721.5 256.8L718.1 258.8L719.1 259.2L718.2 262ZM663.8 249.1L664 247L664.8 247.1L663.1 244.7L661.1 246.8L661.9 246.8L661.7 248.9ZM630.7 265.5L630.1 262.9L631 262.7L628.3 260.6L626.7 263.7L627.7 263.5L628.2 266ZM661.4 282.4L661.1 279.2L662.2 279.1L659.4 276.3L657.2 279.6L658.3 279.5L658.6 282.7ZM673 243.1L673 240.8L673.9 240.8L671.8 238.2L669.6 240.7L670.6 240.8L670.5 243.1ZM651.2 266.6L651.3 263.9L652.3 264L650.2 261.2L647.9 263.8L648.9 263.8L648.7 266.5ZM648.4 285.3L648 282.7L648.8 282.6L646.5 280.5L644.9 283.2L645.8 283L646.1 285.6ZM633 287.4L633.1 284.8L633.9 284.8L632.1 282.4L630.1 284.7L630.9 284.8L630.9 287.3ZM717 281.9L717.8 278.8L718.8 279.1L717.2 275.6L714.1 277.8L715.1 278.1L714.3 281.1ZM686.2 244.7L686.9 242L687.9 242.3L686.2 238.6L682.9 241.1L684 241.3L683.4 244.1ZM605.3 269.5L604.5 267L605.4 266.8L602.7 265L601.5 268L602.3 267.7L603.1 270.2ZM720.7 284.5L721.9 282L722.7 282.4L721.9 279.1L718.9 280.5L719.7 280.9L718.5 283.4ZM704.6 266.6L705.7 263.8L706.7 264.2L705.4 260.5L702 262.5L703 262.8L702 265.6ZM675.2 249.5L675.2 247.2L676.1 247.2L674 244.6L671.9 247.2L672.8 247.2L672.8 249.5ZM557.2 275.9L555.5 272.7L556.6 272.1L552.5 270.3L551.6 274.8L552.7 274.2L554.4 277.4Z"/><path fill="#a82395" d="M736.5 288.2L737.7 285.1L738.7 285.4L737.4 281.7L734 283.7L735 284.1L733.9 287.2ZM771.9 303L773.3 300.4L774.1 300.8L773.5 297.5L770.4 298.8L771.2 299.2L769.8 301.9ZM607.6 299.4L607.1 296.6L608 296.4L605.6 294.3L604 297.1L604.8 297L605.3 299.8ZM744.8 266.8L745.8 264.4L746.6 264.8L745.6 261.6L742.7 263.2L743.6 263.5L742.6 265.9ZM721.3 298.3L722.7 294.6L723.9 295.1L722.6 290.8L718.6 292.9L719.7 293.4L718.2 297.1ZM681.1 264.7L681.6 262.2L682.5 262.4L680.9 259.4L678.3 261.6L679.2 261.7L678.7 264.3ZM790.9 270.4L793.3 268.1L794.2 269L794.7 264.7L790.4 265L791.2 265.9L788.8 268.2ZM784.3 274.3L786.4 271.7L787.3 272.4L787.3 268.2L783.2 269L784.1 269.8L782 272.4ZM550.3 272.5L548.4 270L549.3 269.3L545.4 268.4L545.2 272.3L546.1 271.7L548 274.2ZM780.6 271.1L782 269L782.8 269.5L782.5 266.2L779.3 267.2L780.1 267.7L778.6 269.8ZM678.9 268.4L678.8 265.4L679.9 265.3L677.3 262.4L674.9 265.5L676 265.5L676.1 268.5ZM698.7 284.5L699.1 282.1L699.9 282.2L698.5 279.7L696.3 281.6L697.1 281.7L696.7 284.1ZM753.6 289.6L755.4 286.3L756.5 286.9L755.6 282.5L751.5 284.2L752.6 284.8L750.8 288ZM536.8 280.6L535.4 278.5L536.2 278L533.2 277L532.8 280.2L533.5 279.7L534.9 281.9ZM719.5 258.9L720.5 255.8L721.6 256.2L720 252.1L716.3 254.5L717.5 254.9L716.5 258ZM597.2 282.6L596.7 279.9L597.7 279.7L595.1 277.5L593.4 280.4L594.4 280.2L594.8 283ZM522.5 302.7L520.5 299.9L521.4 299.3L517.6 298.3L517.4 302.1L518.2 301.5L520.3 304.3ZM666.8 289.9L667 286.1L668.3 286.2L665.6 282.5L662.5 285.8L663.8 285.9L663.5 289.7ZM747.2 287L748.3 284L749.3 284.3L748 280.8L744.7 282.7L745.7 283.1L744.7 286.1ZM769.3 265.1L770.8 262.3L771.8 262.9L771.1 258.8L767.3 260.3L768.2 260.9L766.7 263.6ZM717.7 282.9L718.4 279.6L719.5 279.8L717.6 276.2L714.4 278.8L715.5 279L714.8 282.4ZM776.4 289.5L777.8 286.9L778.6 287.3L777.9 283.8L774.6 285.2L775.5 285.7L774.1 288.3ZM642 260.1L641.9 257.6L642.9 257.5L640.7 255L638.6 257.7L639.5 257.6L639.6 260.2ZM710.6 278.3L711.4 275.7L712.2 276L711 272.9L708.2 274.8L709.1 275L708.3 277.6ZM742.8 256.3L743.9 254.3L744.7 254.7L744 251.6L741.2 252.8L741.9 253.2L740.9 255.2ZM550.3 302.2L548.4 299L549.4 298.4L545.5 296.9L544.8 301.1L545.8 300.5L547.7 303.7ZM605.9 298.1L605.1 294.4L606.2 294.2L602.8 291.6L600.9 295.4L602.1 295.2L602.9 298.8ZM632.6 277.4L632.2 274.7L633.2 274.6L630.7 272.3L629 275.2L629.9 275L630.3 277.7ZM787.8 290.9L790.2 288L791.1 288.8L791.2 284.4L786.8 285.2L787.8 286L785.4 288.8ZM684.7 279L684.9 276.3L685.9 276.4L683.9 273.6L681.6 276L682.5 276.1L682.3 278.8ZM630.7 297.5L630.5 294.7L631.4 294.7L629.2 292.3L627.4 294.9L628.2 294.9L628.4 297.7ZM645.6 303.2L645.5 299.4L646.6 299.3L643.8 296.2L641.3 299.5L642.4 299.5L642.6 303.3ZM596.4 267.7L595.6 265.2L596.5 264.9L593.6 263.1L592.3 266.2L593.2 265.9L594 268.5ZM593.8 299.1L592.6 295.6L593.7 295.3L590.1 293L588.6 297L589.7 296.6L590.9 300.1ZM703.1 284.5L704 280.9L705.2 281.2L703.2 277.2L699.6 279.8L700.8 280.1L699.9 283.8ZM607.5 280.3L606.9 277.2L607.9 277L604.8 274.5L603.1 278L604.1 277.8L604.8 280.9ZM740.6 260.5L741.5 257.9L742.5 258.2L741.2 254.8L738.1 256.7L739 257L738.1 259.6ZM570.4 274.3L568.8 271.8L569.7 271.3L566.2 270.1L565.7 273.8L566.6 273.2L568.2 275.7ZM770.9 282.8L772.5 279.8L773.5 280.4L772.6 276.3L768.8 277.9L769.8 278.4L768.3 281.4ZM658.1 280.3L657.9 276.9L659 276.8L656.1 273.8L653.7 277.2L654.8 277.1L655.1 280.6ZM622.5 271.3L622.1 268.9L623 268.7L620.5 266.7L619 269.4L619.8 269.3L620.3 271.7ZM593.1 270.5L591.9 267.7L592.9 267.3L589.4 265.5L588.4 269.3L589.3 268.8L590.6 271.6ZM516.6 274.3L514.4 271.8L515.2 271.1L511.1 270.4L511.2 274.6L512.1 273.8L514.3 276.3ZM572.2 299.4L571.1 296.8L571.9 296.5L569.1 295.1L568.2 298.1L569 297.7L570.2 300.3ZM745.4 263L746.6 260.8L747.4 261.3L746.9 258L743.8 259.2L744.6 259.6L743.3 261.8ZM536.8 257.7L535.3 256.1L536 255.5L533 255.1L533.1 258L533.7 257.5L535.2 259.1ZM718.7 285.3L719.3 282L720.4 282.2L718.5 278.7L715.4 281.2L716.5 281.4L715.9 284.7ZM723.5 300.1L724.7 297.4L725.6 297.7L724.6 294.5L721.6 296L722.5 296.4L721.3 299.2ZM742.8 259.5L743.5 257.2L744.3 257.5L743.1 254.5L740.4 256.2L741.3 256.5L740.6 258.8ZM653.5 272L653.7 268.7L654.9 268.8L652.5 265.3L649.6 268.4L650.7 268.5L650.5 271.8ZM688.8 275L689 272.3L689.9 272.4L687.9 269.7L685.6 272.2L686.6 272.2L686.4 274.9ZM712.9 314.4L714.4 310.8L715.5 311.2L714.3 307.2L710.6 309.1L711.6 309.6L710.1 313.2ZM741.1 290.7L742.2 287.5L743.3 287.8L741.9 284.1L738.5 286.2L739.5 286.5L738.4 289.7Z"/><path fill="#b12a90" d="M518.3 300.4L516 298.2L516.7 297.5L513.1 297.2L513.5 300.8L514.2 300.1L516.5 302.3ZM600.9 271.6L599.9 268.6L601 268.2L597.6 266.1L596.1 269.8L597.2 269.5L598.2 272.5ZM649.7 313.6L649.4 309.5L650.6 309.4L647.5 306.2L645 309.8L646.2 309.7L646.5 313.9ZM713.7 288.4L714.7 285.8L715.6 286.1L714.5 283L711.6 284.6L712.5 285L711.5 287.6ZM614.7 318.6L613.7 314.7L614.8 314.4L611.3 311.9L609.6 315.8L610.7 315.5L611.8 319.4ZM673.7 281.8L673.6 279L674.5 279L672.2 276.5L670.2 279.2L671.2 279.1L671.3 281.9ZM781 297.8L782.6 295.7L783.3 296.2L783.2 293L780.1 293.8L780.8 294.3L779.2 296.5ZM739.8 300.9L740.8 298.5L741.6 298.8L740.7 296L738.1 297.4L738.9 297.7L737.9 300.1ZM680.3 271.3L680.5 268L681.6 268.1L679.1 264.8L676.4 267.8L677.5 267.9L677.4 271.1ZM653.5 293.5L653.1 290L654.2 289.8L651.2 287L649 290.4L650.1 290.3L650.5 293.9ZM569.1 296.9L567.6 294.5L568.4 294L565.4 293L564.9 296.2L565.7 295.7L567.1 298.1ZM636.9 304.1L636.3 301.3L637.2 301.1L634.7 299.2L633.2 302L634.1 301.8L634.7 304.6ZM643.9 286.3L643.8 282.9L644.9 282.8L642.2 279.8L639.7 283L640.9 283L641 286.4ZM789.2 273L791.2 270.1L792.2 270.8L791.8 266.4L787.6 267.6L788.6 268.3L786.6 271.2ZM736.5 274.5L737.2 272.2L738 272.4L736.8 269.6L734.3 271.3L735.1 271.5L734.4 273.8ZM542.1 284.6L540.5 282L541.3 281.5L537.9 280.3L537.4 284L538.3 283.4L539.9 286ZM531.6 293.3L529.8 290.7L530.6 290.2L527.2 289.2L526.9 292.8L527.7 292.2L529.5 294.8ZM605.4 282.7L604.2 279.2L605.3 278.8L601.5 276.5L600 280.7L601.1 280.3L602.4 283.8ZM695.2 298.6L695.6 295.8L696.5 295.9L694.8 293.2L692.5 295.4L693.4 295.5L693 298.3ZM709.2 288.6L709.8 285.4L710.8 285.6L709 282.3L706.1 284.8L707.1 284.9L706.6 288.1ZM579.5 283.9L578.7 280.6L579.8 280.3L576.5 277.9L574.8 281.6L575.9 281.3L576.7 284.6ZM744.5 275.1L745.8 272.1L746.9 272.5L745.7 268.5L742 270.4L743 270.9L741.7 274ZM749.8 283.9L750.8 281.7L751.5 282L750.8 279.1L748.1 280.4L748.9 280.8L747.8 283ZM699.1 310.6L699.7 308L700.5 308.2L699.2 305.6L696.9 307.4L697.7 307.5L697.1 310.1ZM608.8 314.3L608.2 311.5L609.1 311.3L606.7 309.4L605.3 312.1L606.1 311.9L606.7 314.7ZM726 313L727.3 309.9L728.3 310.3L727.2 306.8L724 308.5L724.9 308.9L723.6 312ZM774.4 303.6L776.2 300.2L777.2 300.7L776.3 296.5L772.4 298.2L773.4 298.8L771.7 302.2ZM767.7 308.3L769.8 305L770.8 305.7L770.3 301.5L766.3 302.8L767.3 303.4L765.2 306.6ZM733.5 272L734.5 269.8L735.3 270.1L734.5 267L731.7 268.4L732.5 268.8L731.4 271.1ZM774.1 281.7L775.9 279.3L776.7 279.9L776.6 276.2L773 277L773.8 277.6L771.9 280.1ZM774.5 289.4L776 286.9L776.9 287.4L776.3 283.9L773 285.1L773.8 285.6L772.3 288.2ZM526.7 264.8L524.4 262.4L525.2 261.6L521 261.1L521.3 265.4L522.1 264.6L524.4 267ZM609.3 309.8L608.9 306.6L609.8 306.5L607.3 304.2L605.5 307.1L606.4 307L606.9 310.1ZM543.6 288.3L542.1 286L542.9 285.5L539.8 284.6L539.5 287.7L540.2 287.2L541.7 289.5ZM782.8 295.2L784.6 293.2L785.2 293.7L785.3 290.6L782.2 291.2L782.9 291.7L781.1 293.8ZM616.8 299.5L616.5 295.6L617.7 295.5L614.5 292.3L612 296L613.2 295.9L613.6 299.9ZM636.2 264.8L635.5 261.6L636.7 261.3L633.2 258.7L631.3 262.5L632.5 262.3L633.2 265.5ZM767.4 274L769 271.2L770 271.8L769.4 267.8L765.5 269.1L766.5 269.7L764.8 272.5ZM656.6 278.2L657 274.8L658.1 275L655.9 271.5L652.9 274.4L654 274.5L653.6 277.8ZM696 313.1L697.1 309.1L698.3 309.4L696.5 305.3L692.8 307.9L694 308.2L692.8 312.3ZM781.3 271.9L782.7 269.6L783.5 270.1L783 266.7L779.8 267.8L780.6 268.3L779.2 270.6ZM781 307.7L782.6 305.3L783.3 305.7L783 302.6L779.9 303.5L780.7 304L779.1 306.4ZM722.2 274.7L723.3 272.5L724.1 272.9L723.4 269.8L720.5 271.1L721.3 271.5L720.1 273.7ZM625.6 318.6L625.5 315.7L626.3 315.6L624.2 313.4L622.4 315.8L623.3 315.8L623.4 318.7Z"/><path fill="#b8318a" d="M633.6 322.6L633 318.9L634.1 318.7L631.2 316L629.1 319.4L630.2 319.3L630.7 323.1ZM527.2 308.3L525.3 305L526.3 304.4L522.5 302.9L521.8 307L522.8 306.4L524.6 309.7ZM692.1 306.9L693 303.2L694.1 303.4L692.3 299.6L688.9 302.1L690.1 302.4L689.1 306.1ZM583.3 300.6L582.1 297.8L583 297.4L580 295.8L578.9 299.1L579.8 298.7L581 301.6ZM672.5 282.7L672.6 279.3L673.7 279.4L671.2 276.2L668.5 279.3L669.7 279.3L669.6 282.7ZM679.7 308.9L680 306.2L680.8 306.3L679.2 303.8L677 305.9L677.9 306L677.6 308.7ZM644.4 307.7L644.2 304.4L645.3 304.3L642.8 301.6L640.6 304.5L641.6 304.5L641.8 307.8ZM773.4 317.2L775.2 314.3L776.1 314.9L775.7 311.2L772.2 312.3L773 312.9L771.1 315.8ZM731.9 285.8L733.1 283.3L733.9 283.7L733.2 280.6L730.2 281.9L731 282.3L729.8 284.7ZM675 290.9L675.6 288L676.5 288.2L674.9 285.2L672.3 287.3L673.2 287.5L672.6 290.4ZM678.1 301.2L678.2 297.7L679.3 297.8L676.9 294.7L674.4 297.7L675.4 297.7L675.4 301.1ZM606.7 312.8L606.1 308.7L607.4 308.6L604.1 305.5L601.8 309.3L603 309.2L603.5 313.2ZM760.6 305.9L762.1 303.1L763 303.6L762.3 300.2L759.1 301.5L759.9 301.9L758.4 304.7ZM792.7 299.1L794.5 296.8L795.2 297.3L795 294L791.8 294.8L792.6 295.3L790.8 297.7ZM631.3 313.5L630.5 310L631.5 309.7L628.5 307.4L626.8 310.8L627.8 310.6L628.6 314.1ZM674.3 328.8L674.7 325.4L675.7 325.6L673.9 322.7L671.4 325L672.3 325.1L671.9 328.5ZM599.8 299.6L599.2 296.4L600.2 296.2L597.4 293.9L595.6 297.1L596.6 296.9L597.2 300.1ZM668.1 300.5L668.4 297.7L669.3 297.8L667.6 295.2L665.3 297.4L666.2 297.5L665.9 300.3ZM771.4 305.3L773.2 302.7L774 303.2L773.7 299.8L770.3 300.7L771.1 301.3L769.4 303.8ZM754.8 310.1L756.5 307.9L757.1 308.3L756.9 305.3L754 306.1L754.7 306.6L753.1 308.9ZM572.9 303L571.5 299.2L572.7 298.8L568.8 296.5L567.4 300.7L568.5 300.3L569.9 304.1ZM707.8 312.7L708.5 309.9L709.3 310.1L707.9 307.3L705.5 309.2L706.3 309.4L705.7 312.2ZM695 300.7L695.4 297.1L696.5 297.3L694.3 293.8L691.4 296.7L692.5 296.8L692.1 300.4ZM795.2 307.2L797.2 304.9L797.9 305.5L798 302.1L794.6 302.7L795.4 303.3L793.4 305.6ZM737.9 311L739.1 307.6L740.2 307.9L738.8 304.2L735.5 306.2L736.5 306.6L735.3 310ZM770.7 292.9L772.4 290.7L773.1 291.2L773 287.9L769.8 288.7L770.5 289.3L768.8 291.5ZM633.1 301.3L633.2 298.1L634.1 298.2L631.9 295.4L629.6 298.1L630.6 298.1L630.5 301.3ZM644.1 297.8L644.4 294.9L645.3 295L643.4 292.2L641 294.6L642 294.7L641.7 297.6ZM581.9 290.6L580.2 287.4L581.2 286.8L577.4 285.1L576.4 289.3L577.5 288.8L579.1 292ZM778.3 290.5L780.2 287.7L781.1 288.3L780.8 284.4L777 285.5L777.9 286.1L776 288.9ZM529.6 291.7L527.5 289L528.4 288.3L524.5 287.4L524.4 291.4L525.2 290.7L527.3 293.4ZM675.6 303L675.6 300.1L676.5 300.1L674.6 297.6L672.5 300L673.3 300L673.3 302.9ZM524.8 307.9L523.4 305.5L524.1 305L521.2 304L520.7 307.1L521.5 306.6L522.9 309.1ZM628.1 315.3L627.8 312.1L628.8 312L626.3 309.5L624.4 312.4L625.3 312.3L625.6 315.5ZM691.2 303.2L691.9 299.9L692.9 300.1L691.2 296.8L688.3 299.1L689.3 299.3L688.6 302.6ZM639.7 291.2L639.5 288.4L640.4 288.3L638.1 285.9L636.2 288.6L637.1 288.5L637.3 291.4ZM554.8 286L553.2 283.1L554.2 282.6L550.6 281.1L549.8 284.9L550.8 284.4L552.3 287.3ZM674.1 292.5L674 289.5L675 289.5L672.8 286.9L670.6 289.6L671.6 289.6L671.6 292.5ZM727.8 290L728.7 287.4L729.5 287.7L728.4 284.7L725.6 286.4L726.5 286.7L725.6 289.3ZM678.9 298.4L679.8 294.6L681 294.9L679 290.9L675.5 293.6L676.7 293.9L675.9 297.7Z"/><path fill="#be3884" d="M719.8 312.4L720.5 309.4L721.4 309.6L720 306.7L717.3 308.7L718.2 308.9L717.5 311.9ZM761 309L763.1 305.8L764 306.5L763.6 302.3L759.6 303.5L760.6 304.2L758.5 307.3ZM654 303L654.3 299.8L655.3 299.9L653.2 296.9L650.6 299.5L651.7 299.6L651.4 302.8ZM718.2 346.9L719.4 344L720.2 344.3L719.4 341.5L716.7 342.8L717.5 343.2L716.3 346ZM634.5 302.1L634.4 298.7L635.5 298.7L632.9 295.8L630.6 298.8L631.6 298.8L631.8 302.2ZM766 310L767.9 306.5L769 307L768.2 302.7L764.1 304.4L765.1 304.9L763.2 308.5ZM693.7 319.8L694.8 315.8L696 316.1L694.2 312.2L690.7 314.7L691.8 315L690.8 319ZM675.8 309L676.1 306.3L676.9 306.4L675.3 304L673.2 306L674 306.1L673.7 308.8ZM687.8 304.9L688.5 302.2L689.3 302.4L688 299.7L685.6 301.5L686.4 301.7L685.7 304.3ZM549.7 314.4L548.5 311.5L549.4 311.2L546.4 309.6L545.4 312.8L546.3 312.5L547.5 315.4ZM790.1 313.6L792.1 310.1L793.2 310.7L792.5 306.3L788.3 307.9L789.4 308.5L787.3 312ZM613 328.5L612.5 325.3L613.4 325.2L611 323.1L609.4 325.8L610.2 325.7L610.7 328.8ZM696.7 306.3L697.3 303L698.3 303.2L696.5 299.8L693.6 302.3L694.6 302.5L694 305.8ZM519.4 322.1L517 319.3L517.8 318.6L514 318L514.2 321.8L515 321.1L517.4 323.9ZM526.3 305.9L524.1 303.3L524.9 302.6L521.2 301.9L521.2 305.7L522 305L524.3 307.6ZM747.1 294.3L749 291.3L750 291.9L749.5 287.8L745.6 289.1L746.5 289.7L744.6 292.7ZM764.4 308.2L765.9 305.8L766.6 306.3L766.2 303.2L763.3 304.2L764 304.7L762.5 307.1ZM756.1 335.9L758.3 332L759.4 332.6L758.6 328.2L754.5 329.8L755.5 330.4L753.3 334.3ZM739.6 323.4L740.7 319.9L741.7 320.2L740.3 316.7L737.1 318.8L738.1 319.1L737 322.6Z"/><path fill="#c5407e" d="M628.7 317.7L628.4 314.6L629.3 314.5L627 312.1L625.1 314.9L626 314.8L626.3 317.9ZM740.3 321.1L742.4 317.5L743.5 318.2L742.8 313.9L738.8 315.3L739.8 315.9L737.6 319.5ZM651.4 321.8L651.2 318.7L652.1 318.6L650 316.2L648 318.8L648.9 318.8L649.1 321.8ZM546.6 335.1L544 331.7L544.9 331L540.8 330L540.6 334.2L541.5 333.5L544.1 337ZM536.4 331.5L534.3 328.9L535 328.4L531.8 327.7L531.8 331L532.5 330.4L534.6 333ZM783.7 322.6L785.6 319.7L786.4 320.3L786 316.8L782.6 317.8L783.5 318.3L781.6 321.2ZM657.1 312.9L656.7 309.4L657.7 309.3L655.1 306.7L653 309.8L654.1 309.7L654.4 313.1ZM627.7 332.6L627.1 328.6L628.2 328.4L625.1 325.7L623.1 329.2L624.2 329L624.8 333.1ZM694 316.8L694.9 313.7L695.7 314L694.4 310.9L691.7 312.8L692.6 313.1L691.7 316.1ZM679.6 329L679.7 324.7L681 324.7L678.3 321.3L675.4 324.6L676.6 324.6L676.5 328.9ZM677.7 321.7L678.4 318.2L679.4 318.4L677.7 315L674.7 317.4L675.7 317.6L675 321.2ZM716.3 342.5L717 338.7L718 338.9L716.1 335.6L713.2 338L714.3 338.2L713.6 342.1ZM630.3 316.1L629.7 311.9L630.9 311.7L627.6 308.7L625.3 312.6L626.5 312.4L627.1 316.6ZM636.7 318.6L636 314.9L637.1 314.7L634.1 312.2L632.2 315.6L633.2 315.4L633.9 319.1ZM620.4 325.8L620 322.5L620.9 322.3L618.4 320L616.6 322.9L617.5 322.8L617.9 326.1ZM689.9 316.1L690.7 312.4L691.8 312.6L689.9 309L686.7 311.5L687.8 311.8L687 315.5ZM748.6 320.3L749.5 317.4L750.4 317.7L749.2 314.7L746.5 316.4L747.3 316.7L746.4 319.6ZM705.4 319.2L706.2 316.5L707 316.7L705.8 314L703.3 315.6L704.1 315.9L703.3 318.6Z"/><path fill="#cc4778" d="M763.6 336.8L765.1 333.4L766 333.8L765 330.2L761.8 331.9L762.7 332.3L761.2 335.7ZM772.4 335.2L774.4 331.6L775.4 332.2L774.7 328.2L770.9 329.7L771.9 330.2L769.9 333.8ZM580.5 338.9L579.4 334.8L580.5 334.5L577.2 332.1L575.4 335.8L576.5 335.5L577.6 339.6ZM774.1 324.7L775.7 322L776.5 322.5L776 319.3L773 320.4L773.8 320.9L772.2 323.5ZM761.6 341.2L763.7 337.5L764.7 338.1L764 334L760.1 335.4L761.1 336L759 339.7ZM618.5 323.4L618 319.5L619.1 319.4L616.2 316.6L614 320L615.1 319.9L615.6 323.8Z"/><path fill="#d14e72" d="M581.5 342.3L580 339L580.8 338.6L577.6 337.1L576.8 340.5L577.7 340.1L579.2 343.4ZM605.8 332.5L604.7 328.2L605.9 327.9L602.3 325.2L600.4 329.3L601.6 329L602.7 333.3ZM542.3 336.6L540.6 333.3L541.5 332.8L538.2 331.4L537.4 334.9L538.3 334.5L540 337.7ZM612.1 344.1L611.7 341.1L612.5 341L610.4 339.1L608.8 341.6L609.6 341.4L610.1 344.4ZM720.4 345L722 341L723 341.4L721.7 337.4L718.1 339.4L719.2 339.9L717.6 343.9Z"/><path fill="#8f0da4" d="M762.6 261.4L764.5 259.7L764.9 260.2L765.7 256.7L762.2 257.4L762.7 257.9L760.9 259.7ZM750.8 259.6L752.8 257.3L753.3 257.7L753.8 254.2L750.3 255.2L750.9 255.6L748.9 258ZM780.4 264.9L782.4 262.9L782.9 263.3L783.5 259.8L780.1 260.6L780.6 261.1L778.6 263.2ZM739.7 263.4L740.9 262L741.4 262.5L741.9 258.9L738.5 259.9L739 260.4L737.8 261.7ZM769.2 262L770.8 260.2L771.3 260.6L771.7 257L768.3 258.1L768.8 258.6L767.3 260.5Z"/><path fill="#98149f" d="M754.7 286.3L757.5 282.8L758.1 283.2L758.4 279.7L755 280.8L755.5 281.2L752.7 284.8ZM750.4 288.4L752.7 286.1L753.2 286.6L753.9 283.1L750.4 283.8L750.9 284.3L748.6 286.6ZM771.7 271.7L775 267.8L775.6 268.3L776 264.7L772.6 265.7L773.1 266.2L769.8 270.1ZM764.7 281.2L767.7 278.1L768.2 278.6L768.9 275.1L765.4 275.9L765.9 276.4L762.9 279.5ZM747.1 274.1L748.5 272.4L749.1 272.9L749.6 269.4L746.1 270.3L746.6 270.8L745.2 272.5ZM737.8 274.4L740.7 271L741.2 271.5L741.7 267.9L738.3 268.9L738.8 269.4L735.9 272.7ZM765.8 284.1L769.4 280.1L770 280.5L770.5 277L767 277.9L767.6 278.4L764 282.4ZM761 293.1L764.6 288.9L765.1 289.4L765.6 285.8L762.1 286.8L762.7 287.3L759.1 291.5ZM759.1 263.3L761.4 260.8L762 261.3L762.6 257.8L759.1 258.7L759.6 259.1L757.3 261.6ZM750.7 263.1L751.9 261.7L752.5 262.2L752.9 258.6L749.5 259.6L750.1 260.1L748.9 261.4ZM754.6 292L759.4 287L759.9 287.5L760.6 284L757.1 284.7L757.6 285.2L752.8 290.2ZM759.1 264.8L761.3 262.6L761.8 263.1L762.5 259.6L759 260.3L759.5 260.8L757.3 263Z"/><path fill="#a01c9a" d="M765.5 298.2L769.4 293.9L769.9 294.3L770.5 290.8L767 291.7L767.6 292.2L763.7 296.6ZM765.5 308.4L770.9 302.7L771.4 303.2L772 299.6L768.5 300.5L769.1 301L763.7 306.7ZM742.4 272.5L746 268.7L746.6 269.2L747.2 265.7L743.7 266.5L744.2 267L740.6 270.8ZM778.7 322.8L784.6 316.4L785.1 316.8L785.7 313.3L782.2 314.2L782.8 314.7L776.8 321.1ZM760.5 334.1L766.6 327.3L767.1 327.7L767.7 324.2L764.2 325.1L764.8 325.6L758.6 332.4ZM776.5 322.6L780.1 318.8L780.6 319.3L781.3 315.7L777.8 316.6L778.3 317.1L774.7 320.9ZM753.5 281.4L755.5 279.1L756 279.6L756.5 276L753.1 277L753.6 277.5L751.6 279.8ZM766.6 299.4L769.4 296.7L769.9 297.2L770.6 293.7L767.1 294.4L767.6 294.9L764.9 297.7ZM767 315.1L771.9 310L772.4 310.5L773 307L769.6 307.8L770.1 308.3L765.2 313.4ZM728.2 312.1L733.3 306.3L733.8 306.7L734.3 303.2L730.8 304.2L731.4 304.6L726.3 310.5ZM758.6 278.5L762 274.2L762.6 274.6L762.9 271L759.5 272.2L760 272.6L756.7 276.9ZM737.6 314.1L743 308.3L743.5 308.8L744.2 305.3L740.7 306.1L741.2 306.6L735.8 312.4ZM733.9 317.9L738.2 313.3L738.7 313.8L739.3 310.2L735.8 311.1L736.3 311.6L732.1 316.2ZM735.5 319.1L739.5 314.7L740 315.1L740.6 311.6L737.1 312.5L737.7 313L733.6 317.5ZM771.8 275.6L774.8 272L775.3 272.4L775.8 268.9L772.4 269.9L772.9 270.4L769.9 274ZM757.1 291.8L761.3 286.4L761.9 286.8L762.2 283.3L758.8 284.4L759.4 284.8L755.1 290.3ZM739 311.8L741.4 308.9L741.9 309.4L742.3 305.8L738.9 306.9L739.4 307.3L737.1 310.2ZM758.8 299.9L761.5 296.4L762.1 296.8L762.4 293.3L759 294.4L759.6 294.9L756.8 298.4ZM737.6 313.9L742.5 307.4L743.1 307.8L743.3 304.3L739.9 305.5L740.5 305.9L735.6 312.4ZM765 324.9L770.2 319L770.7 319.5L771.3 316L767.8 316.9L768.4 317.4L763.1 323.2ZM738.6 263.8L740.6 261.5L741.1 261.9L741.5 258.4L738.1 259.5L738.6 259.9L736.7 262.2ZM729.8 334.1L735.5 326.7L736 327.1L736.3 323.5L732.9 324.7L733.5 325.2L727.8 332.6ZM774.6 321L780.9 314.9L781.4 315.4L782.2 311.9L778.7 312.6L779.2 313.1L772.9 319.2Z"/><path fill="#a82395" d="M761.7 338.5L768.4 331.8L768.9 332.3L769.6 328.8L766.1 329.5L766.6 330L759.9 336.7ZM748.4 311.2L751.1 308.3L751.6 308.8L752.4 305.3L748.9 306.1L749.4 306.6L746.6 309.4ZM767.4 322.6L772.2 317.2L772.7 317.7L773.2 314.1L769.8 315.1L770.3 315.5L765.5 320.9ZM760.5 313.3L763.7 309.8L764.2 310.2L764.8 306.7L761.3 307.6L761.8 308.1L758.6 311.7ZM749 310.3L754.1 304.7L754.6 305.2L755.2 301.7L751.8 302.6L752.3 303L747.2 308.6ZM755.3 335.6L758.7 331.2L759.3 331.6L759.6 328.1L756.2 329.2L756.8 329.7L753.4 334.1ZM735 284.5L738.9 280.3L739.4 280.7L740 277.2L736.6 278.1L737.1 278.6L733.2 282.8ZM776.8 299.9L781.4 295.5L781.9 296L782.6 292.5L779.1 293.2L779.6 293.7L775 298.2ZM761.3 325.4L765.7 321.2L766.2 321.7L767 318.2L763.4 318.9L763.9 319.4L759.6 323.7ZM746.1 301.7L748.4 299.3L748.9 299.7L749.5 296.2L746 297.1L746.5 297.6L744.2 300.1ZM736 305.5L738.3 302.5L738.8 302.9L739 299.3L735.7 300.6L736.2 301L734 304ZM747.8 316.5L751.7 312.4L752.2 312.9L752.9 309.4L749.4 310.2L749.9 310.7L746 314.8ZM774.4 315.1L779.4 309.9L779.9 310.4L780.6 306.9L777.1 307.7L777.6 308.2L772.6 313.4ZM778.9 347L783.2 342.3L783.7 342.7L784.3 339.2L780.8 340.1L781.3 340.6L777 345.3Z"/><path fill="#b12a90" d="M596.2 209.1L594.6 207.4L595.1 206.9L591.7 206.1L592.4 209.5L592.9 209.1L594.5 210.7ZM754.3 347.9L758.5 343.5L759 344L759.7 340.5L756.2 341.3L756.7 341.8L752.5 346.1ZM774.9 352.6L778.8 348.1L779.3 348.6L779.8 345L776.4 346L776.9 346.5L773 350.9ZM764 349.8L767 346.2L767.6 346.6L768 343.1L764.6 344.1L765.1 344.6L762.1 348.2ZM760.9 365.5L766.7 359.6L767.2 360.1L768 356.6L764.5 357.3L765 357.8L759.1 363.7ZM727.9 363.8L734.4 356.2L735 356.7L735.5 353.1L732 354.1L732.6 354.6L726 362.1ZM766.7 326.9L771.7 322L772.2 322.5L773 319L769.5 319.7L770 320.2L765 325.1ZM772.3 310.9L774.8 308.1L775.3 308.6L775.9 305L772.4 306L772.9 306.4L770.5 309.3ZM727.5 324.7L732.3 318.9L732.8 319.4L733.2 315.8L729.8 316.9L730.3 317.3L725.6 323.1ZM739.7 308.6L741.8 305.7L742.4 306.1L742.6 302.5L739.3 303.8L739.8 304.2L737.7 307.1ZM735.2 348.5L741.3 340.8L741.8 341.3L742.1 337.7L738.7 338.9L739.3 339.3L733.3 347ZM756.4 349.3L759.7 345.8L760.2 346.3L760.9 342.7L757.4 343.6L757.9 344.1L754.6 347.5ZM764.2 343.2L767.1 339.8L767.6 340.2L768 336.7L764.6 337.7L765.2 338.2L762.3 341.6ZM738.8 346.1L743 341L743.5 341.4L743.9 337.9L740.5 338.9L741.1 339.4L736.8 344.5ZM726.6 336.4L729.6 332.9L730.2 333.4L730.7 329.9L727.2 330.8L727.8 331.3L724.7 334.8ZM725.3 346.2L728.9 341.3L729.5 341.7L729.7 338.2L726.4 339.4L726.9 339.8L723.3 344.7ZM762.2 319.2L767 314L767.6 314.4L768.1 310.9L764.7 311.8L765.2 312.3L760.4 317.6ZM777.4 329.8L781 325.7L781.5 326.2L782 322.6L778.6 323.6L779.1 324.1L775.5 328.2ZM777.8 353.1L781.5 349.1L782 349.6L782.6 346L779.1 346.9L779.6 347.4L775.9 351.5ZM749.4 354.5L756 346.9L756.5 347.4L757 343.9L753.6 344.8L754.1 345.3L747.5 352.9ZM719.3 365.5L723.4 360.7L723.9 361.2L724.4 357.6L720.9 358.6L721.5 359.1L717.4 363.9ZM767.2 365.5L773.9 358.4L774.4 358.9L775.1 355.3L771.6 356.2L772.1 356.7L765.3 363.8ZM748.8 316.3L752.3 311.7L752.9 312.1L753.1 308.6L749.8 309.8L750.3 310.2L746.8 314.8ZM727.2 339.6L730.7 335.7L731.2 336.1L731.7 332.6L728.3 333.5L728.8 334L725.4 337.9ZM780.4 367.6L783.7 364L784.2 364.5L784.8 361L781.4 361.9L781.9 362.3L778.5 365.9ZM732.1 371.3L737.1 365.2L737.7 365.6L738 362.1L734.6 363.2L735.2 363.6L730.2 369.7ZM779.7 343.1L786.4 336.9L786.9 337.4L787.8 333.9L784.2 334.5L784.7 335.1L778 341.3Z"/><path fill="#b8318a" d="M616.6 206.8L615.3 205.3L615.8 204.8L612.4 203.8L612.9 207.3L613.5 206.8L614.8 208.4ZM601.7 203.7L600.5 202.6L601 202.1L597.8 201.6L598.4 204.9L598.9 204.4L600.1 205.5ZM604.2 208.9L602 206.8L602.5 206.3L599 205.6L599.9 209.1L600.4 208.6L602.6 210.6ZM558.2 210.2L556.8 209L557.2 208.5L553.7 208.1L554.8 211.4L555.3 210.9L556.7 212ZM590.3 224.7L587.9 222L588.4 221.5L585 220.5L585.6 224L586.1 223.6L588.5 226.3ZM584.4 212L583.2 211L583.7 210.5L580.6 210.2L581.2 213.3L581.6 212.8L582.8 213.8ZM601.1 223.3L598.2 220.5L598.7 220L595.2 219.3L596.1 222.8L596.6 222.3L599.4 225ZM584.1 206.3L582.9 205.2L583.3 204.7L580.1 204.4L580.8 207.6L581.3 207L582.5 208.1ZM558.4 236.5L556.2 234.8L556.6 234.2L553.1 233.8L554.3 237.2L554.7 236.6L556.9 238.4ZM556.4 215L554.2 213.3L554.6 212.8L551.1 212.4L552.3 215.8L552.7 215.2L554.9 216.9ZM598.5 209.9L596 207.3L596.5 206.8L593.1 206L593.8 209.5L594.3 209L596.7 211.5ZM606.5 232.5L604.6 230.6L605.1 230.1L601.6 229.4L602.4 232.9L602.9 232.4L604.8 234.3ZM603.3 224.9L601.3 222.7L601.8 222.2L598.4 221.2L599 224.7L599.5 224.3L601.5 226.5ZM757 381.7L762 376.5L762.5 377L763.2 373.4L759.7 374.3L760.2 374.8L755.2 380ZM741.9 362.6L746.8 357.4L747.3 357.9L747.9 354.4L744.5 355.2L745 355.7L740.1 360.9ZM733.2 350.4L738.9 343L739.4 343.5L739.7 339.9L736.3 341.1L736.9 341.5L731.2 348.9ZM743.8 376.8L747.5 372.6L748.1 373L748.6 369.5L745.1 370.5L745.7 370.9L741.9 375.2ZM773.3 363.4L777.9 358.7L778.4 359.2L779.1 355.7L775.6 356.5L776.1 357L771.5 361.7ZM728.5 338.5L733.3 333.1L733.9 333.5L734.4 330L731 330.9L731.5 331.4L726.7 336.8ZM758 376.5L762.5 371.4L763.1 371.8L763.6 368.3L760.1 369.2L760.7 369.7L756.1 374.8ZM745.1 381L748.8 377L749.3 377.5L749.9 374L746.5 374.9L747 375.3L743.3 379.3ZM774.6 345L779.7 339.7L780.2 340.2L780.8 336.7L777.4 337.5L777.9 338L772.8 343.3ZM776.8 375.8L782.3 370.4L782.8 370.9L783.6 367.4L780.1 368.1L780.6 368.6L775.1 374ZM777.7 350.4L783.2 344.8L783.7 345.3L784.4 341.7L780.9 342.5L781.4 343L775.9 348.7ZM748.8 371.7L754.5 365.2L755.1 365.7L755.6 362.2L752.2 363.1L752.7 363.6L746.9 370ZM760.3 341L766 334.8L766.5 335.3L767.1 331.8L763.6 332.7L764.2 333.2L758.5 339.4ZM747.8 392L753.2 385.2L753.8 385.6L754.1 382.1L750.7 383.2L751.3 383.6L745.9 390.5ZM753.9 368.3L758.2 362.7L758.7 363.2L759 359.6L755.6 360.8L756.2 361.2L752 366.8ZM729.6 358.8L733.5 354.2L734.1 354.6L734.5 351.1L731.1 352.1L731.6 352.6L727.7 357.2ZM728 372.8L731.1 368.6L731.7 369L731.9 365.4L728.6 366.7L729.1 367.1L726 371.4ZM736.8 341.6L743.2 334.6L743.7 335.1L744.3 331.5L740.9 332.4L741.4 332.9L735 339.9ZM772.5 377.5L778.3 371L778.8 371.5L779.4 367.9L775.9 368.9L776.4 369.3L770.6 375.9ZM723.1 355.2L729.5 347.9L730 348.4L730.6 344.9L727.1 345.8L727.6 346.3L721.2 353.5ZM744.4 333.4L747.7 329.6L748.3 330.1L748.8 326.6L745.4 327.5L745.9 328L742.5 331.7ZM760.8 378.3L765.1 373.7L765.6 374.2L766.2 370.6L762.7 371.5L763.3 372L758.9 376.6ZM765.5 366L769.6 361.1L770.1 361.5L770.5 358L767.1 359L767.6 359.5L763.6 364.4ZM764.4 390.8L768.3 386.2L768.8 386.6L769.3 383.1L765.8 384.1L766.4 384.6L762.5 389.1ZM763.8 390.2L769.4 384.2L769.9 384.7L770.5 381.2L767 382L767.5 382.5L761.9 388.5ZM760 376L765.4 369.5L765.9 370L766.3 366.4L762.9 367.5L763.5 367.9L758.1 374.4Z"/><path fill="#be3884" d="M575.6 223.6L573 221.4L573.4 220.8L569.9 220.4L571 223.7L571.4 223.2L574 225.4ZM571.9 235.3L570.5 233.9L571 233.4L567.5 232.5L568.2 236L568.7 235.5L570.1 237ZM558.7 278.2L556.2 275.9L556.7 275.4L553.2 274.7L554.1 278.1L554.6 277.6L557 279.9ZM601.4 239.3L597.7 235.1L598.3 234.7L594.8 233.7L595.4 237.2L595.9 236.7L599.7 240.9ZM615.1 229.6L612 226.4L612.5 225.9L609.1 225L609.8 228.5L610.3 228L613.3 231.3ZM612.5 262.2L610.6 260.3L611.1 259.8L607.6 259L608.4 262.5L608.9 262L610.9 263.9ZM591.1 214.3L589.7 212.9L590.2 212.4L586.8 211.5L587.5 215L588 214.5L589.3 215.9ZM597.7 219.9L594.7 216.8L595.2 216.3L591.8 215.5L592.5 219L593 218.5L595.9 221.6ZM607.1 218L605 216.1L605.5 215.6L602 214.9L602.9 218.3L603.4 217.8L605.4 219.8ZM567.5 276.1L562.5 271.6L563 271.1L559.5 270.4L560.4 273.9L560.9 273.3L565.9 277.9ZM558.3 230.8L554.4 227.4L554.9 226.9L551.3 226.4L552.4 229.8L552.8 229.3L556.8 232.6ZM596.5 245.6L593.9 242.8L594.5 242.4L591 241.4L591.6 244.9L592.2 244.4L594.7 247.2ZM600.4 257.6L596.4 254L596.9 253.5L593.4 252.9L594.3 256.3L594.8 255.8L598.8 259.4ZM604.3 249.5L600.1 245.4L600.6 244.9L597.1 244.2L597.9 247.6L598.4 247.1L602.7 251.2ZM593.2 213.7L592.1 212.5L592.6 212L589.5 211.3L589.8 214.5L590.3 214.1L591.4 215.3ZM610.7 273.5L605.2 268.5L605.7 268L602.2 267.3L603.1 270.8L603.6 270.2L609.1 275.3ZM555.3 267.2L553.1 265L553.6 264.5L550.1 263.8L550.9 267.3L551.4 266.8L553.6 269ZM606.2 281.9L603.3 279.1L603.8 278.6L600.3 277.9L601.1 281.3L601.6 280.8L604.6 283.6ZM558.9 225.7L555.5 222.4L556 221.9L552.5 221.2L553.4 224.7L553.9 224.2L557.3 227.4ZM566.1 256.1L563 252.8L563.5 252.3L560 251.5L560.7 255L561.2 254.5L564.4 257.8ZM607.3 257.8L603.1 253.8L603.5 253.2L600.1 252.5L600.9 256L601.4 255.5L605.6 259.5ZM602.4 223.6L599.2 220.3L599.7 219.8L596.3 219L597 222.5L597.5 222L600.7 225.3ZM594.1 236.5L590.8 233L591.3 232.5L587.8 231.6L588.5 235.1L589 234.6L592.3 238.1ZM573.6 284.7L570.2 281.4L570.7 280.9L567.2 280.2L568 283.6L568.5 283.1L571.9 286.4ZM571.1 278.2L568.3 275.6L568.8 275.1L565.3 274.5L566.2 277.9L566.7 277.4L569.5 280ZM565.9 241.2L563.7 239.3L564.2 238.8L560.7 238.2L561.7 241.6L562.2 241.1L564.3 243ZM568.2 245.3L565.9 243.1L566.4 242.6L562.9 241.9L563.8 245.4L564.3 244.9L566.5 247ZM567.4 211.6L565.1 209.6L565.6 209.1L562.1 208.5L563.1 211.9L563.6 211.4L565.9 213.4ZM621.1 229.2L617.9 225.6L618.4 225.2L615 224.2L615.6 227.7L616.1 227.2L619.3 230.8ZM608.8 219.8L607.8 218.6L608.3 218.2L605.2 217.4L605.4 220.6L606 220.2L607 221.4ZM604.2 203.1L602.4 201.3L602.9 200.8L599.5 200.1L600.3 203.6L600.8 203.1L602.6 204.8ZM578 248.3L574.2 244.5L574.7 244L571.3 243.1L572 246.6L572.5 246.1L576.2 249.9ZM735.7 354.4L740.1 349.6L740.6 350.1L741.2 346.5L737.7 347.4L738.3 347.9L733.8 352.7ZM766 383.1L770.8 377.2L771.4 377.7L771.8 374.1L768.4 375.2L768.9 375.6L764 381.5ZM735 366.8L739.3 361.1L739.8 361.5L740 358L736.7 359.2L737.2 359.6L733 365.3ZM742.5 415.6L746.3 409.1L746.9 409.4L746.7 405.8L743.5 407.4L744.1 407.8L740.3 414.3ZM755.8 380.4L761.5 373L762.1 373.5L762.4 369.9L759 371.1L759.6 371.5L753.8 378.9ZM727.5 417.3L731.5 409.9L732.1 410.3L731.8 406.7L728.6 408.4L729.3 408.7L725.3 416.2ZM747.3 382.8L753.9 375.4L754.5 375.8L755 372.3L751.5 373.2L752.1 373.7L745.5 381.1ZM735.8 378L739.6 373L740.1 373.4L740.3 369.8L737 371.1L737.5 371.5L733.8 376.5ZM734 405.1L737.4 400.7L738 401.1L738.3 397.6L734.9 398.7L735.4 399.1L732 403.5ZM746.2 413.3L750 408.2L750.5 408.6L750.7 405L747.4 406.3L747.9 406.7L744.2 411.8ZM755 414.1L759 408L759.6 408.4L759.6 404.8L756.3 406.2L756.9 406.6L752.9 412.7ZM732.4 423.8L734.6 419.9L735.2 420.2L735 416.7L731.8 418.3L732.4 418.7L730.2 422.5ZM771.8 379.6L777.8 372.9L778.3 373.4L778.8 369.8L775.4 370.8L775.9 371.2L769.9 377.9ZM733.4 386.6L736.6 382.1L737.2 382.6L737.4 379L734 380.3L734.6 380.7L731.4 385.2ZM728.8 411.9L731.4 407.7L732 408L731.9 404.4L728.6 406L729.2 406.4L726.7 410.6ZM736.4 409.7L740.4 403.9L741 404.3L741.1 400.7L737.8 402.1L738.4 402.5L734.3 408.3ZM738.2 399.8L742.8 394L743.3 394.4L743.7 390.9L740.3 392L740.8 392.4L736.2 398.3ZM757.5 394.8L761.1 390.1L761.7 390.5L762 387L758.6 388.1L759.2 388.6L755.5 393.3ZM747.5 372.5L752.9 366L753.4 366.5L753.8 362.9L750.4 364L750.9 364.4L745.6 370.9ZM749.1 415.8L752.5 410.7L753.1 411.1L753.1 407.5L749.9 408.9L750.5 409.3L747.1 414.5Z"/><path fill="#c5407e" d="M582.8 263.7L578.1 259L578.6 258.5L575.1 257.7L575.9 261.2L576.4 260.7L581.1 265.4ZM562.3 275.6L558.3 271.5L558.8 271L555.4 270.2L556.1 273.7L556.6 273.2L560.6 277.3ZM572.5 293.2L568 289.1L568.5 288.6L565 287.9L565.9 291.4L566.4 290.8L570.9 295ZM581.4 293.8L575.8 288.7L576.2 288.2L572.7 287.6L573.7 291L574.2 290.5L579.8 295.6ZM603.7 229.5L600.3 225.8L600.8 225.3L597.4 224.4L598 227.9L598.5 227.4L602 231.1ZM593 222.5L590.2 219.9L590.7 219.4L587.2 218.8L588.1 222.2L588.6 221.7L591.4 224.3ZM621 230.1L618 226.4L618.5 226L615.2 224.9L615.6 228.4L616.1 228L619.2 231.7ZM591.7 277.5L587.9 274L588.4 273.5L584.9 272.9L585.8 276.3L586.3 275.8L590.1 279.3ZM564.3 230.6L562.4 228.9L562.9 228.4L559.4 227.8L560.4 231.2L560.8 230.7L562.7 232.4ZM595.8 252.7L592.7 249.2L593.2 248.7L589.8 247.8L590.4 251.3L590.9 250.8L594 254.3ZM598 262.7L596.1 260.9L596.6 260.4L593.1 259.7L594 263.1L594.4 262.6L596.4 264.4ZM568.7 216.8L567.5 215.7L568 215.1L564.6 214.6L565.3 217.9L565.8 217.4L567.1 218.6ZM569.8 239.9L566.2 236.3L566.7 235.8L563.2 235L564 238.5L564.5 238L568.2 241.6ZM571.8 249.2L567.7 245.2L568.2 244.7L564.8 243.9L565.5 247.3L566 246.8L570 250.9ZM608 242.2L604.3 238L604.9 237.5L601.5 236.5L602 240L602.5 239.6L606.2 243.8ZM593.9 269.5L590 265.8L590.5 265.3L587 264.7L587.9 268.1L588.4 267.6L592.3 271.2ZM592.9 280L588.9 276.1L589.4 275.6L585.9 274.9L586.7 278.3L587.2 277.8L591.2 281.7ZM601.9 248.8L599.6 246.2L600.2 245.7L596.7 244.7L597.3 248.3L597.9 247.8L600.2 250.4ZM558 231.1L554.9 228.4L555.3 227.9L551.8 227.4L552.8 230.8L553.3 230.3L556.5 233ZM618.4 249.7L615 245.9L615.5 245.5L612.1 244.5L612.7 248L613.2 247.6L616.7 251.3ZM602.4 294L597.5 289.5L598 289L594.5 288.3L595.4 291.7L595.9 291.2L600.7 295.8ZM599.4 274.3L594.4 269.3L594.9 268.8L591.5 268L592.2 271.5L592.7 271L597.7 276ZM613.4 257L610.4 254.3L610.9 253.7L607.4 253.1L608.3 256.5L608.8 256L611.8 258.8ZM606.8 262.8L603.3 259L603.9 258.5L600.4 257.6L601.1 261.1L601.6 260.6L605.1 264.4ZM571 236L568 233.6L568.5 233.1L565 232.6L566.1 236L566.5 235.5L569.5 237.9ZM564.6 325.2L559.3 320.1L559.8 319.6L556.3 318.8L557.1 322.3L557.6 321.8L562.9 327ZM600.5 266.5L598.2 264L598.7 263.5L595.3 262.6L595.9 266.1L596.4 265.6L598.7 268.1ZM587.7 272.3L582.7 267.5L583.2 267L579.7 266.3L580.6 269.8L581.1 269.3L586.1 274.1ZM594.2 260.6L590.1 256.2L590.7 255.8L587.2 254.9L587.9 258.3L588.4 257.9L592.4 262.2ZM606.6 287.9L603.1 284.2L603.7 283.7L600.2 282.8L600.9 286.3L601.4 285.8L604.9 289.5ZM616.4 243.3L614.7 241.4L615.3 240.9L611.9 239.9L612.4 243.4L612.9 243L614.6 244.9ZM592.1 276.1L587.3 271.1L587.8 270.6L584.3 269.8L585.1 273.3L585.6 272.8L590.4 277.7ZM597.6 264.7L593.3 260L593.8 259.6L590.4 258.7L591 262.1L591.5 261.7L595.8 266.3ZM596.4 251.3L592 246.7L592.5 246.2L589.1 245.4L589.8 248.9L590.3 248.4L594.7 253ZM587.5 235.5L585.1 233.4L585.5 232.9L582 232.4L583 235.8L583.5 235.3L585.9 237.3ZM593.9 232.4L592.4 231.2L592.9 230.6L589.4 230.1L590.4 233.5L590.8 233L592.3 234.2ZM604.6 275.6L601.3 272.4L601.7 271.9L598.3 271.2L599.1 274.7L599.6 274.1L602.9 277.3ZM584.3 291.7L580.3 287.6L580.8 287.1L577.3 286.3L578.1 289.8L578.6 289.3L582.6 293.4ZM558.5 254.1L554.1 250.6L554.5 250.1L551 249.7L552.2 253.1L552.6 252.5L557 256ZM590.4 293L587.1 289.4L587.6 288.9L584.2 288L584.8 291.5L585.3 291L588.6 294.6ZM570.8 248.4L567.1 245.2L567.5 244.7L564 244.1L565 247.5L565.5 247L569.2 250.2ZM750.9 449.3L752.6 443L753.3 443.2L752.2 439.8L749.5 442.2L750.2 442.4L748.5 448.6ZM741.7 381.4L744.9 377.9L745.4 378.4L746 374.8L742.5 375.8L743.1 376.2L739.9 379.7ZM732.4 415.4L736.1 409.7L736.7 410.1L736.7 406.5L733.4 408L734 408.3L730.3 414.1ZM726.7 402.1L730.3 396.6L730.9 397L730.9 393.4L727.7 394.8L728.2 395.2L724.6 400.7ZM757.4 393.7L763.9 386.8L764.4 387.2L765 383.7L761.5 384.6L762.1 385L755.6 392ZM724.3 396.2L728.9 389.6L729.5 390L729.6 386.4L726.3 387.8L726.9 388.2L722.2 394.8ZM777.1 402.3L782.8 396.6L783.3 397.1L784 393.6L780.5 394.4L781 394.9L775.3 400.5ZM731.2 406.5L736.8 398.9L737.4 399.3L737.6 395.8L734.3 397L734.8 397.4L729.2 405ZM747.9 431.6L750.7 425.6L751.4 425.9L750.9 422.3L747.8 424.2L748.5 424.5L745.6 430.5ZM727.2 382.1L731.7 376.6L732.3 377L732.7 373.5L729.3 374.5L729.8 375L725.3 380.5ZM748.2 436.8L750.3 432.1L750.9 432.4L750.4 428.8L747.4 430.8L748 431.1L746 435.8ZM730.2 446.9L731.3 443.3L731.9 443.5L730.9 440.1L728.2 442.4L728.9 442.6L727.8 446.2ZM754.8 428.6L758.3 421.6L758.9 421.9L758.5 418.4L755.4 420.2L756.1 420.5L752.6 427.5ZM777.7 422.4L780 418.8L780.6 419.2L780.6 415.6L777.3 417.1L777.9 417.5L775.6 421ZM756.1 401.8L762 395L762.5 395.5L763 392L759.6 392.9L760.1 393.4L754.2 400.2Z"/><path fill="#cc4778" d="M556.8 315.3L551.9 311.2L552.3 310.7L548.8 310.3L549.9 313.6L550.4 313.1L555.3 317.2ZM616 255L614.4 253.1L614.9 252.6L611.5 251.6L612 255.1L612.5 254.7L614.2 256.6ZM560.5 323.5L556 318.9L556.5 318.4L553 317.6L553.8 321.1L554.3 320.6L558.8 325.2ZM598.5 302.8L595.1 299.2L595.6 298.8L592.2 297.9L592.9 301.4L593.4 300.9L596.8 304.4ZM582 279.6L577.3 275.6L577.8 275L574.3 274.5L575.3 277.9L575.8 277.4L580.4 281.4ZM574.7 314.6L569.4 310.1L569.8 309.5L566.3 309L567.4 312.4L567.8 311.9L573.1 316.4ZM588.3 296L585.7 293.4L586.2 292.9L582.8 292.1L583.5 295.6L584 295.1L586.5 297.6ZM561.9 310.6L557.2 306.5L557.7 306L554.2 305.4L555.2 308.8L555.6 308.3L560.3 312.4ZM559.1 287.1L556.5 284.5L557 284L553.5 283.2L554.3 286.6L554.8 286.1L557.4 288.8ZM573.5 338.7L568.6 334.1L569.1 333.6L565.6 332.9L566.5 336.3L567 335.8L571.8 340.5ZM564.6 299.5L559.1 295.1L559.6 294.5L556 294.1L557.2 297.5L557.6 296.9L563 301.4ZM586.8 266.1L583.9 263L584.4 262.5L581 261.6L581.6 265.1L582.1 264.6L585 267.7ZM600 302.3L597.7 299.7L598.2 299.2L594.8 298.2L595.4 301.7L595.9 301.3L598.2 303.9ZM595.9 306.5L592.8 303L593.3 302.5L589.9 301.6L590.5 305.1L591 304.6L594.1 308.1ZM572.2 319.6L566.1 314L566.5 313.5L563 312.8L564 316.3L564.4 315.8L570.6 321.4ZM605.6 336.8L598.7 330.4L599.2 329.9L595.7 329.2L596.6 332.6L597.1 332.1L603.9 338.6ZM568.4 286L563.8 282L564.3 281.5L560.7 280.9L561.8 284.3L562.2 283.8L566.8 287.8ZM582.1 280.7L576.5 275.7L577 275.2L573.5 274.6L574.4 278L574.9 277.5L580.4 282.5ZM596.4 281.5L593.6 278.6L594.1 278.1L590.6 277.3L591.4 280.8L591.9 280.3L594.7 283.2ZM570.7 325.3L563.7 319.5L564.2 319L560.6 318.6L561.8 321.9L562.2 321.4L569.2 327.1ZM598.9 314.5L595 310.5L595.5 310L592 309.2L592.7 312.7L593.2 312.2L597.2 316.2ZM596.5 328.5L592.4 324.6L592.9 324.1L589.4 323.5L590.3 326.9L590.8 326.4L594.9 330.2ZM578.9 330.8L575.5 327.7L576 327.2L572.5 326.5L573.4 330L573.9 329.5L577.3 332.6ZM583.3 254.5L581.1 252.7L581.6 252.1L578.1 251.6L579.1 255L579.5 254.5L581.7 256.3ZM556.5 286.9L553.3 284.2L553.8 283.7L550.3 283.2L551.4 286.6L551.8 286.1L555 288.7ZM593.3 350.6L588.2 346L588.7 345.5L585.2 344.9L586.1 348.3L586.6 347.8L591.7 352.4ZM563.6 258.7L558.9 254.2L559.4 253.7L555.9 253L556.7 256.5L557.2 256L561.9 260.5ZM582.4 329.3L578.4 325.3L578.9 324.8L575.4 324L576.2 327.4L576.7 326.9L580.6 331ZM580.9 321.9L576.4 317.9L576.9 317.4L573.4 316.8L574.3 320.2L574.8 319.7L579.3 323.7ZM772.2 420.3L775.1 416L775.7 416.3L775.8 412.8L772.5 414.2L773.1 414.6L770.2 418.9ZM763 416.4L767.9 409.6L768.5 410L768.6 406.4L765.3 407.7L765.9 408.1L761 415ZM727.2 455L728 451.2L728.7 451.3L727.3 448L724.8 450.5L725.5 450.7L724.8 454.5ZM765.2 420.5L769.2 413.8L769.8 414.1L769.7 410.5L766.5 412.1L767.1 412.5L763.1 419.2ZM771 445.9L772.4 441.9L773 442.1L772.1 438.7L769.3 440.9L770 441.1L768.6 445.1ZM751.3 465.6L751.9 461.9L752.6 462L751 458.7L748.7 461.4L749.4 461.5L748.9 465.3ZM749.5 426.7L753.3 419.7L753.9 420L753.6 416.5L750.4 418.2L751.1 418.5L747.3 425.5ZM739.4 433.2L742.2 426.5L742.9 426.8L742.3 423.3L739.3 425.3L739.9 425.5L737.1 432.2ZM752.1 413.5L755.3 408.7L755.9 409.1L756 405.5L752.7 406.9L753.2 407.3L750 412ZM775.7 417.9L779.1 412.9L779.6 413.3L779.7 409.8L776.4 411.1L777 411.5L773.6 416.5ZM743.2 462L743.9 457.9L744.6 458L743.1 454.7L740.7 457.4L741.4 457.5L740.8 461.6ZM741.1 457.6L741.9 453.7L742.6 453.8L741.4 450.5L738.8 453L739.5 453.1L738.6 457.1ZM750.7 410L753.6 406L754.2 406.4L754.3 402.8L751 404.1L751.6 404.5L748.7 408.5ZM732.5 463.1L733.2 458.1L733.9 458.2L732.5 455L730.1 457.7L730.8 457.8L730 462.7ZM744 447.4L745.5 441.9L746.1 442.1L745.1 438.7L742.4 441.1L743.1 441.3L741.6 446.8ZM756 451L756.8 448.1L757.4 448.3L756.4 444.9L753.7 447.3L754.4 447.5L753.6 450.3ZM756 445L758.1 439.2L758.7 439.4L757.9 435.9L755.1 438.1L755.7 438.3L753.6 444.1ZM755.6 444.3L757.8 437.7L758.5 437.9L757.5 434.4L754.8 436.7L755.4 436.9L753.2 443.6ZM762.2 412.9L765 408.9L765.5 409.3L765.6 405.8L762.3 407.1L762.9 407.5L760.2 411.5ZM773.3 411.5L776.7 406.3L777.3 406.7L777.3 403.2L774.1 404.6L774.6 405L771.2 410.2Z"/><path fill="#d14e72" d="M554.1 373.2L550.6 369.7L551.1 369.2L547.7 368.4L548.4 371.9L548.9 371.4L552.4 374.9ZM567.6 346.6L561.9 340.7L562.4 340.2L558.9 339.4L559.7 342.9L560.2 342.4L565.9 348.3ZM588.7 405.6L586.5 402.1L587.1 401.7L583.9 400.1L583.9 403.7L584.5 403.3L586.7 406.9ZM562.6 389.2L558.1 384.5L558.6 384L555.1 383.2L555.8 386.6L556.3 386.2L560.9 390.9ZM600.3 400.4L597.2 396.2L597.8 395.8L594.5 394.5L594.7 398L595.3 397.6L598.4 401.8ZM578.5 362.9L574 359L574.5 358.4L571 357.9L572 361.3L572.4 360.8L576.9 364.7ZM608.3 378L602.9 372.8L603.4 372.3L599.9 371.6L600.8 375.1L601.3 374.6L606.6 379.7ZM561.1 363.3L557.7 360.6L558.1 360L554.6 359.7L555.8 363L556.2 362.5L559.6 365.2ZM575.4 359.6L570.4 354.8L570.8 354.3L567.3 353.7L568.2 357.1L568.7 356.6L573.8 361.3ZM552.1 330.6L545.7 325.3L546.1 324.8L542.6 324.4L543.7 327.7L544.2 327.2L550.6 332.4ZM560.7 321.6L557.5 318.9L558 318.4L554.5 317.8L555.5 321.2L556 320.7L559.1 323.5ZM593.2 387.2L590.3 384.3L590.8 383.9L587.3 383.1L588.1 386.5L588.6 386L591.5 388.9ZM584.7 333.3L579 327L579.6 326.6L576.1 325.6L576.8 329.1L577.3 328.6L583 334.9ZM561.8 311L557.8 307.1L558.3 306.6L554.8 305.9L555.6 309.3L556.1 308.8L560.1 312.7ZM587.5 311.5L581.3 305.8L581.8 305.3L578.3 304.7L579.3 308.1L579.7 307.6L585.9 313.2ZM598.7 355.4L593.1 349.4L593.6 348.9L590.1 348.1L590.8 351.5L591.3 351.1L597 357ZM567.2 331.7L561.7 326.9L562.1 326.4L558.6 325.9L559.6 329.3L560.1 328.8L565.7 333.5ZM597.3 294L594.5 291.2L595 290.7L591.5 290L592.3 293.4L592.8 292.9L595.6 295.7ZM573.7 394.3L569.5 388.8L570 388.3L566.7 387.1L567 390.7L567.5 390.2L571.8 395.7ZM578 389.3L575.1 386.3L575.6 385.8L572.2 384.9L572.9 388.4L573.4 387.9L576.2 390.9ZM568.8 369.8L565.7 366.5L566.2 366L562.8 365.1L563.4 368.6L563.9 368.1L567.1 371.5ZM568.8 298.7L563.8 294.3L564.2 293.8L560.7 293.2L561.7 296.6L562.2 296.1L567.2 300.5ZM595.7 329.4L590.4 323.8L590.9 323.3L587.5 322.4L588.2 325.9L588.7 325.4L594 331ZM563.3 395.9L560.5 392.5L561 392.1L557.6 391L558.1 394.5L558.6 394L561.5 397.4ZM578.3 377.1L574.4 373.7L574.9 373.2L571.4 372.6L572.4 376L572.9 375.5L576.7 378.9ZM552.8 322.9L546.1 317.2L546.6 316.7L543.1 316.2L544.1 319.6L544.6 319L551.2 324.7ZM594.4 331.6L590.8 327.9L591.3 327.4L587.9 326.6L588.6 330L589.1 329.6L592.6 333.3ZM578.7 328.6L574.9 325.4L575.4 324.9L571.9 324.4L572.9 327.8L573.4 327.3L577.2 330.5ZM603.4 392.2L598.8 386.1L599.4 385.7L596.1 384.4L596.4 388L596.9 387.6L601.5 393.7ZM599.3 376.2L594.6 371.5L595.1 371L591.6 370.3L592.4 373.7L592.9 373.2L597.6 377.9ZM561.9 333.4L556.1 328.6L556.5 328L553 327.6L554.1 331L554.6 330.4L560.3 335.2ZM589.3 332.7L586.3 329.7L586.8 329.2L583.4 328.5L584.2 331.9L584.7 331.4L587.6 334.4ZM745.6 473.9L745.9 470.3L746.6 470.3L744.9 467.2L742.7 470L743.4 470.1L743.1 473.7ZM743.6 472.3L744 468.8L744.7 468.8L743 465.7L740.8 468.5L741.5 468.5L741.1 472.1ZM733.5 459.7L733.9 457L734.6 457.1L733.2 453.8L730.7 456.5L731.4 456.6L731 459.3ZM755.3 461L756.1 456.6L756.8 456.8L755.4 453.5L752.9 456.1L753.6 456.2L752.8 460.6ZM746.1 457L746.6 454.4L747.3 454.5L746 451.2L743.5 453.8L744.2 453.9L743.6 456.6ZM738.7 476.7L739 474.1L739.7 474.2L738 471L735.8 473.9L736.5 473.9L736.3 476.5ZM738.6 458.5L739.7 452.5L740.3 452.6L738.9 449.3L736.5 452L737.2 452.1L736.1 458.1ZM741.2 448.1L743.3 441.3L743.9 441.5L743 438.1L740.2 440.4L740.9 440.6L738.8 447.4ZM760.3 476L760.5 474L761.2 474L759.5 470.9L757.3 473.7L758 473.7L757.8 475.8ZM735 474.8L735.3 471.7L736 471.7L734.3 468.6L732.1 471.4L732.8 471.4L732.5 474.6ZM747.7 444.5L748.6 441.5L749.3 441.7L748.3 438.2L745.5 440.5L746.2 440.7L745.3 443.8ZM748 461L748.4 458.5L749.1 458.6L747.7 455.3L745.3 457.9L746 458L745.5 460.5ZM730.1 473.6L730.4 469.6L731.1 469.7L729.4 466.5L727.2 469.4L727.9 469.4L727.6 473.4ZM767.9 442.8L770.1 437L770.7 437.3L769.9 433.8L767.1 435.9L767.7 436.2L765.5 441.9ZM757 457.3L758.4 451.1L759.1 451.3L757.9 447.9L755.3 450.4L756 450.6L754.6 456.8ZM734.6 442.7L735.8 439.2L736.5 439.4L735.6 435.9L732.8 438.1L733.4 438.4L732.2 441.9ZM766.9 433.6L769.2 428.3L769.9 428.6L769.3 425.1L766.3 427L767 427.3L764.6 432.5ZM728 450.7L729.2 446.4L729.8 446.6L728.8 443.2L726.1 445.6L726.7 445.7L725.6 450ZM762.8 452.7L764.3 447.5L764.9 447.7L763.9 444.3L761.2 446.7L761.9 446.9L760.4 452ZM751.6 425.2L754.9 418.6L755.5 418.9L755.1 415.4L752 417.2L752.6 417.5L749.4 424.1ZM735.5 430.1L738.2 423.5L738.9 423.8L738.3 420.3L735.3 422.3L735.9 422.6L733.2 429.1ZM762.2 466.3L762.6 464L763.3 464.1L761.7 460.9L759.4 463.6L760.1 463.7L759.8 466ZM728.9 463.1L729.5 459.3L730.2 459.4L728.7 456.1L726.3 458.8L727 458.9L726.4 462.7ZM728.2 482.7L728.5 478.5L729.2 478.6L727.5 475.5L725.3 478.3L726 478.3L725.7 482.5ZM746.9 468.7L747.3 465L748 465.1L746.4 461.9L744.1 464.7L744.8 464.8L744.4 468.4ZM743.7 470.5L744 467.8L744.7 467.8L743 464.7L740.8 467.5L741.5 467.6L741.3 470.3ZM762.6 473.8L762.9 470.7L763.6 470.8L761.9 467.6L759.7 470.5L760.4 470.5L760.1 473.5ZM755.9 436L759.1 428.9L759.8 429.2L759.2 425.7L756.2 427.6L756.8 427.9L753.6 435Z"/><path fill="#d6566d" d="M581.4 329.3L575.3 323.8L575.7 323.3L572.2 322.7L573.2 326.1L573.7 325.6L579.8 331.1ZM611.2 388.9L606.6 383.7L607.2 383.2L603.7 382.2L604.3 385.7L604.8 385.2L609.4 390.4ZM562.4 367.4L558.8 363.7L559.3 363.2L555.8 362.5L556.6 365.9L557.1 365.4L560.7 369.1ZM618.7 420.9L617 417.4L617.6 417.1L614.6 415.3L614.2 418.8L614.8 418.5L616.6 422ZM601.7 353.9L598.2 350.8L598.7 350.3L595.2 349.7L596.2 353.1L596.6 352.6L600.1 355.7ZM608.7 402L606.3 398.4L606.9 398L603.7 396.5L603.7 400L604.3 399.7L606.6 403.3ZM573.3 386.8L568.2 380.8L568.7 380.3L565.3 379.3L565.9 382.8L566.4 382.4L571.5 388.3ZM590.1 395.8L587 392.1L587.6 391.7L584.2 390.6L584.6 394.1L585.2 393.6L588.3 397.3ZM563.1 376.4L556.4 370L556.9 369.5L553.4 368.7L554.2 372.2L554.7 371.7L561.4 378.2ZM588 345.6L583.8 341.4L584.3 340.9L580.8 340.1L581.6 343.6L582.1 343.1L586.3 347.3ZM588.3 348.4L582.9 342.9L583.4 342.4L580 341.6L580.7 345L581.2 344.5L586.6 350.1ZM576.8 396L572.3 390.5L572.9 390L569.5 388.9L569.9 392.4L570.4 392L574.9 397.5ZM573.9 378.3L568.8 373.7L569.3 373.2L565.8 372.6L566.7 376L567.2 375.5L572.3 380.1ZM602.6 393.8L599 388.9L599.5 388.5L596.2 387.3L596.5 390.8L597 390.4L600.7 395.2ZM579.2 415.1L575.7 408.5L576.3 408.2L573.2 406.5L572.9 410L573.5 409.7L577.1 416.2ZM594.2 394.4L590 389.2L590.5 388.7L587.1 387.6L587.6 391.1L588.1 390.7L592.3 395.9ZM573.3 411L569.9 405.4L570.5 405L567.3 403.5L567.2 407.1L567.8 406.7L571.3 412.3ZM565.8 364L562.2 361L562.6 360.5L559.1 360L560.2 363.4L560.7 362.9L564.3 365.8ZM610.7 393.5L608.2 390.2L608.8 389.8L605.5 388.5L605.7 392L606.3 391.6L608.7 394.9ZM600.9 405.6L596.5 398.8L597.1 398.5L593.8 397L593.9 400.5L594.5 400.2L598.9 406.9ZM615.7 415.5L612.8 410.3L613.4 409.9L610.3 408.2L610.1 411.8L610.7 411.4L613.6 416.6ZM603.1 340.1L597.9 334L598.4 333.5L595 332.5L595.5 336L596 335.6L601.3 341.6ZM610.9 371.5L606.2 367.1L606.6 366.6L603.2 365.9L604.1 369.4L604.5 368.8L609.3 373.3ZM581.1 394.5L578.1 390.5L578.7 390.1L575.3 388.8L575.6 392.4L576.2 391.9L579.2 395.9ZM554.9 421.2L553.1 418.3L553.7 417.9L550.6 416.3L550.5 419.9L551.1 419.5L552.8 422.4ZM600.6 435.2L598.1 428.5L598.7 428.2L595.9 426.1L595.2 429.6L595.8 429.3L598.4 436ZM568.8 344.4L562.7 339L563.1 338.4L559.6 337.9L560.6 341.3L561.1 340.8L567.2 346.2ZM607.6 391.2L603.1 384.8L603.7 384.4L600.4 383.1L600.6 386.6L601.2 386.2L605.7 392.5ZM568.9 359.9L561.9 353.5L562.4 352.9L558.9 352.3L559.8 355.7L560.3 355.2L567.3 361.7ZM575.3 372.7L569.6 368L570.1 367.4L566.6 366.9L567.6 370.3L568.1 369.8L573.7 374.6ZM604.4 401.4L601.6 397.8L602.2 397.4L598.9 396.2L599.2 399.7L599.7 399.3L602.5 402.9ZM600.1 366.7L594.5 360.5L595 360L591.6 359.1L592.2 362.6L592.7 362.1L598.3 368.3ZM617.4 407.8L614.2 402.9L614.8 402.5L611.6 401L611.6 404.6L612.2 404.2L615.4 409.1ZM558.8 361.6L555.6 358.6L556 358L552.5 357.4L553.4 360.8L553.9 360.3L557.2 363.4ZM608.5 392L605.6 388.1L606.2 387.7L602.8 386.4L603.1 390L603.7 389.6L606.6 393.5ZM740.1 474.6L740.4 471.6L741.1 471.7L739.4 468.5L737.2 471.3L737.9 471.4L737.6 474.4ZM730 464.7L730.7 460.1L731.4 460.2L729.9 457L727.5 459.7L728.2 459.8L727.6 464.3ZM749.5 474L749.9 469.3L750.6 469.3L748.9 466.2L746.7 469L747.4 469.1L747 473.8ZM754 454.8L755.1 450.2L755.8 450.3L754.6 447L752 449.4L752.7 449.6L751.6 454.2ZM728.5 483.9L728.8 479.8L729.5 479.8L727.8 476.7L725.6 479.5L726.3 479.6L726 483.7ZM731.9 477L732.3 472.7L733 472.7L731.3 469.6L729.1 472.4L729.8 472.5L729.4 476.8ZM736.8 482.6L737.1 479.2L737.8 479.3L736.1 476.1L733.9 479L734.6 479L734.3 482.4ZM756.8 483.3L757.1 480.8L757.8 480.8L756.1 477.7L753.9 480.5L754.6 480.5L754.4 483.1ZM743.2 482.5L743.4 480.4L744.1 480.5L742.4 477.3L740.2 480.1L740.9 480.2L740.7 482.2ZM755.1 484.1L755.3 482.2L756 482.3L754.4 479.1L752.1 481.9L752.8 482L752.7 483.9ZM761.7 472L762 469.2L762.7 469.2L761 466.1L758.8 468.9L759.5 468.9L759.3 471.8ZM756.5 480.1L756.8 476.3L757.5 476.4L755.8 473.2L753.6 476L754.3 476.1L754 479.9ZM744.1 481.6L744.3 479.2L745 479.3L743.3 476.1L741.1 478.9L741.8 479L741.6 481.4ZM728.8 482L729 478.7L729.7 478.8L728 475.7L725.8 478.5L726.5 478.6L726.3 481.8ZM734.1 467.7L734.7 462.7L735.4 462.8L733.8 459.6L731.5 462.3L732.2 462.4L731.6 467.4Z"/><path fill="#dc5d67" d="M567.4 425.9L564.8 421.2L565.5 420.9L562.4 419.1L562.1 422.6L562.7 422.3L565.2 427ZM578.4 444.4L577.2 440.7L577.9 440.5L575.1 438.3L574.3 441.7L574.9 441.5L576.2 445.2ZM609.8 434.6L608.8 431.9L609.5 431.6L606.7 429.4L605.9 432.9L606.6 432.7L607.5 435.4ZM570.7 406.9L568.1 402.9L568.7 402.5L565.5 401L565.5 404.6L566.1 404.2L568.7 408.2ZM565.3 416.2L561.6 409.7L562.2 409.3L559.1 407.6L558.9 411.2L559.5 410.8L563.2 417.4ZM607.5 413.5L605.1 409.3L605.7 408.9L602.6 407.3L602.4 410.8L603 410.5L605.4 414.7ZM589.4 394.6L584.8 388.2L585.3 387.8L582 386.5L582.3 390.1L582.8 389.6L587.5 396ZM615.9 418.3L613.2 413.3L613.9 413L610.8 411.2L610.5 414.7L611.1 414.4L613.8 419.4ZM605.2 439.3L603.8 435.2L604.4 435L601.6 432.8L600.9 436.2L601.5 436L603 440.1ZM563.6 453.3L562.1 447.2L562.7 447L560.2 444.6L559 447.9L559.7 447.8L561.3 453.9ZM591.3 382.8L588.4 379.5L588.9 379L585.5 378L586.1 381.5L586.6 381.1L589.5 384.4ZM564.1 433.4L561.8 428.1L562.4 427.8L559.5 425.8L558.9 429.3L559.6 429.1L561.9 434.3ZM599.8 455.7L598.8 451.3L599.5 451.1L597 448.6L595.8 452L596.5 451.8L597.5 456.2ZM602.9 392.7L598.4 387.5L598.9 387.1L595.5 386.1L596 389.6L596.6 389.1L601.1 394.3ZM579.4 385.7L574.1 380.5L574.6 380L571.1 379.3L571.9 382.7L572.4 382.2L577.8 387.4ZM595.6 431.9L592.9 425.3L593.5 425L590.6 423L590 426.5L590.6 426.2L593.4 432.8ZM563.1 432.5L561.4 428.6L562.1 428.3L559.1 426.3L558.6 429.8L559.2 429.5L560.8 433.5ZM570 466.1L569.6 463.2L570.3 463.1L568 460.3L566.5 463.6L567.2 463.5L567.6 466.4ZM600.6 377.9L594.4 372.3L594.9 371.8L591.4 371.2L592.3 374.6L592.8 374.1L599 379.7ZM614 386.6L610.2 381.5L610.7 381.1L607.4 379.8L607.7 383.4L608.3 383L612.1 388.1ZM584.1 393.8L581.7 391L582.2 390.5L578.8 389.5L579.4 393L579.9 392.6L582.3 395.3ZM567.8 450.9L566.6 446.3L567.2 446.1L564.6 443.7L563.6 447L564.2 446.9L565.4 451.5ZM601.6 465.1L600.8 459.5L601.5 459.4L599.1 456.7L597.7 460L598.4 459.9L599.2 465.4ZM572 393.1L566 386.6L566.5 386.1L563.1 385.2L563.7 388.7L564.2 388.2L570.2 394.7ZM559.5 371.6L555.5 368.4L555.9 367.8L552.4 367.4L553.5 370.8L554 370.3L558 373.5ZM610.7 422.9L607.5 416.5L608.1 416.2L605.1 414.3L604.7 417.9L605.3 417.6L608.5 424ZM616.2 418.1L613.3 412.4L613.9 412.1L610.9 410.3L610.6 413.9L611.2 413.5L614.1 419.2ZM554.2 401.4L550 395.8L550.6 395.4L547.3 394.1L547.5 397.6L548.1 397.2L552.2 402.9ZM561.7 461.4L561.1 458.1L561.8 458L559.4 455.4L558.1 458.7L558.7 458.6L559.4 461.9ZM580 378.9L575.3 374L575.8 373.5L572.4 372.6L573.1 376.1L573.6 375.6L578.2 380.6ZM569.6 458.3L568.9 454.6L569.6 454.4L567.1 451.8L565.8 455.1L566.5 455L567.2 458.7ZM610.4 484L610.2 482.2L610.9 482.2L608.8 479.4L607.1 482.5L607.8 482.5L608 484.3ZM593.5 427.5L591.7 423.7L592.3 423.4L589.3 421.6L588.9 425.1L589.5 424.8L591.4 428.5ZM561.2 440L559.7 435.6L560.4 435.4L557.6 433.1L556.8 436.6L557.4 436.4L558.9 440.7ZM598.3 434.5L596.7 430.2L597.3 430L594.5 427.8L593.7 431.3L594.4 431.1L596 435.3ZM585.8 434.6L584.6 431.4L585.2 431.1L582.4 429L581.7 432.4L582.3 432.2L583.5 435.5ZM574 380.9L570.4 377.7L570.8 377.2L567.3 376.6L568.4 380L568.8 379.5L572.4 382.7ZM613.8 428.6L611.7 423.5L612.3 423.2L609.4 421.2L608.8 424.7L609.4 424.4L611.6 429.5ZM604 469.9L603.5 465L604.2 465L602 462.2L600.4 465.4L601.1 465.3L601.6 470.2ZM566.6 393.1L563.1 388.9L563.7 388.4L560.3 387.3L560.7 390.8L561.3 390.4L564.7 394.7ZM614.9 471.2L614.7 468.3L615.4 468.2L613.2 465.4L611.6 468.6L612.3 468.5L612.6 471.4Z"/><path fill="#e16462" d="M578 436L576.8 433.2L577.5 432.9L574.6 430.9L574 434.4L574.6 434.1L575.8 436.9ZM617 410.6L613 404.3L613.6 403.9L610.4 402.4L610.4 405.9L611 405.6L615 411.9ZM558.6 453.3L557.1 447.2L557.8 447.1L555.2 444.6L554.1 448L554.7 447.8L556.2 453.9ZM563 476.7L562.8 474.7L563.5 474.6L561.3 471.8L559.7 475L560.4 474.9L560.6 477ZM586.7 448.6L585 442.7L585.7 442.5L583.1 440.2L582 443.6L582.7 443.4L584.3 449.2ZM595.3 435.6L593.6 431.1L594.2 430.9L591.4 428.8L590.7 432.2L591.4 432L593.1 436.5ZM610.7 479.4L610.6 477.6L611.3 477.5L609.1 474.7L607.5 477.8L608.2 477.8L608.4 479.6ZM605.8 429.2L603.1 422.5L603.8 422.2L600.9 420.1L600.2 423.6L600.9 423.3L603.6 430.1ZM587.8 454.5L587 450.9L587.7 450.7L585.1 448.2L583.9 451.6L584.6 451.4L585.4 455ZM596.7 470.2L596.4 467.2L597.1 467.1L594.9 464.4L593.3 467.5L594 467.5L594.4 470.5ZM575.4 451.1L574.1 446.1L574.8 445.9L572.2 443.5L571.1 446.9L571.8 446.7L573.1 451.7ZM618.5 410.2L615.4 404.9L616 404.6L612.8 402.9L612.7 406.5L613.3 406.1L616.5 411.4ZM614.7 466.1L614.4 463.2L615 463.1L612.8 460.4L611.3 463.6L612 463.5L612.3 466.4ZM614.7 466.5L614.3 463L615 462.9L612.8 460.1L611.2 463.3L611.9 463.3L612.4 466.8ZM558.5 456L557.8 453.2L558.5 453L555.9 450.6L554.8 453.9L555.5 453.8L556.1 456.5ZM574.3 434.2L572.3 429.3L572.9 429L570 426.9L569.4 430.4L570.1 430.2L572.1 435.1ZM556 435.1L554.5 431.2L555.2 430.9L552.3 428.8L551.6 432.3L552.3 432.1L553.8 435.9ZM571.4 461.6L570.8 458.4L571.5 458.3L569.1 455.7L567.8 459L568.4 458.8L569 462ZM571.5 412.7L567.8 406.2L568.5 405.8L565.3 404.2L565.1 407.7L565.7 407.4L569.4 413.9ZM598.8 450.7L597.9 446.8L598.5 446.7L596 444.2L594.8 447.5L595.5 447.4L596.4 451.3ZM557.3 444.1L555.4 438.1L556.1 437.9L553.4 435.6L552.5 439L553.1 438.8L555 444.8ZM586.6 445.1L585.6 441.7L586.2 441.5L583.5 439.2L582.6 442.6L583.3 442.4L584.3 445.8ZM567.2 469.9L566.8 466.4L567.5 466.3L565.3 463.5L563.7 466.7L564.4 466.6L564.8 470.1ZM573.4 425L572.1 422.2L572.7 422L569.8 420L569.3 423.5L569.9 423.2L571.2 426ZM611.2 468.6L611 466.8L611.7 466.7L609.5 464.1L608 467.2L608.7 467.1L608.9 468.8ZM560.7 489.7L560.4 486.7L561.1 486.7L558.9 483.9L557.3 487L558 487L558.3 490ZM557.4 454.6L556.6 451.2L557.3 451L554.8 448.5L553.6 451.8L554.3 451.7L555 455.1ZM564.8 489.1L564.6 486.7L565.3 486.6L563.1 483.8L561.5 487L562.2 486.9L562.4 489.3ZM613.9 458.6L613.3 455.3L614 455.2L611.6 452.5L610.2 455.8L610.9 455.7L611.5 459ZM608.4 485.4L608.2 483.2L608.9 483.1L606.7 480.3L605.1 483.5L605.8 483.4L606 485.6ZM599.5 446.2L598.8 443.7L599.5 443.5L596.8 441.2L595.8 444.6L596.5 444.4L597.3 446.9ZM596.1 450.9L594.9 446.3L595.6 446.1L593 443.7L591.9 447.1L592.6 446.9L593.8 451.5Z"/><path fill="#e56c5c" d="M611.1 459.7L610.6 457L611.3 456.9L608.9 454.3L607.6 457.5L608.3 457.4L608.8 460.2ZM584.4 483.3L584 479.1L584.7 479L582.5 476.2L580.9 479.4L581.6 479.3L582 483.5ZM558.3 476.7L557.9 473.1L558.6 473L556.4 470.2L554.8 473.4L555.5 473.3L555.9 477ZM570.9 451.1L569.7 446.5L570.4 446.3L567.8 443.9L566.7 447.3L567.4 447.1L568.6 451.7ZM585.5 468.2L584.9 463.7L585.6 463.7L583.3 460.9L581.8 464.1L582.5 464L583.1 468.5ZM597.9 461.6L597.2 457.9L597.9 457.7L595.5 455.1L594.1 458.4L594.8 458.3L595.5 462ZM602.7 474.8L602.2 469.8L602.9 469.7L600.7 466.9L599.1 470.1L599.8 470L600.3 475ZM590.2 484.5L590.1 482.8L590.8 482.7L588.6 480.1L587 483.1L587.7 483L587.8 484.7ZM582.1 444.4L580.4 438.5L581 438.3L578.4 435.9L577.4 439.3L578.1 439.1L579.8 445.1ZM558.1 479.1L557.9 477L558.6 477L556.4 474.2L554.8 477.3L555.5 477.3L555.7 479.3ZM603.4 463.9L602.8 460.6L603.5 460.5L601.2 457.8L599.8 461.1L600.5 460.9L601 464.2ZM617.9 470.6L617.7 468.7L618.4 468.7L616.2 465.9L614.6 469L615.3 469L615.5 470.8ZM613 466.7L612.4 461.4L613 461.3L610.8 458.5L609.3 461.7L610 461.7L610.6 467ZM567.6 482.9L567.4 481.2L568.1 481.1L565.9 478.4L564.3 481.5L565 481.4L565.2 483.2ZM609.7 469.1L609.5 467.4L610.2 467.3L608 464.6L606.4 467.7L607.1 467.6L607.3 469.4ZM574.5 479.6L574.1 475.9L574.8 475.9L572.6 473.1L571 476.2L571.7 476.2L572.1 479.9ZM610.8 486.9L610.7 485.1L611.4 485L609.2 482.3L607.6 485.4L608.3 485.3L608.4 487.1ZM614.3 450.4L613.5 447.2L614.2 447L611.6 444.6L610.5 448L611.2 447.8L612 451ZM618.7 450.6L617.3 444.7L618 444.6L615.4 442.1L614.3 445.5L615 445.3L616.4 451.2ZM588.1 458L587.7 455.7L588.3 455.5L585.9 453L584.6 456.3L585.3 456.1L585.8 458.5ZM620.3 464.2L620 462L620.7 462L618.4 459.2L616.9 462.5L617.6 462.4L617.9 464.5ZM621.9 473.5L621.5 469.6L622.2 469.5L620.1 466.7L618.5 469.9L619.2 469.8L619.5 473.6ZM611.3 487.3L611.2 485.6L611.9 485.6L609.7 483.1L608.1 485.9L608.8 485.9L608.9 487.5ZM621.9 484.9L621.5 480.9L622.2 480.8L620.1 478L618.5 481.2L619.1 481.1L619.5 485.2ZM620.5 488.7L620.3 486.1L621 486L618.9 483.2L617.2 486.4L617.9 486.3L618.2 489ZM557.1 445.4L556.2 442.7L556.9 442.5L554.1 440.3L553.3 443.7L553.9 443.5L554.9 446.2ZM597.7 475L597.3 470.4L598 470.4L595.8 467.6L594.2 470.7L594.9 470.7L595.3 475.2ZM616.4 470.6L615.9 465.3L616.6 465.3L614.5 462.5L612.8 465.6L613.5 465.6L614 470.8ZM620.2 439.6L618 433.6L618.7 433.3L615.9 431.2L615.1 434.6L615.7 434.4L617.9 440.4Z"/><path fill="#ea7456" d="M594.2 486L594.1 484.3L594.8 484.2L592.6 481.5L591 484.6L591.7 484.5L591.9 486.3ZM563.4 483.2L563 479.4L563.7 479.3L561.5 476.5L559.9 479.7L560.6 479.6L561 483.5ZM626.7 486.7L626.5 484.5L627.2 484.5L625.1 481.6L623.4 484.8L624.1 484.7L624.3 486.9ZM609 486.6L608.7 483.5L609.4 483.4L607.3 480.6L605.7 483.7L606.4 483.7L606.6 486.8ZM587.5 489.1L587.1 484.9L587.8 484.9L585.6 482.1L584 485.3L584.7 485.2L585.1 489.3Z"/><path fill="#b8318a" d="M588.3 306.9L587.5 302.1L589.2 301.8L585.2 297.8L582.7 302.9L584.3 302.6L585.1 307.4Z"/><path fill="#be3884" d="M537.4 359.7L535.7 355.6L537.1 355L532.9 352.3L531.7 357.2L533 356.6L534.7 360.8ZM648.2 277.9L648.3 273.7L649.5 273.7L647.2 270.2L644.7 273.6L645.9 273.6L645.8 277.8ZM737.2 322.2L738.5 318.3L739.8 318.7L738.6 314.2L734.7 316.9L736 317.4L734.6 321.3ZM758.3 348.3L760.3 343L761.8 343.6L760.4 338.2L755.8 341.3L757.3 341.9L755.3 347.1ZM597.6 303.3L596.5 298.3L598.1 297.9L594 294.1L591.8 299.2L593.4 298.9L594.4 303.9ZM678.6 275.5L678.8 271.7L680.1 271.7L677.7 267.9L674.9 271.5L676.2 271.5L676 275.3ZM720.8 306.7L721.8 302L723.4 302.3L721.3 297.1L717.1 300.9L718.7 301.3L717.6 306ZM707.7 300.3L708.6 296.1L710 296.4L708.1 292L704.6 295.3L705.9 295.5L705 299.8Z"/><path fill="#c5407e" d="M653.3 268L653.5 264.2L654.7 264.2L652.3 260.4L649.6 264L650.9 264.1L650.8 267.9ZM552.2 344.9L551.1 341.5L552.2 341.2L549.1 338.8L547.9 342.5L549 342.2L550.1 345.6ZM616.6 299.5L616.2 294.6L617.5 294.4L614.5 290.9L612.2 294.9L613.6 294.8L614 299.7ZM680 277.3L680.1 272.9L681.6 273L678.8 268.8L675.8 272.8L677.2 272.9L677.1 277.2ZM683.2 283.9L683.8 279.9L685.1 280.1L683.1 276.1L680 279.3L681.3 279.5L680.6 283.5ZM739.3 339.3L740.8 334L742.2 334.4L740.6 329.8L736.8 332.8L738.2 333.2L736.6 338.5ZM541.9 359.8L540 355.4L541.3 354.8L537 352.2L536 357.1L537.3 356.5L539.3 360.9ZM754.4 352.9L756.1 348.5L757.2 348.9L756.1 344.9L752.8 347.3L753.9 347.7L752.2 352.1ZM757.6 348.2L759.4 342.6L761 343.1L759.4 337.6L754.7 341L756.3 341.6L754.5 347.1ZM713.9 303.1L714.8 299.3L716 299.6L714.4 295.4L711 298.4L712.3 298.7L711.4 302.5ZM741.5 325.3L742.5 321.2L743.8 321.6L742.1 317.2L738.5 320.3L739.8 320.6L738.9 324.6ZM764.3 351.2L765.7 347.2L766.9 347.6L765.7 343.5L762.1 346L763.3 346.4L762 350.3ZM588.1 313.8L586.7 309.3L588.1 308.9L584.3 305.8L582.7 310.5L584 310.1L585.3 314.6ZM570.4 333.3L568.7 328.2L570.1 327.7L565.8 324.6L564.3 329.7L565.8 329.2L567.5 334.3ZM569.5 338.7L568.1 334L569.4 333.7L565.8 330.8L564.4 335.1L565.7 334.8L567.1 339.5ZM744.7 326.7L745.6 323.1L746.8 323.4L745.2 319.3L741.9 322.2L743.1 322.5L742.2 326.1ZM684.6 283.4L685.4 278.6L686.9 278.9L684.5 274L680.8 277.9L682.3 278.1L681.5 282.9ZM631.3 289.8L630.6 283.8L632.1 283.7L628.4 279.5L625.8 284.4L627.4 284.2L628.1 290.2Z"/><path fill="#cc4778" d="M726.3 337.5L727.5 330.6L729.1 330.9L726.8 326L723 329.8L724.5 330L723.3 336.9ZM538.2 380.5L535.9 375.9L536.9 375.3L533.3 373.4L532.7 377.5L533.7 377L536.1 381.6ZM587.5 315.5L586.3 311.1L587.6 310.8L584 307.8L582.5 312.2L583.7 311.8L584.9 316.2ZM577.6 319L576.3 314.5L577.7 314.1L573.6 310.9L572 315.9L573.4 315.4L574.8 319.9ZM677.4 302.6L677.8 295.5L679.4 295.6L676.5 290.8L673 295.2L674.6 295.3L674.2 302.4ZM631.8 276.7L631.5 273.2L632.7 273.1L630.1 269.9L628 273.5L629.2 273.4L629.5 276.9ZM628.8 297.8L628 292.5L629.3 292.3L626.2 289.1L624.2 293.1L625.5 292.9L626.2 298.2ZM573.9 320.6L572.9 316.5L574.3 316.2L570.7 313L568.9 317.5L570.2 317.2L571.2 321.3ZM656.5 300.9L656.6 295.2L657.8 295.2L655.5 291.8L653.1 295.1L654.3 295.1L654.2 300.8ZM693.8 295.3L694.4 289.7L696.1 289.9L693.3 284.9L689.5 289.1L691.2 289.3L690.5 294.9ZM763.5 361.9L765.5 356.8L766.8 357.3L765.7 352.6L761.7 355.3L763 355.8L761 360.9ZM631.3 277L630.9 273L632.2 272.8L629.1 269.2L626.8 273.4L628.2 273.3L628.6 277.3ZM699.2 295.9L700.1 290.7L701.8 290.9L699.3 285.7L695.3 289.8L696.9 290.1L696 295.3ZM675.1 275.9L675.3 271.8L676.7 271.9L674.2 268L671.4 271.6L672.7 271.7L672.5 275.7ZM565.6 353.6L563.4 347.6L564.8 347.1L560.6 344.2L559.3 349.1L560.7 348.6L562.9 354.6ZM566.1 354L564.2 347.8L565.6 347.4L561.6 344.3L560 349.2L561.4 348.7L563.3 354.9ZM755 341L756.3 336.4L757.7 336.8L756 332.1L752.1 335.3L753.5 335.6L752.2 340.2ZM765.9 359.2L768.4 353.6L769.9 354.3L768.8 348.6L763.9 351.6L765.4 352.3L762.9 357.8ZM548.7 354.7L546.9 350L548.3 349.4L544.1 346.6L542.9 351.5L544.2 351L546 355.7ZM664.7 268.2L664.7 264.3L666 264.3L663.3 260.6L660.7 264.4L662.1 264.4L662.1 268.2ZM633.9 277.8L633.5 272.7L635.1 272.6L631.5 268.1L628.5 273.1L630.2 273L630.6 278ZM716.9 332.5L718.5 325.5L719.9 325.9L717.9 321L714 324.5L715.5 324.9L713.9 331.8ZM679.4 300.8L679.8 295.3L681.1 295.4L678.8 291.6L676 295L677.3 295.1L676.9 300.6ZM695.7 307.5L696.4 301.7L697.8 301.9L695.5 297.5L692.2 301.2L693.6 301.4L692.9 307.2ZM708.8 312.3L709.6 306.4L711.1 306.6L708.7 301.8L705 305.7L706.5 306L705.7 311.8ZM614.6 304.7L614.1 300.2L615.2 300.1L612.5 297.1L610.7 300.6L611.8 300.5L612.3 305ZM622.2 294.7L621.5 288.7L623.1 288.5L619.3 284.3L616.6 289.3L618.2 289.1L618.9 295.1ZM602.5 322.6L601.8 316.7L603.1 316.6L600.1 313.2L597.9 317.2L599.2 317L599.9 322.9ZM540.2 382.6L538.3 377.2L539.5 376.8L536 374.3L534.8 378.5L536 378.1L537.9 383.4ZM653 289.6L652.9 284L654.2 284L651.5 280.3L648.9 284.1L650.2 284.1L650.4 289.6ZM732.2 337.9L734.1 331.5L735.6 331.9L734 326.7L729.6 330.1L731.1 330.5L729.2 336.9ZM714 303.7L714.7 299.9L715.9 300.1L714.1 296.2L711 299.3L712.2 299.5L711.6 303.3ZM772.8 353.3L774.7 349L776.1 349.6L775 344.2L770.3 347.1L771.7 347.7L769.9 352ZM694.4 306.4L695.1 301.9L696.2 302L694.4 298.5L691.7 301.4L692.8 301.5L692.1 306.1ZM601.9 318.9L600.9 311.9L602.5 311.7L598.5 307.5L595.9 312.7L597.6 312.4L598.6 319.4ZM706.4 333.9L707.5 325.4L709.1 325.6L706.4 320.5L702.6 324.7L704.2 324.9L703.1 333.5ZM584.2 351.4L582.9 344.8L584.2 344.5L580.9 341.3L579 345.5L580.3 345.3L581.6 351.9Z"/><path fill="#d14e72" d="M630.5 320.6L629.9 314L631.1 313.9L628.3 310.6L626.2 314.3L627.4 314.2L628 320.9ZM742.3 333.7L743.7 329.4L744.9 329.8L743.6 325.5L740 328.2L741.2 328.6L739.8 332.9ZM698.8 333.3L700 326.7L701.2 326.9L699.4 323L696.4 326.1L697.6 326.3L696.4 332.9ZM586.1 343.7L584.3 336.4L585.8 336L581.7 332.5L579.7 337.5L581.2 337.2L583.1 344.4ZM771.5 364.3L773.4 359.3L774.7 359.8L773.4 354.9L769.3 357.8L770.7 358.3L768.8 363.3ZM646.8 287.6L647 281.5L648.5 281.5L645.6 277.1L642.4 281.4L643.9 281.4L643.8 287.5ZM579.9 364.8L577.6 357.9L578.8 357.5L575.2 354.8L574 359.1L575.2 358.7L577.5 365.6ZM717.9 327.7L719.4 321.4L720.8 321.8L718.9 317L715 320.4L716.5 320.8L715 327ZM557 343.3L555.4 339.1L556.6 338.6L552.7 336L551.6 340.6L552.9 340.1L554.5 344.3ZM664.2 290.7L664.1 285.2L665.4 285.2L662.6 281.4L660 285.3L661.4 285.3L661.5 290.8ZM544.4 369.3L542 363.5L543.4 362.9L538.8 360L537.7 365.3L539.1 364.7L541.5 370.5ZM708.9 335.6L711 327.6L712.5 328L710.5 322.8L706.3 326.4L707.9 326.8L705.8 334.8ZM575.8 357.2L574.5 351.3L575.6 351.1L572.6 348.3L571 352.1L572.2 351.8L573.5 357.7ZM778 368.1L779.8 364L781 364.5L780.1 360.1L776.2 362.4L777.4 362.9L775.6 367.1ZM715.8 337.9L717.2 330.1L718.7 330.3L716.4 325.4L712.5 329.3L714.1 329.5L712.7 337.4ZM545.4 389.4L542.3 381.9L543.8 381.3L539.2 378.4L538 383.7L539.4 383.1L542.5 390.6ZM630 293.3L629.9 287.8L631.3 287.8L628.4 283.8L625.7 287.9L627.1 287.9L627.2 293.4ZM658.2 289.7L658.6 284L659.9 284.1L657.5 280L654.5 283.8L655.8 283.8L655.5 289.5ZM618.1 299.6L617.2 295L618.4 294.7L615.3 291.7L613.6 295.7L614.8 295.4L615.7 300.1ZM630.3 318.2L630 311.6L631.3 311.5L628.6 308L626.2 311.7L627.5 311.7L627.7 318.3ZM729.4 334.4L730.9 328.2L732.3 328.6L730.4 323.7L726.5 327.2L727.9 327.5L726.5 333.7ZM675.8 314.6L676.4 308.2L677.7 308.3L675.6 304.6L672.7 307.9L674 308L673.3 314.4ZM772.1 403.6L774.8 396.2L776.1 396.7L774.8 392L770.9 394.8L772.2 395.3L769.5 402.6ZM599.8 313L598.6 306.9L600.2 306.5L596.1 302.5L593.7 307.8L595.4 307.5L596.6 313.7ZM705 325.2L706.2 317.9L707.8 318.1L705.4 313.2L701.6 317.1L703.1 317.4L701.9 324.7ZM616.8 321.7L615.7 315.1L617 314.9L613.8 311.6L611.8 315.8L613.1 315.6L614.1 322.1ZM642.8 283.1L642.7 277.9L644.1 277.9L641.1 273.9L638.5 278.1L639.9 278L640 283.2ZM670 299.3L670.2 293.9L671.4 293.9L669.1 290.4L666.5 293.8L667.8 293.8L667.6 299.2ZM699.2 314.4L700.4 308.5L701.8 308.8L699.9 304.4L696.4 307.7L697.7 308L696.5 313.8ZM747 352.1L748.8 347.3L749.9 347.7L748.9 343.7L745.5 346.1L746.6 346.5L744.8 351.3ZM682.4 301.2L682.6 296.4L683.8 296.4L681.6 293L679.2 296.2L680.3 296.3L680.1 301.1ZM725.7 334.7L727 328.3L728.4 328.6L726.3 323.8L722.6 327.4L724 327.7L722.8 334.2ZM735 368L737.1 359.8L738.5 360.1L736.6 355.4L732.8 358.7L734.2 359.1L732.2 367.3ZM673.2 289.5L673.6 284.7L674.9 284.8L672.7 281L669.8 284.4L671.1 284.5L670.7 289.3ZM545.3 377.9L543.1 372.7L544.3 372.2L540.6 369.9L539.7 374.1L540.8 373.6L543.1 378.9ZM575.1 327.2L574 323.3L575.1 323L572 320.4L570.6 324.3L571.7 323.9L572.8 327.9ZM583.9 350.4L582.5 342.8L584 342.6L580.2 338.9L578 343.7L579.5 343.4L581 351ZM689.1 304.3L689.6 299.5L690.8 299.6L688.8 296L686.1 299.1L687.3 299.2L686.7 304.1ZM690.9 329.3L692.2 322.3L693.5 322.6L691.6 318.5L688.4 321.6L689.7 321.9L688.4 328.8ZM663 300.8L663.4 294.2L664.8 294.2L662.2 290L659.1 293.9L660.5 294L660.1 300.6ZM734.4 334.4L736.3 328.6L737.8 329.1L736.3 323.9L731.9 327.1L733.4 327.6L731.4 333.4ZM588.1 353.8L587 347.4L588.1 347.2L585.2 344.3L583.5 348L584.7 347.8L585.8 354.2ZM700.8 322.8L701.6 316.2L703 316.3L700.6 312L697.4 315.7L698.8 315.8L698 322.5ZM627.7 315.1L626.8 308.3L628.2 308.1L625 304.6L622.7 308.8L624.1 308.7L625 315.5ZM584.7 337.1L583 331.5L584.3 331.1L580.7 328.4L579.3 332.7L580.5 332.3L582.2 337.8ZM633.2 293.3L632.4 286.8L634 286.6L630.2 282.4L627.5 287.4L629.2 287.2L629.9 293.7ZM674 325.7L674.8 318.6L676 318.7L674 315L671.2 318.2L672.4 318.3L671.6 325.4Z"/><path fill="#d6566d" d="M553.6 387.4L550.5 380.3L551.8 379.7L547.6 377.2L546.7 382L548 381.4L551.1 388.5ZM572.3 358.1L570.3 352.4L571.4 352L567.9 349.5L566.8 353.6L567.9 353.2L570 358.9ZM591.6 354.6L589.6 346L591.1 345.6L587.1 342L585.1 347.1L586.6 346.7L588.6 355.3ZM709.6 321.6L710.6 316.4L711.8 316.7L710.1 312.9L707.1 315.8L708.2 316L707.2 321.1ZM550.4 381.2L548.2 375.5L549.3 375L545.8 372.7L544.8 376.8L545.9 376.3L548.2 382.1ZM709.5 341L710.5 332.3L712 332.5L709.4 327.7L705.8 331.8L707.3 332L706.3 340.6ZM665.3 319.6L665.4 311.8L666.8 311.8L664.1 307.9L661.3 311.8L662.7 311.8L662.6 319.6ZM596.1 334L594.6 328.1L595.8 327.8L592.5 325L590.9 329.1L592.2 328.7L593.6 334.6ZM699.6 312.5L700.3 305.6L701.9 305.8L699.1 300.8L695.4 305.1L697 305.3L696.3 312.2ZM639.9 307.8L640 301.5L641.3 301.5L638.8 297.8L636.2 301.4L637.5 301.5L637.4 307.8ZM550.4 411.5L547.7 404.4L548.8 404L545.5 401.7L544.5 405.6L545.6 405.2L548.3 412.3ZM683.4 305.9L684.2 299L685.8 299.2L683.2 294.3L679.6 298.4L681.1 298.6L680.3 305.5ZM600.5 326.9L599.4 321.5L600.6 321.3L597.6 318.4L595.9 322.2L597.1 322L598.2 327.4ZM756.9 385.6L759.1 379.6L760.2 380L759.2 376.1L755.8 378.4L756.9 378.8L754.7 384.8ZM731.8 338.1L733.8 331.6L735.3 332.1L733.6 326.9L729.3 330.3L730.8 330.7L728.8 337.2ZM598.8 353.1L597.6 344.5L599 344.3L595.5 340.5L593.2 345.1L594.7 344.9L595.9 353.5ZM638.3 295.2L638.2 288.4L639.9 288.3L636.6 283.8L633.4 288.4L635 288.4L635 295.2ZM744 373.2L746.2 367L747.3 367.4L746.2 363.5L742.9 365.9L744 366.2L741.8 372.4ZM649.4 282.6L649.5 276.8L651 276.8L648 272.3L644.8 276.7L646.4 276.7L646.2 282.6ZM551.9 389.7L549.2 382.9L550.4 382.4L546.6 379.9L545.5 384.4L546.8 383.9L549.5 390.7ZM538.8 386.9L535.7 380L537.2 379.3L532.3 376.4L531.2 382L532.7 381.3L535.8 388.3ZM551.4 375.5L549.5 370L550.7 369.6L547.2 367.1L546 371.2L547.2 370.8L549.1 376.3ZM544.3 412.7L540.7 403.8L542.1 403.3L537.7 400.4L536.5 405.5L537.9 405L541.5 413.8ZM648.1 331.9L648.5 321.8L650 321.9L647.1 317.3L643.8 321.6L645.3 321.7L645 331.8ZM762.1 367.2L764.1 362.1L765.3 362.5L764.3 358.3L760.6 360.7L761.8 361.2L759.8 366.2ZM718.8 360.5L720.7 350.6L722.3 350.9L719.9 345.8L715.9 349.7L717.5 350L715.6 359.9ZM543.3 404.6L540.8 397.6L542 397.1L538.3 394.5L537.1 398.9L538.4 398.4L540.9 405.5ZM603.3 324.5L601.5 317.1L603.1 316.7L598.7 312.9L596.6 318.3L598.2 317.9L600.1 325.3ZM630.3 331L629.6 323.9L630.8 323.8L628 320.6L626 324.3L627.2 324.1L627.9 331.2ZM548.4 400L545.5 391.7L546.9 391.2L542.6 388.1L541.2 393.2L542.6 392.7L545.5 401ZM680.5 294.7L680.8 289.2L682.2 289.3L679.5 285.1L676.5 289L677.9 289.1L677.6 294.6ZM586.7 354.7L585.3 347L586.8 346.7L583.2 343.2L581.1 347.7L582.5 347.5L583.9 355.3ZM733.4 380.9L735.6 373L736.9 373.3L735.4 369.1L732 371.9L733.2 372.3L730.9 380.2ZM581.6 359.5L579.9 352.2L581.2 351.9L577.7 348.7L575.9 353.1L577.3 352.8L578.9 360.1ZM684.5 322.8L684.9 315.5L686.2 315.6L683.8 311.6L680.9 315.3L682.2 315.4L681.8 322.6ZM645.5 319.9L644.7 310.9L646.3 310.8L642.7 306.6L640 311.4L641.6 311.2L642.4 320.2ZM538.6 377.1L536.5 373L537.5 372.5L534 370.6L533.5 374.5L534.5 374L536.6 378.2ZM551.7 376.9L549.6 371.8L550.6 371.4L547.3 369.3L546.4 373.1L547.5 372.7L549.6 377.8ZM550.1 390.9L547.8 384.5L548.9 384.1L545.4 381.6L544.3 385.8L545.5 385.3L547.8 391.7ZM681.5 321.9L681.8 314.8L683.1 314.8L680.7 311L677.9 314.6L679.2 314.7L678.9 321.7ZM736 351L737.7 343.2L739.3 343.5L737 338.2L732.8 342.1L734.4 342.5L732.7 350.3ZM620.1 350.2L618.7 341.4L620 341.2L616.8 337.9L614.7 342.1L616.1 341.8L617.4 350.6Z"/><path fill="#dc5d67" d="M673.4 343.8L674.6 334.4L676 334.5L673.7 330.3L670.5 333.9L671.9 334L670.7 343.5ZM669.7 349.7L669.9 340.7L671.1 340.8L668.7 337.2L666.2 340.7L667.4 340.7L667.3 349.7ZM765 376.9L767.6 371.2L768.8 371.8L768 367.1L763.9 369.5L765.1 370.1L762.5 375.7ZM549.5 384.9L546.9 377.7L548.3 377.2L544.1 374.2L542.7 379.2L544.1 378.7L546.7 385.9ZM622.9 354.8L621.7 345.6L623 345.5L619.9 342L617.8 346.1L619.1 346L620.2 355.1ZM663.5 318.7L664.3 309.8L665.8 309.9L663.1 305.2L659.6 309.4L661.2 309.5L660.4 318.4ZM651.6 313.5L651.8 305L653.3 305L650.3 300.5L647.1 304.9L648.7 304.9L648.5 313.5ZM718.2 362.5L719.6 353L721.1 353.2L718.8 348.5L715.1 352.3L716.6 352.6L715.2 362.1ZM539 426.2L534.8 417.1L536.1 416.4L531.7 413.8L530.8 418.9L532.1 418.3L536.3 427.4ZM627.6 322.1L626.3 313.8L627.9 313.5L624.1 309.6L621.7 314.5L623.3 314.2L624.5 322.6ZM587.4 361.9L585.4 352.7L587 352.3L582.9 348.5L580.7 353.7L582.3 353.4L584.3 362.6ZM658.7 314.5L658.8 306.8L660.2 306.8L657.4 302.8L654.6 306.8L656 306.8L655.9 314.5ZM755.5 384.5L758.2 377.9L759.4 378.4L758.4 374L754.6 376.4L755.8 376.9L753.1 383.5ZM669.6 317L670 309.8L671.3 309.9L668.8 306L666 309.6L667.3 309.7L667 316.9ZM730.2 351.1L731.7 343.9L733.1 344.2L731.1 339.6L727.5 343L728.9 343.3L727.4 350.5ZM613.9 335L612.5 328.4L613.7 328.2L610.6 325.3L609 329.2L610.2 328.9L611.5 335.5ZM615.2 348.8L614.2 339.8L615.6 339.6L612.4 335.9L610 340.3L611.4 340.1L612.4 349.1ZM691.4 325.8L692.2 319.9L693.3 320L691.5 316.5L688.8 319.4L690 319.6L689.2 325.5ZM609.1 350.3L607.8 342.3L609.1 342.1L605.9 338.9L603.9 343L605.2 342.7L606.5 350.7ZM650.8 321.5L651.1 312.6L652.6 312.7L649.8 308.3L646.6 312.5L648.1 312.5L647.8 321.4ZM649.6 305.3L649.6 297.5L651.2 297.5L648.1 293.1L645 297.5L646.5 297.5L646.5 305.3ZM686 318.2L686.9 310.7L688.3 310.9L685.9 306.3L682.5 310.2L683.9 310.4L683 317.8ZM643 311.5L643.1 303.1L644.7 303.1L641.5 298.5L638.3 303.1L639.9 303.1L639.8 311.5ZM770.8 394.2L773.9 387.7L775.2 388.4L774.5 383.5L770.1 385.9L771.4 386.5L768.2 393ZM551.3 405.5L548.2 397.8L549.4 397.3L545.6 394.7L544.5 399.2L545.8 398.7L548.8 406.5ZM712.5 350.5L714.5 341.7L716 342L714 337L710 340.6L711.5 341L709.5 349.8ZM589.1 348.6L587.5 340.8L589 340.5L585.2 336.8L583.1 341.7L584.6 341.4L586.1 349.2ZM613 363.7L611 353.7L612.4 353.4L608.8 350L606.8 354.6L608.2 354.3L610.2 364.3ZM751.1 389.8L753.8 383.6L754.8 384.1L754 380.2L750.7 382.3L751.7 382.7L749 388.9ZM650.7 333.3L650.3 323.3L651.9 323.3L648.7 319.1L645.8 323.5L647.3 323.5L647.7 333.4ZM741.8 366.9L743.7 359.5L745 359.9L743.3 355.3L739.6 358.5L740.9 358.9L739.1 366.2ZM625.3 353.2L623.9 341.8L625.6 341.6L621.8 337.3L619 342.4L620.7 342.2L622 353.5ZM582.9 375L580.2 366.9L581.4 366.5L577.7 363.8L576.4 368.2L577.7 367.8L580.4 375.8ZM772.8 428.8L776.7 419.5L778 420.1L776.9 415.2L772.6 417.9L774 418.4L770.1 427.6ZM660.9 325.9L660.9 315.8L662.5 315.8L659.3 311.1L656 315.8L657.6 315.8L657.6 325.9ZM551.3 397.6L547.7 388.4L549.2 387.8L544.4 384.5L543 390.2L544.6 389.6L548.2 398.8ZM717.9 371.7L719.4 364.2L720.5 364.4L719 360.8L716.1 363.5L717.2 363.7L715.7 371.3ZM645.8 331.2L645.7 322.4L647.1 322.4L644.3 318.5L641.6 322.4L643 322.4L643 331.2ZM613.3 360L612.3 352.1L613.5 351.9L610.8 348.9L608.9 352.5L610 352.3L611 360.3ZM742.5 370.5L744.6 362.5L746.1 362.9L744.3 358.1L740.3 361.4L741.8 361.8L739.6 369.7ZM692.3 320L693.1 312.3L694.6 312.5L692 307.7L688.4 311.8L690 312L689.2 319.6ZM753.4 370.8L755.4 363.5L756.9 363.9L755.1 358.9L751.1 362.3L752.5 362.7L750.5 370ZM701.2 323.8L702.1 317.6L703.4 317.7L701.3 313.6L698.2 317L699.5 317.2L698.6 323.5ZM743.5 390.3L746.3 380L747.9 380.4L745.9 374.9L741.4 378.7L743.1 379.1L740.3 389.4ZM580.4 370.4L577.5 361.2L579.1 360.7L574.6 357.3L573 362.6L574.5 362.2L577.4 371.4Z"/><path fill="#e16462" d="M667.2 339.1L667.7 328.7L669.2 328.7L666.4 324.2L663.1 328.4L664.7 328.5L664.1 338.9ZM583.1 377L581.5 369L582.7 368.8L579.6 365.8L577.8 369.8L579.1 369.5L580.6 377.5ZM678.4 328.5L679.5 320.7L680.9 320.9L678.8 316.7L675.6 320.1L676.9 320.3L675.8 328.1ZM692.7 355.9L693.5 344.6L695.1 344.7L692.3 339.9L688.7 344.3L690.3 344.4L689.5 355.7ZM668.9 348.4L668.9 338.9L670.2 338.9L667.6 335.2L665 338.9L666.3 338.9L666.3 348.4ZM607.5 343.4L606.4 334.3L608 334.1L604.3 329.9L601.7 334.8L603.3 334.6L604.3 343.8ZM644.9 321.8L644.4 313.8L645.8 313.7L642.8 310L640.3 314.1L641.7 314L642.2 322ZM621.6 335.3L620.6 326.7L622.1 326.6L618.7 322.7L616.3 327.2L617.7 327L618.7 335.6ZM575.2 405.5L572.8 395.4L574.1 395L570.5 391.9L568.8 396.3L570.1 396L572.6 406.1ZM560.9 415.2L558.4 407.2L559.4 406.9L556.3 404.4L555.1 408.2L556.2 407.9L558.7 415.9ZM690.6 353.9L691.8 343.4L693.3 343.6L690.7 338.9L687.2 342.9L688.7 343.1L687.5 353.6ZM769.1 421.5L773.8 411.4L775.3 412.1L774.3 406.4L769.3 409.3L770.8 410L766.1 420.1ZM657.2 340L657.5 331.5L658.7 331.6L656.4 328L653.9 331.4L655.1 331.5L654.8 340ZM550.9 424.5L547.7 415.1L549 414.6L545.2 411.8L543.9 416.3L545.2 415.9L548.3 425.4ZM685.6 359.4L686.2 351L687.4 351L685.3 347.6L682.8 350.7L683.9 350.8L683.3 359.3ZM581.9 371.1L579.2 361.8L580.8 361.3L576.5 357.9L574.7 363.1L576.2 362.6L578.8 372ZM638.5 348.5L638.6 338.8L639.9 338.8L637.2 334.9L634.5 338.8L635.9 338.8L635.8 348.5ZM774.1 412L777.9 404.1L779.2 404.7L778.4 399.7L773.9 402.2L775.2 402.8L771.4 410.7ZM586.2 385.3L583.2 374.1L584.8 373.6L580.5 370L578.5 375.3L580.1 374.9L583 386.1ZM726 361.2L727.7 353.1L729 353.4L727.1 348.9L723.6 352.3L724.9 352.6L723.2 360.6ZM691.1 340.4L691.9 331.1L693.4 331.2L690.7 326.7L687.4 330.7L688.9 330.9L688.1 340.1ZM650.6 339.2L649.8 329.6L651.2 329.5L648.1 325.8L645.7 330L647.1 329.9L647.9 339.4ZM597.1 383.3L595.5 371.9L597 371.7L593.3 367.8L590.9 372.6L592.4 372.4L594.1 383.8ZM752.9 398.6L755.9 388.9L757.4 389.4L755.7 384.1L751.3 387.5L752.8 388L749.9 397.7ZM618.9 357.2L617.6 346L619.2 345.8L615.4 341.6L612.8 346.6L614.4 346.4L615.7 357.5ZM675.5 348.2L676.2 338.8L677.6 338.9L675.2 334.9L672.3 338.5L673.6 338.6L672.9 348ZM697 339.7L697.8 331.6L699.2 331.7L696.9 327.5L693.7 331.1L695.1 331.3L694.2 339.4ZM571.7 389.4L569 380.1L570.4 379.7L566.5 376.5L564.8 381.3L566.2 380.9L568.9 390.2ZM610.4 359.7L609.7 352.1L610.8 352L608.2 349L606.3 352.4L607.4 352.3L608.2 359.9ZM633.4 349.3L633 337.9L634.6 337.8L631.2 333.3L628.1 338.1L629.7 338L630.1 349.4Z"/><path fill="#e56c5c" d="M574.3 400.7L571.6 391.8L572.8 391.5L569.3 388.7L568 393L569.2 392.6L571.9 401.5ZM587.2 390.1L584.5 377.9L586.2 377.6L581.9 373.6L579.6 379L581.2 378.7L583.9 390.8ZM728.8 385.8L730.8 377.2L732.1 377.4L730.4 373.3L727.1 376.3L728.3 376.6L726.3 385.2ZM567.5 405.9L564.5 397.1L565.7 396.7L562 394L560.8 398.4L562 397.9L565.1 406.7ZM683.6 363L685 350.6L686.6 350.7L683.9 345.8L680.1 350L681.8 350.2L680.4 362.6ZM596.5 360.1L595.4 352.9L596.5 352.7L593.7 349.8L591.9 353.4L593.1 353.2L594.2 360.5ZM572 408.5L569.2 397.5L570.6 397.1L566.7 393.7L564.8 398.6L566.3 398.2L569.1 409.2ZM671.8 351.4L672.1 339.9L673.7 339.9L670.7 335.4L667.4 339.7L669 339.8L668.7 351.3ZM577.3 385.3L574.7 378.2L575.8 377.8L572.6 375.5L571.5 379.3L572.6 378.9L575.2 386.1ZM692.6 342.6L694 334.1L695.4 334.4L693.3 330L690 333.4L691.3 333.7L689.9 342.1ZM740.3 407L743.6 396.5L745 397L743.5 392.2L739.5 395.2L740.9 395.6L737.6 406.1ZM588.3 393.6L586.2 384.6L587.3 384.3L584.2 381.5L582.7 385.4L583.8 385.2L585.9 394.1ZM608.6 359.2L606.6 349.8L608 349.5L604.3 346.1L602.3 350.8L603.7 350.5L605.8 359.8ZM740.2 400.4L743.2 390.3L744.6 390.7L743 385.9L739 389.1L740.4 389.5L737.4 399.6ZM596.4 364.6L595 356.9L596.2 356.7L593.2 353.7L591.4 357.6L592.6 357.4L594 365ZM768.6 429.5L772.4 421.4L773.6 422L772.8 417.6L769 419.8L770.1 420.3L766.3 428.4ZM711.2 387.3L712.5 377.7L713.8 377.9L711.8 374.1L708.9 377.2L710.1 377.4L708.7 386.9ZM671.6 347.7L672.5 336.5L674.1 336.7L671.4 332L667.9 336.1L669.4 336.3L668.5 347.4ZM613.9 351.3L612.5 342.5L613.9 342.3L610.5 338.9L608.4 343.2L609.8 343L611.2 351.8ZM617 373.2L615.8 361.9L617.2 361.7L613.9 357.9L611.4 362.3L612.9 362.2L614 373.5ZM769.3 437.3L773.7 426.2L775.2 426.8L773.9 421.3L769.1 424.4L770.6 425L766.3 436.2ZM615 350.4L614 342.1L615.3 342L612.3 338.7L610.2 342.6L611.4 342.5L612.5 350.7ZM659.6 343.2L660.4 331.3L662.1 331.4L659.1 326.4L655.4 330.9L657.1 331L656.3 343ZM564.2 399.8L561.1 390.4L562.4 390L558.3 387L556.9 391.9L558.3 391.4L561.5 400.7ZM695.2 362.9L696.7 353.6L698 353.8L696 349.7L692.8 353L694.1 353.2L692.6 362.5ZM577.8 379.7L575.4 370L576.9 369.6L572.8 366.1L570.8 371.1L572.3 370.7L574.8 380.5ZM725.9 374.5L727.4 367.1L728.5 367.3L726.9 363.7L724 366.4L725.1 366.6L723.6 374Z"/><path fill="#ea7456" d="M693.5 361.5L695 352.2L696.2 352.4L694.3 348.4L691.1 351.6L692.4 351.8L690.9 361ZM721.3 388.4L723.3 376.7L724.9 376.9L722.5 371.9L718.6 375.9L720.2 376.1L718.2 387.9ZM710.7 375.4L712.4 365.2L713.8 365.4L711.7 361L708.2 364.5L709.6 364.7L707.9 374.9ZM643.9 347L644 337.3L645.4 337.3L642.7 333.4L639.9 337.2L641.3 337.2L641.2 347ZM571.5 404.2L569 395.9L570.1 395.6L566.9 393L565.6 396.9L566.7 396.6L569.2 404.9ZM636.3 354L634.8 342L636.4 341.8L632.5 337.6L629.9 342.7L631.5 342.4L633 354.5ZM700 358.6L701 349.7L702.3 349.8L700.2 345.8L697.1 349.2L698.4 349.4L697.4 358.3ZM687.1 367.7L688.5 355.2L690.1 355.4L687.4 350.4L683.7 354.7L685.3 354.8L683.9 367.4ZM727.1 388.2L730.1 379.3L731.3 379.7L730 375.3L726.3 378L727.6 378.5L724.6 387.4Z"/><path fill="#ee7c51" d="M648.9 356.7L647.9 346.3L649.3 346.2L646.3 342.6L644 346.6L645.3 346.5L646.2 356.9ZM708.2 382.8L710.3 370.6L711.9 370.8L709.5 365.8L705.6 369.8L707.1 370L705 382.3ZM724.7 394.3L727 382.2L728.6 382.6L726.3 377.4L722.3 381.3L723.9 381.6L721.5 393.7ZM580.5 396.8L577.8 388.2L579 387.8L575.6 385.2L574.3 389.3L575.5 388.9L578.2 397.5ZM737.6 406.3L740.2 394.6L741.7 394.9L739.7 390L735.7 393.6L737.2 393.9L734.6 405.6ZM626.2 367.9L624.6 356.9L626 356.7L622.7 353L620.4 357.5L621.8 357.3L623.3 368.3Z"/><path fill="#e56a60" d="M646.8 298.4L646.8 290.8L648.4 290.8L645.1 286.1L641.8 290.8L643.4 290.8L643.4 298.4ZM625.1 317.1L624.8 307.5L626.5 307.4L623 302.7L619.7 307.6L621.4 307.6L621.7 317.2ZM786.7 402.8L789.2 393.4L791 393.9L788.8 387.7L783.7 391.9L785.5 392.4L783 401.8Z"/><path fill="#e66e5b" d="M548.3 392.7L546.2 380.3L548.1 380L543.4 375.3L540.6 381.3L542.4 381L544.5 393.4ZM770.1 399.9L772.3 390L773.9 390.3L771.6 384.9L767.2 388.9L768.9 389.3L766.8 399.2ZM517.4 435.2L515.4 426.1L517.4 425.7L512.1 421L509.5 427.5L511.4 427.1L513.4 436.1Z"/><path fill="#e87256" d="M640 312.5L639.7 304.7L641.4 304.7L637.8 299.9L634.5 304.9L636.2 304.9L636.5 312.6ZM672.4 314.9L672.4 307.2L674 307.2L670.8 302.5L667.5 307.2L669.1 307.2L669 314.9ZM635.5 314.9L635.3 304.4L637.1 304.4L633.3 299.1L629.6 304.5L631.5 304.5L631.7 315ZM702.7 328.2L703.1 318.2L705.1 318.3L701.2 312.3L696.9 318L698.9 318.1L698.5 328.1ZM650.7 341.4L650.7 334L652.4 334L648.9 329L645.4 334L647.1 334L647.2 341.4ZM665.3 347.8L665.6 337.1L667.4 337.1L663.9 331.8L660.1 336.9L661.9 337L661.6 347.7ZM713 373L713.4 365.7L714.9 365.8L712.1 361.2L708.7 365.4L710.2 365.5L709.8 372.8ZM746.7 381.1L748.1 370.7L750 370.9L746.8 364.8L742.2 369.9L744.1 370.1L742.7 380.5ZM541.8 411.1L539.8 399.8L541.8 399.5L536.8 394.5L533.8 400.9L535.7 400.6L537.8 411.8Z"/><path fill="#ea7652" d="M666.9 333.4L666.9 324.9L668.6 324.9L665 319.9L661.6 325L663.3 324.9L663.4 333.4ZM616.8 354.2L616.4 347L618.3 346.9L614 341.5L610.4 347.4L612.3 347.3L612.8 354.5ZM701.4 360.8L701.6 349.8L703.4 349.8L699.9 344.6L696.2 349.7L698 349.7L697.7 360.7ZM703.9 368.2L704.2 357L706.2 357.1L702.4 351.3L698.2 356.8L700.2 356.9L699.8 368.1ZM584.2 377.1L583.6 370.2L585.5 370L581.3 364.9L577.9 370.7L579.8 370.5L580.3 377.5ZM758.4 397L760.4 386.8L762.2 387.1L759.6 381.3L755 385.7L756.8 386.1L754.8 396.3ZM735 403.4L736.2 392.8L737.8 393L734.9 387.7L731 392.2L732.7 392.4L731.5 403.1ZM776.5 415.8L777.8 409.6L779.4 409.9L777.1 404.7L773 408.6L774.6 408.9L773.3 415.1ZM766.6 425.9L768.2 416.5L769.9 416.8L767.3 411.3L763 415.6L764.7 415.9L763.1 425.3ZM543.7 442.5L542.4 435.3L544.3 435L539.5 430.2L536.7 436.3L538.5 436L539.8 443.2Z"/><path fill="#eb7a4d" d="M654.6 329.2L654.7 320.3L656.5 320.3L652.9 315.1L649.2 320.2L651 320.2L650.9 329.1ZM639.7 333.4L639.8 326.2L641.7 326.2L637.9 320.6L633.9 326.2L635.8 326.2L635.8 333.3ZM620.4 339.3L620.2 332.8L621.9 332.7L618.4 328.1L615.3 332.9L616.9 332.9L617.1 339.3ZM678.9 340.3L679.2 332.5L680.8 332.5L677.6 327.7L674.1 332.3L675.8 332.3L675.5 340.2ZM636.1 348.4L635.8 341.6L637.6 341.5L633.9 336.7L630.6 341.7L632.3 341.7L632.5 348.5ZM714.7 363.7L715 356.8L716.8 356.9L713.5 351.7L709.7 356.5L711.5 356.6L711.1 363.5ZM641.8 369.2L641.9 362.1L643.8 362.1L640 356.6L636.1 362.1L638 362.1L637.9 369.2ZM714.6 374.9L715.3 364.9L717.1 365L713.8 359.5L709.7 364.5L711.5 364.7L710.8 374.7ZM733.4 384.7L735.1 371.1L737.1 371.3L733.7 365L728.9 370.3L730.9 370.5L729.3 384.2ZM580.3 394.3L579.4 384.6L581.4 384.5L576.8 379L573.2 385.2L575.2 385L576.1 394.7ZM555.8 434.9L554.4 423.5L556.3 423.3L551.8 418.4L548.8 424.2L550.6 424L552 435.4ZM779.4 470.8L780.8 463.2L782.6 463.6L779.9 457.7L775.3 462.2L777.1 462.6L775.7 470.2ZM774.5 472L776.3 463.2L777.8 463.5L775.6 458.4L771.6 462.3L773.1 462.6L771.3 471.3Z"/><path fill="#ec7e48" d="M657.3 349.1L657.5 341.6L659.3 341.6L655.8 336.4L652.1 341.4L653.9 341.5L653.7 349ZM642.2 357.5L641.9 351.3L643.7 351.2L640 346.4L636.7 351.5L638.4 351.4L638.6 357.7ZM646.9 362.6L646.7 352.2L648.5 352.2L644.7 347.1L641.2 352.3L643 352.3L643.3 362.7ZM647.3 371.1L647.2 363.4L649.1 363.4L645.2 357.9L641.4 363.5L643.3 363.5L643.4 371.1ZM598.2 371.7L597.9 364.9L599.5 364.8L595.9 360.2L592.8 365.1L594.5 365L594.8 371.9ZM600.3 375.5L599.7 368.1L601.5 367.9L597.5 363.2L594.4 368.5L596.1 368.3L596.8 375.8ZM636.1 375.7L635.9 367.6L638 367.6L633.7 361.7L629.7 367.7L631.7 367.7L631.8 375.8ZM601.8 376.5L601.2 367.5L603.2 367.3L598.8 361.8L595.1 367.9L597.1 367.7L597.7 376.8ZM655.3 380L655.2 368.5L656.9 368.5L653.4 363.6L650 368.5L651.7 368.5L651.8 380.1ZM628.4 381.9L627.9 371.4L629.7 371.3L625.7 366.2L622.3 371.7L624.1 371.6L624.6 382.1ZM695.6 385.6L696.2 374.4L698.1 374.5L694.5 368.7L690.3 374L692.2 374.1L691.6 385.4ZM710.6 385.9L711.2 379.1L713 379.2L709.7 373.6L705.6 378.6L707.4 378.8L706.9 385.6ZM728.3 390.3L729.3 380.6L731.2 380.8L728 375.1L723.6 380L725.5 380.2L724.4 389.9ZM620.9 395.1L620.3 385.2L622.1 385.1L618.2 380.1L614.8 385.5L616.6 385.4L617.1 395.3ZM630 401.6L629.8 392L631.4 392L628.1 387.4L624.9 392.1L626.5 392.1L626.7 401.6ZM731.7 402L732.2 396.6L733.8 396.7L731.1 391.9L727.5 396.1L729.1 396.2L728.5 401.7ZM734.6 416.7L735.8 406.9L737.6 407.1L734.6 401.5L730.3 406.2L732.1 406.4L730.9 416.2ZM735.1 418.5L735.8 410.8L737.5 411L734.6 405.7L730.7 410.3L732.4 410.5L731.6 418.2ZM579.9 422.1L579.1 412.4L581.1 412.2L576.5 406.8L572.9 413L574.9 412.8L575.8 422.5ZM582.8 423L581.9 415.3L583.6 415.1L579.7 410.7L576.9 415.9L578.5 415.7L579.4 423.4ZM568.1 423.7L567.3 417.9L568.8 417.7L565 413.7L562.6 418.6L564.1 418.4L565 424.1ZM721.9 428.4L722.5 418.2L724.5 418.3L720.7 412.2L716.3 417.8L718.3 417.9L717.7 428.2ZM766.6 435.6L768.6 425.8L770.4 426.2L767.8 420.2L763.1 424.7L764.9 425.1L762.9 434.9ZM732.3 439.3L733.4 430.5L735.2 430.8L732.1 425L727.7 429.8L729.6 430.1L728.5 438.8ZM731.6 441.6L732.6 432.9L734.5 433.1L731.3 427.3L726.9 432.2L728.8 432.5L727.8 441.2ZM540.1 454.2L538 442.7L539.8 442.3L535.2 437.8L532.6 443.7L534.3 443.3L536.5 454.9ZM758.4 460.6L759.6 453.4L761.4 453.7L758.6 447.8L754.1 452.5L755.9 452.8L754.7 460ZM526.8 460.2L525.1 450.5L527 450.2L522.1 445.3L519.2 451.6L521.1 451.2L522.9 460.9Z"/><path fill="#ee8244" d="M665.6 352.9L665.3 339.7L667.3 339.7L663 333.9L659 339.8L661.1 339.8L661.4 353ZM672.1 362.2L672.3 354.9L674 354.9L670.7 350L667.2 354.7L668.9 354.8L668.7 362.1ZM644.1 363.9L644.1 354.8L645.8 354.8L642.4 350L639 354.8L640.7 354.8L640.7 364ZM619.5 372.2L619.2 362.9L620.9 362.9L617.2 357.9L613.8 363.1L615.6 363L615.9 372.3ZM663.9 386.1L663.8 378L665.4 378L662.2 373.5L659 378.1L660.6 378L660.6 386.1ZM657.1 389.7L657 382.2L658.6 382.1L655.2 377.4L651.9 382.3L653.6 382.2L653.7 389.8ZM689.1 391.6L689.6 380.6L691.6 380.6L687.8 374.6L683.4 380.3L685.4 380.4L685 391.4ZM721.9 394.6L722.6 387.6L724.2 387.8L721.5 382.8L717.8 387.1L719.4 387.3L718.6 394.3ZM598.6 397.2L597.9 385.7L599.7 385.6L595.7 380.5L592.3 386L594.2 385.9L594.9 397.4ZM723.1 402.7L723.7 394.5L725.5 394.6L722.1 389L718 394.1L719.9 394.2L719.3 402.5ZM613.4 403.2L612.9 389.3L615 389.2L610.6 383.4L606.7 389.5L608.7 389.4L609.2 403.4ZM671.7 409.1L671.8 400.8L673.6 400.8L670 395.6L666.3 400.7L668.1 400.7L668 409ZM572.1 409.5L571.2 403.6L572.7 403.4L568.9 399.4L566.5 404.4L568 404.1L568.9 410ZM666.4 410.5L666.5 399.9L668.2 399.9L664.7 394.9L661.3 399.9L663 399.9L662.9 410.5ZM665.4 412.6L665.6 401.9L667.3 401.9L664 396.9L660.4 401.7L662.1 401.8L661.9 412.5ZM571.2 418.6L569.5 406.3L571.3 406.1L566.9 401.3L563.9 407.1L565.7 406.8L567.5 419.1ZM736.7 424.9L737.5 415.8L739.4 415.9L735.9 410L731.5 415.3L733.5 415.4L732.7 424.6ZM580.2 425L579.3 416.3L581.3 416.1L576.8 411L573.5 416.9L575.4 416.7L576.3 425.4ZM581 426L579.8 416.1L581.7 415.8L577.3 410.9L574.1 416.7L576 416.5L577.2 426.5ZM719.5 429.5L720.1 421.3L721.8 421.4L718.6 416.2L714.8 420.9L716.5 421.1L716 429.3ZM648.7 431L648.8 421.5L650.4 421.6L647.3 416.9L644 421.5L645.6 421.5L645.4 430.9ZM563.9 430.8L562.9 421.7L564.8 421.5L560.3 416.3L557 422.4L558.9 422.2L559.9 431.3ZM599.3 433.3L598.8 426.7L600.5 426.6L596.7 422L593.6 427.1L595.3 427L595.8 433.6ZM724.6 434.6L725.6 423.9L727.4 424L724.2 418.4L720 423.4L721.8 423.5L720.8 434.3ZM634.3 435.5L633.9 423.7L636 423.7L631.7 417.8L627.6 423.9L629.7 423.8L630 435.7ZM737.9 447.3L738.5 440.7L740.3 440.9L737.2 435.4L733.2 440.2L734.9 440.3L734.3 446.9ZM688.4 454.6L688.5 448.3L690.1 448.3L686.7 443.4L683.3 448.2L685 448.2L685 454.6ZM741.8 459.3L743.2 449.1L745.1 449.4L741.9 443.3L737.3 448.4L739.2 448.6L737.9 458.8ZM561.1 459.7L559.7 449.1L561.7 448.8L556.9 443.6L553.6 449.9L555.6 449.6L557 460.2ZM561.1 460L559.9 449.6L561.8 449.4L557.4 444.5L554.3 450.3L556.1 450.1L557.4 460.4ZM544 462.1L542.5 450.9L544.4 450.6L539.9 445.7L536.8 451.6L538.6 451.4L540.1 462.6ZM686.4 462.9L686.5 453.8L688.3 453.8L684.8 448.7L681.1 453.7L682.9 453.8L682.8 462.9ZM684.5 470L684.9 460.9L687 461L683.1 454.8L678.6 460.6L680.7 460.7L680.3 469.8ZM727.5 470.5L728.4 463L730.4 463.3L727 457L722.3 462.3L724.3 462.6L723.4 470.1ZM580 471.9L579.5 463.5L581.1 463.4L577.4 458.8L574.4 463.8L576 463.7L576.6 472.1ZM760.2 472.4L761.8 463L763.5 463.3L760.8 457.8L756.5 462.2L758.2 462.4L756.7 471.9ZM675.6 476.8L675.8 466.8L677.6 466.8L674.1 461.7L670.5 466.6L672.2 466.7L672 476.7ZM594.6 477.8L594.2 470.6L595.9 470.5L592.2 465.8L589 470.9L590.7 470.8L591.1 478ZM649.5 483.2L649.5 477.7L651 477.7L647.9 473.2L644.8 477.7L646.3 477.7L646.3 483.2ZM589.6 483.3L589 473.2L590.6 473.1L586.9 468.5L583.8 473.5L585.5 473.4L586.1 483.5ZM768.8 484.5L770.4 474.9L772.4 475.2L769.4 468.9L764.4 473.9L766.4 474.2L764.7 483.8ZM625.9 484.2L625.8 474.1L627.6 474.1L624 469L620.4 474.2L622.2 474.1L622.2 484.2ZM681.8 487.4L682 479.1L683.7 479.1L680.4 474L676.7 478.9L678.5 479L678.2 487.3ZM667.9 499.9L668.1 492.6L669.8 492.6L666.5 487.8L663.1 492.4L664.7 492.5L664.5 499.8ZM760.2 501L761.8 490.1L763.6 490.3L760.7 484.7L756.3 489.3L758.1 489.6L756.5 500.5ZM534.5 505.5L533.1 494.8L535 494.6L530.5 489.6L527.4 495.5L529.3 495.3L530.6 506ZM540.4 507.3L539.2 497.4L540.8 497.2L537.1 493.2L534.6 498L536.1 497.8L537.3 507.7ZM567.5 507.7L566.4 497L568.2 496.8L563.9 491.9L560.8 497.6L562.6 497.4L563.7 508.1ZM598.1 526.8L597.8 519.5L599.7 519.4L595.6 514L591.9 519.8L593.8 519.7L594.1 527Z"/><path fill="#f0863f" d="M639.4 388L639.1 374.4L641.1 374.4L636.8 368.7L632.9 374.6L634.9 374.5L635.3 388.2ZM640.9 389.6L640.9 382.1L642.9 382.1L638.8 376.3L634.8 382.1L636.8 382.1L636.8 389.6ZM696.9 402L697.1 393.3L698.7 393.3L695.5 388.7L692.3 393.2L693.8 393.2L693.7 401.9ZM640.7 415.5L640.3 403.4L642.4 403.4L638 397.5L634 403.6L636.1 403.6L636.5 415.6ZM702.8 417.1L703.1 409.6L704.9 409.7L701.6 404.6L697.9 409.4L699.6 409.5L699.3 417ZM675.8 418.2L676 405.9L677.9 406L674.3 400.5L670.4 405.8L672.2 405.8L672 418.2ZM736.1 419.9L737.4 410.3L739 410.6L736.3 405.2L732.2 409.7L733.9 409.9L732.6 419.5ZM723.9 421.6L724.8 410.8L726.8 410.9L723.3 404.9L718.8 410.2L720.8 410.4L719.8 421.3ZM581 423.9L579.7 412.6L581.6 412.4L577.2 407.4L574 413.2L575.9 413L577.1 424.3ZM681.7 426.8L681.8 418.9L683.8 418.9L679.7 413L675.5 418.8L677.6 418.9L677.5 426.7ZM695.6 440.6L696.1 430.9L698 431L694.5 425.3L690.3 430.6L692.2 430.7L691.7 440.4ZM703.2 444.3L703.7 436L705.2 436.1L702.3 431.4L698.9 435.7L700.4 435.8L699.9 444.1ZM609.7 445.9L609.3 437.8L611.3 437.7L606.8 432L603 438.2L605.1 438L605.5 446.1ZM574.8 448.1L573.8 437.9L575.8 437.7L571.2 432.4L567.8 438.5L569.8 438.3L570.8 448.5ZM558.9 451.3L557.4 439.9L559.4 439.7L554.6 434.5L551.4 440.7L553.3 440.5L554.9 451.8ZM714.9 455.2L715.3 446.9L717.3 447.1L713.6 441.1L709.3 446.6L711.2 446.7L710.8 455ZM751.5 456L752.9 444.8L754.8 445.1L751.6 439L746.9 444.1L748.9 444.4L747.5 455.6ZM666.6 457.4L666.5 449L668.5 449L664.3 443.1L660.2 449.1L662.2 449L662.3 457.4ZM728.3 457.8L729.1 447.8L730.7 447.9L727.8 443L724.1 447.4L725.7 447.5L725 457.6ZM683.4 460L683.5 447.7L685.6 447.7L681.5 441.7L677.3 447.6L679.3 447.6L679.1 460ZM760 461.3L761.2 453.2L763.1 453.5L760.1 447.5L755.5 452.3L757.4 452.6L756.2 460.7ZM562.5 463L561.3 451.3L563.1 451.1L559 446.4L555.9 451.8L557.7 451.6L558.9 463.3ZM755.4 467.1L756.9 458.1L758.5 458.4L756 453.3L752 457.3L753.6 457.6L752.1 466.6ZM699 469.8L699.5 459.3L701.1 459.4L698 454.6L694.6 459.1L696.2 459.1L695.7 469.6ZM589.6 470.9L589 463.1L590.7 463L587 458.5L584 463.4L585.7 463.3L586.2 471.2ZM691.8 472.4L692.2 463L694.1 463.1L690.5 457.5L686.5 462.8L688.4 462.9L687.9 472.3ZM729.9 475.2L730.7 466.6L732.6 466.7L729.2 460.9L724.8 466.1L726.7 466.2L726 474.8ZM624.9 475.6L624.8 467.2L626.5 467.2L623.1 462.5L619.9 467.2L621.5 467.2L621.6 475.6ZM602.9 477.4L602.1 466.5L604.1 466.3L599.7 460.8L596 466.9L598 466.8L598.7 477.7ZM623.9 478.3L623.7 468.8L625.7 468.8L621.5 463.1L617.6 469L619.6 468.9L619.8 478.4ZM675.7 479.7L675.8 471.9L677.6 471.9L673.8 466.4L670 471.9L671.9 471.9L671.8 479.7ZM728.6 480.1L729.8 467.4L731.9 467.6L728.3 461.3L723.6 466.8L725.6 467L724.4 479.7ZM615.3 480L615.1 471.2L616.7 471.1L613.5 466.7L610.4 471.2L611.9 471.2L612.1 480ZM738 481.6L739.6 469L741.6 469.2L738.3 462.9L733.5 468.2L735.5 468.4L733.9 481.1ZM686.3 483.2L686.5 476.1L688.1 476.1L684.9 471.4L681.6 476L683.2 476L683 483.1ZM553 485.2L551.9 477.3L553.9 477L549.2 471.9L546 478.1L547.9 477.8L549 485.7ZM627.4 487.6L627.2 475.3L629.3 475.2L625.1 469.4L621 475.4L623.1 475.3L623.2 487.7ZM703.1 492.1L703.7 482.5L705.3 482.6L702.3 477.6L698.7 482.2L700.3 482.3L699.7 491.9ZM739.9 495.6L741.1 484.8L742.9 484.9L739.7 479.3L735.5 484.2L737.3 484.4L736.2 495.2ZM666.1 495.6L666.1 488.4L667.7 488.4L664.5 484L661.4 488.4L662.9 488.4L662.9 495.6ZM563.6 495.5L562.7 487.5L564.2 487.3L560.6 483.2L557.9 488L559.5 487.9L560.4 495.9ZM612.5 499.2L612.2 491L614.1 491L610.1 485.7L606.6 491.2L608.4 491.2L608.7 499.3ZM607.2 503.6L606.7 491.3L608.6 491.3L604.5 485.8L600.8 491.6L602.7 491.5L603.2 503.8ZM637.4 507.1L637.4 497.6L639.3 497.6L635.5 492.1L631.7 497.5L633.6 497.5L633.6 507.1ZM599.3 509.2L599.2 499L600.7 498.9L597.5 494.5L594.5 499L596 499L596.2 509.2ZM642.8 513.4L642.7 505.2L644.5 505.2L640.8 500L637.1 505.3L639 505.3L639 513.4ZM687.9 518.1L687.9 512.2L689.5 512.2L686.2 507.5L682.9 512.2L684.5 512.2L684.5 518.1ZM613.4 519.7L613.4 513.8L615 513.8L611.6 509L608.2 513.8L609.9 513.8L609.9 519.8ZM554.8 521.4L554.2 514.4L556 514.2L551.7 509.1L548.5 514.9L550.3 514.7L551 521.7Z"/><path fill="#f18a3a" d="M631.1 394.2L631 385.6L632.9 385.5L628.9 380.1L625.2 385.7L627.1 385.7L627.2 394.3ZM697.7 415.2L698.1 408.5L699.9 408.6L696.6 403.3L692.7 408.2L694.5 408.3L694.1 415ZM660.2 425.1L660.2 418.9L661.9 418.9L658.4 414L655 418.9L656.7 418.9L656.7 425.1ZM704.3 426.7L704.7 415.7L706.7 415.8L702.8 409.8L698.4 415.5L700.5 415.6L700.1 426.6ZM619.2 431.6L618.9 420.8L620.6 420.8L617.1 416.1L613.9 421L615.6 420.9L615.9 431.7ZM577.6 436.8L576.8 430.3L578.4 430.1L574.5 425.8L571.8 430.9L573.4 430.7L574.2 437.2ZM706.5 441.5L706.9 434.5L708.9 434.6L705.2 428.7L700.9 434.2L702.9 434.3L702.5 441.3ZM595.6 441.8L595.1 434.5L596.8 434.4L593.1 429.8L590 434.8L591.7 434.7L592.1 442ZM631.3 444.4L631 437.4L632.7 437.3L629 432.4L625.6 437.6L627.4 437.6L627.7 444.5ZM670.7 444.7L670.9 437.8L672.5 437.8L669.5 433.3L666.2 437.6L667.8 437.7L667.6 444.6ZM653.2 446.1L653.1 434.1L655.1 434.1L651.1 428.6L647.2 434.1L649.2 434.1L649.3 446.1ZM598.7 446.7L598.1 439.1L599.6 439L596.1 434.7L593.3 439.5L594.8 439.4L595.5 446.9ZM718.3 448.9L718.7 442.1L720.3 442.2L717.3 437.4L713.8 441.9L715.4 441.9L715.1 448.7ZM736.1 449.3L737 440.8L738.6 440.9L735.9 436.1L732.3 440.3L733.9 440.4L732.9 448.9ZM633.5 449.5L633.2 441.3L635.2 441.3L630.9 435.6L627 441.6L629.1 441.5L629.3 449.7ZM678.1 450L678.2 443.1L680 443.1L676.3 437.7L672.5 443L674.4 443.1L674.3 449.9ZM645.3 455.9L645.3 448.7L647.1 448.7L643.4 443.4L639.7 448.7L641.6 448.7L641.6 455.9ZM587 457.8L586.1 447.9L588 447.7L583.7 442.6L580.3 448.4L582.2 448.2L583.1 458.1ZM712.3 460.1L712.8 449.4L714.5 449.5L711.3 444.4L707.6 449.2L709.3 449.3L708.8 459.9ZM619.7 461.4L619.5 453.1L621.4 453.1L617.3 447.5L613.5 453.2L615.5 453.2L615.7 461.5ZM651.8 462.3L651.8 452.6L653.9 452.6L649.7 446.7L645.6 452.6L647.7 452.6L647.7 462.3ZM643.9 466.1L644 457L645.9 457L642 451.2L637.9 456.9L639.9 456.9L639.8 466.1ZM611.5 468.9L611.2 462.4L612.7 462.3L609.3 458L606.4 462.6L608 462.6L608.4 469.1ZM726.6 471L727.6 459.6L729.4 459.8L726.1 454.3L722.1 459.2L723.9 459.3L722.9 470.7ZM659 475.4L659 464.2L660.9 464.2L656.9 458.7L653 464.3L655 464.3L655 475.4ZM569.1 475.3L568.3 467L570 466.8L566.2 462.4L563.3 467.5L565 467.3L565.8 475.6ZM682.1 475.9L682.3 463.9L684.2 464L680.4 458.5L676.6 463.8L678.4 463.9L678.2 475.9ZM604.9 477L604.7 466.6L606.7 466.5L602.4 460.6L598.4 466.7L600.4 466.6L600.6 477ZM655 477.3L655.2 466.5L657.2 466.6L653.1 460.6L648.9 466.4L651 466.5L650.8 477.2ZM700.4 477.6L701 467.2L702.9 467.3L699.4 461.6L695.2 466.9L697.1 467L696.5 477.4ZM569.1 484.5L568.6 478.1L570.2 478L566.7 473.8L563.9 478.5L565.5 478.4L565.9 484.8ZM564.2 487.7L562.6 473.7L564.7 473.5L559.9 468.1L556.4 474.5L558.4 474.2L560 488.2ZM619.7 488.8L619.5 480.6L621.5 480.6L617.2 474.7L613.2 480.8L615.2 480.7L615.4 488.9ZM658.7 489.6L658.5 481.2L660.2 481.2L656.7 476.5L653.5 481.3L655.1 481.3L655.3 489.7ZM656.9 493.1L656.9 483.1L658.8 483.1L654.9 477.5L651 483.1L652.9 483.1L653 493.1ZM631.1 496.2L630.9 487.3L632.8 487.2L628.9 481.9L625.2 487.4L627.1 487.3L627.2 496.2ZM604 496.5L603.5 484.9L605.2 484.8L601.5 480L598.2 485.1L600 485L600.5 496.7ZM688 497.6L688.1 490.9L689.9 490.9L686.2 485.6L682.4 490.9L684.3 490.9L684.2 497.5ZM676.9 500.3L677.2 491.6L678.9 491.6L675.7 486.6L672.1 491.4L673.8 491.4L673.4 500.1ZM553.3 500.6L552.4 491L554.4 490.8L549.9 485.6L546.5 491.5L548.5 491.3L549.3 501ZM730.7 502L731.3 494.9L733.2 495L729.8 489.2L725.5 494.4L727.4 494.5L726.8 501.7ZM753.2 503.7L754.7 493.3L756.5 493.5L753.6 487.8L749.2 492.5L751 492.8L749.5 503.2ZM561.4 503.3L560.6 495.9L562.1 495.8L558.4 491.6L555.8 496.5L557.4 496.3L558.2 503.6ZM580.1 504.2L579.7 493.9L581.4 493.8L577.6 488.9L574.3 494.2L576 494.1L576.5 504.4ZM745.3 506.2L746.6 495.4L748.4 495.6L745.4 490.1L741.2 494.7L743 495L741.6 505.8ZM559.5 507.3L558.7 499.9L560.2 499.7L556.5 495.6L553.9 500.4L555.5 500.2L556.3 507.7ZM669.6 508.7L669.9 499.1L671.9 499.2L668.1 493.4L663.9 498.9L665.9 499L665.6 508.6ZM617.7 508.8L617.6 499.7L619.3 499.7L615.7 494.7L612.2 499.8L613.9 499.8L614 508.8ZM639 509.8L638.9 498.7L640.8 498.7L636.9 493.3L633.1 498.8L635 498.8L635.1 509.8ZM687.8 515.2L688.1 505.3L689.9 505.3L686.4 500L682.6 505.1L684.4 505.2L684.1 515.1ZM625.8 521.4L625.7 513.4L627.7 513.4L623.6 507.8L619.7 513.5L621.7 513.5L621.8 521.4ZM610.6 525.1L610.3 514.9L612.1 514.9L608.4 509.9L605 515.1L606.7 515L607 525.2ZM661.1 530.1L661.1 518.3L663 518.3L659.2 512.8L655.3 518.3L657.2 518.3L657.2 530.1Z"/><path fill="#e56a60" d="M673.1 306.4L673.5 295.7L675.3 295.8L671.7 290.3L667.8 295.5L669.7 295.6L669.3 306.2ZM695.8 317.9L696.2 307L697.9 307.1L694.7 302.1L691.1 306.8L692.8 306.9L692.4 317.7ZM732.7 346.3L734.2 334.1L736.3 334.3L732.9 327.9L728 333.3L730 333.6L728.5 345.8ZM557.5 368.5L556.1 360.9L558 360.6L553.3 355.9L550.5 361.9L552.3 361.6L553.6 369.2ZM793 407.7L794.9 400.9L796.5 401.3L794.5 395.9L790.1 399.6L791.7 400L789.8 406.8Z"/><path fill="#e66e5b" d="M690.7 327.5L690.9 318.3L692.5 318.4L689.5 313.8L686.2 318.2L687.7 318.2L687.5 327.4ZM635.9 338.9L635.7 329.9L637.6 329.8L633.5 324.3L629.7 330L631.7 330L631.9 339ZM595.6 354.5L594.4 342.4L596.2 342.3L592.1 337.4L589 342.9L590.8 342.8L591.9 354.9ZM576.2 360.3L575.2 350.7L576.8 350.5L572.9 346.1L570.1 351.2L571.7 351.1L572.8 360.7ZM590.2 362.9L589.3 350.4L591.3 350.2L586.8 344.7L583.2 350.8L585.2 350.7L586.1 363.2ZM581.3 372.3L580.7 365.5L582.2 365.3L578.7 361.2L576 365.9L577.5 365.7L578.1 372.6ZM570 382.8L568.9 376.3L570.5 376L566.7 372.1L564.2 377L565.8 376.8L566.8 383.3ZM553 398.1L551 387.2L552.8 386.9L548.4 382.5L545.8 388.1L547.5 387.8L549.4 398.7Z"/><path fill="#e87256" d="M642.5 311.6L642.2 302.3L643.8 302.2L640.4 297.7L637.3 302.5L638.9 302.4L639.2 311.7ZM660.8 333L660.8 320.3L662.8 320.3L658.8 314.6L654.8 320.3L656.8 320.3L656.7 332.9ZM715.2 338.9L715.6 333.1L717.2 333.2L714.2 328.3L710.6 332.8L712.2 332.9L711.9 338.7ZM607.5 344.7L607 332.8L608.9 332.7L604.9 327.5L601.3 333L603.2 333L603.7 344.8ZM601.9 346.4L601.1 337.2L603 337L598.7 332L595.4 337.7L597.3 337.5L598.1 346.8ZM587.2 351.5L586.5 342.2L588.1 342.1L584.4 337.6L581.5 342.6L583.1 342.4L583.8 351.8ZM724.3 353.5L725.1 345.7L726.7 345.9L724 340.9L720.2 345.2L721.8 345.4L720.9 353.2ZM581.1 364.7L579.6 352.9L581.6 352.6L576.7 347.2L573.3 353.7L575.4 353.4L576.9 365.3ZM549.4 404.2L547.8 396.4L549.4 396.1L545.4 392.3L543.2 397.4L544.7 397.1L546.3 404.8ZM763.7 407.7L765.4 396.7L767.2 397L764.4 391.2L759.9 395.8L761.7 396.1L759.9 407.1Z"/><path fill="#ea7652" d="M652.5 326.5L652.5 316.3L654.4 316.3L650.6 310.9L646.8 316.3L648.6 316.3L648.6 326.5ZM691.7 333L691.9 321.4L693.9 321.4L690 315.7L685.9 321.3L687.9 321.3L687.7 332.9ZM645 333.7L645 325.9L646.6 325.9L643.3 321.3L640.1 326L641.7 325.9L641.7 333.7ZM675.2 349.7L675.4 342.2L677.3 342.3L673.7 336.8L669.8 342L671.6 342.1L671.4 349.6ZM607.4 357.5L606.5 345.7L608.4 345.5L604.2 340.4L600.7 346.1L602.6 346L603.5 357.8ZM729.2 376.3L730 368.3L731.5 368.5L728.8 363.7L725.2 367.8L726.8 368L726 375.9ZM725.1 382.7L725.7 375.3L727.4 375.5L724.4 370.4L720.7 374.9L722.3 375.1L721.7 382.4ZM581.4 383.5L580.1 373.2L581.8 373L577.8 368.7L575.1 373.8L576.8 373.6L578.1 383.9ZM732.4 389.8L733 383.4L734.7 383.5L731.7 378.3L727.8 382.9L729.5 383L728.9 389.5ZM757.7 400.6L759.4 389.6L761.2 389.9L758.3 384.1L753.9 388.7L755.7 389L754 400ZM550.7 421.6L548.4 409.4L550.4 409.1L545.5 404.3L542.6 410.5L544.5 410.2L546.8 422.3ZM782.6 461.2L784.3 452.4L786.1 452.7L783.4 446.7L778.7 451.3L780.5 451.7L778.8 460.5ZM779.9 469.8L781 463.6L782.8 463.9L780.2 458.2L775.7 462.6L777.4 462.9L776.3 469.1Z"/><path fill="#eb7a4d" d="M710 359.2L710.7 350.3L712.5 350.4L709.3 344.9L705.3 349.8L707 350L706.3 358.9ZM618 362.4L617.6 351.2L619.3 351.1L615.7 346.4L612.5 351.3L614.1 351.3L614.5 362.5ZM651.8 362.6L651.7 356.9L653.3 356.8L650 352.3L646.8 356.9L648.4 356.9L648.5 362.6ZM682.4 363.7L682.5 356.7L684.4 356.7L680.5 350.9L676.4 356.6L678.4 356.6L678.3 363.7ZM665.5 365.7L665.7 357.7L667.5 357.7L664 352.4L660.2 357.5L662 357.6L661.8 365.6ZM601.1 371.8L600.8 365L602.3 364.9L599 360.5L596 365.2L597.5 365.1L597.8 371.9ZM721.3 372.3L722.3 362.6L723.9 362.8L721.1 357.7L717.3 362.1L718.9 362.3L717.9 372ZM695.1 383.9L695.4 372.8L697.2 372.8L693.6 367.4L689.7 372.6L691.6 372.7L691.3 383.9ZM588.4 384.9L587.4 376.1L589.2 375.9L585.1 371.3L582.2 376.7L583.9 376.5L584.9 385.4ZM699.9 385.3L700.3 375.5L701.9 375.6L698.8 370.9L695.4 375.3L697 375.4L696.6 385.1ZM725.8 386.9L726.8 377.5L728.5 377.6L725.6 372.4L721.6 376.9L723.3 377.1L722.3 386.5ZM579 387.4L578.1 377.2L579.8 377.1L575.9 372.4L572.9 377.7L574.6 377.5L575.5 387.7ZM735.4 391.9L736.4 381.5L738.2 381.7L735.2 376.3L731.1 381L732.9 381.2L731.8 391.5ZM721.5 399.1L722.4 387.1L724.4 387.3L720.7 381.2L716.3 386.7L718.3 386.8L717.4 398.8ZM562.8 403.9L561.2 393.4L562.8 393.2L558.9 389.1L556.4 394.1L558 393.9L559.6 404.4ZM557.8 441L556.7 432.9L558.3 432.7L554.4 428.5L551.8 433.6L553.4 433.4L554.5 441.5ZM543.3 443.1L541.2 431.2L543 430.9L538.3 426.2L535.6 432.2L537.4 431.9L539.5 443.7ZM523.5 449.8L522.1 443L523.7 442.7L519.5 438.7L517.1 444L518.8 443.7L520.1 450.5ZM759.4 458.2L761.1 447L762.9 447.3L760 441.6L755.6 446.2L757.4 446.5L755.7 457.6Z"/><path fill="#ec7e48" d="M665.7 355.9L665.9 347.7L667.9 347.8L664 342L659.9 347.6L661.9 347.6L661.6 355.8ZM624.7 356.5L624.5 348.4L626.4 348.4L622.5 343L618.8 348.5L620.7 348.5L620.8 356.6ZM664 357.1L663.9 350.6L665.5 350.6L662.3 346.1L659.2 350.7L660.7 350.6L660.8 357.1ZM609.2 368.3L608.7 356.1L610.5 356L606.7 350.9L603.2 356.3L605 356.2L605.4 368.4ZM661 370.5L661 361.3L662.9 361.3L658.9 355.8L655.1 361.4L657 361.4L657 370.5ZM697.1 377.8L697.6 367.2L699.7 367.3L695.9 361.2L691.4 366.8L693.4 366.9L692.9 377.6ZM720.7 378L721.7 369.4L723.2 369.6L720.5 364.7L716.8 368.9L718.4 369.1L717.5 377.6ZM655 379.8L654.9 368.6L656.5 368.6L653.1 363.9L649.8 368.7L651.5 368.7L651.6 379.8ZM708.5 393.3L708.9 382.8L710.8 382.9L707.1 377.1L703 382.6L704.9 382.7L704.5 393.2ZM683.4 393.5L683.8 384.1L685.8 384.2L682 378.3L677.7 383.8L679.7 383.9L679.3 393.3ZM703.3 393.9L704 382.4L705.9 382.5L702.4 376.7L698.2 382L700.1 382.1L699.4 393.7ZM682.6 395.8L682.7 389.9L684.3 389.9L681 385.1L677.6 389.8L679.3 389.9L679.2 395.8ZM685.5 396L685.5 389.9L687.1 389.9L684 385.4L680.8 389.9L682.3 389.9L682.3 396ZM593.6 398.9L592.6 387.3L594.4 387.2L590.4 382.5L587.3 387.8L589.1 387.7L590.1 399.3ZM582.1 400.8L581.1 390.9L582.9 390.8L578.8 386.1L575.7 391.5L577.5 391.3L578.5 401.1ZM642.1 403.8L641.9 393.8L643.6 393.8L640 388.9L636.6 393.9L638.3 393.9L638.5 403.9ZM720.5 413L721.4 401.1L723.1 401.3L720 396L716 400.7L717.8 400.9L716.9 412.7ZM618.7 413.9L618.2 402.6L620 402.5L616 397.3L612.5 402.8L614.3 402.8L614.9 414.1ZM701 415.1L701.6 403.9L703.4 404L699.9 398.4L695.8 403.6L697.7 403.7L697.1 414.9ZM726.9 416.3L728 405.6L729.7 405.8L726.7 400.5L722.8 405.1L724.5 405.3L723.4 415.9ZM570.9 417.3L569.7 407.9L571.7 407.6L566.8 402.3L563.5 408.7L565.5 408.5L566.8 417.9ZM727.5 420.8L728.2 410.6L729.8 410.7L726.7 405.6L723 410.2L724.7 410.4L724 420.6ZM595.6 424.9L595.1 416.1L596.9 416L592.9 411L589.5 416.5L591.3 416.4L591.9 425.1ZM577.6 427.3L576.5 417L578.2 416.8L574.2 412.3L571.3 417.5L573 417.3L574.2 427.6ZM554 432.6L551.9 419.6L553.9 419.3L548.9 414.2L545.8 420.6L547.8 420.3L549.9 433.3ZM545.2 438.3L543.5 428.6L545.3 428.3L540.9 423.9L538.2 429.6L539.9 429.3L541.6 438.9ZM744.9 449.3L746.2 440.2L748.2 440.5L745 434.2L740.2 439.3L742.2 439.6L740.8 448.7ZM549.8 460.6L548.8 452.5L550.4 452.3L546.4 448L543.7 453.2L545.4 453L546.5 461.1ZM539.6 465.5L538.3 457.1L540 456.8L535.8 452.4L533.1 457.8L534.8 457.6L536.1 466ZM544.7 472.5L543.4 463.7L545 463.5L540.9 459.3L538.4 464.5L540 464.3L541.4 473ZM531.9 476.2L530.4 466.7L532.1 466.4L527.9 462L525.2 467.5L526.9 467.2L528.3 476.8ZM761.7 503.5L762.9 495.7L764.5 495.9L762 490.9L758.1 494.9L759.7 495.2L758.5 503Z"/><path fill="#ee8244" d="M624.4 368.8L624.1 359.5L625.7 359.4L622.4 355L619.3 359.6L620.9 359.6L621.2 368.9ZM619.6 373.9L619.4 368.3L620.9 368.2L617.5 363.9L614.6 368.5L616.2 368.4L616.5 374ZM636.2 391.9L636.3 386.2L637.9 386.3L634.7 381.6L631.4 386.2L633 386.2L633 391.9ZM675.3 395.7L675.5 388.5L677.5 388.6L673.6 382.7L669.3 388.4L671.3 388.4L671.2 395.6ZM728.9 396.8L729.9 387L731.9 387.2L728.5 381.1L724 386.3L725.9 386.5L724.9 396.3ZM711.1 399.4L711.9 388.4L713.5 388.5L710.5 383.4L706.7 388.1L708.4 388.2L707.6 399.2ZM642 410.1L642 400L644 400L640 394.2L636 399.9L638 399.9L637.9 410.1ZM724.1 413.1L724.8 403.7L726.9 403.9L723.2 397.7L718.6 403.3L720.6 403.4L719.9 412.8ZM688.2 415.8L688.6 405.1L690.3 405.1L687 400L683.3 404.9L685 404.9L684.6 415.7ZM567.2 420.1L566.4 413.1L568.2 412.9L564 408.1L560.9 413.7L562.7 413.5L563.5 420.5ZM617.6 420.3L617.3 410.3L618.9 410.3L615.5 405.7L612.4 410.5L614 410.4L614.3 420.4ZM620.3 424.5L620.1 412.4L622.1 412.4L617.8 406.5L613.8 412.6L615.8 412.5L616.1 424.5ZM603.7 429.1L603.4 422.4L605.3 422.3L601.2 417L597.6 422.7L599.5 422.6L599.7 429.3ZM620.9 431L620.6 423.9L622.7 423.8L618.3 418.1L614.4 424.1L616.4 424L616.7 431.2ZM580.7 432L580.2 426.4L581.7 426.3L578.2 422L575.4 426.8L577 426.7L577.5 432.3ZM719.1 433.5L720 421.2L722 421.4L718.5 415.4L714.1 420.7L716 420.9L715.1 433.2ZM655.4 437.9L655.4 428.8L657.2 428.8L653.6 423.6L650 428.8L651.8 428.8L651.8 437.9ZM654.9 439L655 431.6L656.7 431.6L653.4 426.8L649.9 431.5L651.6 431.5L651.5 439ZM688.2 444.9L688.3 437.3L690.3 437.3L686.4 431.5L682.3 437.2L684.3 437.3L684.2 444.9ZM644.9 454.4L644.9 445.1L647 445.1L642.7 439.1L638.6 445.1L640.6 445.1L640.7 454.4ZM558.3 460.3L557.5 452.9L559.4 452.7L555 447.6L551.7 453.5L553.6 453.3L554.4 460.6ZM558 463.4L557 454.4L559 454.2L554.3 448.9L550.9 455.1L552.9 454.8L553.9 463.9ZM729.4 468.3L730.3 458.6L732.2 458.8L728.8 452.8L724.3 458.1L726.2 458.3L725.4 467.9ZM761.9 475.8L763.3 467.9L765 468.2L762.3 462.5L757.9 466.9L759.7 467.2L758.3 475.2ZM744.9 477.9L745.8 469.8L747.9 470.1L744.5 463.7L739.6 469L741.7 469.3L740.7 477.4ZM686.1 479.6L686.2 473.2L688 473.2L684.5 468.1L680.9 473.1L682.6 473.1L682.5 479.6ZM555.5 480.9L554.7 472.8L556.6 472.6L552.3 467.6L549 473.3L550.9 473.2L551.7 481.3ZM668.6 484.6L668.8 478.2L670.4 478.3L667.4 473.6L664.1 478L665.6 478.1L665.4 484.5ZM585.8 484.6L585.4 478.8L587 478.6L583.4 474.3L580.5 479.1L582.1 479L582.6 484.9ZM559.7 485.3L559 478.1L560.9 477.9L556.4 472.6L552.9 478.7L554.9 478.5L555.6 485.7ZM631 485.5L630.6 475.2L632.3 475.2L628.8 470.6L625.6 475.4L627.3 475.4L627.7 485.6ZM653.9 487L653.8 476.4L655.6 476.4L651.8 471L648 476.5L649.9 476.5L650 487.1ZM650.6 492.6L650.7 484.5L652.6 484.5L649 479.2L645.2 484.4L647 484.4L646.9 492.6ZM761.9 495.4L763.2 485.4L765.1 485.6L761.9 479.5L757.2 484.6L759.1 484.9L757.9 494.9ZM605.4 495.7L605.2 486.8L607.2 486.7L602.9 480.9L598.9 486.9L601 486.9L601.2 495.8ZM693.5 497.6L694 487.5L696.1 487.6L692.2 481.5L687.8 487.2L689.8 487.3L689.3 497.4ZM620.2 499.1L619.7 488.3L621.7 488.2L617.4 482.6L613.6 488.5L615.6 488.4L616.1 499.3ZM619.1 509.2L619 501.3L620.7 501.3L617.1 496.3L613.6 501.4L615.3 501.4L615.5 509.2ZM729.6 511.1L730.5 502.1L732.3 502.3L729.1 496.5L724.8 501.5L726.6 501.7L725.8 510.8ZM598.8 518.7L598.6 512.1L600.3 512.1L596.7 507.3L593.5 512.3L595.2 512.3L595.4 518.8Z"/><path fill="#f0863f" d="M624.7 401.9L624.2 390.5L626.3 390.4L621.8 384.7L618 390.8L620 390.7L620.5 402.1ZM643.2 403.3L643 392.1L644.6 392.1L641.2 387.4L637.9 392.2L639.6 392.2L639.8 403.3ZM699.8 412.8L700.3 403.3L701.8 403.4L698.9 398.8L695.6 403.1L697.1 403.2L696.7 412.7ZM686.6 415.2L687 403.4L688.9 403.4L685.1 397.6L681 403.2L682.9 403.2L682.6 415.1ZM609.1 420.9L608.7 407.2L610.8 407.2L606.5 401.4L602.6 407.4L604.6 407.3L605 421.1ZM710.3 423.1L711.1 414L713 414.2L709.6 408.2L705.2 413.5L707.1 413.7L706.3 422.7ZM620.5 423.6L620.1 415.8L622.1 415.7L617.7 410L613.9 416.1L615.9 416L616.3 423.8ZM720.2 424.4L721 415.1L723 415.3L719.5 409.3L715.1 414.6L717.1 414.7L716.3 424.1ZM702.8 427.6L703.2 417.3L705 417.4L701.7 412.2L697.9 417.1L699.6 417.2L699.1 427.4ZM617.5 440L617.4 430.4L618.9 430.4L615.8 426L612.7 430.4L614.2 430.4L614.3 440ZM682.2 440.2L682.4 429.9L684 430L680.8 425.3L677.5 429.9L679.1 429.9L678.9 440.1ZM620 441.4L619.9 430.6L621.8 430.6L617.8 425L613.9 430.7L615.8 430.7L616 441.5ZM558.3 444.4L557.1 434.3L558.7 434.1L554.9 429.8L552.1 434.9L553.7 434.7L554.9 444.8ZM749.9 445.7L751.4 436.7L753.1 437L750.4 431.4L746.1 435.9L747.8 436.1L746.4 445.2ZM633.7 446.2L633.9 436.4L635.5 436.4L632.2 431.6L628.8 436.3L630.5 436.4L630.3 446.2ZM620.3 446.8L620 438.9L621.7 438.8L617.9 433.8L614.5 439.1L616.3 439.1L616.6 446.9ZM746.1 451.1L747.4 441.2L749.2 441.5L746.2 435.7L741.8 440.5L743.7 440.7L742.3 450.6ZM615.3 453.9L614.6 442L616.6 441.8L612.3 436.2L608.5 442.3L610.5 442.2L611.1 454.1ZM676.1 454.1L676.2 442.9L678.2 442.9L674.2 437.1L670.1 442.8L672.1 442.8L672 454.1ZM689.5 458.7L689.7 451.5L691.3 451.6L688.3 447.1L685 451.4L686.6 451.4L686.3 458.6ZM599.9 459.9L599.6 450.7L601.3 450.7L597.6 445.8L594.3 450.9L596.1 450.9L596.4 460ZM713.1 461.1L713.4 454.2L715.2 454.3L711.9 449.1L708.1 453.9L709.9 454L709.5 461ZM737.9 468L739.1 455.1L740.9 455.3L737.6 449.5L733.3 454.6L735.2 454.8L734 467.6ZM594 468L593.5 460.3L595.1 460.2L591.5 455.8L588.6 460.6L590.2 460.5L590.7 468.2ZM596.2 468.1L595.5 458.7L597.2 458.6L593.3 454L590.3 459.1L592 459L592.8 468.4ZM721.6 472.9L722.2 465.5L724.2 465.7L720.8 459.8L716.4 465L718.3 465.2L717.6 472.6ZM678.6 479.1L678.7 471.1L680.4 471.1L677.1 466.2L673.6 471L675.3 471L675.1 479ZM598.7 480.5L597.9 468.1L599.9 467.9L595.4 462.3L591.7 468.5L593.7 468.3L594.5 480.8ZM757.7 483L759.2 473.9L761.2 474.3L758.1 467.9L753.2 472.9L755.2 473.3L753.6 482.3ZM690.4 483.1L690.7 475.4L692.3 475.5L689.1 470.7L685.7 475.3L687.4 475.4L687.1 483ZM695.6 483.8L696 474.1L697.7 474.1L694.5 469.2L691 473.9L692.6 473.9L692.3 483.7ZM601.2 483.9L600.9 476.3L602.9 476.2L598.7 470.8L595.1 476.5L597 476.4L597.3 484ZM672.1 484.5L672.2 474.6L674.2 474.6L670.1 468.8L666 474.6L668 474.6L668 484.5ZM749 492.8L749.9 486.6L751.5 486.9L749 481.9L745.2 485.9L746.7 486.2L745.8 492.3ZM743.6 493.1L744.8 481.7L746.6 481.9L743.6 476.4L739.5 481.1L741.3 481.3L740 492.7ZM646.7 496.2L646.8 487.8L648.6 487.8L645.1 482.7L641.5 487.7L643.3 487.7L643.1 496.2ZM690.9 498.6L691.5 484.6L693.6 484.7L689.7 478.6L685.2 484.4L687.3 484.4L686.7 498.4ZM614.5 499.5L614.1 489.3L615.6 489.2L612.3 484.9L609.4 489.5L610.9 489.4L611.3 499.6ZM716.4 499.7L717.4 488.4L719.2 488.5L716 483L712 487.9L713.7 488L712.7 499.4ZM666.4 501.4L666.4 490.9L668.2 490.9L664.5 485.6L660.8 490.9L662.6 490.9L662.7 501.4ZM649.4 502.4L649.4 495.1L651.4 495.1L647.2 489.2L643.1 495.1L645.2 495.1L645.2 502.4ZM703 502.8L703.3 495.3L705.3 495.4L701.4 489.5L697.2 495.1L699.2 495.1L698.9 502.7ZM614.6 502.8L614.5 493.7L616.6 493.7L612.4 487.9L608.4 493.7L610.4 493.7L610.4 502.8ZM760.5 506.5L761.8 498.8L763.6 499.1L760.9 493.3L756.4 497.8L758.1 498.1L756.8 505.8ZM752.2 506.4L753.1 498.4L754.9 498.6L751.8 493L747.7 497.8L749.5 498L748.6 506ZM548.4 507.3L547.5 499.2L549 499.1L545.4 495L542.8 499.8L544.3 499.6L545.3 507.6ZM662.9 507.8L663.2 496.4L665.1 496.4L661.4 490.8L657.3 496.2L659.2 496.3L658.9 507.7ZM694.8 512.5L695.1 503.4L697 503.5L693.2 497.7L689 503.3L691 503.3L690.8 512.4ZM601.1 515.1L600.6 507.8L602.3 507.7L598.7 503.2L595.7 508.1L597.3 508L597.7 515.3ZM742.8 515.9L743.7 506.2L745.6 506.4L742.3 500.5L737.9 505.7L739.8 505.8L739 515.5ZM665.9 519.2L666.1 507.6L668.1 507.6L664.1 501.8L660 507.5L662 507.5L661.8 519.1ZM652.3 524L652.3 513.6L654 513.6L650.5 508.7L647.1 513.6L648.8 513.6L648.8 524Z"/><path fill="#f18a3a" d="M679 394.5L679.1 386.2L680.9 386.2L677.4 381L673.7 386.1L675.5 386.1L675.3 394.4ZM618.4 405.2L618.2 397.9L620.2 397.8L615.8 392.1L611.9 398.1L614 398.1L614.3 405.3ZM647.9 406.1L647.8 399.7L649.3 399.6L646.1 395.3L643.1 399.8L644.6 399.7L644.7 406.2ZM668.8 406.4L669 394.2L670.9 394.3L667 388.5L663 394.2L664.9 394.2L664.7 406.4ZM695.4 414.2L695.7 404.3L697.6 404.4L694 398.8L690 404.1L691.9 404.2L691.5 414ZM676.1 424L676.2 413.2L678.2 413.2L674.2 407.4L670.1 413.2L672.1 413.2L672 424ZM674 424.8L674.1 414.6L675.8 414.6L672.4 409.7L668.9 414.6L670.6 414.6L670.6 424.8ZM719.1 426L719.7 413.8L721.6 413.9L718.1 408.3L714 413.5L715.9 413.6L715.3 425.9ZM641.9 426.7L642 419L643.7 419.1L640.3 414.1L636.8 419L638.5 419L638.5 426.7ZM690.4 429L690.7 416.2L692.7 416.2L688.7 410.2L684.4 416L686.5 416.1L686.2 428.9ZM593.5 430.5L592.8 421.4L594.5 421.3L590.6 416.6L587.5 421.8L589.2 421.7L590 430.8ZM652.9 433.6L653 423.5L654.9 423.6L651.1 418.1L647.2 423.5L649.1 423.5L649 433.5ZM711.6 433.7L712 424.9L713.5 425L710.5 420.3L707.2 424.7L708.7 424.8L708.4 433.5ZM708.2 435.5L708.7 424.7L710.4 424.8L707.2 419.7L703.5 424.5L705.2 424.6L704.7 435.3ZM722.7 437.9L723.7 426.7L725.4 426.9L722.4 421.6L718.5 426.2L720.2 426.4L719.1 437.5ZM735 440.7L735.9 432.6L737.5 432.8L734.8 427.8L731 432.1L732.6 432.3L731.7 440.3ZM715.6 441.6L716.4 433.1L717.9 433.3L715.2 428.5L711.6 432.7L713.2 432.9L712.5 441.3ZM722.9 447.2L723.8 434.5L725.7 434.6L722.1 428.6L717.7 434.1L719.7 434.2L718.8 447ZM724.2 448.6L724.9 441.9L726.7 442.1L723.6 436.7L719.5 441.4L721.3 441.6L720.6 448.2ZM662.9 448.4L662.7 437.9L664.6 437.8L660.8 432.6L657.2 437.9L659 437.9L659.1 448.5ZM713.9 451.9L714.5 440.2L716.4 440.3L712.7 434.5L708.5 439.9L710.4 440L709.9 451.7ZM702.8 452.8L703.1 441.3L705.1 441.4L701.2 435.6L697.1 441.2L699 441.2L698.7 452.7ZM587.4 453.5L586.8 441.4L588.5 441.3L584.7 436.4L581.3 441.7L583.1 441.6L583.7 453.7ZM645.2 457.6L645 446.9L646.8 446.9L643.1 441.7L639.5 447L641.3 447L641.5 457.7ZM642.5 460.3L642.6 451.5L644.2 451.5L641.1 447L637.9 451.4L639.5 451.4L639.3 460.3ZM735.1 461.5L735.8 454.9L737.5 455.1L734.7 449.9L730.8 454.3L732.5 454.5L731.7 461.1ZM717.4 463.7L718 455.4L719.6 455.6L716.7 450.7L713.1 455.1L714.7 455.2L714.1 463.5ZM625 464.8L624.9 457.6L626.8 457.6L623 452.3L619.4 457.7L621.2 457.6L621.3 464.8ZM697.5 465.8L697.8 452.9L699.9 452.9L695.9 446.9L691.6 452.7L693.6 452.8L693.3 465.7ZM645.2 466.5L645.4 456.3L647.3 456.3L643.5 450.8L639.6 456.2L641.5 456.3L641.3 466.4ZM737 468.7L738.1 460.2L740.1 460.4L736.8 454.1L731.9 459.4L733.9 459.6L732.8 468.2ZM610.4 470.5L610.1 463.6L611.9 463.5L608 458.5L604.6 463.8L606.4 463.8L606.7 470.7ZM571.2 471L570.1 460.6L571.7 460.4L568 456.2L565.3 461.1L566.9 460.9L568 471.3ZM727.3 475L727.9 468.9L729.5 469.1L726.7 464.2L723.1 468.4L724.7 468.6L724 474.7ZM746 475.7L747.1 465.9L748.8 466.1L745.8 460.7L741.8 465.3L743.5 465.5L742.5 475.3ZM678 477.3L678.2 469.6L679.9 469.6L676.5 464.5L672.9 469.5L674.6 469.5L674.4 477.2ZM667.6 481.5L667.9 468.1L669.9 468.1L665.9 462.1L661.7 467.9L663.7 468L663.5 481.4ZM655.1 483.1L655 476.3L656.9 476.3L652.9 470.8L649.1 476.4L651.1 476.4L651.2 483.1ZM739.4 485.3L740.5 474.6L742.5 474.8L739.1 468.6L734.4 474L736.4 474.2L735.3 484.9ZM716.5 485.8L717.2 472.9L719.2 473L715.4 466.9L710.9 472.6L712.9 472.7L712.3 485.6ZM744.3 488.1L745.6 477L747.4 477.2L744.4 471.6L740.1 476.3L741.9 476.6L740.6 487.7ZM755.8 489.4L757.7 477.1L759.6 477.3L756.5 471.2L751.8 476.2L753.7 476.5L751.9 488.8ZM690.9 489.2L691.3 475.9L693.2 476L689.4 470.2L685.3 475.8L687.2 475.8L686.8 489.1ZM569 489.7L567.9 479.1L569.9 478.9L565.1 473.4L561.6 479.8L563.7 479.6L564.8 490.2ZM609.8 491.8L609.5 484.3L611.3 484.2L607.5 479.1L604 484.5L605.8 484.4L606.1 491.9ZM690.9 492.5L691.1 484.3L692.8 484.3L689.4 479.2L685.7 484.2L687.5 484.2L687.3 492.5ZM739.9 492.6L740.7 483.1L742.4 483.2L739.4 478.1L735.6 482.7L737.3 482.8L736.5 492.4ZM559 493.7L557.8 481.8L559.6 481.6L555.5 476.9L552.5 482.3L554.2 482.2L555.4 494ZM700.6 494.1L701.1 485.8L702.6 485.9L699.8 481.2L696.4 485.5L697.9 485.6L697.4 493.9ZM606.9 495.4L606.8 487.3L608.7 487.2L604.8 481.9L601.1 487.3L602.9 487.3L603 495.5ZM545.2 495.6L543.8 485.2L545.7 484.9L541.3 480.1L538.2 485.9L540.1 485.6L541.4 496.1ZM660.7 496.1L660.5 485.6L662.3 485.6L658.5 480.4L654.9 485.7L656.8 485.7L656.9 496.1ZM678.2 496.7L678.4 489.6L680.2 489.6L676.8 484.5L673.1 489.5L674.8 489.5L674.7 496.6ZM697 497.3L697.5 486.6L699.5 486.7L695.8 480.7L691.4 486.2L693.4 486.3L692.9 497.1ZM674.6 497.5L674.6 489.7L676.5 489.8L672.7 484.3L668.9 489.7L670.7 489.7L670.7 497.5ZM608.7 497.9L608.5 491.3L610.1 491.2L606.6 486.5L603.3 491.5L605 491.4L605.2 498ZM695.8 501.6L696.4 490.8L698.1 490.9L695 485.9L691.4 490.5L693 490.6L692.4 501.4ZM760 507.1L761.5 496.6L763.4 496.8L760.4 490.9L755.8 495.8L757.7 496L756.2 506.5ZM542.4 508.2L541.5 500.6L543.5 500.4L538.9 495.1L535.5 501.3L537.5 501.1L538.3 508.7ZM638.5 509.1L638.5 496.8L640.4 496.8L636.6 491.4L632.8 496.8L634.7 496.8L634.6 509.1ZM723.9 509.6L724.7 502.5L726.4 502.7L723.4 497.4L719.5 501.9L721.2 502.1L720.4 509.2ZM639 509.7L638.9 498.9L640.5 498.9L637.1 494.3L633.9 499L635.5 499L635.7 509.7ZM694.8 509.8L695.1 501.7L696.6 501.8L693.6 497.2L690.4 501.5L691.9 501.6L691.6 509.7ZM650.3 510.5L650.5 502.7L652.2 502.7L648.8 497.5L645 502.6L646.8 502.6L646.6 510.4ZM616.1 510.5L616.1 502.7L617.7 502.7L614.4 498.1L611.3 502.7L612.8 502.7L612.9 510.5ZM603.3 511L602.9 501.6L604.7 501.5L600.8 496.4L597.4 501.8L599.2 501.7L599.5 511.1ZM748.4 511.7L749.7 498.2L751.7 498.4L748.1 492.1L743.4 497.7L745.4 497.9L744.2 511.3ZM688.4 513.9L688.9 502.8L690.6 502.9L687.4 497.8L683.7 502.5L685.4 502.6L684.9 513.7ZM640.9 515.1L640.7 505.4L642.4 505.4L638.9 500.6L635.7 505.5L637.3 505.4L637.5 515.2ZM666.4 515.3L666.3 503.6L668 503.6L664.4 498.6L661 503.7L662.7 503.7L662.8 515.3ZM713.8 515.4L714.2 507.2L715.9 507.3L712.7 502.3L709.1 507L710.8 507.1L710.3 515.2ZM752.1 516L753.4 505.2L755.4 505.4L752.1 499.4L747.6 504.5L749.5 504.7L748.2 515.6ZM651.1 517.4L651.1 508.6L652.7 508.6L649.4 503.8L646 508.6L647.7 508.6L647.7 517.4ZM735.9 519.3L736.6 512.2L738.6 512.3L735.1 506.2L730.5 511.6L732.5 511.8L731.8 518.9ZM728.9 519.6L729.4 508.9L731.1 509L727.8 503.7L724 508.6L725.8 508.7L725.3 519.4ZM692.5 524.1L692.7 517.2L694.6 517.2L690.8 511.5L686.8 517L688.7 517.1L688.5 524ZM574.7 526.3L573.9 517.9L575.5 517.8L571.7 513.3L568.8 518.4L570.5 518.2L571.3 526.6ZM689.5 530.6L689.7 522.5L691.5 522.5L687.9 517.2L684.1 522.4L685.9 522.4L685.8 530.6Z"/><path fill="#e56a60" d="M623 318.6L623 310.4L624.9 310.4L620.9 304.6L616.9 310.4L618.9 310.4L618.9 318.7ZM675.9 320.7L676.1 309.2L677.9 309.2L674.4 304L670.6 309.1L672.4 309.1L672.2 320.6ZM734.5 350.4L735.5 342L737.2 342.2L734.4 336.9L730.4 341.4L732 341.6L731 350ZM743.3 358.1L744.2 350.8L746.2 351.1L743 344.9L738.3 350L740.2 350.3L739.3 357.6Z"/><path fill="#e66e5b" d="M663.3 304.6L663 291L665 290.9L660.8 285.2L656.9 291.1L658.9 291L659.2 304.7ZM663.1 329.7L663.4 316.4L665.5 316.5L661.4 310.4L657.1 316.3L659.2 316.3L658.8 329.6ZM599.9 343L598.9 330.5L601 330.4L596.4 324.7L592.7 331L594.7 330.8L595.6 343.3ZM720.7 345.5L721.9 334.2L723.6 334.4L720.6 329.1L716.6 333.7L718.4 333.9L717.2 345.2Z"/><path fill="#e87256" d="M657 312.2L657.2 300.9L659.2 300.9L655.3 295.1L651.2 300.7L653.1 300.8L652.9 312.1ZM627.6 331.1L627.4 321.3L629 321.2L625.6 316.6L622.4 321.4L624 321.3L624.3 331.2ZM617 361.4L616.8 351.6L618.9 351.5L614.6 345.7L610.6 351.7L612.6 351.6L612.8 361.5ZM720.9 366.7L721.8 354.7L723.6 354.8L720.4 349.3L716.3 354.3L718.1 354.4L717.1 366.4ZM727.8 371.8L728.6 363.3L730.4 363.4L727.3 358L723.2 362.7L725 362.9L724.2 371.5ZM603.3 372.8L602.7 363.6L604.6 363.4L600.4 358.3L597 363.9L598.8 363.8L599.4 373ZM737.8 387.9L738.8 378.2L740.8 378.4L737.5 372.4L732.9 377.6L734.8 377.8L733.8 387.5ZM556.6 393.9L554.5 382L556.5 381.6L551.4 376.6L548.3 383.1L550.3 382.7L552.5 394.6ZM535.6 426.3L533.7 416L535.5 415.7L530.9 411.1L528.2 417L530 416.7L531.8 427Z"/><path fill="#ea7652" d="M662.6 342.8L662.6 330.9L664.4 330.9L660.6 325.6L656.9 331L658.8 331L658.8 342.8ZM643.4 351L643.1 337.4L645.1 337.4L641 331.7L637.1 337.5L639.1 337.5L639.3 351.1ZM711.1 354.2L711.5 341.7L713.4 341.8L709.8 336.3L705.9 341.5L707.8 341.6L707.3 354ZM612.6 356.6L612.3 350.2L613.9 350.1L610.5 345.6L607.4 350.4L609 350.3L609.3 356.7ZM599.6 372.2L598.5 358.6L600.6 358.4L595.9 352.8L592.2 359.1L594.3 358.9L595.4 372.5ZM718 388.8L718.8 379.3L720.4 379.5L717.6 374.7L714 378.9L715.6 379.1L714.8 388.5ZM577.6 392.2L576.9 383.8L578.6 383.6L574.7 379.1L571.8 384.3L573.4 384.1L574.2 392.5ZM575.7 394L574.4 383.3L576.3 383.1L571.6 377.9L568.3 384.1L570.3 383.9L571.6 394.5ZM732.5 402.1L734.3 388.3L736.3 388.5L733 382.1L728.1 387.4L730.1 387.7L728.3 401.5ZM750.7 421.2L751.5 415.1L753.1 415.3L750.4 410.2L746.5 414.5L748.1 414.7L747.4 420.8ZM534.3 438.1L533.1 430.8L534.9 430.5L530.3 425.9L527.5 431.8L529.3 431.5L530.6 438.8ZM523.8 474.7L521.7 464.7L523.6 464.3L518.4 459.4L515.6 466L517.6 465.5L519.7 475.6Z"/><path fill="#eb7a4d" d="M668.4 334.9L668.7 325.1L670.4 325.2L667.1 320.3L663.6 325L665.3 325.1L665 334.8ZM621.3 352.9L620.8 343.2L622.4 343.2L618.9 338.6L615.8 343.5L617.4 343.4L617.9 353.1ZM623.3 360.4L622.9 349.9L624.6 349.9L621 345.2L617.9 350.1L619.5 350.1L619.9 360.5ZM631 362.6L630.9 355.7L632.6 355.6L629 350.7L625.6 355.8L627.3 355.7L627.5 362.6ZM682.8 363L683.2 350L685.2 350L681.4 344.1L677.2 349.8L679.1 349.8L678.7 362.8ZM715.1 365.4L715.8 357.8L717.4 357.9L714.6 352.9L710.8 357.3L712.4 357.5L711.7 365.1ZM697.1 370.8L697.6 363.1L699.3 363.2L696.2 358.2L692.6 362.8L694.2 362.9L693.7 370.6ZM665.3 376.5L665.3 366.5L667.2 366.5L663.4 361L659.5 366.5L661.4 366.5L661.3 376.5ZM606 387.6L605.7 380.3L607.6 380.2L603.4 374.8L599.8 380.6L601.7 380.5L602.1 387.8ZM721.2 390.5L722 378.1L723.9 378.2L720.5 372.4L716.2 377.7L718.1 377.8L717.2 390.2ZM585.6 390.2L584.9 383.8L586.7 383.6L582.4 378.8L579.3 384.4L581.1 384.2L581.9 390.6ZM721.4 402.3L722 392L723.9 392.1L720.4 386.4L716.3 391.7L718.1 391.8L717.5 402ZM554.9 414L553.6 407.4L555.5 407L550.8 402.4L548.1 408.4L549.9 408.1L551.1 414.7ZM752.7 421.3L753.9 412.3L755.9 412.5L752.6 406.3L747.9 411.5L749.8 411.7L748.6 420.8ZM569.9 421.8L569 414L570.6 413.8L566.9 409.6L564.2 414.5L565.7 414.3L566.6 422.1ZM555.4 421.7L553.9 411.3L555.7 411.1L551.4 406.5L548.6 412.1L550.3 411.8L551.8 422.2ZM574.5 423.8L573.4 415L575.5 414.8L570.6 409.4L567.2 415.8L569.2 415.5L570.3 424.3ZM754 432.3L754.9 424.9L756.7 425.1L753.6 419.5L749.4 424.3L751.2 424.5L750.3 431.8ZM531.5 435.7L529.3 424.1L531.2 423.8L526.4 419.1L523.6 425.2L525.5 424.9L527.7 436.4ZM549 448L547.2 436L549.1 435.8L544.5 430.8L541.4 436.9L543.3 436.6L545.1 448.6ZM547.2 449.6L546.1 441.7L548 441.4L543.3 436.4L540.2 442.5L542.1 442.3L543.3 450.2ZM772.1 451.9L773.7 441.5L775.7 441.8L772.6 435.5L767.8 440.5L769.7 440.8L768.1 451.3ZM531.5 453.6L529.8 445.2L531.7 444.8L526.7 440L523.9 446.4L525.8 446L527.5 454.4ZM771.6 474.7L774 461.5L776.1 461.9L773 455.3L767.8 460.4L769.9 460.7L767.4 474Z"/><path fill="#ec7e48" d="M604 391.9L603.5 384.1L605.1 384L601.5 379.6L598.6 384.4L600.2 384.3L600.7 392.1ZM636.1 392.7L635.9 384.3L637.4 384.2L634.2 379.8L631.2 384.4L632.7 384.4L632.9 392.8ZM616.5 407.2L615.9 398.9L617.5 398.8L614 394.4L611.1 399.2L612.6 399.1L613.2 407.4ZM717 413.1L718.1 401.5L719.8 401.7L716.7 396.3L712.7 401L714.5 401.2L713.4 412.7ZM565.9 420.6L565 413.2L566.6 413L562.7 408.8L560.1 413.9L561.7 413.7L562.6 421ZM757 423.3L758.1 415.1L759.8 415.3L757 409.8L752.8 414.4L754.5 414.6L753.4 422.9ZM566.1 427L564.6 415.8L566.5 415.5L561.9 410.6L558.8 416.6L560.7 416.3L562.2 427.5ZM537.7 456.9L536.4 448.8L538.2 448.5L533.8 444L531 449.6L532.8 449.3L534.1 457.5ZM764 486.2L764.8 480.1L766.6 480.3L763.8 474.8L759.6 479.3L761.3 479.6L760.4 485.7Z"/><path fill="#ee8244" d="M644.6 354.6L644.5 346.6L646.6 346.6L642.3 340.7L638.3 346.7L640.3 346.7L640.4 354.6ZM665.9 357.8L665.9 350.1L667.6 350.1L664 344.9L660.4 350.1L662.2 350.1L662.2 357.8ZM632.8 373.7L632.4 364.2L634.1 364.1L630.5 359.3L627.2 364.4L628.9 364.3L629.2 373.8ZM659.9 380.2L659.9 371.8L661.6 371.8L658.1 366.9L654.7 371.8L656.4 371.8L656.5 380.3ZM633.2 381.6L633.1 375.1L634.7 375.1L631.5 370.7L628.4 375.2L630 375.2L630.1 381.7ZM607.8 386.5L607.5 377.2L609.3 377.2L605.4 372L601.9 377.4L603.7 377.4L604.1 386.7ZM697.5 409.3L697.9 402.5L699.7 402.6L696.5 397.4L692.6 402.2L694.3 402.3L693.9 409.1ZM736.7 409.7L737.9 400.2L739.5 400.4L736.9 395.5L733.2 399.6L734.7 399.8L733.5 409.3ZM690.5 412.5L690.8 404.9L692.6 405L689.2 399.8L685.5 404.7L687.2 404.8L686.9 412.3ZM718.6 417.1L719.1 406L720.8 406.1L717.6 401L714 405.7L715.7 405.8L715.1 416.9ZM572.2 431.4L571.2 422.1L572.9 421.9L568.9 417.3L565.9 422.7L567.6 422.5L568.7 431.8ZM602.6 432.2L602.3 425.7L603.8 425.6L600.5 421.3L597.6 425.9L599.1 425.8L599.4 432.3ZM642.4 434.1L642.2 423.9L644.1 423.8L640.1 418.4L636.3 424L638.3 424L638.5 434.2ZM735.1 439.9L736 429.4L738.1 429.6L734.5 423.4L729.9 428.9L731.9 429.1L730.9 439.5ZM747.9 441.7L749.8 429.5L751.6 429.7L748.7 424L744.3 428.6L746.1 428.9L744.3 441.1ZM623.1 443.7L622.8 434.3L624.6 434.2L620.7 429L617.1 434.5L619 434.4L619.3 443.8ZM746.3 446.1L747.5 437.7L749.1 437.9L746.6 433L742.8 437L744.3 437.3L743.2 445.6ZM573.1 447.3L572.1 436.5L573.7 436.4L569.9 432L567.1 437L568.7 436.9L569.8 447.7ZM665.4 447.7L665.3 438.9L667.2 438.9L663.4 433.4L659.6 438.9L661.5 438.9L661.5 447.7ZM588 448.5L587.4 437.2L589.2 437.1L585.3 432.1L581.9 437.5L583.7 437.4L584.4 448.7ZM662.1 449.4L662.2 438.3L664.2 438.3L660.1 432.3L655.9 438.2L657.9 438.2L657.8 449.4ZM578 449.5L576.6 437.6L578.5 437.4L573.9 432.2L570.6 438.3L572.6 438.1L573.9 449.9ZM735.7 456.5L737 446.4L739 446.6L735.6 440.3L730.8 445.6L732.8 445.8L731.6 456ZM583.6 457.7L582.8 445.7L584.5 445.6L580.6 440.8L577.4 446.1L579.2 446L580 458ZM626.8 459.6L626.7 452.7L628.4 452.7L625 448L621.7 452.8L623.4 452.8L623.4 459.6ZM706.7 460.7L707.3 448.2L709.2 448.2L705.5 442.6L701.4 447.9L703.3 448L702.8 460.5ZM644.7 463.6L644.5 456.9L646.2 456.9L642.7 452.3L639.5 457.1L641.2 457L641.4 463.7ZM718.9 470.2L719.6 462.8L721.2 462.9L718.3 457.9L714.5 462.3L716.2 462.5L715.5 469.9ZM608.4 472.4L607.8 460L609.7 459.9L605.5 454.5L601.9 460.3L603.8 460.2L604.4 472.6ZM595.5 487.4L595.3 480.1L596.8 480L593.5 475.6L590.5 480.2L592.1 480.1L592.3 487.5ZM671.9 494.8L672.1 486.3L673.9 486.3L670.4 481.2L666.7 486.2L668.5 486.2L668.3 494.7ZM557.5 503.8L556.4 493.1L558.4 492.9L553.7 487.5L550.2 493.8L552.2 493.5L553.3 504.3ZM610.8 508.6L610.6 497.7L612.6 497.7L608.4 491.9L604.4 497.9L606.4 497.8L606.7 508.7ZM687.4 511L687.8 503.2L689.4 503.3L686.5 498.6L683.1 502.9L684.6 503L684.2 510.8ZM546.5 512.5L545.6 504.3L547.5 504.1L542.9 498.9L539.6 505L541.6 504.8L542.5 513ZM682.9 515.8L683.2 506.2L685.3 506.3L681.3 500.2L677 506L679 506.1L678.7 515.6ZM620.7 517.3L620.7 508.9L622.5 508.9L618.8 503.8L615.2 509L617 509L617.1 517.3ZM722.9 520.4L723.5 511.4L725.2 511.5L722 506.2L718.2 511L719.9 511.1L719.3 520.2ZM641.7 529L641.9 517.8L643.6 517.8L640.2 512.8L636.6 517.7L638.4 517.7L638.2 528.9Z"/><path fill="#f0863f" d="M678.3 374.6L678.5 365.9L680.3 366L676.8 360.8L673.2 365.8L674.9 365.8L674.7 374.5ZM689 381.9L689.2 373.2L691 373.2L687.4 367.8L683.5 373.1L685.4 373.1L685.2 381.9ZM676.6 400.5L676.8 387.7L678.7 387.8L674.9 382.2L670.9 387.6L672.9 387.7L672.7 400.4ZM639.8 405L639.7 397.4L641.5 397.4L637.9 392.4L634.4 397.5L636.1 397.5L636.2 405ZM634.9 408.8L634.8 399.8L636.5 399.7L632.9 394.8L629.5 399.8L631.2 399.8L631.4 408.8ZM654.9 416.7L655.1 406.2L656.6 406.3L653.5 401.7L650.3 406.2L651.9 406.2L651.7 416.6ZM624.1 418.5L623.6 409.1L625.3 409L621.5 404.1L618.2 409.4L620 409.3L620.5 418.7ZM661.5 419L661.3 407.7L663.1 407.7L659.4 402.7L656 407.8L657.7 407.8L658 419.1ZM692.7 424.1L692.9 413.8L694.8 413.8L691.1 408.2L687.1 413.6L689 413.7L688.8 424ZM622.7 433.8L622.5 425.7L624.2 425.7L620.5 420.7L617.1 425.8L618.9 425.8L619.1 433.9ZM589.3 435.3L588.7 426.6L590.7 426.5L586.3 420.9L582.6 427L584.6 426.9L585.2 435.6ZM640.7 441.1L640.9 432.3L642.9 432.3L638.9 426.4L634.7 432.2L636.7 432.2L636.6 441ZM709.3 442.9L709.7 435.1L711.4 435.1L708.1 429.9L704.4 434.8L706.1 434.9L705.7 442.7ZM575.7 444.6L574.6 432.9L576.5 432.7L572 427.4L568.5 433.5L570.5 433.3L571.7 445ZM734.3 449.7L735.2 441.4L737.2 441.6L733.7 435.2L728.9 440.7L730.9 440.9L730.1 449.2ZM643.5 449.9L643.5 439.6L645.4 439.6L641.7 434.4L638 439.6L639.8 439.6L639.8 449.9ZM700.9 451.5L701.3 443L703.3 443.1L699.4 437L695 442.7L697 442.8L696.7 451.3ZM632.4 457L632.5 447L634.2 447.1L630.8 442.2L627.3 447L629 447L629 457ZM716.1 457.7L716.8 446L718.6 446.1L715.2 440.6L711.2 445.6L713 445.7L712.3 457.4ZM688.2 457.9L688.2 449L690.1 449L686.3 443.5L682.4 449L684.3 449L684.3 457.9ZM713.7 460.2L714.2 449.4L716.1 449.5L712.6 444.1L708.6 449.2L710.5 449.3L710 460.1ZM623 464.9L622.5 452.4L624.6 452.3L620.2 446.6L616.4 452.6L618.4 452.5L618.9 465.1ZM722.6 467.2L723.5 457L725.1 457.1L722.2 452.2L718.5 456.5L720.2 456.7L719.2 466.9ZM701.3 467.6L701.6 458.8L703.4 458.9L699.9 453.6L696.2 458.6L698 458.7L697.7 467.5ZM629.4 470.1L629.4 461.9L631.4 461.9L627.4 456.1L623.4 461.9L625.3 461.9L625.3 470.1ZM724.8 470.9L725.9 458.8L727.9 459L724.3 452.7L719.6 458.3L721.7 458.5L720.6 470.5ZM655.6 471.8L655.5 464.6L657.3 464.6L653.7 459.6L650.2 464.7L652 464.7L652.1 471.8ZM731.1 476.4L732.1 467L734.2 467.2L730.6 460.9L725.9 466.4L727.9 466.6L727 476ZM557.1 477L556.2 468.8L558 468.6L553.9 463.9L550.8 469.4L552.6 469.2L553.5 477.4ZM705.1 481.2L705.3 473.7L707.2 473.8L703.5 468.1L699.4 473.6L701.3 473.6L701.1 481.1ZM703.4 483.2L703.6 477.7L705.2 477.8L702.2 473.2L698.9 477.5L700.5 477.6L700.3 483.1ZM628.3 487.3L628.2 476.9L629.9 476.8L626.5 472.1L623.2 476.9L624.8 476.9L624.9 487.4ZM642.5 490.4L642.2 480L644 479.9L640.3 474.9L636.8 480.1L638.6 480.1L638.9 490.5ZM682.3 496.6L682.4 486.7L684.4 486.7L680.4 480.8L676.2 486.6L678.2 486.6L678.1 496.5ZM645 500.7L645.1 492.7L646.9 492.7L643.3 487.5L639.6 492.6L641.4 492.6L641.3 500.6ZM613 506.4L612.4 495L614.3 494.9L610.3 489.8L606.9 495.2L608.7 495.1L609.2 506.6ZM696 506.6L696.3 497.7L698.3 497.8L694.6 492.1L690.5 497.5L692.4 497.6L692 506.4ZM664.9 506.8L665.1 499.4L667.1 499.5L663.3 493.6L659 499.2L661 499.3L660.7 506.6ZM560.1 507.9L559.3 499.1L561.4 498.9L556.7 493.3L553 499.6L555.1 499.4L555.8 508.3ZM668.8 508.9L668.8 501.3L670.8 501.2L666.7 495.4L662.6 501.3L664.6 501.3L664.7 508.9ZM615.3 509.4L615.2 499.5L617.1 499.5L613.2 494L609.4 499.6L611.3 499.5L611.4 509.5ZM560.2 510.8L558.7 497.3L560.8 497.1L556 491.6L552.5 497.9L554.5 497.7L556 511.2ZM635.7 515L635.3 503.4L637.3 503.4L633.2 497.8L629.3 503.6L631.3 503.5L631.6 515.1ZM584.8 516.2L584.2 508.2L586.2 508.1L581.7 502.6L578.1 508.7L580.1 508.5L580.7 516.5ZM552.6 517.1L551.1 505.4L552.9 505.2L548.7 500.5L545.7 506.1L547.5 505.8L548.9 517.5ZM633.9 519.9L634 509.1L635.6 509.1L632.4 504.4L629.1 509L630.7 509L630.6 519.9ZM729.6 524.7L730.1 517.4L731.9 517.6L728.5 512.1L724.5 517.1L726.3 517.2L725.9 524.5Z"/><path fill="#f18a3a" d="M651.1 384.7L651.3 373.7L653.2 373.7L649.5 368.2L645.5 373.6L647.4 373.6L647.2 384.6ZM686.1 398.4L686.5 388L688.2 388.1L685 383.1L681.4 387.8L683.1 387.9L682.7 398.2ZM644.7 399L644.6 385.1L646.6 385L642.4 379.1L638.3 385.1L640.3 385.1L640.4 399.1ZM632.5 411.9L632.2 403.2L633.9 403.1L630.3 398.5L627.1 403.4L628.8 403.3L629.1 412ZM607.9 412L607.5 403.9L609.5 403.9L605.1 398.3L601.3 404.2L603.4 404.1L603.7 412.2ZM641.5 415.6L641.1 404.3L642.9 404.3L639.2 399.3L635.8 404.5L637.6 404.5L638 415.7ZM651.6 422.5L651.4 412.8L653.2 412.7L649.3 407.4L645.6 412.9L647.5 412.9L647.7 422.6ZM632.2 422.6L632.2 414.2L633.9 414.2L630.5 409.4L627.1 414.2L628.8 414.2L628.7 422.6ZM638.3 424.1L637.9 411.9L640 411.8L635.6 406L631.7 412.1L633.7 412L634.1 424.2ZM634 424.9L633.8 414.3L635.4 414.3L632.1 409.8L629 414.4L630.5 414.4L630.8 425ZM682.1 425.6L682.4 416.8L684.4 416.9L680.6 411.1L676.5 416.6L678.4 416.7L678.1 425.4ZM638.9 433.4L638.7 424.6L640.7 424.6L636.4 418.8L632.4 424.8L634.5 424.8L634.7 433.5ZM720.2 438.9L721.3 426.4L723.3 426.6L719.7 420.4L715.1 425.9L717.1 426.1L716 438.5ZM627.9 443.2L628 434.2L629.8 434.2L626.1 429L622.4 434.2L624.2 434.2L624.2 443.2ZM719.8 444.3L720.6 436.2L722.2 436.4L719.5 431.5L715.9 435.7L717.4 435.9L716.6 444ZM658.1 446.7L658 437.1L659.9 437.1L656.1 431.8L652.3 437.2L654.2 437.2L654.3 446.8ZM686.9 447.2L687.1 438.8L688.7 438.8L685.5 434.1L682.1 438.7L683.7 438.7L683.6 447.1ZM644.9 447.8L644.6 437.2L646.4 437.1L642.6 432L639.1 437.3L640.9 437.3L641.1 447.9ZM644.5 448.7L644.3 437.5L646.4 437.5L642 431.6L638 437.7L640 437.6L640.3 448.8ZM684.3 449.5L684.4 440L686.3 440L682.7 434.7L678.9 439.9L680.7 439.9L680.5 449.4ZM713.7 456.2L714.5 447.5L716 447.6L713.3 442.8L709.7 447L711.2 447.2L710.5 455.9ZM668 464.5L668.3 457.8L670 457.9L666.6 452.7L663 457.6L664.7 457.7L664.5 464.4ZM569 464.8L568.1 453.7L569.8 453.6L565.9 449L562.9 454.2L564.6 454L565.5 465.1ZM641.8 468.5L641.9 460.4L643.9 460.5L639.9 454.5L635.6 460.3L637.7 460.4L637.6 468.4ZM723.8 468.7L725 456.1L726.9 456.3L723.5 450.2L718.9 455.6L720.9 455.8L719.7 468.3ZM549 469.3L548 462.4L549.8 462.1L545.3 457.5L542.4 463.3L544.2 463L545.3 469.9ZM737.4 470.4L738.3 460.4L739.9 460.5L736.9 455.4L733.2 460L734.8 460.1L734 470.1ZM586.8 471.9L586.4 464.7L588.1 464.6L584.4 459.9L581.2 465L582.9 464.9L583.3 472.1ZM615.4 472.5L615 464.4L616.7 464.3L613 459.4L609.6 464.6L611.4 464.5L611.8 472.6ZM659.7 477.6L659.6 464.8L661.6 464.7L657.4 458.9L653.4 464.8L655.4 464.8L655.5 477.6ZM552.1 477.6L551.1 469.9L552.9 469.7L548.5 464.8L545.5 470.6L547.3 470.4L548.3 478.1ZM715.7 478.8L716.4 471.1L718.2 471.2L715 465.7L710.9 470.6L712.7 470.7L712 478.5ZM582.2 481.5L581.8 474.9L583.6 474.8L579.4 469.6L576 475.3L577.9 475.2L578.4 481.7ZM660.1 482.6L660.2 473.1L662 473.1L658.5 468L654.8 473L656.6 473.1L656.5 482.5ZM700.6 483.1L700.9 472.5L702.7 472.6L699.1 467.1L695.1 472.4L697 472.5L696.8 483ZM728.5 483.8L729.7 473.8L731.6 474L728.3 468L723.8 473.1L725.7 473.4L724.6 483.4ZM677.8 484.1L678.2 474.8L680 474.9L676.6 469.5L672.8 474.5L674.6 474.6L674.2 483.9ZM605.2 485.3L604.5 473.9L606.3 473.8L602.2 468.7L598.9 474.2L600.7 474.1L601.4 485.5ZM562.5 487.6L561.2 476.4L563.3 476.2L558.5 470.8L555 477.1L557.1 476.9L558.3 488.1ZM708.9 489.1L709.6 478.2L711.5 478.4L708 472.6L703.8 477.9L705.7 478L704.9 488.9ZM668.8 489.4L668.9 478L670.9 478.1L666.8 472.1L662.6 478L664.6 478L664.6 489.3ZM698.5 490.4L699 478L701.1 478.1L697.2 472L692.8 477.8L694.8 477.8L694.3 490.3ZM680.8 493.4L680.9 484.1L682.7 484.1L679.1 478.9L675.4 484.1L677.2 484.1L677.1 493.4ZM679.5 493.8L679.8 484.7L681.7 484.7L678.2 479.3L674.3 484.4L676.1 484.5L675.7 493.6ZM626 494.6L626 483.3L627.9 483.3L623.9 477.7L620 483.4L621.9 483.4L622 494.6ZM628.8 495.3L628.9 487.9L630.9 488L626.8 482L622.6 487.9L624.7 487.9L624.6 495.2ZM708.1 495.3L708.5 487.6L710.1 487.7L707.2 483L703.8 487.3L705.4 487.4L704.9 495.2ZM619.4 495.7L619.2 488.8L620.9 488.8L617.2 483.8L613.8 489L615.6 488.9L615.7 495.8ZM648.9 499.8L648.7 488L650.5 487.9L646.9 483L643.4 488.1L645.2 488L645.4 499.9ZM604.6 500.8L604.4 491.8L606 491.8L602.7 487.3L599.6 491.9L601.2 491.9L601.4 500.9ZM640.1 501.1L639.9 493.6L641.9 493.6L637.8 488L633.9 493.7L635.9 493.7L636 501.2ZM746 501.5L746.8 494.9L748.6 495.1L745.7 489.6L741.5 494.2L743.2 494.5L742.4 501.1ZM725.4 503.3L726.3 491L728.2 491.2L724.8 485.5L720.6 490.6L722.5 490.7L721.5 503ZM717.6 506.2L718.6 494.5L720.4 494.6L717.1 488.9L712.9 494L714.7 494.2L713.7 505.8ZM635.3 507.3L635.1 498.6L636.8 498.6L633.2 493.7L629.8 498.7L631.5 498.7L631.7 507.4ZM631.5 507.5L631.3 498.4L633 498.3L629.4 493.5L626 498.5L627.7 498.5L628 507.6ZM574.8 508L574.4 500.3L576 500.2L572.3 495.5L569.2 500.6L570.9 500.5L571.3 508.2ZM581.6 508.3L580.7 497L582.7 496.9L578.3 491.4L574.7 497.5L576.7 497.3L577.5 508.6ZM683.8 508.8L683.9 498.8L685.5 498.9L682.3 494.2L679 498.8L680.6 498.8L680.5 508.7ZM558.6 510.1L557.9 502L559.7 501.8L555.6 496.9L552.4 502.5L554.2 502.3L554.9 510.5ZM659 510.4L659 500.9L660.6 500.9L657.4 496.3L654.2 500.9L655.8 500.9L655.8 510.4ZM631.8 510.5L631.8 504.6L633.4 504.6L630.1 499.9L626.8 504.6L628.4 504.6L628.4 510.5ZM656.8 510.7L657 503.1L659 503.1L655.2 497.4L651 502.9L653 503L652.8 510.5ZM582.3 510.7L581.8 501.2L583.6 501.1L579.7 496.1L576.4 501.4L578.2 501.3L578.7 510.8ZM702.2 514.1L702.6 504.7L704.3 504.8L701.1 499.7L697.4 504.5L699.1 504.6L698.7 514ZM595.7 514.6L595.2 507.1L596.9 507L593.3 502.5L590.2 507.4L591.9 507.3L592.3 514.8ZM731.9 519L733 507.3L735 507.5L731.5 501.4L726.9 506.7L728.9 506.9L727.8 518.6ZM694.1 520L694.4 512.7L696.2 512.8L692.8 507.4L688.9 512.5L690.7 512.6L690.4 519.8ZM612.7 520.8L612.3 512.3L614 512.2L610.3 507.4L607 512.5L608.7 512.4L609.1 520.9ZM571 525.8L570.1 515.4L571.8 515.2L567.9 510.7L565 515.8L566.6 515.7L567.5 526.1ZM710.5 526.6L710.7 519.9L712.6 519.9L709 514.3L704.9 519.6L706.8 519.7L706.6 526.5ZM618.6 527.9L618.4 517.3L620.2 517.3L616.4 512.1L612.7 517.5L614.6 517.4L614.8 528ZM674.2 528L674.3 519.7L676 519.7L672.7 514.8L669.2 519.6L670.9 519.6L670.7 528Z"/></g>
<path d="M570.4 218.3L581.2 231.5" stroke="#f0f921" stroke-width="1" fill="none"/>
</svg>
</div>
<!-- canvas/dims splitter grip -->
<svg class="abs" style="left:654px;top:670px" width="17" height="2" viewBox="0 0 17 2"><g fill="#9b9da1"><rect x="0" width="2" height="2"/><rect x="3" width="2" height="2"/><rect x="6" width="2" height="2"/><rect x="9" width="2" height="2"/><rect x="12" width="2" height="2"/><rect x="15" width="2" height="2"/></g></svg>

<!-- ===== dims slider row ===== -->
<div class="t" style="left:332px;top:679px;font-size:11px">-3</div>
<div class="abs" style="left:353px;top:678px;width:15px;height:15px;background:#414851;border-radius:2px">
  <svg width="15" height="15" viewBox="0 0 15 15"><path d="M3.6 3 L10.2 7.6 L3.6 12.2Z" fill="#d6d7d9"/><path d="M13.6 9.4 V13.6 H9Z" fill="#d6d7d9"/></svg>
</div>
<div class="abs" style="left:372px;top:678px;width:13px;height:15px;background:#414851;border-radius:2px">
  <svg width="13" height="15" viewBox="0 0 13 15"><path d="M3.1 3.2 H4.9 V11.8 H3.1Z M10.2 3.2 V11.8 L4.9 7.5Z" fill="#d6d7d9"/></svg>
</div>
<div class="abs" style="left:388px;top:678px;width:559px;height:15px;background:#414851;border-radius:2px"></div>
<div class="abs" style="left:798px;top:678px;width:37px;height:15px;background:#6a7380;border-radius:2px"></div>
<div class="abs" style="left:950px;top:678px;width:13px;height:15px;background:#414851;border-radius:2px">
  <svg width="13" height="15" viewBox="0 0 13 15"><path d="M8.1 3.2 H9.9 V11.8 H8.1Z M2.8 3.2 V11.8 L8.1 7.5Z" fill="#d6d7d9"/></svg>
</div>
<div class="t" style="left:969.5px;top:679px;font-size:11px;color:#8e9398">11</div>
<div class="abs" style="left:989px;top:679px;width:1px;height:14px;background:#6a7380"></div>
<div class="t" style="left:996.5px;top:679.5px;font-size:11px;color:#8e9398">14</div>

<!-- activity button -->
<svg class="abs" style="left:920.8px;top:712.3px" width="7.6" height="4.4" viewBox="0 0 7.6 4.4"><path d="M0 4.4 L3.8 0 L7.6 4.4Z" fill="#c3c5c8"/></svg>
<div class="t" style="left:932.5px;top:708px;font-size:12.6px">activity</div>

</body>
</html>
